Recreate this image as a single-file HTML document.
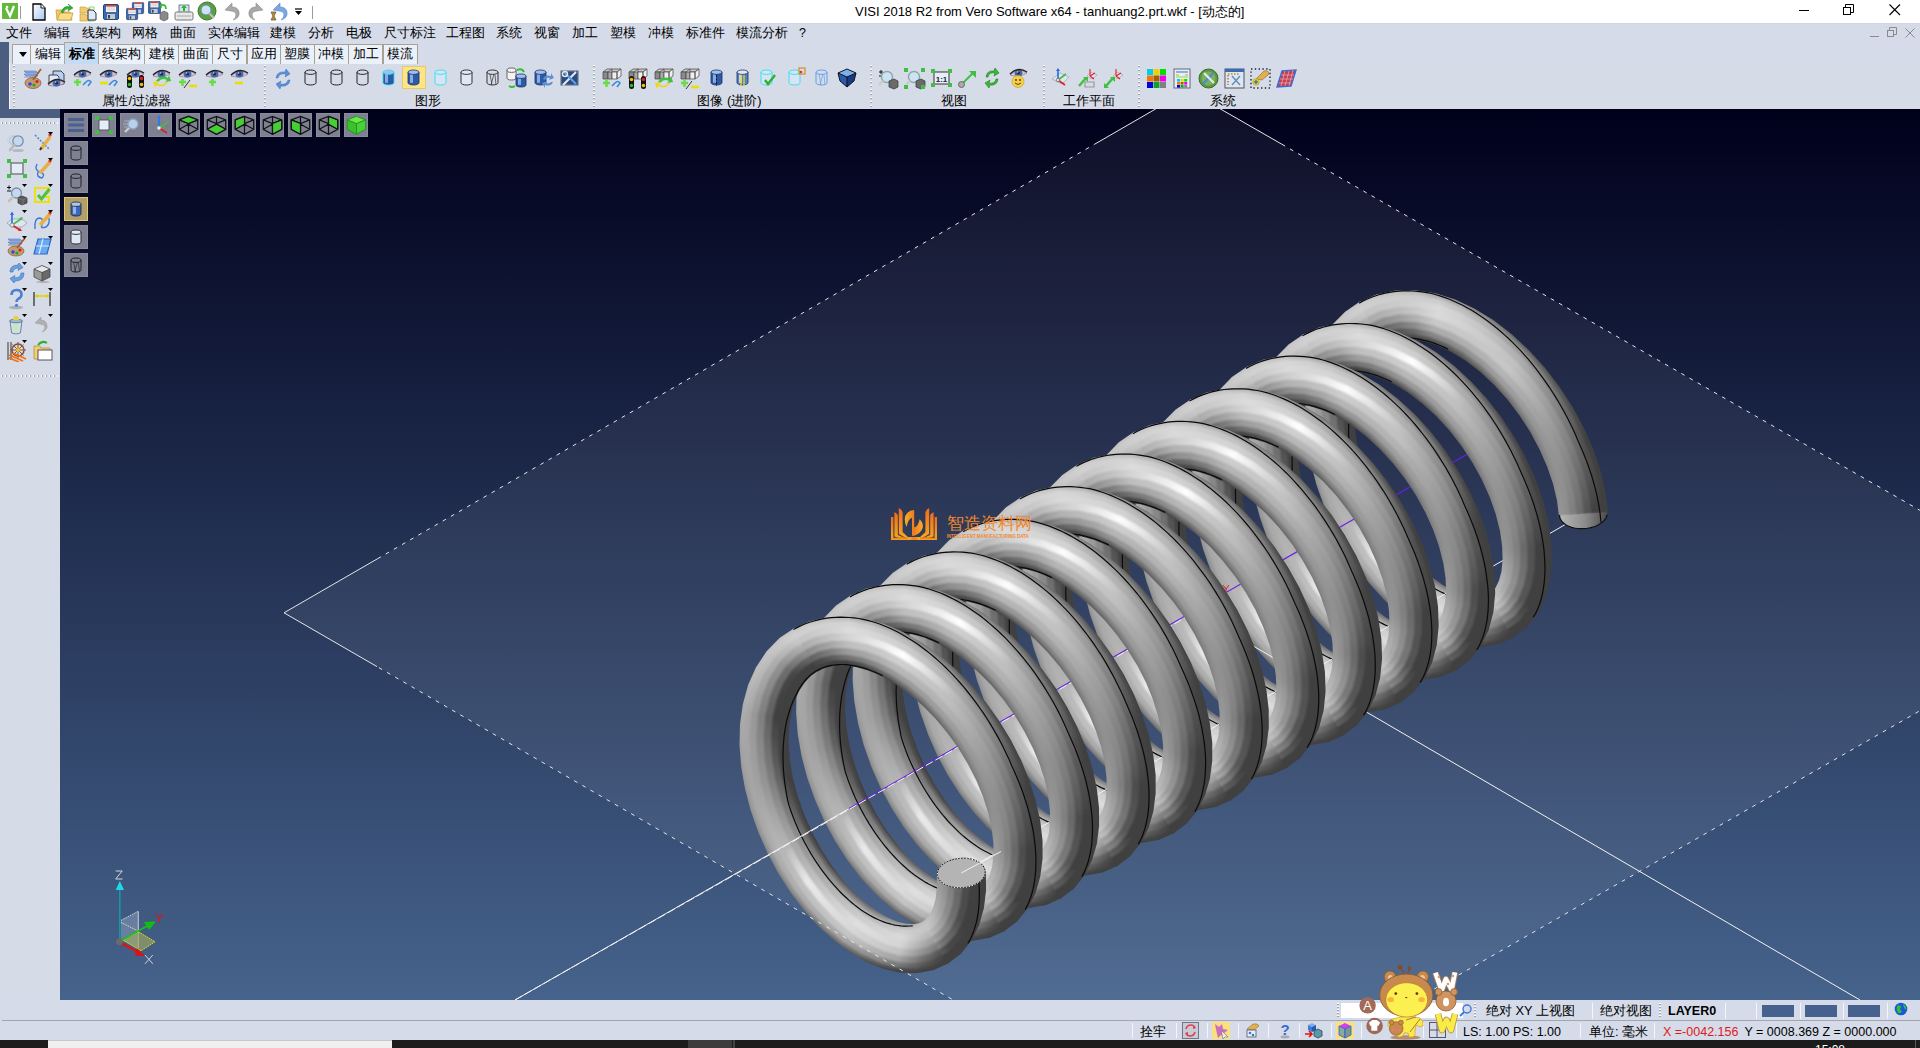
<!DOCTYPE html>
<html><head><meta charset="utf-8"><style>
*{margin:0;padding:0;box-sizing:border-box}
html,body{width:1920px;height:1048px;overflow:hidden;background:#d5dbe8;font-family:"Liberation Sans", sans-serif;font-size:12px;color:#000}
.a{position:absolute}
.t{white-space:nowrap;line-height:14px}
</style></head><body>
<div class="a" style="left:0;top:0;width:1920px;height:23px;background:#fff"></div><div class="a" style="left:0;top:23px;width:1920px;height:1px;background:#d0d6e4"></div><svg class="a" style="left:2px;top:3px" width="16" height="16" viewBox="0 0 16 16"><rect width="16" height="16" fill="#62b83a"/><path d="M4 5 L8 13 L12 3" fill="none" stroke="#fff" stroke-width="2.2"/><circle cx="5" cy="4" r="1.3" fill="#fff"/></svg><div class="a" style="left:20px;top:6px;width:1px;height:13px;background:#9a9a9a"></div><svg class="a" style="left:32px;top:3px" width="15" height="18" viewBox="0 0 15 18"><defs><linearGradient id="pg" x1="0" y1="0" x2="1" y2="1"><stop offset="0" stop-color="#fff"/><stop offset="1" stop-color="#a8c4f0"/></linearGradient></defs><path d="M1 1 H9 L13 5 V17 H1Z" fill="url(#pg)" stroke="#000" stroke-width="1.3"/><path d="M9 1 V5 H13" fill="#fff" stroke="#000" stroke-width=".9"/></svg><svg class="a" style="left:55px;top:3px" width="19" height="19" viewBox="0 0 19 19"><path d="M1 7 H7 L8 9 H15 L17 17 H2Z" fill="#f0c860" stroke="#c8a040" stroke-width=".8"/><path d="M2 17 L5 10 H18 L16 17Z" fill="#f8dc88" stroke="#c8a040" stroke-width=".8"/><path d="M6 9 Q9 2 15 4 L13 1 L18 5 L13 8 L14 6 Q10 5 8 10Z" fill="#30b030" stroke="#208020" stroke-width=".5"/></svg><svg class="a" style="left:79px;top:3px" width="19" height="19" viewBox="0 0 19 19"><path d="M1 4 H6 L7 5 H11 V10 H1Z" fill="#f0cc70" stroke="#c8a040" stroke-width=".7"/><path d="M1 11 H6 L7 12 H11 V18 H1Z" fill="#f0cc70" stroke="#c8a040" stroke-width=".7"/><path d="M10 4 h5 v14 h-5" fill="none" stroke="#60d060" stroke-width=".8"/><path d="M9 7 H14 L17 10 V17 H9Z" fill="#dde8f8" stroke="#333" stroke-width="1"/></svg><svg class="a" style="left:103px;top:4px" width="16" height="16" viewBox="0 0 16 16"><g transform="translate(0 0) scale(1.0)"><rect x=".5" y=".5" width="15" height="15" rx="1.5" fill="#3c68b0" stroke="#24467e"/><rect x="3" y="1" width="10" height="7" fill="#f4f4f4"/><rect x="3" y="1" width="10" height="1.6" fill="#e04030"/><path d="M4 4h8M4 6h8" stroke="#bbb" stroke-width=".7"/><rect x="4" y="10" width="8" height="5" fill="#c8c8c8"/><rect x="5" y="11" width="2" height="3.5" fill="#345"/></g></svg><svg class="a" style="left:126px;top:2px" width="19" height="19" viewBox="0 0 19 19"><g transform="translate(6 0) scale(0.75)"><rect x=".5" y=".5" width="15" height="15" rx="1.5" fill="#3c68b0" stroke="#24467e"/><rect x="3" y="1" width="10" height="7" fill="#f4f4f4"/><rect x="3" y="1" width="10" height="1.6" fill="#e04030"/><path d="M4 4h8M4 6h8" stroke="#bbb" stroke-width=".7"/><rect x="4" y="10" width="8" height="5" fill="#c8c8c8"/><rect x="5" y="11" width="2" height="3.5" fill="#345"/></g><g transform="translate(0 6) scale(0.75)"><rect x=".5" y=".5" width="15" height="15" rx="1.5" fill="#3c68b0" stroke="#24467e"/><rect x="3" y="1" width="10" height="7" fill="#f4f4f4"/><rect x="3" y="1" width="10" height="1.6" fill="#e04030"/><path d="M4 4h8M4 6h8" stroke="#bbb" stroke-width=".7"/><rect x="4" y="10" width="8" height="5" fill="#c8c8c8"/><rect x="5" y="11" width="2" height="3.5" fill="#345"/></g></svg><svg class="a" style="left:148px;top:1px" width="21" height="21" viewBox="0 0 21 21"><g transform="translate(0 0) scale(0.8)"><rect x=".5" y=".5" width="15" height="15" rx="1.5" fill="#3c68b0" stroke="#24467e"/><rect x="3" y="1" width="10" height="7" fill="#f4f4f4"/><rect x="3" y="1" width="10" height="1.6" fill="#e04030"/><path d="M4 4h8M4 6h8" stroke="#bbb" stroke-width=".7"/><rect x="4" y="10" width="8" height="5" fill="#c8c8c8"/><rect x="5" y="11" width="2" height="3.5" fill="#345"/></g><path d="M13 4 Q18 3 18 8" fill="none" stroke="#30c030" stroke-width="1.8"/><path d="M11 5 l3 -3 v5z" fill="#30c030"/><path d="M12 12 l4 -2 l4 2 v6 l-4 2 l-4 -2z" fill="#8a8a8a" stroke="#555" stroke-width=".6"/></svg><svg class="a" style="left:174px;top:2px" width="20" height="20" viewBox="0 0 20 20"><rect x="5" y="3" width="10" height="8" fill="#cfe0f8" stroke="#666" stroke-width=".8"/><path d="M10 3 l-3 3 h2 v3 h2 v-3 h2z" fill="#20c020"/><rect x="1" y="10" width="18" height="8" rx="1.5" fill="#e8e8e8" stroke="#666" stroke-width=".9"/><path d="M3 14 h14" stroke="#999" stroke-width=".8"/></svg><svg class="a" style="left:197px;top:1px" width="21" height="21" viewBox="0 0 21 21"><circle cx="10" cy="10" r="9" fill="#58a040" stroke="#3a7a28"/><circle cx="9" cy="9" r="5" fill="#cfe2f4" stroke="#6a8ab0" stroke-width="1"/><path d="M12.5 12.5 L17 17" stroke="#bbb" stroke-width="2.4"/></svg><svg class="a" style="left:223px;top:2px" width="19" height="19" viewBox="0 0 19 19"><path d="M9 1 L2 8 L8 9 Q12 9 13 12 Q13 16 10 18 Q17 16 16 10 Q15 5 9 5Z" fill="#a8a8a8" stroke="#888" stroke-width=".6"/></svg><svg class="a" style="left:246px;top:2px" width="19" height="19" viewBox="0 0 19 19"><path d="M10 1 L17 8 L11 9 Q7 9 6 12 Q6 16 9 18 Q2 16 3 10 Q4 5 10 5Z" fill="#a8a8a8" stroke="#888" stroke-width=".6"/></svg><svg class="a" style="left:269px;top:2px" width="20" height="20" viewBox="0 0 20 20"><path d="M11 1 L4 8 L10 9 Q14 9 15 12 Q15 16 12 18 Q19 16 18 10 Q17 5 11 5Z" fill="#7aa8e0" stroke="#5a88c8" stroke-width=".6"/><path d="M2 10 h5 l-2 4 l2 4 h-5 l2 -4z" fill="#b09040" stroke="#6a5020" stroke-width=".7"/></svg><svg class="a" style="left:294px;top:8px" width="9" height="8" viewBox="0 0 9 8"><path d="M1 1 h7" stroke="#000" stroke-width="1.2"/><path d="M1 3 h7 l-3.5 4z" fill="#000"/></svg><div class="a" style="left:312px;top:6px;width:1px;height:13px;background:#9a9a9a"></div><div class="a t" style="left:855px;top:5px;font-size:13px;color:#000;font-weight:normal;letter-spacing:0px">VISI 2018 R2 from Vero Software x64 - tanhuang2.prt.wkf - [动态的]</div><div class="a" style="left:1799px;top:10px;width:10px;height:1px;background:#000"></div><svg class="a" style="left:1843px;top:4px" width="12" height="12" viewBox="0 0 12 12"><rect x=".5" y="3.5" width="7" height="7" fill="none" stroke="#000"/><path d="M2.5 3.5 V.5 H10.5 V8.5 H7.5" fill="none" stroke="#000"/></svg><svg class="a" style="left:1889px;top:4px" width="12" height="12" viewBox="0 0 12 12"><path d="M.5 .5 L11 11 M11 .5 L.5 11" stroke="#000" stroke-width="1.1"/></svg>
<div class="a t" style="left:6px;top:25.5px;font-size:12.8px;color:#000;font-weight:normal">文件</div><div class="a t" style="left:44px;top:25.5px;font-size:12.8px;color:#000;font-weight:normal">编辑</div><div class="a t" style="left:82px;top:25.5px;font-size:12.8px;color:#000;font-weight:normal">线架构</div><div class="a t" style="left:132px;top:25.5px;font-size:12.8px;color:#000;font-weight:normal">网格</div><div class="a t" style="left:170px;top:25.5px;font-size:12.8px;color:#000;font-weight:normal">曲面</div><div class="a t" style="left:208px;top:25.5px;font-size:12.8px;color:#000;font-weight:normal">实体编辑</div><div class="a t" style="left:270px;top:25.5px;font-size:12.8px;color:#000;font-weight:normal">建模</div><div class="a t" style="left:308px;top:25.5px;font-size:12.8px;color:#000;font-weight:normal">分析</div><div class="a t" style="left:346px;top:25.5px;font-size:12.8px;color:#000;font-weight:normal">电极</div><div class="a t" style="left:384px;top:25.5px;font-size:12.8px;color:#000;font-weight:normal">尺寸标注</div><div class="a t" style="left:446px;top:25.5px;font-size:12.8px;color:#000;font-weight:normal">工程图</div><div class="a t" style="left:496px;top:25.5px;font-size:12.8px;color:#000;font-weight:normal">系统</div><div class="a t" style="left:534px;top:25.5px;font-size:12.8px;color:#000;font-weight:normal">视窗</div><div class="a t" style="left:572px;top:25.5px;font-size:12.8px;color:#000;font-weight:normal">加工</div><div class="a t" style="left:610px;top:25.5px;font-size:12.8px;color:#000;font-weight:normal">塑模</div><div class="a t" style="left:648px;top:25.5px;font-size:12.8px;color:#000;font-weight:normal">冲模</div><div class="a t" style="left:686px;top:25.5px;font-size:12.8px;color:#000;font-weight:normal">标准件</div><div class="a t" style="left:736px;top:25.5px;font-size:12.8px;color:#000;font-weight:normal">模流分析</div><div class="a t" style="left:799px;top:25.5px;font-size:12.5px;color:#000;font-weight:normal">?</div><div class="a" style="left:1870px;top:36px;width:9px;height:1px;background:#8a8a8a"></div><svg class="a" style="left:1887px;top:27px" width="11" height="11" viewBox="0 0 11 11"><rect x=".5" y="3.5" width="6" height="6" fill="none" stroke="#8a8a8a"/><path d="M2.5 3.5 V.5 H9.5 V7.5 H6.5" fill="none" stroke="#8a8a8a"/></svg><svg class="a" style="left:1905px;top:28px" width="10" height="10" viewBox="0 0 10 10"><path d="M.5 .5 L9.5 9.5 M9.5 .5 L.5 9.5" stroke="#8a8a8a" stroke-width="1"/></svg>
<div class="a" style="left:0;top:42px;width:9px;height:76px;background:#4b5e80"></div><div class="a" style="left:9px;top:108px;width:51px;height:10px;background:#4b5e80"></div><div class="a" style="left:9px;top:63px;width:1911px;height:46px;background:#d6dbe8;border-left:1px solid #f4f6fa"></div><div class="a" style="left:12px;top:44px;width:19px;height:20px;background:#eaf1fb;border:1px solid #a9a290;border-bottom:none"></div><svg class="a" style="left:19px;top:52px" width="9" height="6" viewBox="0 0 9 6"><path d="M0 0 h8 l-4 5z" fill="#000"/></svg><div class="a" style="left:30px;top:44px;width:35px;height:20px;background:#eaf1fb;border:1px solid #a9a290;border-bottom:none"></div><div class="a t" style="left:35px;top:46.5px;font-size:12.8px;color:#000;font-weight:normal">编辑</div><div class="a" style="left:64px;top:42px;width:35px;height:22px;background:#c3dbf5;border:1px solid #b0a888;border-bottom:none"></div><div class="a t" style="left:69px;top:46.5px;font-size:12.8px;color:#000;font-weight:bold">标准</div><div class="a" style="left:98px;top:44px;width:47px;height:20px;background:#eaf1fb;border:1px solid #a9a290;border-bottom:none"></div><div class="a t" style="left:102px;top:46.5px;font-size:12.8px;color:#000;font-weight:normal">线架构</div><div class="a" style="left:144px;top:44px;width:35px;height:20px;background:#eaf1fb;border:1px solid #a9a290;border-bottom:none"></div><div class="a t" style="left:149px;top:46.5px;font-size:12.8px;color:#000;font-weight:normal">建模</div><div class="a" style="left:178px;top:44px;width:35px;height:20px;background:#eaf1fb;border:1px solid #a9a290;border-bottom:none"></div><div class="a t" style="left:183px;top:46.5px;font-size:12.8px;color:#000;font-weight:normal">曲面</div><div class="a" style="left:212px;top:44px;width:35px;height:20px;background:#eaf1fb;border:1px solid #a9a290;border-bottom:none"></div><div class="a t" style="left:217px;top:46.5px;font-size:12.8px;color:#000;font-weight:normal">尺寸</div><div class="a" style="left:247px;top:44px;width:35px;height:20px;background:#eaf1fb;border:1px solid #a9a290;border-bottom:none"></div><div class="a t" style="left:251px;top:46.5px;font-size:12.8px;color:#000;font-weight:normal">应用</div><div class="a" style="left:280px;top:44px;width:35px;height:20px;background:#eaf1fb;border:1px solid #a9a290;border-bottom:none"></div><div class="a t" style="left:284px;top:46.5px;font-size:12.8px;color:#000;font-weight:normal">塑膜</div><div class="a" style="left:314px;top:44px;width:35px;height:20px;background:#eaf1fb;border:1px solid #a9a290;border-bottom:none"></div><div class="a t" style="left:318px;top:46.5px;font-size:12.8px;color:#000;font-weight:normal">冲模</div><div class="a" style="left:348px;top:44px;width:35px;height:20px;background:#eaf1fb;border:1px solid #a9a290;border-bottom:none"></div><div class="a t" style="left:353px;top:46.5px;font-size:12.8px;color:#000;font-weight:normal">加工</div><div class="a" style="left:383px;top:44px;width:35px;height:20px;background:#eaf1fb;border:1px solid #a9a290;border-bottom:none"></div><div class="a t" style="left:387px;top:46.5px;font-size:12.8px;color:#000;font-weight:normal">模流</div><div class="a" style="left:13px;top:65px;width:2px;height:43px;background:repeating-linear-gradient(#fff 0 1px,#9aa0ae 1px 2px,transparent 2px 4px)"></div><div class="a" style="left:264px;top:65px;width:2px;height:43px;background:repeating-linear-gradient(#fff 0 1px,#9aa0ae 1px 2px,transparent 2px 4px)"></div><div class="a" style="left:593px;top:65px;width:2px;height:43px;background:repeating-linear-gradient(#fff 0 1px,#9aa0ae 1px 2px,transparent 2px 4px)"></div><div class="a" style="left:870px;top:65px;width:2px;height:43px;background:repeating-linear-gradient(#fff 0 1px,#9aa0ae 1px 2px,transparent 2px 4px)"></div><div class="a" style="left:1043px;top:65px;width:2px;height:43px;background:repeating-linear-gradient(#fff 0 1px,#9aa0ae 1px 2px,transparent 2px 4px)"></div><div class="a" style="left:1138px;top:65px;width:2px;height:43px;background:repeating-linear-gradient(#fff 0 1px,#9aa0ae 1px 2px,transparent 2px 4px)"></div><div class="a t" style="left:76.69999999999999px;top:94px;width:120px;text-align:center;font-size:12.8px">属性/过滤器</div><div class="a t" style="left:367.7px;top:94px;width:120px;text-align:center;font-size:12.8px">图形</div><div class="a t" style="left:669.4px;top:94px;width:120px;text-align:center;font-size:12.8px">图像 (进阶)</div><div class="a t" style="left:894px;top:94px;width:120px;text-align:center;font-size:12.8px">视图</div><div class="a t" style="left:1028.5px;top:94px;width:120px;text-align:center;font-size:12.8px">工作平面</div><div class="a t" style="left:1162.7px;top:94px;width:120px;text-align:center;font-size:12.8px">系统</div><svg class="a" style="left:22px;top:68px" width="22" height="22" viewBox="0 0 22 22"><path d="M2 3 h12 l2 2 h-12z M2 6 h12 l2 2 h-12z M2 9 h12" fill="#8aa8e8" stroke="#5a78b8" stroke-width=".6"/><ellipse cx="11" cy="15" rx="8" ry="5.5" fill="#c89870" stroke="#7a5a3a" stroke-width=".7"/><circle cx="8" cy="16" r="1.8" fill="#2050e0"/><circle cx="12" cy="17" r="1.6" fill="#10b020"/><circle cx="15" cy="13.5" r="1.6" fill="#d02020"/><path d="M19 1 L11 12" stroke="#a06030" stroke-width="1.8"/></svg><svg class="a" style="left:46px;top:68px" width="22" height="22" viewBox="0 0 22 22"><path d="M7 3 h8 l3 3 v10 h-11z" fill="#b8d0f4" stroke="#333" stroke-width=".9"/><path d="M3 7 h8 l2 2 v8 h-10z" fill="#dfe8f8" stroke="#333" stroke-width=".9"/><g transform="translate(1 9)"><path d="M1 8 Q9 0 18 6 Q10 11 1 8Z" fill="#d8c8d8" stroke="#8a6a8a" stroke-width=".6"/><ellipse cx="9.5" cy="6" rx="4" ry="3.6" fill="#4a6aa8"/><circle cx="9.5" cy="6" r="1.6" fill="#1a2a50"/><circle cx="8.6" cy="5" r=".8" fill="#cde"/><path d="M1 7 Q9 -1 18 5" fill="none" stroke="#222" stroke-width="1.4"/></g></svg><svg class="a" style="left:73px;top:68px" width="22" height="22" viewBox="0 0 22 22"><g transform="translate(0 0)"><path d="M1 8 Q9 0 18 6 Q10 11 1 8Z" fill="#d8c8d8" stroke="#8a6a8a" stroke-width=".6"/><ellipse cx="9.5" cy="6" rx="4" ry="3.6" fill="#4a6aa8"/><circle cx="9.5" cy="6" r="1.6" fill="#1a2a50"/><circle cx="8.6" cy="5" r=".8" fill="#cde"/><path d="M1 7 Q9 -1 18 5" fill="none" stroke="#222" stroke-width="1.4"/></g><path d="M1 14h7M4.5 11v7" stroke="#66dd44" stroke-width="2.4"/><path d="M10 17 L13 14 Q16 11 18 14 L15 18" fill="none" stroke="#3a8ad8" stroke-width="1.6"/></svg><svg class="a" style="left:99px;top:68px" width="22" height="22" viewBox="0 0 22 22"><g transform="translate(0 0)"><path d="M1 8 Q9 0 18 6 Q10 11 1 8Z" fill="#d8c8d8" stroke="#8a6a8a" stroke-width=".6"/><ellipse cx="9.5" cy="6" rx="4" ry="3.6" fill="#4a6aa8"/><circle cx="9.5" cy="6" r="1.6" fill="#1a2a50"/><circle cx="8.6" cy="5" r=".8" fill="#cde"/><path d="M1 7 Q9 -1 18 5" fill="none" stroke="#222" stroke-width="1.4"/></g><path d="M1 15h8" stroke="#e8e000" stroke-width="2.6"/><path d="M10 17 L13 14 Q16 11 18 14 L15 18" fill="none" stroke="#3a8ad8" stroke-width="1.6"/></svg><svg class="a" style="left:126px;top:68px" width="22" height="22" viewBox="0 0 22 22"><g transform="translate(0 0)"><path d="M1 8 Q9 0 18 6 Q10 11 1 8Z" fill="#d8c8d8" stroke="#8a6a8a" stroke-width=".6"/><ellipse cx="9.5" cy="6" rx="4" ry="3.6" fill="#4a6aa8"/><circle cx="9.5" cy="6" r="1.6" fill="#1a2a50"/><circle cx="8.6" cy="5" r=".8" fill="#cde"/><path d="M1 7 Q9 -1 18 5" fill="none" stroke="#222" stroke-width="1.4"/></g><rect x="1" y="7" width="5" height="13" rx="2.5" fill="#111"/><rect x="13" y="7" width="5" height="13" rx="2.5" fill="#111"/><circle cx="3.5" cy="10.5" r="1.8" fill="#f0c000"/><circle cx="3.5" cy="16.5" r="1.8" fill="#20c020"/><circle cx="15.5" cy="10.5" r="1.8" fill="#e02020"/><circle cx="15.5" cy="16.5" r="1.8" fill="#f0c000"/></svg><svg class="a" style="left:152px;top:68px" width="22" height="22" viewBox="0 0 22 22"><g transform="translate(0 0)"><path d="M1 8 Q9 0 18 6 Q10 11 1 8Z" fill="#d8c8d8" stroke="#8a6a8a" stroke-width=".6"/><ellipse cx="9.5" cy="6" rx="4" ry="3.6" fill="#4a6aa8"/><circle cx="9.5" cy="6" r="1.6" fill="#1a2a50"/><circle cx="8.6" cy="5" r=".8" fill="#cde"/><path d="M1 7 Q9 -1 18 5" fill="none" stroke="#222" stroke-width="1.4"/></g><path d="M4 13 Q9 6 16 10 l1 -3 l2 6 l-6 1 l2 -2 Q10 9 6 14z" fill="#40c040"/><path d="M16 14 Q11 21 4 17 l-1 3 l-2 -6 l6 -1 l-2 2 Q10 19 14 14z" fill="#e8d820"/></svg><svg class="a" style="left:178px;top:68px" width="22" height="22" viewBox="0 0 22 22"><g transform="translate(0 0)"><path d="M1 8 Q9 0 18 6 Q10 11 1 8Z" fill="#d8c8d8" stroke="#8a6a8a" stroke-width=".6"/><ellipse cx="9.5" cy="6" rx="4" ry="3.6" fill="#4a6aa8"/><circle cx="9.5" cy="6" r="1.6" fill="#1a2a50"/><circle cx="8.6" cy="5" r=".8" fill="#cde"/><path d="M1 7 Q9 -1 18 5" fill="none" stroke="#222" stroke-width="1.4"/></g><path d="M1 14h7M4.5 11v7" stroke="#66dd44" stroke-width="2.4"/><path d="M6 20 L12 12" stroke="#333" stroke-width="1"/><path d="M11 18h8" stroke="#e8e000" stroke-width="2.6"/></svg><svg class="a" style="left:205px;top:68px" width="22" height="22" viewBox="0 0 22 22"><g transform="translate(0 0)"><path d="M1 8 Q9 0 18 6 Q10 11 1 8Z" fill="#d8c8d8" stroke="#8a6a8a" stroke-width=".6"/><ellipse cx="9.5" cy="6" rx="4" ry="3.6" fill="#4a6aa8"/><circle cx="9.5" cy="6" r="1.6" fill="#1a2a50"/><circle cx="8.6" cy="5" r=".8" fill="#cde"/><path d="M1 7 Q9 -1 18 5" fill="none" stroke="#222" stroke-width="1.4"/></g><path d="M4 14h7M7.5 11v7" stroke="#66dd44" stroke-width="2.4"/></svg><svg class="a" style="left:230px;top:68px" width="22" height="22" viewBox="0 0 22 22"><g transform="translate(0 0)"><path d="M1 8 Q9 0 18 6 Q10 11 1 8Z" fill="#d8c8d8" stroke="#8a6a8a" stroke-width=".6"/><ellipse cx="9.5" cy="6" rx="4" ry="3.6" fill="#4a6aa8"/><circle cx="9.5" cy="6" r="1.6" fill="#1a2a50"/><circle cx="8.6" cy="5" r=".8" fill="#cde"/><path d="M1 7 Q9 -1 18 5" fill="none" stroke="#222" stroke-width="1.4"/></g><path d="M5 15h8" stroke="#e8e000" stroke-width="2.6"/></svg><svg class="a" style="left:273px;top:69px" width="20" height="20" viewBox="0 0 20 20"><path d="M3 9 Q4 2 12 3 l1 -3 l4 5 l-5 3 l1 -3 Q6 4 5 9z M17 11 Q16 18 8 17 l-1 3 l-4 -5 l5 -3 l-1 3 Q14 16 15 11z" fill="#5a90d8" stroke="#3a70b8" stroke-width=".5"/></svg><svg class="a" style="left:304px;top:69px" width="13" height="19" viewBox="0 0 13 19"><path d="M1 3.2 v10.6 a5.5 2.2 0 0 0 11 0 v-10.6" fill="none" stroke="#222" stroke-width="1"/><ellipse cx="6.5" cy="3.2" rx="5.5" ry="2.2" fill="none" stroke="#222" stroke-width="1"/></svg><svg class="a" style="left:330px;top:69px" width="13" height="19" viewBox="0 0 13 19"><path d="M1 3.2 v10.6 a5.5 2.2 0 0 0 11 0 v-10.6" fill="none" stroke="#222" stroke-width="1"/><ellipse cx="6.5" cy="3.2" rx="5.5" ry="2.2" fill="none" stroke="#222" stroke-width="1"/></svg><svg class="a" style="left:356px;top:69px" width="13" height="19" viewBox="0 0 13 19"><path d="M1 3.2 v10.6 a5.5 2.2 0 0 0 11 0 v-10.6" fill="none" stroke="#222" stroke-width="1"/><ellipse cx="6.5" cy="3.2" rx="5.5" ry="2.2" fill="none" stroke="#222" stroke-width="1"/></svg><svg class="a" style="left:382px;top:69px" width="14" height="19" viewBox="0 0 14 19"><defs></defs><path d="M1 3.2 v10.6 a5.5 2.2 0 0 0 11 0 v-10.6Z" fill="#2d5aa8" stroke="#30e0f0" stroke-width=".8"/><rect x="3" y="4.2" width="3" height="9.6" fill="#9cc0f0" opacity=".8"/><ellipse cx="6.5" cy="3.2" rx="5.5" ry="2.2" fill="#9cc0f0" stroke="#30e0f0" stroke-width=".8"/></svg><div class="a" style="left:402px;top:66px;width:24px;height:23px;background:#fbe48a;border:1px solid #e8c860"></div><svg class="a" style="left:407px;top:69px" width="14" height="19" viewBox="0 0 14 19"><defs></defs><path d="M1 3.2 v10.6 a5.5 2.2 0 0 0 11 0 v-10.6Z" fill="#2d5aa8" stroke="#1a2f60" stroke-width=".8"/><rect x="3" y="4.2" width="3" height="9.6" fill="#9cc0f0" opacity=".8"/><ellipse cx="6.5" cy="3.2" rx="5.5" ry="2.2" fill="#9cc0f0" stroke="#1a2f60" stroke-width=".8"/></svg><svg class="a" style="left:434px;top:69px" width="14" height="19" viewBox="0 0 14 19"><path d="M1 3.2 v10.6 a5.5 2.2 0 0 0 11 0 v-10.6" fill="#d8e4f4" stroke="#38e0f0" stroke-width="1"/><ellipse cx="6.5" cy="3.2" rx="5.5" ry="2.2" fill="#d8e4f4" stroke="#38e0f0" stroke-width="1"/></svg><svg class="a" style="left:460px;top:69px" width="14" height="19" viewBox="0 0 14 19"><path d="M1 3.2 v10.6 a5.5 2.2 0 0 0 11 0 v-10.6" fill="#dde8f8" stroke="#333" stroke-width="1"/><ellipse cx="6.5" cy="3.2" rx="5.5" ry="2.2" fill="#dde8f8" stroke="#333" stroke-width="1"/></svg><svg class="a" style="left:486px;top:69px" width="14" height="19" viewBox="0 0 14 19"><path d="M1 3.2 v10.6 a5.5 2.2 0 0 0 11 0 v-10.6" fill="none" stroke="#333" stroke-width="1"/><ellipse cx="6.5" cy="3.2" rx="5.5" ry="2.2" fill="none" stroke="#333" stroke-width="1"/><path d="M4 5 L6 16 M8 5 L5 16 M9 6 L10 16" stroke="#333" stroke-width=".7"/></svg><svg class="a" style="left:506px;top:67px" width="22" height="22" viewBox="0 0 22 22"><path d="M1 3.2 v7.6 a4.5 2.2 0 0 0 9 0 v-7.6" fill="#f4f4f4" stroke="#555" stroke-width="0.9"/><ellipse cx="5.5" cy="3.2" rx="4.5" ry="2.2" fill="#f4f4f4" stroke="#555" stroke-width="0.9"/><g transform="translate(9 6)"><defs></defs><path d="M1 3.2 v8.6 a5.0 2.2 0 0 0 10 0 v-8.6Z" fill="#2d5aa8" stroke="#1a2f60" stroke-width=".8"/><rect x="3" y="4.2" width="3" height="7.6" fill="#9cc0f0" opacity=".8"/><ellipse cx="6.0" cy="3.2" rx="5.0" ry="2.2" fill="#9cc0f0" stroke="#1a2f60" stroke-width=".8"/></g><path d="M11 3 Q16 1 18 5" stroke="#30c030" stroke-width="2" fill="none"/><path d="M3 19 Q6 21 9 19" stroke="#30c030" stroke-width="2" fill="none"/></svg><svg class="a" style="left:533px;top:68px" width="22" height="21" viewBox="0 0 22 21"><g transform="translate(1 1)"><defs></defs><path d="M1 3.2 v10.6 a5.5 2.2 0 0 0 11 0 v-10.6Z" fill="#2d5aa8" stroke="#1a2f60" stroke-width=".8"/><rect x="3" y="4.2" width="3" height="9.6" fill="#9cc0f0" opacity=".8"/><ellipse cx="6.5" cy="3.2" rx="5.5" ry="2.2" fill="#9cc0f0" stroke="#1a2f60" stroke-width=".8"/></g><path d="M10 11 Q12 6 18 8 l0 -3 l3 5 l-5 2 l1 -2 Q13 9 12 12z M20 14 Q18 19 12 17 l0 3 l-3 -5 l5 -2 l-1 2 Q17 16 18 14z" fill="#5a90d8"/></svg><svg class="a" style="left:559px;top:68px" width="22" height="21" viewBox="0 0 22 21"><rect x="2" y="3" width="17" height="14" fill="#2a4a80" stroke="#6a7a90" stroke-width="1.2"/><path d="M4 17 L17 4" stroke="#e8e8e8" stroke-width="2.2"/><path d="M5 4 L17 16" stroke="#5aa0e8" stroke-width="2.2"/><circle cx="6" cy="6" r="2.5" fill="none" stroke="#e8e8e8" stroke-width="1.4"/></svg><svg class="a" style="left:602px;top:68px" width="22" height="22" viewBox="0 0 22 22"><path d="M1 4 l4 -3 h5 l-4 3z M10 1 l4 -0 l5 0 l-4 3 h-5z" fill="#c8c8c8" stroke="#444" stroke-width=".7"/><path d="M1 4 h5 v7 h-5z" fill="#8a8a8a" stroke="#444" stroke-width=".7"/><path d="M6 4 h4 v7 h-4z" fill="#aaa" stroke="#444" stroke-width=".7"/><path d="M10 4 h5 v7 h-5z M15 4 l4 -3 v7 l-4 3z" fill="#f0f0f0" stroke="#444" stroke-width=".7"/><path d="M1 15h7M4.5 12v7" stroke="#66dd44" stroke-width="2.4"/><path d="M10 18 L13 15 Q16 12 18 15 L15 19" fill="none" stroke="#3a8ad8" stroke-width="1.6"/></svg><svg class="a" style="left:628px;top:68px" width="22" height="22" viewBox="0 0 22 22"><path d="M1 4 l4 -3 h5 l-4 3z M10 1 l4 -0 l5 0 l-4 3 h-5z" fill="#c8c8c8" stroke="#444" stroke-width=".7"/><path d="M1 4 h5 v7 h-5z" fill="#8a8a8a" stroke="#444" stroke-width=".7"/><path d="M6 4 h4 v7 h-4z" fill="#aaa" stroke="#444" stroke-width=".7"/><path d="M10 4 h5 v7 h-5z M15 4 l4 -3 v7 l-4 3z" fill="#f0f0f0" stroke="#444" stroke-width=".7"/><rect x="1" y="8" width="5" height="13" rx="2.5" fill="#111"/><circle cx="3.5" cy="11.5" r="1.8" fill="#f0c000"/><circle cx="3.5" cy="17.5" r="1.8" fill="#20c020"/><rect x="13" y="8" width="5" height="13" rx="2.5" fill="#111"/><circle cx="15.5" cy="11.5" r="1.8" fill="#e02020"/><circle cx="15.5" cy="17.5" r="1.8" fill="#f0c000"/></svg><svg class="a" style="left:654px;top:68px" width="22" height="22" viewBox="0 0 22 22"><path d="M1 4 l4 -3 h5 l-4 3z M10 1 l4 -0 l5 0 l-4 3 h-5z" fill="#c8c8c8" stroke="#444" stroke-width=".7"/><path d="M1 4 h5 v7 h-5z" fill="#8a8a8a" stroke="#444" stroke-width=".7"/><path d="M6 4 h4 v7 h-4z" fill="#aaa" stroke="#444" stroke-width=".7"/><path d="M10 4 h5 v7 h-5z M15 4 l4 -3 v7 l-4 3z" fill="#f0f0f0" stroke="#444" stroke-width=".7"/><path d="M4 14 Q9 7 16 11 l1 -3 l2 6 l-6 1 l2 -2 Q10 10 6 15z" fill="#40c040"/><path d="M16 15 Q11 22 4 18 l-1 3 l-2 -6 l6 -1 l-2 2 Q10 20 14 15z" fill="#e8d820"/></svg><svg class="a" style="left:680px;top:68px" width="22" height="22" viewBox="0 0 22 22"><path d="M1 4 l4 -3 h5 l-4 3z M10 1 l4 -0 l5 0 l-4 3 h-5z" fill="#c8c8c8" stroke="#444" stroke-width=".7"/><path d="M1 4 h5 v7 h-5z" fill="#8a8a8a" stroke="#444" stroke-width=".7"/><path d="M6 4 h4 v7 h-4z" fill="#aaa" stroke="#444" stroke-width=".7"/><path d="M10 4 h5 v7 h-5z M15 4 l4 -3 v7 l-4 3z" fill="#f0f0f0" stroke="#444" stroke-width=".7"/><path d="M1 15h7M4.5 12v7" stroke="#66dd44" stroke-width="2.4"/><path d="M6 21 L12 13" stroke="#333" stroke-width="1"/><path d="M11 19h8" stroke="#e8e000" stroke-width="2.6"/></svg><svg class="a" style="left:710px;top:69px" width="14" height="19" viewBox="0 0 14 19"><defs></defs><path d="M1 3.2 v10.6 a5.5 2.2 0 0 0 11 0 v-10.6Z" fill="#2d5aa8" stroke="#1a2f60" stroke-width=".8"/><rect x="3" y="4.2" width="3" height="9.6" fill="#9cc0f0" opacity=".8"/><ellipse cx="6.5" cy="3.2" rx="5.5" ry="2.2" fill="#9cc0f0" stroke="#1a2f60" stroke-width=".8"/><path d="M6.5 6 v11" stroke="#111" stroke-width="1" stroke-dasharray="2 1.5"/></svg><svg class="a" style="left:736px;top:69px" width="14" height="19" viewBox="0 0 14 19"><defs></defs><path d="M1 3.2 v10.6 a5.5 2.2 0 0 0 11 0 v-10.6Z" fill="#5a80c0" stroke="#1a2f60" stroke-width=".8"/><rect x="3" y="4.2" width="3" height="9.6" fill="#dde8f8" opacity=".8"/><ellipse cx="6.5" cy="3.2" rx="5.5" ry="2.2" fill="#dde8f8" stroke="#1a2f60" stroke-width=".8"/><path d="M5 6 v11 M8 6 v11" stroke="#e8e020" stroke-width="1.2"/></svg><svg class="a" style="left:760px;top:69px" width="20" height="20" viewBox="0 0 20 20"><path d="M1 3.2 v10.6 a5.5 2.2 0 0 0 11 0 v-10.6" fill="#d8e4f4" stroke="#38e0f0" stroke-width="1"/><ellipse cx="6.5" cy="3.2" rx="5.5" ry="2.2" fill="#d8e4f4" stroke="#38e0f0" stroke-width="1"/><path d="M5 11 l3 4 l7 -9" stroke="#30b030" stroke-width="2.4" fill="none"/></svg><svg class="a" style="left:786px;top:67px" width="20" height="22" viewBox="0 0 20 22"><g transform="translate(2 2)"><path d="M1 3.2 v10.6 a5.5 2.2 0 0 0 11 0 v-10.6" fill="#d8e4f4" stroke="#38e0f0" stroke-width="1"/><ellipse cx="6.5" cy="3.2" rx="5.5" ry="2.2" fill="#d8e4f4" stroke="#38e0f0" stroke-width="1"/></g><rect x="13" y="1" width="6" height="6" fill="none" stroke="#d09020" stroke-width="1.2"/><circle cx="15" cy="5" r="1.3" fill="#e03030"/></svg><svg class="a" style="left:815px;top:69px" width="14" height="19" viewBox="0 0 14 19"><path d="M1 3.2 v10.6 a5.5 2.2 0 0 0 11 0 v-10.6" fill="none" stroke="#5aa0e8" stroke-width="1"/><ellipse cx="6.5" cy="3.2" rx="5.5" ry="2.2" fill="none" stroke="#5aa0e8" stroke-width="1"/><path d="M4 5 L6 16 M8 5 L5 16 M9 6 L10 16" stroke="#5aa0e8" stroke-width=".7"/></svg><svg class="a" style="left:837px;top:68px" width="20" height="20" viewBox="0 0 20 20"><path d="M1 5 L10 1 L19 5 L10 9Z" fill="#7ab0f0"/><path d="M1 5 L10 9 V19 L3 13Z" fill="#2a5ab0"/><path d="M19 5 L10 9 V19 L17 13Z" fill="#1a3a80"/><path d="M1 5 L10 1 L19 5 L17 13 L10 19 L3 13Z M1 5 L10 9 L19 5 M10 9 V19" fill="none" stroke="#111" stroke-width="1"/></svg><svg class="a" style="left:877px;top:68px" width="22" height="22" viewBox="0 0 22 22"><path d="M2 4 h4 M4 2 v4 M2 8 h4" stroke="#000" stroke-width=".9"/><circle cx="10" cy="9" r="5.5" fill="#cfe2f4" stroke="#8aa" stroke-width="1.4"/><path d="M6 13 L2 17" stroke="#ccc" stroke-width="2.5"/><path d="M12 13 l5 -2 l4 2 v6 l-4 2 l-5 -2z" fill="#6a6a6a" stroke="#333" stroke-width=".7"/></svg><svg class="a" style="left:904px;top:68px" width="22" height="22" viewBox="0 0 22 22"><circle cx="10" cy="9" r="5.5" fill="#cfe2f4" stroke="#8aa" stroke-width="1.4"/><path d="M6 13 L2 17" stroke="#ccc" stroke-width="2.5"/><path d="M12 13 l5 -2 l4 2 v6 l-4 2 l-5 -2z" fill="#6a6a6a" stroke="#333" stroke-width=".7"/><g fill="#40c040"><rect x="0" y="0" width="4" height="4"/><rect x="17" y="0" width="4" height="4"/><rect x="0" y="17" width="4" height="4"/><rect x="17" y="17" width="4" height="4"/></g></svg><svg class="a" style="left:931px;top:68px" width="21" height="21" viewBox="0 0 21 21"><rect x="3" y="4" width="15" height="12" fill="#e8eef8" stroke="#333" stroke-width="1"/><text x="10.5" y="13.5" font-size="8" text-anchor="middle" fill="#223" font-family="Liberation Sans" font-weight="bold">1:1</text><g fill="#40c040"><rect x="0" y="1" width="4" height="4"/><rect x="17" y="1" width="4" height="4"/><rect x="0" y="15" width="4" height="4"/><rect x="17" y="15" width="4" height="4"/></g></svg><svg class="a" style="left:957px;top:68px" width="21" height="21" viewBox="0 0 21 21"><path d="M5 16 L17 4" stroke="#40c040" stroke-width="2"/><path d="M12 3 h7 v7z" fill="#40c040"/><circle cx="4.5" cy="16.5" r="3" fill="#aaa" stroke="#555" stroke-width=".8"/></svg><svg class="a" style="left:982px;top:68px" width="21" height="21" viewBox="0 0 21 21"><path d="M4 9 Q5 2 12 3 l1 -3 l4 5 l-5 3 l1 -3 Q7 4 6 9z M16 11 Q15 18 8 17 l-1 3 l-4 -5 l5 -3 l-1 3 Q13 16 14 11z" fill="#38b838" stroke="#208020" stroke-width=".6"/></svg><svg class="a" style="left:1008px;top:67px" width="21" height="22" viewBox="0 0 21 22"><g transform="translate(1 0)"><path d="M1 8 Q9 0 18 6 Q10 11 1 8Z" fill="#d8c8d8" stroke="#8a6a8a" stroke-width=".6"/><ellipse cx="9.5" cy="6" rx="4" ry="3.6" fill="#4a6aa8"/><circle cx="9.5" cy="6" r="1.6" fill="#1a2a50"/><circle cx="8.6" cy="5" r=".8" fill="#cde"/><path d="M1 7 Q9 -1 18 5" fill="none" stroke="#222" stroke-width="1.4"/></g><circle cx="10" cy="14.5" r="6" fill="#f8d040" stroke="#c0a020" stroke-width=".6"/><circle cx="8" cy="13" r=".9" fill="#333"/><circle cx="12" cy="13" r=".9" fill="#333"/><path d="M7 16 Q10 19 13 16" stroke="#333" fill="none" stroke-width=".9"/></svg><svg class="a" style="left:1050px;top:67px" width="22" height="22" viewBox="0 0 22 22"><path d="M2 12 L10 6 L19 10 L12 17z" fill="#dde6f4" stroke="#999" stroke-width=".6"/><path d="M8 13 V3" stroke="#2a6ae0" stroke-width="1.6"/><path d="M6 4 l2 -3 l2 3z" fill="#2a6ae0"/><path d="M8 13 L16 7" stroke="#40c040" stroke-width="1.6"/><path d="M8 13 L15 18" stroke="#e02020" stroke-width="1.6"/><circle cx="8" cy="13" r="1.8" fill="#ddd" stroke="#555" stroke-width=".6"/></svg><svg class="a" style="left:1077px;top:67px" width="22" height="22" viewBox="0 0 22 22"><path d="M10 9 L14 5 L20 8 L15 12z" fill="#dde6f4" stroke="#999" stroke-width=".6"/><path d="M13 9 V2 M13 9 L18 6 M13 9 L17 12" stroke="#e02020" stroke-width="1.1"/><path d="M2 19 L9 11" stroke="#40c040" stroke-width="2.4"/><path d="M6 10 h5 v5z" fill="#40c040"/><path d="M8 15 h9 v5 h-9z" fill="none" stroke="#999" stroke-width="1.2"/></svg><svg class="a" style="left:1103px;top:67px" width="22" height="22" viewBox="0 0 22 22"><path d="M10 9 L14 5 L20 8 L15 12z" fill="#dde6f4" stroke="#999" stroke-width=".6"/><path d="M13 9 V2 M13 9 L18 6 M13 9 L17 12" stroke="#e02020" stroke-width="1.1"/><path d="M3 19 L10 11" stroke="#40c040" stroke-width="2.6"/><path d="M7 10 h5 v5z M1 16 v5 h5z" fill="#40c040"/></svg><svg class="a" style="left:1146px;top:68px" width="21" height="21" viewBox="0 0 21 21"><rect x="1.0" y="1.0" width="6" height="6" fill="#00ccf0"/><rect x="7.5" y="1.0" width="6" height="6" fill="#f0d000"/><rect x="14.0" y="1.0" width="6" height="6" fill="#00e000"/><rect x="1.0" y="7.5" width="6" height="6" fill="#f07800"/><rect x="7.5" y="7.5" width="6" height="6" fill="#a06000"/><rect x="14.0" y="7.5" width="6" height="6" fill="#f000f0"/><rect x="1.0" y="14.0" width="6" height="6" fill="#0000e0"/><rect x="7.5" y="14.0" width="6" height="6" fill="#10a030"/><rect x="14.0" y="14.0" width="6" height="6" fill="#808080"/></svg><svg class="a" style="left:1172px;top:68px" width="21" height="21" viewBox="0 0 21 21"><rect x="2" y="1" width="16" height="19" fill="#e8eef8" stroke="#667" stroke-width="1"/><rect x="4" y="3" width="12" height="2" fill="#8ab0e0"/><path d="M4 7 h3 M13 7 h3" stroke="#f0a000" stroke-width="1"/><path d="M4 9 h12" stroke="#80e040" stroke-width="1"/><rect x="5.0" y="11" width="3" height="2.6" fill="#00ccf0"/><rect x="8.6" y="11" width="3" height="2.6" fill="#f0d000"/><rect x="12.2" y="11" width="3" height="2.6" fill="#00e000"/><rect x="5.0" y="14" width="3" height="2.6" fill="#f07800"/><rect x="8.6" y="14" width="3" height="2.6" fill="#a06000"/><rect x="12.2" y="14" width="3" height="2.6" fill="#f000f0"/><rect x="5.0" y="17" width="3" height="2.6" fill="#0000e0"/><rect x="8.6" y="17" width="3" height="2.6" fill="#10a030"/><rect x="12.2" y="17" width="3" height="2.6" fill="#808080"/></svg><svg class="a" style="left:1198px;top:68px" width="21" height="21" viewBox="0 0 21 21"><circle cx="10.5" cy="10.5" r="9.5" fill="#5a9a40" stroke="#3a6a28"/><circle cx="10.5" cy="10.5" r="7" fill="#7ab060"/><path d="M5 16 L15 5" stroke="#4a8ad8" stroke-width="2.2"/><path d="M6 5 L16 15" stroke="#e8e8e8" stroke-width="2.2"/></svg><svg class="a" style="left:1224px;top:68px" width="21" height="21" viewBox="0 0 21 21"><rect x="1" y="1" width="19" height="19" fill="#dce6f4" stroke="#555" stroke-width="1"/><rect x="1" y="1" width="19" height="3" fill="#3a6ab8"/><path d="M4 6 h12" stroke="#b0a000" stroke-width="1.3" stroke-dasharray="1.5 1.5"/><path d="M4 7 v10" stroke="#c06020" stroke-width="1.3" stroke-dasharray="1.5 1.5"/><path d="M8 17 L16 8 M8 8 L16 17" stroke="#6a8ab0" stroke-width="1.4"/></svg><svg class="a" style="left:1250px;top:68px" width="21" height="21" viewBox="0 0 21 21"><path d="M1 1 h19 v19 h-19z" fill="none" stroke="#223" stroke-width="1.4" stroke-dasharray="1.4 2.4"/><path d="M6 11 L14 3 Q19 2 19 6 L12 12z" fill="#e0b050" stroke="#9a7030" stroke-width=".7"/><circle cx="6" cy="14" r="3.2" fill="#e8e030" stroke="#a09000" stroke-width=".6"/><path d="M4 14 h4 M6 12 v4" stroke="#2050d0" stroke-width="1.1"/></svg><svg class="a" style="left:1276px;top:68px" width="21" height="21" viewBox="0 0 21 21"><path d="M6 3 L20 2 L15 18 L1 19z" fill="#c04050" stroke="#3a6ad8" stroke-width="1.4"/><path d="M5 7 h13 M4 11 h13 M3 15 h12 M9 3 l-4 15 M13 3 l-4 15 M17 2 l-4 16" stroke="#e8b0c0" stroke-width=".7"/></svg>
<div class="a" style="left:0;top:118px;width:60px;height:882px;background:#d6dbe8"></div><div class="a" style="left:1px;top:122px;width:57px;height:2px;background:repeating-linear-gradient(90deg,#fff 0 1px,#9aa0ae 1px 2px,transparent 2px 4px)"></div><div class="a" style="left:1px;top:375px;width:57px;height:2px;background:repeating-linear-gradient(90deg,#fff 0 1px,#9aa0ae 1px 2px,transparent 2px 4px)"></div><svg class="a" style="left:6px;top:132px" width="22" height="22" viewBox="0 0 22 22"><circle cx="6" cy="8" r="4.5" fill="none" stroke="#c8d4e4" stroke-width="1"/><circle cx="8" cy="8.5" r="4.5" fill="none" stroke="#b0c0d8" stroke-width="1"/><circle cx="12" cy="9" r="5.2" fill="#c4d8ee" stroke="#7890a8" stroke-width="1.3"/><path d="M8.5 13 L4 18" stroke="#b8b8b8" stroke-width="2.6" stroke-linecap="round"/><ellipse cx="12" cy="18.5" rx="6" ry="1.6" fill="#888" opacity=".4"/></svg><svg class="a" style="left:32px;top:132px" width="22" height="22" viewBox="0 0 22 22"><path d="M3 3 L17 17" stroke="#4a88d8" stroke-width="1.6" stroke-dasharray="2 1.5"/><path d="M9 17 L18 5" stroke="#e8b040" stroke-width="3.4"/><path d="M17 4 l2 -2" stroke="#e04040" stroke-width="3"/><path d="M8 18 l1.5 -2.5" stroke="#333" stroke-width="2"/><path d="M16 0 h5 l-2.5 3z" fill="#000"/></svg><svg class="a" style="left:6px;top:158px" width="22" height="22" viewBox="0 0 22 22"><rect x="5" y="5" width="12" height="11" fill="#e4ecf8" stroke="#666" stroke-width="1.2"/><g fill="#40c040"><rect x="1" y="1" width="4" height="4"/><rect x="17" y="1" width="4" height="4"/><rect x="1" y="16" width="4" height="4"/><rect x="17" y="16" width="4" height="4"/></g></svg><svg class="a" style="left:32px;top:158px" width="22" height="22" viewBox="0 0 22 22"><path d="M5 6 Q2 12 8 14 Q14 16 10 20 Q4 19 6 14" fill="none" stroke="#3a78d8" stroke-width="1.4"/><path d="M8 15 L18 4" stroke="#e8b040" stroke-width="3.4"/><path d="M17 4 l2 -2" stroke="#e04040" stroke-width="3"/><path d="M16 0 h5 l-2.5 3z" fill="#000"/></svg><svg class="a" style="left:6px;top:184px" width="22" height="22" viewBox="0 0 22 22"><path d="M1 3.5 h4 M3 1.5 v4 M1 7 h4" stroke="#000" stroke-width=".9"/><circle cx="10.5" cy="9" r="5" fill="#c4d8ee" stroke="#7890a8" stroke-width="1.3"/><path d="M7 13 L3 17" stroke="#c0c0c0" stroke-width="2.6" stroke-linecap="round"/><path d="M12 14 l4 -2 l5 2 v5 l-5 2 l-4 -2z" fill="#5a5a5a" stroke="#333" stroke-width=".7"/><path d="M12 14 l5 2 l4 -2 M17 16 v5" stroke="#888" stroke-width=".6" fill="none"/><path d="M16 0 h5 l-2.5 3z" fill="#000"/></svg><svg class="a" style="left:32px;top:184px" width="22" height="22" viewBox="0 0 22 22"><path d="M17 9 V4 H3 V18 H17 V13 H13" fill="none" stroke="#f0e000" stroke-width="1.8"/><path d="M6 11 l3.5 4 l8 -10" stroke="#50c040" stroke-width="3" fill="none"/><path d="M16 0 h5 l-2.5 3z" fill="#000"/></svg><svg class="a" style="left:6px;top:210px" width="22" height="22" viewBox="0 0 22 22"><path d="M1 13 L6 9 L16 9 L21 13 L16 17 L6 17Z" fill="#dfe6f2" stroke="#8a96a8" stroke-width=".7"/><path d="M6 15 V4" stroke="#2a6ae8" stroke-width="1.6"/><path d="M4 5 l2 -3.5 l2 3.5z" fill="#2a6ae8"/><path d="M6 15 L15 9" stroke="#40c040" stroke-width="1.6"/><path d="M13 8 l4 -1 l-1.5 3.5z" fill="#40c040"/><path d="M6 15 L14 20" stroke="#e02020" stroke-width="1.8"/><path d="M12 21 l4 0 l-2 -3z" fill="#e02020"/><circle cx="6" cy="15" r="2" fill="#e8e8e8" stroke="#666" stroke-width=".6"/><path d="M16 0 h5 l-2.5 3z" fill="#000"/></svg><svg class="a" style="left:32px;top:210px" width="22" height="22" viewBox="0 0 22 22"><path d="M3 19 Q2 8 8 8 Q12 9 10 15 Q8 19 14 17 Q18 14 17 8" fill="none" stroke="#3a78d8" stroke-width="1.4"/><path d="M8 15 L18 4" stroke="#e8b040" stroke-width="3.4"/><path d="M17 4 l2 -2" stroke="#e04040" stroke-width="3"/><path d="M16 0 h5 l-2.5 3z" fill="#000"/></svg><svg class="a" style="left:6px;top:236px" width="22" height="22" viewBox="0 0 22 22"><path d="M2 3 h12 l2 2 h-12z M2 6 h12 l2 2 h-12z" fill="#8aa8e8" stroke="#5a78b8" stroke-width=".6"/><path d="M2 9 h12" stroke="#999" stroke-width="1.2"/><ellipse cx="10" cy="15" rx="8" ry="5" fill="#c89870" stroke="#7a5a3a" stroke-width=".7"/><circle cx="7" cy="16" r="1.7" fill="#2050e0"/><circle cx="11" cy="17" r="1.6" fill="#10b020"/><circle cx="14" cy="14" r="1.6" fill="#d02020"/><path d="M19 2 L11 12" stroke="#a06030" stroke-width="1.8"/><path d="M16 0 h5 l-2.5 3z" fill="#000"/></svg><svg class="a" style="left:32px;top:236px" width="22" height="22" viewBox="0 0 22 22"><path d="M6 3 L19 3 L15 18 L2 18z" fill="#6aa8f0" stroke="#2a68c8" stroke-width="1.2"/><path d="M4 10 h13 M11 3 l-4 15" stroke="#d8ecff" stroke-width="1.2"/><path d="M16 0 h5 l-2.5 3z" fill="#000"/></svg><svg class="a" style="left:6px;top:262px" width="22" height="22" viewBox="0 0 22 22"><path d="M4 10 Q4 3 12 3 l1 -2 l4 4.5 l-5 3 l1 -2.5 Q7 6 7 10z M18 11 Q18 19 9 19 l-1 2 l-4 -4.5 l5 -3 l-1 2.5 Q15 16 15 11z" fill="#6aa0e0" stroke="#3a70b8" stroke-width=".6"/><path d="M16 0 h5 l-2.5 3z" fill="#000"/></svg><svg class="a" style="left:32px;top:262px" width="22" height="22" viewBox="0 0 22 22"><path d="M2 7 L10 3.5 L18 7 L10 10.5Z" fill="#e8e8e8"/><path d="M2 7 L10 10.5 V19 L2 15Z" fill="#9a9a9a"/><path d="M18 7 L10 10.5 V19 L18 15Z" fill="#6a6a6a"/><path d="M2 7 L10 3.5 L18 7 V15 L10 19 L2 15Z M2 7 L10 10.5 L18 7 M10 10.5 V19" fill="none" stroke="#444" stroke-width=".8"/><ellipse cx="11" cy="20" rx="7" ry="1.2" fill="#777" opacity=".4"/><path d="M16 0 h5 l-2.5 3z" fill="#000"/></svg><svg class="a" style="left:6px;top:288px" width="22" height="22" viewBox="0 0 22 22"><ellipse cx="10" cy="19.5" rx="7" ry="1.8" fill="#777" opacity=".45"/><path d="M5.5 7 Q5.5 2 10.5 2 Q15.5 2 15.5 6.5 Q15.5 9.5 12 11 Q10.5 12 10.5 14" fill="none" stroke="#4a80d8" stroke-width="2.6"/><circle cx="10.5" cy="17.3" r="1.6" fill="#4a80d8"/><path d="M16 0 h5 l-2.5 3z" fill="#000"/></svg><svg class="a" style="left:32px;top:288px" width="22" height="22" viewBox="0 0 22 22"><path d="M2 4 v14 M18 4 v14" stroke="#333" stroke-width="1.3"/><path d="M3 8 h14" stroke="#e8d000" stroke-width="1.6"/><path d="M3 8 l3 -2 v4z M17 8 l-3 -2 v4z" fill="#e8d000"/><path d="M16 0 h5 l-2.5 3z" fill="#000"/></svg><svg class="a" style="left:6px;top:314px" width="22" height="22" viewBox="0 0 22 22"><path d="M4 7 h12 l-1.6 12 q-4.4 2 -8.8 0z" fill="#c8e0f0" stroke="#5a7080" stroke-width=".8"/><ellipse cx="10" cy="7" rx="6.5" ry="1.8" fill="#9ab8d0" stroke="#5a7080" stroke-width=".8"/><path d="M8 2 h4 l1 4 h-6z" fill="#e8d040"/><path d="M7 10 l5 7 M12 10 l-4 7" stroke="#d8e880" stroke-width="1.2"/><path d="M16 0 h5 l-2.5 3z" fill="#000"/></svg><svg class="a" style="left:32px;top:314px" width="22" height="22" viewBox="0 0 22 22"><path d="M9 3 L3 9 L8 10 Q12 10 13 13 Q13 16 10 18 Q16 16 15 11 Q14 6 9 6Z" fill="#b0b0b0" stroke="#999" stroke-width=".5"/><path d="M16 0 h5 l-2.5 3z" fill="#000"/></svg><svg class="a" style="left:6px;top:340px" width="22" height="22" viewBox="0 0 22 22"><path d="M2 2 v18 M5 2 v18" stroke="#666" stroke-width="1.4"/><circle cx="12" cy="10" r="6" fill="none" stroke="#8a5030" stroke-width="1.4"/><path d="M12 2 v16 M4 10 h16 M6.5 4.5 l11 11 M17.5 4.5 l-11 11" stroke="#8a5030" stroke-width="1"/><circle cx="12" cy="10" r="2" fill="#f0c020"/><path d="M3 15 l14 6 M3 18 l10 4 M7 13 l13 6" stroke="#f07010" stroke-width="1.6"/><path d="M16 0 h5 l-2.5 3z" fill="#000"/></svg><svg class="a" style="left:32px;top:340px" width="22" height="22" viewBox="0 0 22 22"><path d="M2 6 h6 l1 2 h9 v11 h-16z" fill="#f0d070" stroke="#b89040" stroke-width=".8"/><rect x="6" y="10" width="14" height="10" fill="#fff" stroke="#445" stroke-width=".9"/><path d="M6 5 Q10 0 15 3" stroke="#30b030" stroke-width="2" fill="none"/></svg>
<svg class="a" width="1860" height="891" viewBox="60 109 1860 891" style="left:60px;top:109px"><defs><linearGradient id="bg" x1="0" y1="109" x2="0" y2="1000" gradientUnits="userSpaceOnUse"><stop offset="0" stop-color="#00001b"/><stop offset="1" stop-color="#46638c"/></linearGradient></defs><rect x="60" y="109" width="1860" height="891" fill="url(#bg)"/><polygon points="284,612.8 1187.9,90.3 2094.7,610.6 1183,1133" fill="#fff" fill-opacity="0.06"/><g stroke="#e6e6e6" stroke-width="1" fill="none"><path d="M284 612.8 L377.6 558.7 M1094.3 144.4 L1187.9 90.3"/><path d="M377.6 558.7 L1094.3 144.4" stroke-dasharray="3.8 5.6"/><path d="M1187.9 90.3 L1281.8 144.2 M2000.8 556.7 L2094.7 610.6"/><path d="M1281.8 144.2 L2000.8 556.7" stroke-dasharray="3.8 5.6"/><path d="M2094.7 610.6 L2000.3 664.7 M1277.4 1078.9 L1183 1133"/><path d="M2000.3 664.7 L1277.4 1078.9" stroke-dasharray="3.8 5.6"/></g><defs><filter id="bl" x="-5%" y="-5%" width="110%" height="110%"><feGaussianBlur stdDeviation="0.9"/></filter><clipPath id="c0"><path d="M1488.6 595 1484.3 596.9 1478.9 597.8 1471.8 597.4 1463.1 595.3 1453 591.1 1442 584.6 1430.5 575.9 1418.8 565 1407.4 552.3 1396.5 537.9 1386.4 522.1 1377.4 505.3 1369.6 487.7 1363.3 469.7 1358.6 451.8 1355.6 434.2 1354.3 417.4 1354.7 401.7 1356.7 387.4 1360.1 375 1364.7 364.5 1370.4 356 1376.7 349.4 1383.9 344.5 1360.4 301.3 1345.1 311.8 1332 325.1 1321.6 340.9 1313.7 358.5 1308.5 377.6 1305.6 397.7 1305.1 418.8 1306.8 440.4 1310.6 462.3 1316.3 484.2 1323.9 505.8 1333.2 526.8 1344 547 1356.1 566 1369.4 583.6 1383.7 599.5 1398.8 613.5 1414.6 625.4 1430.9 635 1447.6 642 1464.6 646.1 1481.8 646.9 1498.7 643.9 1514.3 637Z"/></clipPath><linearGradient id="s0" gradientUnits="userSpaceOnUse" x1="1518.5" y1="635.1" x2="1329.8" y2="521.7"><stop offset="0.000" stop-color="#404040"/><stop offset="0.194" stop-color="#404040"/><stop offset="0.478" stop-color="#585858"/><stop offset="0.794" stop-color="#767676"/><stop offset="1.000" stop-color="#838383"/></linearGradient><linearGradient id="s1" gradientUnits="userSpaceOnUse" x1="1516" y1="631.6" x2="1333.7" y2="519.9"><stop offset="0.000" stop-color="#404040"/><stop offset="0.187" stop-color="#4c4c4c"/><stop offset="0.470" stop-color="#808080"/><stop offset="0.790" stop-color="#949494"/><stop offset="1.000" stop-color="#9a9a9a"/></linearGradient><linearGradient id="s2" gradientUnits="userSpaceOnUse" x1="1513.5" y1="628.1" x2="1337.7" y2="518"><stop offset="0.000" stop-color="#404040"/><stop offset="0.180" stop-color="#7a7a7a"/><stop offset="0.461" stop-color="#a6a6a6"/><stop offset="0.786" stop-color="#afafaf"/><stop offset="1.000" stop-color="#acacac"/></linearGradient><linearGradient id="s3" gradientUnits="userSpaceOnUse" x1="1510.1" y1="623.2" x2="1343.1" y2="515.5"><stop offset="0.000" stop-color="#505050"/><stop offset="0.169" stop-color="#a3a3a3"/><stop offset="0.448" stop-color="#c4c4c4"/><stop offset="0.779" stop-color="#c0c0c0"/><stop offset="1.000" stop-color="#b3b3b3"/></linearGradient><linearGradient id="s4" gradientUnits="userSpaceOnUse" x1="1506" y1="617.4" x2="1349.5" y2="512.6"><stop offset="0.000" stop-color="#797979"/><stop offset="0.155" stop-color="#c2c2c2"/><stop offset="0.431" stop-color="#d7d7d7"/><stop offset="0.771" stop-color="#e9e9e9"/><stop offset="1.000" stop-color="#b0b0b0"/></linearGradient><linearGradient id="s5" gradientUnits="userSpaceOnUse" x1="1501.7" y1="611.4" x2="1356.2" y2="509.4"><stop offset="0.000" stop-color="#9c9c9c"/><stop offset="0.139" stop-color="#d5d5d5"/><stop offset="0.412" stop-color="#dfdfdf"/><stop offset="0.762" stop-color="#bebebe"/><stop offset="1.000" stop-color="#a2a2a2"/></linearGradient><linearGradient id="s6" gradientUnits="userSpaceOnUse" x1="1497.6" y1="605.6" x2="1362.6" y2="506.5"><stop offset="0.000" stop-color="#b6b6b6"/><stop offset="0.123" stop-color="#dadada"/><stop offset="0.392" stop-color="#cdcdcd"/><stop offset="0.751" stop-color="#a9a9a9"/><stop offset="1.000" stop-color="#8b8b8b"/></linearGradient><linearGradient id="s7" gradientUnits="userSpaceOnUse" x1="1494.1" y1="600.7" x2="1368.1" y2="504"><stop offset="0.000" stop-color="#c5c5c5"/><stop offset="0.108" stop-color="#d1d1d1"/><stop offset="0.373" stop-color="#b4b4b4"/><stop offset="0.742" stop-color="#8b8b8b"/><stop offset="1.000" stop-color="#6d6d6d"/></linearGradient><linearGradient id="s8" gradientUnits="userSpaceOnUse" x1="1491.6" y1="597.1" x2="1372" y2="502.1"><stop offset="0.000" stop-color="#c8c8c8"/><stop offset="0.097" stop-color="#bababa"/><stop offset="0.358" stop-color="#919191"/><stop offset="0.734" stop-color="#676767"/><stop offset="1.000" stop-color="#4b4b4b"/></linearGradient><linearGradient id="s9" gradientUnits="userSpaceOnUse" x1="1489.1" y1="593.6" x2="1375.9" y2="500.3"><stop offset="0.000" stop-color="#bfbfbf"/><stop offset="0.085" stop-color="#9b9b9b"/><stop offset="0.342" stop-color="#6b6b6b"/><stop offset="0.726" stop-color="#434343"/><stop offset="1.000" stop-color="#404040"/></linearGradient><linearGradient id="s10" gradientUnits="userSpaceOnUse" x1="1335.2" y1="532.6" x2="1364.5" y2="298.3"><stop offset="0.000" stop-color="#808080"/><stop offset="0.295" stop-color="#939393"/><stop offset="0.601" stop-color="#a9a9a9"/><stop offset="0.871" stop-color="#bfbfbf"/><stop offset="1.000" stop-color="#bfbfbf"/></linearGradient><linearGradient id="s11" gradientUnits="userSpaceOnUse" x1="1339" y1="530.7" x2="1366.3" y2="302.2"><stop offset="0.000" stop-color="#999999"/><stop offset="0.299" stop-color="#9f9f9f"/><stop offset="0.607" stop-color="#acacac"/><stop offset="0.874" stop-color="#c5c5c5"/><stop offset="1.000" stop-color="#cfcfcf"/></linearGradient><linearGradient id="s12" gradientUnits="userSpaceOnUse" x1="1342.9" y1="528.7" x2="1368.2" y2="306.1"><stop offset="0.000" stop-color="#adadad"/><stop offset="0.304" stop-color="#a5a5a5"/><stop offset="0.613" stop-color="#a6a6a6"/><stop offset="0.878" stop-color="#bfbfbf"/><stop offset="1.000" stop-color="#d3d3d3"/></linearGradient><linearGradient id="s13" gradientUnits="userSpaceOnUse" x1="1348.2" y1="526" x2="1370.8" y2="311.5"><stop offset="0.000" stop-color="#b7b7b7"/><stop offset="0.310" stop-color="#a1a1a1"/><stop offset="0.622" stop-color="#979797"/><stop offset="0.883" stop-color="#aeaeae"/><stop offset="1.000" stop-color="#cbcbcb"/></linearGradient><linearGradient id="s14" gradientUnits="userSpaceOnUse" x1="1354.5" y1="522.7" x2="1373.8" y2="317.9"><stop offset="0.000" stop-color="#b6b6b6"/><stop offset="0.318" stop-color="#949494"/><stop offset="0.634" stop-color="#7f7f7f"/><stop offset="0.889" stop-color="#929292"/><stop offset="1.000" stop-color="#b5b5b5"/></linearGradient><linearGradient id="s15" gradientUnits="userSpaceOnUse" x1="1361.1" y1="519.4" x2="1377" y2="324.6"><stop offset="0.000" stop-color="#a9a9a9"/><stop offset="0.327" stop-color="#7e7e7e"/><stop offset="0.648" stop-color="#616161"/><stop offset="0.897" stop-color="#6e6e6e"/><stop offset="1.000" stop-color="#939393"/></linearGradient><linearGradient id="s16" gradientUnits="userSpaceOnUse" x1="1367.3" y1="516.1" x2="1380" y2="331"><stop offset="0.000" stop-color="#929292"/><stop offset="0.337" stop-color="#636363"/><stop offset="0.662" stop-color="#404040"/><stop offset="0.904" stop-color="#464646"/><stop offset="1.000" stop-color="#6a6a6a"/></linearGradient><linearGradient id="s17" gradientUnits="userSpaceOnUse" x1="1372.7" y1="513.4" x2="1382.5" y2="336.4"><stop offset="0.000" stop-color="#747474"/><stop offset="0.347" stop-color="#454545"/><stop offset="0.675" stop-color="#404040"/><stop offset="0.911" stop-color="#404040"/><stop offset="1.000" stop-color="#404040"/></linearGradient><linearGradient id="s18" gradientUnits="userSpaceOnUse" x1="1376.6" y1="511.4" x2="1384.4" y2="340.4"><stop offset="0.000" stop-color="#515151"/><stop offset="0.354" stop-color="#404040"/><stop offset="0.685" stop-color="#404040"/><stop offset="0.917" stop-color="#404040"/><stop offset="1.000" stop-color="#404040"/></linearGradient><linearGradient id="s19" gradientUnits="userSpaceOnUse" x1="1380.4" y1="509.5" x2="1386.2" y2="344.2"><stop offset="0.000" stop-color="#404040"/><stop offset="0.361" stop-color="#404040"/><stop offset="0.696" stop-color="#404040"/><stop offset="0.922" stop-color="#404040"/><stop offset="1.000" stop-color="#404040"/></linearGradient><clipPath id="c1"><path d="M1432 627.6 1427.8 629.5 1422.3 630.4 1415.3 630.1 1406.5 627.9 1396.5 623.7 1385.5 617.2 1373.9 608.5 1362.3 597.7 1350.8 584.9 1339.9 570.5 1329.8 554.8 1320.8 537.9 1313.1 520.3 1306.8 502.4 1302.1 484.4 1299 466.8 1297.7 450 1298.1 434.3 1300.1 420.1 1303.5 407.6 1308.2 397.1 1313.8 388.6 1320.2 382 1327.3 377.2 1303.9 333.9 1288.5 344.4 1275.5 357.8 1265 373.5 1257.2 391.1 1251.9 410.2 1249.1 430.4 1248.5 451.4 1250.2 473 1254 494.9 1259.7 516.8 1267.3 538.4 1276.6 559.5 1287.4 579.6 1299.6 598.7 1312.9 616.2 1327.2 632.2 1342.3 646.2 1358.1 658.1 1374.3 667.6 1391 674.6 1408.1 678.7 1425.3 679.5 1442.1 676.6 1457.7 669.6Z"/></clipPath><linearGradient id="s20" gradientUnits="userSpaceOnUse" x1="1462" y1="667.8" x2="1273.3" y2="554.3"><stop offset="0.000" stop-color="#404040"/><stop offset="0.194" stop-color="#404040"/><stop offset="0.478" stop-color="#585858"/><stop offset="0.794" stop-color="#767676"/><stop offset="1.000" stop-color="#838383"/></linearGradient><linearGradient id="s21" gradientUnits="userSpaceOnUse" x1="1459.5" y1="664.3" x2="1277.2" y2="552.5"><stop offset="0.000" stop-color="#404040"/><stop offset="0.187" stop-color="#4c4c4c"/><stop offset="0.470" stop-color="#808080"/><stop offset="0.790" stop-color="#949494"/><stop offset="1.000" stop-color="#9a9a9a"/></linearGradient><linearGradient id="s22" gradientUnits="userSpaceOnUse" x1="1457" y1="660.7" x2="1281.1" y2="550.7"><stop offset="0.000" stop-color="#404040"/><stop offset="0.180" stop-color="#7a7a7a"/><stop offset="0.461" stop-color="#a6a6a6"/><stop offset="0.786" stop-color="#afafaf"/><stop offset="1.000" stop-color="#acacac"/></linearGradient><linearGradient id="s23" gradientUnits="userSpaceOnUse" x1="1453.5" y1="655.8" x2="1286.6" y2="548.2"><stop offset="0.000" stop-color="#505050"/><stop offset="0.169" stop-color="#a3a3a3"/><stop offset="0.448" stop-color="#c4c4c4"/><stop offset="0.779" stop-color="#c0c0c0"/><stop offset="1.000" stop-color="#b3b3b3"/></linearGradient><linearGradient id="s24" gradientUnits="userSpaceOnUse" x1="1449.4" y1="650" x2="1293" y2="545.2"><stop offset="0.000" stop-color="#797979"/><stop offset="0.155" stop-color="#c2c2c2"/><stop offset="0.431" stop-color="#d7d7d7"/><stop offset="0.771" stop-color="#e9e9e9"/><stop offset="1.000" stop-color="#b0b0b0"/></linearGradient><linearGradient id="s25" gradientUnits="userSpaceOnUse" x1="1445.1" y1="644" x2="1299.7" y2="542.1"><stop offset="0.000" stop-color="#9c9c9c"/><stop offset="0.139" stop-color="#d5d5d5"/><stop offset="0.412" stop-color="#dfdfdf"/><stop offset="0.762" stop-color="#bebebe"/><stop offset="1.000" stop-color="#a2a2a2"/></linearGradient><linearGradient id="s26" gradientUnits="userSpaceOnUse" x1="1441.1" y1="638.2" x2="1306.1" y2="539.1"><stop offset="0.000" stop-color="#b6b6b6"/><stop offset="0.123" stop-color="#dadada"/><stop offset="0.392" stop-color="#cdcdcd"/><stop offset="0.751" stop-color="#a9a9a9"/><stop offset="1.000" stop-color="#8b8b8b"/></linearGradient><linearGradient id="s27" gradientUnits="userSpaceOnUse" x1="1437.6" y1="633.3" x2="1311.5" y2="536.6"><stop offset="0.000" stop-color="#c5c5c5"/><stop offset="0.108" stop-color="#d1d1d1"/><stop offset="0.373" stop-color="#b4b4b4"/><stop offset="0.742" stop-color="#8b8b8b"/><stop offset="1.000" stop-color="#6d6d6d"/></linearGradient><linearGradient id="s28" gradientUnits="userSpaceOnUse" x1="1435.1" y1="629.8" x2="1315.5" y2="534.8"><stop offset="0.000" stop-color="#c8c8c8"/><stop offset="0.097" stop-color="#bababa"/><stop offset="0.358" stop-color="#919191"/><stop offset="0.734" stop-color="#676767"/><stop offset="1.000" stop-color="#4b4b4b"/></linearGradient><linearGradient id="s29" gradientUnits="userSpaceOnUse" x1="1432.6" y1="626.3" x2="1319.4" y2="533"><stop offset="0.000" stop-color="#bfbfbf"/><stop offset="0.085" stop-color="#9b9b9b"/><stop offset="0.342" stop-color="#6b6b6b"/><stop offset="0.726" stop-color="#434343"/><stop offset="1.000" stop-color="#404040"/></linearGradient><linearGradient id="s30" gradientUnits="userSpaceOnUse" x1="1278.6" y1="565.3" x2="1307.9" y2="330.9"><stop offset="0.000" stop-color="#808080"/><stop offset="0.295" stop-color="#939393"/><stop offset="0.601" stop-color="#a9a9a9"/><stop offset="0.871" stop-color="#bfbfbf"/><stop offset="1.000" stop-color="#bfbfbf"/></linearGradient><linearGradient id="s31" gradientUnits="userSpaceOnUse" x1="1282.4" y1="563.3" x2="1309.8" y2="334.8"><stop offset="0.000" stop-color="#999999"/><stop offset="0.299" stop-color="#9f9f9f"/><stop offset="0.607" stop-color="#acacac"/><stop offset="0.874" stop-color="#c5c5c5"/><stop offset="1.000" stop-color="#cfcfcf"/></linearGradient><linearGradient id="s32" gradientUnits="userSpaceOnUse" x1="1286.3" y1="561.3" x2="1311.6" y2="338.8"><stop offset="0.000" stop-color="#adadad"/><stop offset="0.304" stop-color="#a5a5a5"/><stop offset="0.613" stop-color="#a6a6a6"/><stop offset="0.878" stop-color="#bfbfbf"/><stop offset="1.000" stop-color="#d3d3d3"/></linearGradient><linearGradient id="s33" gradientUnits="userSpaceOnUse" x1="1291.6" y1="558.6" x2="1314.2" y2="344.2"><stop offset="0.000" stop-color="#b7b7b7"/><stop offset="0.310" stop-color="#a1a1a1"/><stop offset="0.622" stop-color="#979797"/><stop offset="0.883" stop-color="#aeaeae"/><stop offset="1.000" stop-color="#cbcbcb"/></linearGradient><linearGradient id="s34" gradientUnits="userSpaceOnUse" x1="1297.9" y1="555.4" x2="1317.2" y2="350.6"><stop offset="0.000" stop-color="#b6b6b6"/><stop offset="0.318" stop-color="#949494"/><stop offset="0.634" stop-color="#7f7f7f"/><stop offset="0.889" stop-color="#929292"/><stop offset="1.000" stop-color="#b5b5b5"/></linearGradient><linearGradient id="s35" gradientUnits="userSpaceOnUse" x1="1304.5" y1="552" x2="1320.4" y2="357.3"><stop offset="0.000" stop-color="#a9a9a9"/><stop offset="0.327" stop-color="#7e7e7e"/><stop offset="0.648" stop-color="#616161"/><stop offset="0.897" stop-color="#6e6e6e"/><stop offset="1.000" stop-color="#939393"/></linearGradient><linearGradient id="s36" gradientUnits="userSpaceOnUse" x1="1310.8" y1="548.8" x2="1323.4" y2="363.6"><stop offset="0.000" stop-color="#929292"/><stop offset="0.337" stop-color="#636363"/><stop offset="0.662" stop-color="#404040"/><stop offset="0.904" stop-color="#464646"/><stop offset="1.000" stop-color="#6a6a6a"/></linearGradient><linearGradient id="s37" gradientUnits="userSpaceOnUse" x1="1316.1" y1="546" x2="1326" y2="369.1"><stop offset="0.000" stop-color="#747474"/><stop offset="0.347" stop-color="#454545"/><stop offset="0.675" stop-color="#404040"/><stop offset="0.911" stop-color="#404040"/><stop offset="1.000" stop-color="#404040"/></linearGradient><linearGradient id="s38" gradientUnits="userSpaceOnUse" x1="1320" y1="544" x2="1327.8" y2="373"><stop offset="0.000" stop-color="#515151"/><stop offset="0.354" stop-color="#404040"/><stop offset="0.685" stop-color="#404040"/><stop offset="0.917" stop-color="#404040"/><stop offset="1.000" stop-color="#404040"/></linearGradient><linearGradient id="s39" gradientUnits="userSpaceOnUse" x1="1323.8" y1="542.1" x2="1329.7" y2="376.9"><stop offset="0.000" stop-color="#404040"/><stop offset="0.361" stop-color="#404040"/><stop offset="0.696" stop-color="#404040"/><stop offset="0.922" stop-color="#404040"/><stop offset="1.000" stop-color="#404040"/></linearGradient><clipPath id="c2"><path d="M1375.5 660.3 1371.2 662.1 1365.8 663.1 1358.7 662.7 1350 660.6 1339.9 656.3 1328.9 649.9 1317.4 641.1 1305.7 630.3 1294.3 617.6 1283.4 603.2 1273.3 587.4 1264.3 570.6 1256.5 553 1250.2 535 1245.5 517.1 1242.5 499.5 1241.2 482.7 1241.5 467 1243.5 452.7 1247 440.2 1251.6 429.7 1257.2 421.3 1263.6 414.7 1270.7 409.8 1247.3 366.5 1231.9 377 1218.9 390.4 1208.4 406.2 1200.6 423.8 1195.3 442.8 1192.5 463 1192 484 1193.7 505.6 1197.4 527.5 1203.2 549.4 1210.8 571.1 1220 592.1 1230.8 612.3 1243 631.3 1256.3 648.9 1270.6 664.8 1285.7 678.8 1301.5 690.7 1317.8 700.3 1334.5 707.3 1351.5 711.4 1368.7 712.2 1385.5 709.2 1401.1 702.2Z"/></clipPath><linearGradient id="s40" gradientUnits="userSpaceOnUse" x1="1405.4" y1="700.4" x2="1216.7" y2="587"><stop offset="0.000" stop-color="#404040"/><stop offset="0.194" stop-color="#404040"/><stop offset="0.478" stop-color="#585858"/><stop offset="0.794" stop-color="#767676"/><stop offset="1.000" stop-color="#838383"/></linearGradient><linearGradient id="s41" gradientUnits="userSpaceOnUse" x1="1402.9" y1="696.9" x2="1220.6" y2="585.1"><stop offset="0.000" stop-color="#404040"/><stop offset="0.187" stop-color="#4c4c4c"/><stop offset="0.470" stop-color="#808080"/><stop offset="0.790" stop-color="#949494"/><stop offset="1.000" stop-color="#9a9a9a"/></linearGradient><linearGradient id="s42" gradientUnits="userSpaceOnUse" x1="1400.4" y1="693.3" x2="1224.5" y2="583.3"><stop offset="0.000" stop-color="#404040"/><stop offset="0.180" stop-color="#7a7a7a"/><stop offset="0.461" stop-color="#a6a6a6"/><stop offset="0.786" stop-color="#afafaf"/><stop offset="1.000" stop-color="#acacac"/></linearGradient><linearGradient id="s43" gradientUnits="userSpaceOnUse" x1="1396.9" y1="688.4" x2="1230" y2="580.8"><stop offset="0.000" stop-color="#505050"/><stop offset="0.169" stop-color="#a3a3a3"/><stop offset="0.448" stop-color="#c4c4c4"/><stop offset="0.779" stop-color="#c0c0c0"/><stop offset="1.000" stop-color="#b3b3b3"/></linearGradient><linearGradient id="s44" gradientUnits="userSpaceOnUse" x1="1392.9" y1="682.7" x2="1236.4" y2="577.8"><stop offset="0.000" stop-color="#797979"/><stop offset="0.155" stop-color="#c2c2c2"/><stop offset="0.431" stop-color="#d7d7d7"/><stop offset="0.771" stop-color="#e9e9e9"/><stop offset="1.000" stop-color="#b0b0b0"/></linearGradient><linearGradient id="s45" gradientUnits="userSpaceOnUse" x1="1388.6" y1="676.6" x2="1243.1" y2="574.7"><stop offset="0.000" stop-color="#9c9c9c"/><stop offset="0.139" stop-color="#d5d5d5"/><stop offset="0.412" stop-color="#dfdfdf"/><stop offset="0.762" stop-color="#bebebe"/><stop offset="1.000" stop-color="#a2a2a2"/></linearGradient><linearGradient id="s46" gradientUnits="userSpaceOnUse" x1="1384.5" y1="670.9" x2="1249.5" y2="571.8"><stop offset="0.000" stop-color="#b6b6b6"/><stop offset="0.123" stop-color="#dadada"/><stop offset="0.392" stop-color="#cdcdcd"/><stop offset="0.751" stop-color="#a9a9a9"/><stop offset="1.000" stop-color="#8b8b8b"/></linearGradient><linearGradient id="s47" gradientUnits="userSpaceOnUse" x1="1381" y1="666" x2="1255" y2="569.2"><stop offset="0.000" stop-color="#c5c5c5"/><stop offset="0.108" stop-color="#d1d1d1"/><stop offset="0.373" stop-color="#b4b4b4"/><stop offset="0.742" stop-color="#8b8b8b"/><stop offset="1.000" stop-color="#6d6d6d"/></linearGradient><linearGradient id="s48" gradientUnits="userSpaceOnUse" x1="1378.5" y1="662.4" x2="1258.9" y2="567.4"><stop offset="0.000" stop-color="#c8c8c8"/><stop offset="0.097" stop-color="#bababa"/><stop offset="0.358" stop-color="#919191"/><stop offset="0.734" stop-color="#676767"/><stop offset="1.000" stop-color="#4b4b4b"/></linearGradient><linearGradient id="s49" gradientUnits="userSpaceOnUse" x1="1376" y1="658.9" x2="1262.8" y2="565.6"><stop offset="0.000" stop-color="#bfbfbf"/><stop offset="0.085" stop-color="#9b9b9b"/><stop offset="0.342" stop-color="#6b6b6b"/><stop offset="0.726" stop-color="#434343"/><stop offset="1.000" stop-color="#404040"/></linearGradient><linearGradient id="s50" gradientUnits="userSpaceOnUse" x1="1222" y1="597.9" x2="1251.4" y2="363.6"><stop offset="0.000" stop-color="#808080"/><stop offset="0.295" stop-color="#939393"/><stop offset="0.601" stop-color="#a9a9a9"/><stop offset="0.871" stop-color="#bfbfbf"/><stop offset="1.000" stop-color="#bfbfbf"/></linearGradient><linearGradient id="s51" gradientUnits="userSpaceOnUse" x1="1225.9" y1="596" x2="1253.2" y2="367.5"><stop offset="0.000" stop-color="#999999"/><stop offset="0.299" stop-color="#9f9f9f"/><stop offset="0.607" stop-color="#acacac"/><stop offset="0.874" stop-color="#c5c5c5"/><stop offset="1.000" stop-color="#cfcfcf"/></linearGradient><linearGradient id="s52" gradientUnits="userSpaceOnUse" x1="1229.7" y1="594" x2="1255.1" y2="371.4"><stop offset="0.000" stop-color="#adadad"/><stop offset="0.304" stop-color="#a5a5a5"/><stop offset="0.613" stop-color="#a6a6a6"/><stop offset="0.878" stop-color="#bfbfbf"/><stop offset="1.000" stop-color="#d3d3d3"/></linearGradient><linearGradient id="s53" gradientUnits="userSpaceOnUse" x1="1235.1" y1="591.2" x2="1257.6" y2="376.8"><stop offset="0.000" stop-color="#b7b7b7"/><stop offset="0.310" stop-color="#a1a1a1"/><stop offset="0.622" stop-color="#979797"/><stop offset="0.883" stop-color="#aeaeae"/><stop offset="1.000" stop-color="#cbcbcb"/></linearGradient><linearGradient id="s54" gradientUnits="userSpaceOnUse" x1="1241.4" y1="588" x2="1260.7" y2="383.2"><stop offset="0.000" stop-color="#b6b6b6"/><stop offset="0.318" stop-color="#949494"/><stop offset="0.634" stop-color="#7f7f7f"/><stop offset="0.889" stop-color="#929292"/><stop offset="1.000" stop-color="#b5b5b5"/></linearGradient><linearGradient id="s55" gradientUnits="userSpaceOnUse" x1="1248" y1="584.6" x2="1263.8" y2="389.9"><stop offset="0.000" stop-color="#a9a9a9"/><stop offset="0.327" stop-color="#7e7e7e"/><stop offset="0.648" stop-color="#616161"/><stop offset="0.897" stop-color="#6e6e6e"/><stop offset="1.000" stop-color="#939393"/></linearGradient><linearGradient id="s56" gradientUnits="userSpaceOnUse" x1="1254.2" y1="581.4" x2="1266.9" y2="396.3"><stop offset="0.000" stop-color="#929292"/><stop offset="0.337" stop-color="#636363"/><stop offset="0.662" stop-color="#404040"/><stop offset="0.904" stop-color="#464646"/><stop offset="1.000" stop-color="#6a6a6a"/></linearGradient><linearGradient id="s57" gradientUnits="userSpaceOnUse" x1="1259.6" y1="578.7" x2="1269.4" y2="401.7"><stop offset="0.000" stop-color="#747474"/><stop offset="0.347" stop-color="#454545"/><stop offset="0.675" stop-color="#404040"/><stop offset="0.911" stop-color="#404040"/><stop offset="1.000" stop-color="#404040"/></linearGradient><linearGradient id="s58" gradientUnits="userSpaceOnUse" x1="1263.4" y1="576.7" x2="1271.3" y2="405.6"><stop offset="0.000" stop-color="#515151"/><stop offset="0.354" stop-color="#404040"/><stop offset="0.685" stop-color="#404040"/><stop offset="0.917" stop-color="#404040"/><stop offset="1.000" stop-color="#404040"/></linearGradient><linearGradient id="s59" gradientUnits="userSpaceOnUse" x1="1267.3" y1="574.7" x2="1273.1" y2="409.5"><stop offset="0.000" stop-color="#404040"/><stop offset="0.361" stop-color="#404040"/><stop offset="0.696" stop-color="#404040"/><stop offset="0.922" stop-color="#404040"/><stop offset="1.000" stop-color="#404040"/></linearGradient><clipPath id="c3"><path d="M1318.9 692.9 1314.7 694.8 1309.2 695.7 1302.1 695.3 1293.4 693.2 1283.3 689 1272.3 682.5 1260.8 673.8 1249.1 663 1237.7 650.2 1226.8 635.8 1216.7 620 1207.7 603.2 1200 585.6 1193.7 567.7 1189 549.7 1185.9 532.1 1184.6 515.3 1185 499.6 1187 485.4 1190.4 472.9 1195.1 462.4 1200.7 453.9 1207.1 447.3 1214.2 442.5 1190.8 399.2 1175.4 409.7 1162.3 423.1 1151.9 438.8 1144 456.4 1138.8 475.5 1135.9 495.7 1135.4 516.7 1137.1 538.3 1140.9 560.2 1146.6 582.1 1154.2 603.7 1163.5 624.7 1174.3 644.9 1186.4 663.9 1199.8 681.5 1214.1 697.4 1229.2 711.5 1244.9 723.4 1261.2 732.9 1277.9 739.9 1295 744 1312.1 744.8 1329 741.9 1344.6 734.9Z"/></clipPath><linearGradient id="s60" gradientUnits="userSpaceOnUse" x1="1348.8" y1="733" x2="1160.1" y2="619.6"><stop offset="0.000" stop-color="#404040"/><stop offset="0.194" stop-color="#404040"/><stop offset="0.478" stop-color="#585858"/><stop offset="0.794" stop-color="#767676"/><stop offset="1.000" stop-color="#838383"/></linearGradient><linearGradient id="s61" gradientUnits="userSpaceOnUse" x1="1346.4" y1="729.5" x2="1164" y2="617.8"><stop offset="0.000" stop-color="#404040"/><stop offset="0.187" stop-color="#4c4c4c"/><stop offset="0.470" stop-color="#808080"/><stop offset="0.790" stop-color="#949494"/><stop offset="1.000" stop-color="#9a9a9a"/></linearGradient><linearGradient id="s62" gradientUnits="userSpaceOnUse" x1="1343.8" y1="726" x2="1168" y2="616"><stop offset="0.000" stop-color="#404040"/><stop offset="0.180" stop-color="#7a7a7a"/><stop offset="0.461" stop-color="#a6a6a6"/><stop offset="0.786" stop-color="#afafaf"/><stop offset="1.000" stop-color="#acacac"/></linearGradient><linearGradient id="s63" gradientUnits="userSpaceOnUse" x1="1340.4" y1="721.1" x2="1173.4" y2="613.4"><stop offset="0.000" stop-color="#505050"/><stop offset="0.169" stop-color="#a3a3a3"/><stop offset="0.448" stop-color="#c4c4c4"/><stop offset="0.779" stop-color="#c0c0c0"/><stop offset="1.000" stop-color="#b3b3b3"/></linearGradient><linearGradient id="s64" gradientUnits="userSpaceOnUse" x1="1336.3" y1="715.3" x2="1179.8" y2="610.5"><stop offset="0.000" stop-color="#797979"/><stop offset="0.155" stop-color="#c2c2c2"/><stop offset="0.431" stop-color="#d7d7d7"/><stop offset="0.771" stop-color="#e9e9e9"/><stop offset="1.000" stop-color="#b0b0b0"/></linearGradient><linearGradient id="s65" gradientUnits="userSpaceOnUse" x1="1332" y1="709.3" x2="1186.6" y2="607.4"><stop offset="0.000" stop-color="#9c9c9c"/><stop offset="0.139" stop-color="#d5d5d5"/><stop offset="0.412" stop-color="#dfdfdf"/><stop offset="0.762" stop-color="#bebebe"/><stop offset="1.000" stop-color="#a2a2a2"/></linearGradient><linearGradient id="s66" gradientUnits="userSpaceOnUse" x1="1327.9" y1="703.5" x2="1193" y2="604.4"><stop offset="0.000" stop-color="#b6b6b6"/><stop offset="0.123" stop-color="#dadada"/><stop offset="0.392" stop-color="#cdcdcd"/><stop offset="0.751" stop-color="#a9a9a9"/><stop offset="1.000" stop-color="#8b8b8b"/></linearGradient><linearGradient id="s67" gradientUnits="userSpaceOnUse" x1="1324.5" y1="698.6" x2="1198.4" y2="601.9"><stop offset="0.000" stop-color="#c5c5c5"/><stop offset="0.108" stop-color="#d1d1d1"/><stop offset="0.373" stop-color="#b4b4b4"/><stop offset="0.742" stop-color="#8b8b8b"/><stop offset="1.000" stop-color="#6d6d6d"/></linearGradient><linearGradient id="s68" gradientUnits="userSpaceOnUse" x1="1321.9" y1="695.1" x2="1202.4" y2="600.1"><stop offset="0.000" stop-color="#c8c8c8"/><stop offset="0.097" stop-color="#bababa"/><stop offset="0.358" stop-color="#919191"/><stop offset="0.734" stop-color="#676767"/><stop offset="1.000" stop-color="#4b4b4b"/></linearGradient><linearGradient id="s69" gradientUnits="userSpaceOnUse" x1="1319.5" y1="691.6" x2="1206.3" y2="598.3"><stop offset="0.000" stop-color="#bfbfbf"/><stop offset="0.085" stop-color="#9b9b9b"/><stop offset="0.342" stop-color="#6b6b6b"/><stop offset="0.726" stop-color="#434343"/><stop offset="1.000" stop-color="#404040"/></linearGradient><linearGradient id="s70" gradientUnits="userSpaceOnUse" x1="1165.5" y1="630.6" x2="1194.8" y2="396.2"><stop offset="0.000" stop-color="#808080"/><stop offset="0.295" stop-color="#939393"/><stop offset="0.601" stop-color="#a9a9a9"/><stop offset="0.871" stop-color="#bfbfbf"/><stop offset="1.000" stop-color="#bfbfbf"/></linearGradient><linearGradient id="s71" gradientUnits="userSpaceOnUse" x1="1169.3" y1="628.6" x2="1196.7" y2="400.1"><stop offset="0.000" stop-color="#999999"/><stop offset="0.299" stop-color="#9f9f9f"/><stop offset="0.607" stop-color="#acacac"/><stop offset="0.874" stop-color="#c5c5c5"/><stop offset="1.000" stop-color="#cfcfcf"/></linearGradient><linearGradient id="s72" gradientUnits="userSpaceOnUse" x1="1173.2" y1="626.6" x2="1198.5" y2="404"><stop offset="0.000" stop-color="#adadad"/><stop offset="0.304" stop-color="#a5a5a5"/><stop offset="0.613" stop-color="#a6a6a6"/><stop offset="0.878" stop-color="#bfbfbf"/><stop offset="1.000" stop-color="#d3d3d3"/></linearGradient><linearGradient id="s73" gradientUnits="userSpaceOnUse" x1="1178.5" y1="623.9" x2="1201.1" y2="409.5"><stop offset="0.000" stop-color="#b7b7b7"/><stop offset="0.310" stop-color="#a1a1a1"/><stop offset="0.622" stop-color="#979797"/><stop offset="0.883" stop-color="#aeaeae"/><stop offset="1.000" stop-color="#cbcbcb"/></linearGradient><linearGradient id="s74" gradientUnits="userSpaceOnUse" x1="1184.8" y1="620.7" x2="1204.1" y2="415.8"><stop offset="0.000" stop-color="#b6b6b6"/><stop offset="0.318" stop-color="#949494"/><stop offset="0.634" stop-color="#7f7f7f"/><stop offset="0.889" stop-color="#929292"/><stop offset="1.000" stop-color="#b5b5b5"/></linearGradient><linearGradient id="s75" gradientUnits="userSpaceOnUse" x1="1191.4" y1="617.3" x2="1207.3" y2="422.5"><stop offset="0.000" stop-color="#a9a9a9"/><stop offset="0.327" stop-color="#7e7e7e"/><stop offset="0.648" stop-color="#616161"/><stop offset="0.897" stop-color="#6e6e6e"/><stop offset="1.000" stop-color="#939393"/></linearGradient><linearGradient id="s76" gradientUnits="userSpaceOnUse" x1="1197.7" y1="614.1" x2="1210.3" y2="428.9"><stop offset="0.000" stop-color="#929292"/><stop offset="0.337" stop-color="#636363"/><stop offset="0.662" stop-color="#404040"/><stop offset="0.904" stop-color="#464646"/><stop offset="1.000" stop-color="#6a6a6a"/></linearGradient><linearGradient id="s77" gradientUnits="userSpaceOnUse" x1="1203" y1="611.3" x2="1212.9" y2="434.3"><stop offset="0.000" stop-color="#747474"/><stop offset="0.347" stop-color="#454545"/><stop offset="0.675" stop-color="#404040"/><stop offset="0.911" stop-color="#404040"/><stop offset="1.000" stop-color="#404040"/></linearGradient><linearGradient id="s78" gradientUnits="userSpaceOnUse" x1="1206.9" y1="609.3" x2="1214.7" y2="438.3"><stop offset="0.000" stop-color="#515151"/><stop offset="0.354" stop-color="#404040"/><stop offset="0.685" stop-color="#404040"/><stop offset="0.917" stop-color="#404040"/><stop offset="1.000" stop-color="#404040"/></linearGradient><linearGradient id="s79" gradientUnits="userSpaceOnUse" x1="1210.7" y1="607.4" x2="1216.6" y2="442.2"><stop offset="0.000" stop-color="#404040"/><stop offset="0.361" stop-color="#404040"/><stop offset="0.696" stop-color="#404040"/><stop offset="0.922" stop-color="#404040"/><stop offset="1.000" stop-color="#404040"/></linearGradient><clipPath id="c4"><path d="M1262.4 725.5 1258.1 727.4 1252.7 728.4 1245.6 728 1236.9 725.9 1226.8 721.6 1215.8 715.1 1204.2 706.4 1192.6 695.6 1181.2 682.9 1170.3 668.5 1160.2 652.7 1151.1 635.8 1143.4 618.3 1137.1 600.3 1132.4 582.3 1129.4 564.8 1128 547.9 1128.4 532.2 1130.4 518 1133.8 505.5 1138.5 495 1144.1 486.5 1150.5 480 1157.6 475.1 1134.2 431.8 1118.8 442.3 1105.8 455.7 1095.3 471.4 1087.5 489.1 1082.2 508.1 1079.4 528.3 1078.9 549.3 1080.5 570.9 1084.3 592.8 1090.1 614.7 1097.7 636.3 1106.9 657.4 1117.7 677.6 1129.9 696.6 1143.2 714.2 1157.5 730.1 1172.6 744.1 1188.4 756 1204.7 765.6 1221.4 772.6 1238.4 776.7 1255.6 777.5 1272.4 774.5 1288 767.5Z"/></clipPath><linearGradient id="s80" gradientUnits="userSpaceOnUse" x1="1292.3" y1="765.7" x2="1103.6" y2="652.2"><stop offset="0.000" stop-color="#404040"/><stop offset="0.194" stop-color="#404040"/><stop offset="0.478" stop-color="#585858"/><stop offset="0.794" stop-color="#767676"/><stop offset="1.000" stop-color="#838383"/></linearGradient><linearGradient id="s81" gradientUnits="userSpaceOnUse" x1="1289.8" y1="762.2" x2="1107.5" y2="650.4"><stop offset="0.000" stop-color="#404040"/><stop offset="0.187" stop-color="#4c4c4c"/><stop offset="0.470" stop-color="#808080"/><stop offset="0.790" stop-color="#949494"/><stop offset="1.000" stop-color="#9a9a9a"/></linearGradient><linearGradient id="s82" gradientUnits="userSpaceOnUse" x1="1287.3" y1="758.6" x2="1111.4" y2="648.6"><stop offset="0.000" stop-color="#404040"/><stop offset="0.180" stop-color="#7a7a7a"/><stop offset="0.461" stop-color="#a6a6a6"/><stop offset="0.786" stop-color="#afafaf"/><stop offset="1.000" stop-color="#acacac"/></linearGradient><linearGradient id="s83" gradientUnits="userSpaceOnUse" x1="1283.8" y1="753.7" x2="1116.9" y2="646.1"><stop offset="0.000" stop-color="#505050"/><stop offset="0.169" stop-color="#a3a3a3"/><stop offset="0.448" stop-color="#c4c4c4"/><stop offset="0.779" stop-color="#c0c0c0"/><stop offset="1.000" stop-color="#b3b3b3"/></linearGradient><linearGradient id="s84" gradientUnits="userSpaceOnUse" x1="1279.7" y1="748" x2="1123.3" y2="643.1"><stop offset="0.000" stop-color="#797979"/><stop offset="0.155" stop-color="#c2c2c2"/><stop offset="0.431" stop-color="#d7d7d7"/><stop offset="0.771" stop-color="#e9e9e9"/><stop offset="1.000" stop-color="#b0b0b0"/></linearGradient><linearGradient id="s85" gradientUnits="userSpaceOnUse" x1="1275.5" y1="741.9" x2="1130" y2="640"><stop offset="0.000" stop-color="#9c9c9c"/><stop offset="0.139" stop-color="#d5d5d5"/><stop offset="0.412" stop-color="#dfdfdf"/><stop offset="0.762" stop-color="#bebebe"/><stop offset="1.000" stop-color="#a2a2a2"/></linearGradient><linearGradient id="s86" gradientUnits="userSpaceOnUse" x1="1271.4" y1="736.2" x2="1136.4" y2="637"><stop offset="0.000" stop-color="#b6b6b6"/><stop offset="0.123" stop-color="#dadada"/><stop offset="0.392" stop-color="#cdcdcd"/><stop offset="0.751" stop-color="#a9a9a9"/><stop offset="1.000" stop-color="#8b8b8b"/></linearGradient><linearGradient id="s87" gradientUnits="userSpaceOnUse" x1="1267.9" y1="731.3" x2="1141.9" y2="634.5"><stop offset="0.000" stop-color="#c5c5c5"/><stop offset="0.108" stop-color="#d1d1d1"/><stop offset="0.373" stop-color="#b4b4b4"/><stop offset="0.742" stop-color="#8b8b8b"/><stop offset="1.000" stop-color="#6d6d6d"/></linearGradient><linearGradient id="s88" gradientUnits="userSpaceOnUse" x1="1265.4" y1="727.7" x2="1145.8" y2="632.7"><stop offset="0.000" stop-color="#c8c8c8"/><stop offset="0.097" stop-color="#bababa"/><stop offset="0.358" stop-color="#919191"/><stop offset="0.734" stop-color="#676767"/><stop offset="1.000" stop-color="#4b4b4b"/></linearGradient><linearGradient id="s89" gradientUnits="userSpaceOnUse" x1="1262.9" y1="724.2" x2="1149.7" y2="630.9"><stop offset="0.000" stop-color="#bfbfbf"/><stop offset="0.085" stop-color="#9b9b9b"/><stop offset="0.342" stop-color="#6b6b6b"/><stop offset="0.726" stop-color="#434343"/><stop offset="1.000" stop-color="#404040"/></linearGradient><linearGradient id="s90" gradientUnits="userSpaceOnUse" x1="1108.9" y1="663.2" x2="1138.3" y2="428.9"><stop offset="0.000" stop-color="#808080"/><stop offset="0.295" stop-color="#939393"/><stop offset="0.601" stop-color="#a9a9a9"/><stop offset="0.871" stop-color="#bfbfbf"/><stop offset="1.000" stop-color="#bfbfbf"/></linearGradient><linearGradient id="s91" gradientUnits="userSpaceOnUse" x1="1112.7" y1="661.2" x2="1140.1" y2="432.7"><stop offset="0.000" stop-color="#999999"/><stop offset="0.299" stop-color="#9f9f9f"/><stop offset="0.607" stop-color="#acacac"/><stop offset="0.874" stop-color="#c5c5c5"/><stop offset="1.000" stop-color="#cfcfcf"/></linearGradient><linearGradient id="s92" gradientUnits="userSpaceOnUse" x1="1116.6" y1="659.3" x2="1142" y2="436.7"><stop offset="0.000" stop-color="#adadad"/><stop offset="0.304" stop-color="#a5a5a5"/><stop offset="0.613" stop-color="#a6a6a6"/><stop offset="0.878" stop-color="#bfbfbf"/><stop offset="1.000" stop-color="#d3d3d3"/></linearGradient><linearGradient id="s93" gradientUnits="userSpaceOnUse" x1="1122" y1="656.5" x2="1144.5" y2="442.1"><stop offset="0.000" stop-color="#b7b7b7"/><stop offset="0.310" stop-color="#a1a1a1"/><stop offset="0.622" stop-color="#979797"/><stop offset="0.883" stop-color="#aeaeae"/><stop offset="1.000" stop-color="#cbcbcb"/></linearGradient><linearGradient id="s94" gradientUnits="userSpaceOnUse" x1="1128.2" y1="653.3" x2="1147.5" y2="448.5"><stop offset="0.000" stop-color="#b6b6b6"/><stop offset="0.318" stop-color="#949494"/><stop offset="0.634" stop-color="#7f7f7f"/><stop offset="0.889" stop-color="#929292"/><stop offset="1.000" stop-color="#b5b5b5"/></linearGradient><linearGradient id="s95" gradientUnits="userSpaceOnUse" x1="1134.8" y1="649.9" x2="1150.7" y2="455.2"><stop offset="0.000" stop-color="#a9a9a9"/><stop offset="0.327" stop-color="#7e7e7e"/><stop offset="0.648" stop-color="#616161"/><stop offset="0.897" stop-color="#6e6e6e"/><stop offset="1.000" stop-color="#939393"/></linearGradient><linearGradient id="s96" gradientUnits="userSpaceOnUse" x1="1141.1" y1="646.7" x2="1153.7" y2="461.6"><stop offset="0.000" stop-color="#929292"/><stop offset="0.337" stop-color="#636363"/><stop offset="0.662" stop-color="#404040"/><stop offset="0.904" stop-color="#464646"/><stop offset="1.000" stop-color="#6a6a6a"/></linearGradient><linearGradient id="s97" gradientUnits="userSpaceOnUse" x1="1146.4" y1="644" x2="1156.3" y2="467"><stop offset="0.000" stop-color="#747474"/><stop offset="0.347" stop-color="#454545"/><stop offset="0.675" stop-color="#404040"/><stop offset="0.911" stop-color="#404040"/><stop offset="1.000" stop-color="#404040"/></linearGradient><linearGradient id="s98" gradientUnits="userSpaceOnUse" x1="1150.3" y1="642" x2="1158.2" y2="470.9"><stop offset="0.000" stop-color="#515151"/><stop offset="0.354" stop-color="#404040"/><stop offset="0.685" stop-color="#404040"/><stop offset="0.917" stop-color="#404040"/><stop offset="1.000" stop-color="#404040"/></linearGradient><linearGradient id="s99" gradientUnits="userSpaceOnUse" x1="1154.1" y1="640" x2="1160" y2="474.8"><stop offset="0.000" stop-color="#404040"/><stop offset="0.361" stop-color="#404040"/><stop offset="0.696" stop-color="#404040"/><stop offset="0.922" stop-color="#404040"/><stop offset="1.000" stop-color="#404040"/></linearGradient><clipPath id="c5"><path d="M1205.8 758.2 1201.5 760.1 1196.1 761 1189 760.6 1180.3 758.5 1170.2 754.3 1159.2 747.8 1147.7 739.1 1136 728.2 1124.6 715.5 1113.7 701.1 1103.6 685.3 1094.6 668.5 1086.8 650.9 1080.5 632.9 1075.8 615 1072.8 597.4 1071.5 580.6 1071.9 564.9 1073.9 550.6 1077.3 538.2 1081.9 527.7 1087.6 519.2 1093.9 512.6 1101.1 507.7 1077.6 464.5 1062.3 475 1049.2 488.3 1038.8 504.1 1030.9 521.7 1025.7 540.8 1022.8 560.9 1022.3 582 1024 603.6 1027.8 625.5 1033.5 647.4 1041.1 669 1050.4 690 1061.2 710.2 1073.3 729.2 1086.6 746.8 1100.9 762.7 1116 776.7 1131.8 788.6 1148.1 798.2 1164.8 805.2 1181.8 809.3 1199 810.1 1215.9 807.1 1231.5 800.1Z"/></clipPath><linearGradient id="s100" gradientUnits="userSpaceOnUse" x1="1235.7" y1="798.3" x2="1047" y2="684.9"><stop offset="0.000" stop-color="#404040"/><stop offset="0.194" stop-color="#404040"/><stop offset="0.478" stop-color="#585858"/><stop offset="0.794" stop-color="#767676"/><stop offset="1.000" stop-color="#838383"/></linearGradient><linearGradient id="s101" gradientUnits="userSpaceOnUse" x1="1233.2" y1="794.8" x2="1050.9" y2="683.1"><stop offset="0.000" stop-color="#404040"/><stop offset="0.187" stop-color="#4c4c4c"/><stop offset="0.470" stop-color="#808080"/><stop offset="0.790" stop-color="#949494"/><stop offset="1.000" stop-color="#9a9a9a"/></linearGradient><linearGradient id="s102" gradientUnits="userSpaceOnUse" x1="1230.7" y1="791.3" x2="1054.9" y2="681.2"><stop offset="0.000" stop-color="#404040"/><stop offset="0.180" stop-color="#7a7a7a"/><stop offset="0.461" stop-color="#a6a6a6"/><stop offset="0.786" stop-color="#afafaf"/><stop offset="1.000" stop-color="#acacac"/></linearGradient><linearGradient id="s103" gradientUnits="userSpaceOnUse" x1="1227.3" y1="786.4" x2="1060.3" y2="678.7"><stop offset="0.000" stop-color="#505050"/><stop offset="0.169" stop-color="#a3a3a3"/><stop offset="0.448" stop-color="#c4c4c4"/><stop offset="0.779" stop-color="#c0c0c0"/><stop offset="1.000" stop-color="#b3b3b3"/></linearGradient><linearGradient id="s104" gradientUnits="userSpaceOnUse" x1="1223.2" y1="780.6" x2="1066.7" y2="675.8"><stop offset="0.000" stop-color="#797979"/><stop offset="0.155" stop-color="#c2c2c2"/><stop offset="0.431" stop-color="#d7d7d7"/><stop offset="0.771" stop-color="#e9e9e9"/><stop offset="1.000" stop-color="#b0b0b0"/></linearGradient><linearGradient id="s105" gradientUnits="userSpaceOnUse" x1="1218.9" y1="774.6" x2="1073.4" y2="672.6"><stop offset="0.000" stop-color="#9c9c9c"/><stop offset="0.139" stop-color="#d5d5d5"/><stop offset="0.412" stop-color="#dfdfdf"/><stop offset="0.762" stop-color="#bebebe"/><stop offset="1.000" stop-color="#a2a2a2"/></linearGradient><linearGradient id="s106" gradientUnits="userSpaceOnUse" x1="1214.8" y1="768.8" x2="1079.8" y2="669.7"><stop offset="0.000" stop-color="#b6b6b6"/><stop offset="0.123" stop-color="#dadada"/><stop offset="0.392" stop-color="#cdcdcd"/><stop offset="0.751" stop-color="#a9a9a9"/><stop offset="1.000" stop-color="#8b8b8b"/></linearGradient><linearGradient id="s107" gradientUnits="userSpaceOnUse" x1="1211.3" y1="763.9" x2="1085.3" y2="667.2"><stop offset="0.000" stop-color="#c5c5c5"/><stop offset="0.108" stop-color="#d1d1d1"/><stop offset="0.373" stop-color="#b4b4b4"/><stop offset="0.742" stop-color="#8b8b8b"/><stop offset="1.000" stop-color="#6d6d6d"/></linearGradient><linearGradient id="s108" gradientUnits="userSpaceOnUse" x1="1208.8" y1="760.3" x2="1089.2" y2="665.3"><stop offset="0.000" stop-color="#c8c8c8"/><stop offset="0.097" stop-color="#bababa"/><stop offset="0.358" stop-color="#919191"/><stop offset="0.734" stop-color="#676767"/><stop offset="1.000" stop-color="#4b4b4b"/></linearGradient><linearGradient id="s109" gradientUnits="userSpaceOnUse" x1="1206.3" y1="756.8" x2="1093.1" y2="663.5"><stop offset="0.000" stop-color="#bfbfbf"/><stop offset="0.085" stop-color="#9b9b9b"/><stop offset="0.342" stop-color="#6b6b6b"/><stop offset="0.726" stop-color="#434343"/><stop offset="1.000" stop-color="#404040"/></linearGradient><linearGradient id="s110" gradientUnits="userSpaceOnUse" x1="1052.4" y1="695.8" x2="1081.7" y2="461.5"><stop offset="0.000" stop-color="#808080"/><stop offset="0.295" stop-color="#939393"/><stop offset="0.601" stop-color="#a9a9a9"/><stop offset="0.871" stop-color="#bfbfbf"/><stop offset="1.000" stop-color="#bfbfbf"/></linearGradient><linearGradient id="s111" gradientUnits="userSpaceOnUse" x1="1056.2" y1="693.9" x2="1083.5" y2="465.4"><stop offset="0.000" stop-color="#999999"/><stop offset="0.299" stop-color="#9f9f9f"/><stop offset="0.607" stop-color="#acacac"/><stop offset="0.874" stop-color="#c5c5c5"/><stop offset="1.000" stop-color="#cfcfcf"/></linearGradient><linearGradient id="s112" gradientUnits="userSpaceOnUse" x1="1060.1" y1="691.9" x2="1085.4" y2="469.3"><stop offset="0.000" stop-color="#adadad"/><stop offset="0.304" stop-color="#a5a5a5"/><stop offset="0.613" stop-color="#a6a6a6"/><stop offset="0.878" stop-color="#bfbfbf"/><stop offset="1.000" stop-color="#d3d3d3"/></linearGradient><linearGradient id="s113" gradientUnits="userSpaceOnUse" x1="1065.4" y1="689.2" x2="1088" y2="474.7"><stop offset="0.000" stop-color="#b7b7b7"/><stop offset="0.310" stop-color="#a1a1a1"/><stop offset="0.622" stop-color="#979797"/><stop offset="0.883" stop-color="#aeaeae"/><stop offset="1.000" stop-color="#cbcbcb"/></linearGradient><linearGradient id="s114" gradientUnits="userSpaceOnUse" x1="1071.7" y1="685.9" x2="1091" y2="481.1"><stop offset="0.000" stop-color="#b6b6b6"/><stop offset="0.318" stop-color="#949494"/><stop offset="0.634" stop-color="#7f7f7f"/><stop offset="0.889" stop-color="#929292"/><stop offset="1.000" stop-color="#b5b5b5"/></linearGradient><linearGradient id="s115" gradientUnits="userSpaceOnUse" x1="1078.3" y1="682.6" x2="1094.2" y2="487.8"><stop offset="0.000" stop-color="#a9a9a9"/><stop offset="0.327" stop-color="#7e7e7e"/><stop offset="0.648" stop-color="#616161"/><stop offset="0.897" stop-color="#6e6e6e"/><stop offset="1.000" stop-color="#939393"/></linearGradient><linearGradient id="s116" gradientUnits="userSpaceOnUse" x1="1084.5" y1="679.3" x2="1097.2" y2="494.2"><stop offset="0.000" stop-color="#929292"/><stop offset="0.337" stop-color="#636363"/><stop offset="0.662" stop-color="#404040"/><stop offset="0.904" stop-color="#464646"/><stop offset="1.000" stop-color="#6a6a6a"/></linearGradient><linearGradient id="s117" gradientUnits="userSpaceOnUse" x1="1089.9" y1="676.6" x2="1099.7" y2="499.6"><stop offset="0.000" stop-color="#747474"/><stop offset="0.347" stop-color="#454545"/><stop offset="0.675" stop-color="#404040"/><stop offset="0.911" stop-color="#404040"/><stop offset="1.000" stop-color="#404040"/></linearGradient><linearGradient id="s118" gradientUnits="userSpaceOnUse" x1="1093.8" y1="674.6" x2="1101.6" y2="503.6"><stop offset="0.000" stop-color="#515151"/><stop offset="0.354" stop-color="#404040"/><stop offset="0.685" stop-color="#404040"/><stop offset="0.917" stop-color="#404040"/><stop offset="1.000" stop-color="#404040"/></linearGradient><linearGradient id="s119" gradientUnits="userSpaceOnUse" x1="1097.6" y1="672.6" x2="1103.4" y2="507.4"><stop offset="0.000" stop-color="#404040"/><stop offset="0.361" stop-color="#404040"/><stop offset="0.696" stop-color="#404040"/><stop offset="0.922" stop-color="#404040"/><stop offset="1.000" stop-color="#404040"/></linearGradient><clipPath id="c6"><path d="M1149.2 790.8 1145 792.7 1139.5 793.6 1132.5 793.3 1123.7 791.1 1113.7 786.9 1102.7 780.4 1091.1 771.7 1079.5 760.9 1068 748.1 1057.1 733.7 1047 718 1038 701.1 1030.3 683.5 1024 665.6 1019.3 647.6 1016.2 630 1014.9 613.2 1015.3 597.5 1017.3 583.3 1020.7 570.8 1025.4 560.3 1031 551.8 1037.4 545.2 1044.5 540.4 1021.1 497.1 1005.7 507.6 992.7 521 982.2 536.7 974.4 554.3 969.1 573.4 966.3 593.6 965.7 614.6 967.4 636.2 971.2 658.1 976.9 680 984.5 701.6 993.8 722.7 1004.6 742.8 1016.8 761.9 1030.1 779.4 1044.4 795.4 1059.5 809.4 1075.3 821.3 1091.5 830.8 1108.2 837.8 1125.3 841.9 1142.5 842.7 1159.3 839.8 1174.9 832.8Z"/></clipPath><linearGradient id="s120" gradientUnits="userSpaceOnUse" x1="1179.2" y1="831" x2="990.5" y2="717.5"><stop offset="0.000" stop-color="#404040"/><stop offset="0.194" stop-color="#404040"/><stop offset="0.478" stop-color="#585858"/><stop offset="0.794" stop-color="#767676"/><stop offset="1.000" stop-color="#838383"/></linearGradient><linearGradient id="s121" gradientUnits="userSpaceOnUse" x1="1176.7" y1="827.5" x2="994.4" y2="715.7"><stop offset="0.000" stop-color="#404040"/><stop offset="0.187" stop-color="#4c4c4c"/><stop offset="0.470" stop-color="#808080"/><stop offset="0.790" stop-color="#949494"/><stop offset="1.000" stop-color="#9a9a9a"/></linearGradient><linearGradient id="s122" gradientUnits="userSpaceOnUse" x1="1174.2" y1="823.9" x2="998.3" y2="713.9"><stop offset="0.000" stop-color="#404040"/><stop offset="0.180" stop-color="#7a7a7a"/><stop offset="0.461" stop-color="#a6a6a6"/><stop offset="0.786" stop-color="#afafaf"/><stop offset="1.000" stop-color="#acacac"/></linearGradient><linearGradient id="s123" gradientUnits="userSpaceOnUse" x1="1170.7" y1="819" x2="1003.8" y2="711.4"><stop offset="0.000" stop-color="#505050"/><stop offset="0.169" stop-color="#a3a3a3"/><stop offset="0.448" stop-color="#c4c4c4"/><stop offset="0.779" stop-color="#c0c0c0"/><stop offset="1.000" stop-color="#b3b3b3"/></linearGradient><linearGradient id="s124" gradientUnits="userSpaceOnUse" x1="1166.6" y1="813.2" x2="1010.2" y2="708.4"><stop offset="0.000" stop-color="#797979"/><stop offset="0.155" stop-color="#c2c2c2"/><stop offset="0.431" stop-color="#d7d7d7"/><stop offset="0.771" stop-color="#e9e9e9"/><stop offset="1.000" stop-color="#b0b0b0"/></linearGradient><linearGradient id="s125" gradientUnits="userSpaceOnUse" x1="1162.3" y1="807.2" x2="1016.9" y2="705.3"><stop offset="0.000" stop-color="#9c9c9c"/><stop offset="0.139" stop-color="#d5d5d5"/><stop offset="0.412" stop-color="#dfdfdf"/><stop offset="0.762" stop-color="#bebebe"/><stop offset="1.000" stop-color="#a2a2a2"/></linearGradient><linearGradient id="s126" gradientUnits="userSpaceOnUse" x1="1158.3" y1="801.4" x2="1023.3" y2="702.3"><stop offset="0.000" stop-color="#b6b6b6"/><stop offset="0.123" stop-color="#dadada"/><stop offset="0.392" stop-color="#cdcdcd"/><stop offset="0.751" stop-color="#a9a9a9"/><stop offset="1.000" stop-color="#8b8b8b"/></linearGradient><linearGradient id="s127" gradientUnits="userSpaceOnUse" x1="1154.8" y1="796.5" x2="1028.7" y2="699.8"><stop offset="0.000" stop-color="#c5c5c5"/><stop offset="0.108" stop-color="#d1d1d1"/><stop offset="0.373" stop-color="#b4b4b4"/><stop offset="0.742" stop-color="#8b8b8b"/><stop offset="1.000" stop-color="#6d6d6d"/></linearGradient><linearGradient id="s128" gradientUnits="userSpaceOnUse" x1="1152.3" y1="793" x2="1032.7" y2="698"><stop offset="0.000" stop-color="#c8c8c8"/><stop offset="0.097" stop-color="#bababa"/><stop offset="0.358" stop-color="#919191"/><stop offset="0.734" stop-color="#676767"/><stop offset="1.000" stop-color="#4b4b4b"/></linearGradient><linearGradient id="s129" gradientUnits="userSpaceOnUse" x1="1149.8" y1="789.5" x2="1036.6" y2="696.2"><stop offset="0.000" stop-color="#bfbfbf"/><stop offset="0.085" stop-color="#9b9b9b"/><stop offset="0.342" stop-color="#6b6b6b"/><stop offset="0.726" stop-color="#434343"/><stop offset="1.000" stop-color="#404040"/></linearGradient><linearGradient id="s130" gradientUnits="userSpaceOnUse" x1="995.8" y1="728.5" x2="1025.1" y2="494.1"><stop offset="0.000" stop-color="#808080"/><stop offset="0.295" stop-color="#939393"/><stop offset="0.601" stop-color="#a9a9a9"/><stop offset="0.871" stop-color="#bfbfbf"/><stop offset="1.000" stop-color="#bfbfbf"/></linearGradient><linearGradient id="s131" gradientUnits="userSpaceOnUse" x1="999.6" y1="726.5" x2="1027" y2="498"><stop offset="0.000" stop-color="#999999"/><stop offset="0.299" stop-color="#9f9f9f"/><stop offset="0.607" stop-color="#acacac"/><stop offset="0.874" stop-color="#c5c5c5"/><stop offset="1.000" stop-color="#cfcfcf"/></linearGradient><linearGradient id="s132" gradientUnits="userSpaceOnUse" x1="1003.5" y1="724.5" x2="1028.8" y2="502"><stop offset="0.000" stop-color="#adadad"/><stop offset="0.304" stop-color="#a5a5a5"/><stop offset="0.613" stop-color="#a6a6a6"/><stop offset="0.878" stop-color="#bfbfbf"/><stop offset="1.000" stop-color="#d3d3d3"/></linearGradient><linearGradient id="s133" gradientUnits="userSpaceOnUse" x1="1008.8" y1="721.8" x2="1031.4" y2="507.4"><stop offset="0.000" stop-color="#b7b7b7"/><stop offset="0.310" stop-color="#a1a1a1"/><stop offset="0.622" stop-color="#979797"/><stop offset="0.883" stop-color="#aeaeae"/><stop offset="1.000" stop-color="#cbcbcb"/></linearGradient><linearGradient id="s134" gradientUnits="userSpaceOnUse" x1="1015.1" y1="718.6" x2="1034.4" y2="513.8"><stop offset="0.000" stop-color="#b6b6b6"/><stop offset="0.318" stop-color="#949494"/><stop offset="0.634" stop-color="#7f7f7f"/><stop offset="0.889" stop-color="#929292"/><stop offset="1.000" stop-color="#b5b5b5"/></linearGradient><linearGradient id="s135" gradientUnits="userSpaceOnUse" x1="1021.7" y1="715.2" x2="1037.6" y2="520.5"><stop offset="0.000" stop-color="#a9a9a9"/><stop offset="0.327" stop-color="#7e7e7e"/><stop offset="0.648" stop-color="#616161"/><stop offset="0.897" stop-color="#6e6e6e"/><stop offset="1.000" stop-color="#939393"/></linearGradient><linearGradient id="s136" gradientUnits="userSpaceOnUse" x1="1028" y1="712" x2="1040.6" y2="526.8"><stop offset="0.000" stop-color="#929292"/><stop offset="0.337" stop-color="#636363"/><stop offset="0.662" stop-color="#404040"/><stop offset="0.904" stop-color="#464646"/><stop offset="1.000" stop-color="#6a6a6a"/></linearGradient><linearGradient id="s137" gradientUnits="userSpaceOnUse" x1="1033.3" y1="709.2" x2="1043.2" y2="532.3"><stop offset="0.000" stop-color="#747474"/><stop offset="0.347" stop-color="#454545"/><stop offset="0.675" stop-color="#404040"/><stop offset="0.911" stop-color="#404040"/><stop offset="1.000" stop-color="#404040"/></linearGradient><linearGradient id="s138" gradientUnits="userSpaceOnUse" x1="1037.2" y1="707.2" x2="1045" y2="536.2"><stop offset="0.000" stop-color="#515151"/><stop offset="0.354" stop-color="#404040"/><stop offset="0.685" stop-color="#404040"/><stop offset="0.917" stop-color="#404040"/><stop offset="1.000" stop-color="#404040"/></linearGradient><linearGradient id="s139" gradientUnits="userSpaceOnUse" x1="1041" y1="705.3" x2="1046.9" y2="540.1"><stop offset="0.000" stop-color="#404040"/><stop offset="0.361" stop-color="#404040"/><stop offset="0.696" stop-color="#404040"/><stop offset="0.922" stop-color="#404040"/><stop offset="1.000" stop-color="#404040"/></linearGradient><clipPath id="c7"><path d="M1092.7 823.5 1088.4 825.3 1083 826.3 1075.9 825.9 1067.2 823.8 1057.1 819.5 1046.1 813 1034.6 804.3 1022.9 793.5 1011.5 780.8 1000.6 766.4 990.5 750.6 981.5 733.7 973.7 716.2 967.4 698.2 962.7 680.3 959.7 662.7 958.4 645.9 958.7 630.2 960.7 615.9 964.2 603.4 968.8 592.9 974.4 584.4 980.8 577.9 987.9 573 964.5 529.7 949.1 540.2 936.1 553.6 925.6 569.4 917.8 587 912.5 606 909.7 626.2 909.2 647.2 910.9 668.8 914.6 690.7 920.4 712.6 928 734.3 937.2 755.3 948 775.5 960.2 794.5 973.5 812.1 987.8 828 1002.9 842 1018.7 853.9 1035 863.5 1051.7 870.5 1068.7 874.6 1085.9 875.4 1102.7 872.4 1118.3 865.4Z"/></clipPath><linearGradient id="s140" gradientUnits="userSpaceOnUse" x1="1122.6" y1="863.6" x2="933.9" y2="750.1"><stop offset="0.000" stop-color="#404040"/><stop offset="0.194" stop-color="#404040"/><stop offset="0.478" stop-color="#585858"/><stop offset="0.794" stop-color="#767676"/><stop offset="1.000" stop-color="#838383"/></linearGradient><linearGradient id="s141" gradientUnits="userSpaceOnUse" x1="1120.1" y1="860.1" x2="937.8" y2="748.3"><stop offset="0.000" stop-color="#404040"/><stop offset="0.187" stop-color="#4c4c4c"/><stop offset="0.470" stop-color="#808080"/><stop offset="0.790" stop-color="#949494"/><stop offset="1.000" stop-color="#9a9a9a"/></linearGradient><linearGradient id="s142" gradientUnits="userSpaceOnUse" x1="1117.6" y1="856.5" x2="941.7" y2="746.5"><stop offset="0.000" stop-color="#404040"/><stop offset="0.180" stop-color="#7a7a7a"/><stop offset="0.461" stop-color="#a6a6a6"/><stop offset="0.786" stop-color="#afafaf"/><stop offset="1.000" stop-color="#acacac"/></linearGradient><linearGradient id="s143" gradientUnits="userSpaceOnUse" x1="1114.1" y1="851.6" x2="947.2" y2="744"><stop offset="0.000" stop-color="#505050"/><stop offset="0.169" stop-color="#a3a3a3"/><stop offset="0.448" stop-color="#c4c4c4"/><stop offset="0.779" stop-color="#c0c0c0"/><stop offset="1.000" stop-color="#b3b3b3"/></linearGradient><linearGradient id="s144" gradientUnits="userSpaceOnUse" x1="1110.1" y1="845.9" x2="953.6" y2="741"><stop offset="0.000" stop-color="#797979"/><stop offset="0.155" stop-color="#c2c2c2"/><stop offset="0.431" stop-color="#d7d7d7"/><stop offset="0.771" stop-color="#e9e9e9"/><stop offset="1.000" stop-color="#b0b0b0"/></linearGradient><linearGradient id="s145" gradientUnits="userSpaceOnUse" x1="1105.8" y1="839.8" x2="960.3" y2="737.9"><stop offset="0.000" stop-color="#9c9c9c"/><stop offset="0.139" stop-color="#d5d5d5"/><stop offset="0.412" stop-color="#dfdfdf"/><stop offset="0.762" stop-color="#bebebe"/><stop offset="1.000" stop-color="#a2a2a2"/></linearGradient><linearGradient id="s146" gradientUnits="userSpaceOnUse" x1="1101.7" y1="834.1" x2="966.7" y2="735"><stop offset="0.000" stop-color="#b6b6b6"/><stop offset="0.123" stop-color="#dadada"/><stop offset="0.392" stop-color="#cdcdcd"/><stop offset="0.751" stop-color="#a9a9a9"/><stop offset="1.000" stop-color="#8b8b8b"/></linearGradient><linearGradient id="s147" gradientUnits="userSpaceOnUse" x1="1098.2" y1="829.2" x2="972.2" y2="732.4"><stop offset="0.000" stop-color="#c5c5c5"/><stop offset="0.108" stop-color="#d1d1d1"/><stop offset="0.373" stop-color="#b4b4b4"/><stop offset="0.742" stop-color="#8b8b8b"/><stop offset="1.000" stop-color="#6d6d6d"/></linearGradient><linearGradient id="s148" gradientUnits="userSpaceOnUse" x1="1095.7" y1="825.6" x2="976.1" y2="730.6"><stop offset="0.000" stop-color="#c8c8c8"/><stop offset="0.097" stop-color="#bababa"/><stop offset="0.358" stop-color="#919191"/><stop offset="0.734" stop-color="#676767"/><stop offset="1.000" stop-color="#4b4b4b"/></linearGradient><linearGradient id="s149" gradientUnits="userSpaceOnUse" x1="1093.2" y1="822.1" x2="980" y2="728.8"><stop offset="0.000" stop-color="#bfbfbf"/><stop offset="0.085" stop-color="#9b9b9b"/><stop offset="0.342" stop-color="#6b6b6b"/><stop offset="0.726" stop-color="#434343"/><stop offset="1.000" stop-color="#404040"/></linearGradient><linearGradient id="s150" gradientUnits="userSpaceOnUse" x1="939.2" y1="761.1" x2="968.6" y2="526.8"><stop offset="0.000" stop-color="#808080"/><stop offset="0.295" stop-color="#939393"/><stop offset="0.601" stop-color="#a9a9a9"/><stop offset="0.871" stop-color="#bfbfbf"/><stop offset="1.000" stop-color="#bfbfbf"/></linearGradient><linearGradient id="s151" gradientUnits="userSpaceOnUse" x1="943.1" y1="759.2" x2="970.4" y2="530.7"><stop offset="0.000" stop-color="#999999"/><stop offset="0.299" stop-color="#9f9f9f"/><stop offset="0.607" stop-color="#acacac"/><stop offset="0.874" stop-color="#c5c5c5"/><stop offset="1.000" stop-color="#cfcfcf"/></linearGradient><linearGradient id="s152" gradientUnits="userSpaceOnUse" x1="946.9" y1="757.2" x2="972.3" y2="534.6"><stop offset="0.000" stop-color="#adadad"/><stop offset="0.304" stop-color="#a5a5a5"/><stop offset="0.613" stop-color="#a6a6a6"/><stop offset="0.878" stop-color="#bfbfbf"/><stop offset="1.000" stop-color="#d3d3d3"/></linearGradient><linearGradient id="s153" gradientUnits="userSpaceOnUse" x1="952.3" y1="754.4" x2="974.8" y2="540"><stop offset="0.000" stop-color="#b7b7b7"/><stop offset="0.310" stop-color="#a1a1a1"/><stop offset="0.622" stop-color="#979797"/><stop offset="0.883" stop-color="#aeaeae"/><stop offset="1.000" stop-color="#cbcbcb"/></linearGradient><linearGradient id="s154" gradientUnits="userSpaceOnUse" x1="958.6" y1="751.2" x2="977.9" y2="546.4"><stop offset="0.000" stop-color="#b6b6b6"/><stop offset="0.318" stop-color="#949494"/><stop offset="0.634" stop-color="#7f7f7f"/><stop offset="0.889" stop-color="#929292"/><stop offset="1.000" stop-color="#b5b5b5"/></linearGradient><linearGradient id="s155" gradientUnits="userSpaceOnUse" x1="965.2" y1="747.8" x2="981" y2="553.1"><stop offset="0.000" stop-color="#a9a9a9"/><stop offset="0.327" stop-color="#7e7e7e"/><stop offset="0.648" stop-color="#616161"/><stop offset="0.897" stop-color="#6e6e6e"/><stop offset="1.000" stop-color="#939393"/></linearGradient><linearGradient id="s156" gradientUnits="userSpaceOnUse" x1="971.4" y1="744.6" x2="984.1" y2="559.5"><stop offset="0.000" stop-color="#929292"/><stop offset="0.337" stop-color="#636363"/><stop offset="0.662" stop-color="#404040"/><stop offset="0.904" stop-color="#464646"/><stop offset="1.000" stop-color="#6a6a6a"/></linearGradient><linearGradient id="s157" gradientUnits="userSpaceOnUse" x1="976.8" y1="741.9" x2="986.6" y2="564.9"><stop offset="0.000" stop-color="#747474"/><stop offset="0.347" stop-color="#454545"/><stop offset="0.675" stop-color="#404040"/><stop offset="0.911" stop-color="#404040"/><stop offset="1.000" stop-color="#404040"/></linearGradient><linearGradient id="s158" gradientUnits="userSpaceOnUse" x1="980.6" y1="739.9" x2="988.5" y2="568.8"><stop offset="0.000" stop-color="#515151"/><stop offset="0.354" stop-color="#404040"/><stop offset="0.685" stop-color="#404040"/><stop offset="0.917" stop-color="#404040"/><stop offset="1.000" stop-color="#404040"/></linearGradient><linearGradient id="s159" gradientUnits="userSpaceOnUse" x1="984.5" y1="737.9" x2="990.3" y2="572.7"><stop offset="0.000" stop-color="#404040"/><stop offset="0.361" stop-color="#404040"/><stop offset="0.696" stop-color="#404040"/><stop offset="0.922" stop-color="#404040"/><stop offset="1.000" stop-color="#404040"/></linearGradient><clipPath id="c8"><path d="M1036.1 856.1 1031.9 858 1026.4 858.9 1019.3 858.5 1010.6 856.4 1000.5 852.2 989.5 845.7 978 837 966.3 826.2 954.9 813.4 944 799 933.9 783.2 924.9 766.4 917.2 748.8 910.9 730.9 906.2 712.9 903.1 695.3 901.8 678.5 902.2 662.8 904.2 648.6 907.6 636.1 912.3 625.6 917.9 617.1 924.3 610.5 931.4 605.7 908 562.4 892.6 572.9 879.5 586.3 869.1 602 861.2 619.6 856 638.7 853.1 658.9 852.6 679.9 854.3 701.5 858.1 723.4 863.8 745.3 871.4 766.9 880.7 787.9 891.5 808.1 903.6 827.1 917 844.7 931.3 860.6 946.4 874.7 962.1 886.5 978.4 896.1 995.1 903.1 1012.2 907.2 1029.3 908 1046.2 905.1 1061.8 898.1Z"/></clipPath><linearGradient id="s160" gradientUnits="userSpaceOnUse" x1="1066" y1="896.2" x2="877.3" y2="782.8"><stop offset="0.000" stop-color="#404040"/><stop offset="0.194" stop-color="#404040"/><stop offset="0.478" stop-color="#585858"/><stop offset="0.794" stop-color="#767676"/><stop offset="1.000" stop-color="#838383"/></linearGradient><linearGradient id="s161" gradientUnits="userSpaceOnUse" x1="1063.6" y1="892.7" x2="881.2" y2="781"><stop offset="0.000" stop-color="#404040"/><stop offset="0.187" stop-color="#4c4c4c"/><stop offset="0.470" stop-color="#808080"/><stop offset="0.790" stop-color="#949494"/><stop offset="1.000" stop-color="#9a9a9a"/></linearGradient><linearGradient id="s162" gradientUnits="userSpaceOnUse" x1="1061" y1="889.2" x2="885.2" y2="779.2"><stop offset="0.000" stop-color="#404040"/><stop offset="0.180" stop-color="#7a7a7a"/><stop offset="0.461" stop-color="#a6a6a6"/><stop offset="0.786" stop-color="#afafaf"/><stop offset="1.000" stop-color="#acacac"/></linearGradient><linearGradient id="s163" gradientUnits="userSpaceOnUse" x1="1057.6" y1="884.3" x2="890.6" y2="776.6"><stop offset="0.000" stop-color="#505050"/><stop offset="0.169" stop-color="#a3a3a3"/><stop offset="0.448" stop-color="#c4c4c4"/><stop offset="0.779" stop-color="#c0c0c0"/><stop offset="1.000" stop-color="#b3b3b3"/></linearGradient><linearGradient id="s164" gradientUnits="userSpaceOnUse" x1="1053.5" y1="878.5" x2="897" y2="773.7"><stop offset="0.000" stop-color="#797979"/><stop offset="0.155" stop-color="#c2c2c2"/><stop offset="0.431" stop-color="#d7d7d7"/><stop offset="0.771" stop-color="#e9e9e9"/><stop offset="1.000" stop-color="#b0b0b0"/></linearGradient><linearGradient id="s165" gradientUnits="userSpaceOnUse" x1="1049.2" y1="872.5" x2="903.8" y2="770.6"><stop offset="0.000" stop-color="#9c9c9c"/><stop offset="0.139" stop-color="#d5d5d5"/><stop offset="0.412" stop-color="#dfdfdf"/><stop offset="0.762" stop-color="#bebebe"/><stop offset="1.000" stop-color="#a2a2a2"/></linearGradient><linearGradient id="s166" gradientUnits="userSpaceOnUse" x1="1045.1" y1="866.7" x2="910.2" y2="767.6"><stop offset="0.000" stop-color="#b6b6b6"/><stop offset="0.123" stop-color="#dadada"/><stop offset="0.392" stop-color="#cdcdcd"/><stop offset="0.751" stop-color="#a9a9a9"/><stop offset="1.000" stop-color="#8b8b8b"/></linearGradient><linearGradient id="s167" gradientUnits="userSpaceOnUse" x1="1041.7" y1="861.8" x2="915.6" y2="765.1"><stop offset="0.000" stop-color="#c5c5c5"/><stop offset="0.108" stop-color="#d1d1d1"/><stop offset="0.373" stop-color="#b4b4b4"/><stop offset="0.742" stop-color="#8b8b8b"/><stop offset="1.000" stop-color="#6d6d6d"/></linearGradient><linearGradient id="s168" gradientUnits="userSpaceOnUse" x1="1039.1" y1="858.3" x2="919.6" y2="763.2"><stop offset="0.000" stop-color="#c8c8c8"/><stop offset="0.097" stop-color="#bababa"/><stop offset="0.358" stop-color="#919191"/><stop offset="0.734" stop-color="#676767"/><stop offset="1.000" stop-color="#4b4b4b"/></linearGradient><linearGradient id="s169" gradientUnits="userSpaceOnUse" x1="1036.7" y1="854.8" x2="923.5" y2="761.4"><stop offset="0.000" stop-color="#bfbfbf"/><stop offset="0.085" stop-color="#9b9b9b"/><stop offset="0.342" stop-color="#6b6b6b"/><stop offset="0.726" stop-color="#434343"/><stop offset="1.000" stop-color="#404040"/></linearGradient><linearGradient id="s170" gradientUnits="userSpaceOnUse" x1="882.7" y1="793.8" x2="912" y2="559.4"><stop offset="0.000" stop-color="#808080"/><stop offset="0.295" stop-color="#939393"/><stop offset="0.601" stop-color="#a9a9a9"/><stop offset="0.871" stop-color="#bfbfbf"/><stop offset="1.000" stop-color="#bfbfbf"/></linearGradient><linearGradient id="s171" gradientUnits="userSpaceOnUse" x1="886.5" y1="791.8" x2="913.9" y2="563.3"><stop offset="0.000" stop-color="#999999"/><stop offset="0.299" stop-color="#9f9f9f"/><stop offset="0.607" stop-color="#acacac"/><stop offset="0.874" stop-color="#c5c5c5"/><stop offset="1.000" stop-color="#cfcfcf"/></linearGradient><linearGradient id="s172" gradientUnits="userSpaceOnUse" x1="890.4" y1="789.8" x2="915.7" y2="567.2"><stop offset="0.000" stop-color="#adadad"/><stop offset="0.304" stop-color="#a5a5a5"/><stop offset="0.613" stop-color="#a6a6a6"/><stop offset="0.878" stop-color="#bfbfbf"/><stop offset="1.000" stop-color="#d3d3d3"/></linearGradient><linearGradient id="s173" gradientUnits="userSpaceOnUse" x1="895.7" y1="787.1" x2="918.3" y2="572.7"><stop offset="0.000" stop-color="#b7b7b7"/><stop offset="0.310" stop-color="#a1a1a1"/><stop offset="0.622" stop-color="#979797"/><stop offset="0.883" stop-color="#aeaeae"/><stop offset="1.000" stop-color="#cbcbcb"/></linearGradient><linearGradient id="s174" gradientUnits="userSpaceOnUse" x1="902" y1="783.9" x2="921.3" y2="579"><stop offset="0.000" stop-color="#b6b6b6"/><stop offset="0.318" stop-color="#949494"/><stop offset="0.634" stop-color="#7f7f7f"/><stop offset="0.889" stop-color="#929292"/><stop offset="1.000" stop-color="#b5b5b5"/></linearGradient><linearGradient id="s175" gradientUnits="userSpaceOnUse" x1="908.6" y1="780.5" x2="924.5" y2="585.7"><stop offset="0.000" stop-color="#a9a9a9"/><stop offset="0.327" stop-color="#7e7e7e"/><stop offset="0.648" stop-color="#616161"/><stop offset="0.897" stop-color="#6e6e6e"/><stop offset="1.000" stop-color="#939393"/></linearGradient><linearGradient id="s176" gradientUnits="userSpaceOnUse" x1="914.9" y1="777.2" x2="927.5" y2="592.1"><stop offset="0.000" stop-color="#929292"/><stop offset="0.337" stop-color="#636363"/><stop offset="0.662" stop-color="#404040"/><stop offset="0.904" stop-color="#464646"/><stop offset="1.000" stop-color="#6a6a6a"/></linearGradient><linearGradient id="s177" gradientUnits="userSpaceOnUse" x1="920.2" y1="774.5" x2="930.1" y2="597.5"><stop offset="0.000" stop-color="#747474"/><stop offset="0.347" stop-color="#454545"/><stop offset="0.675" stop-color="#404040"/><stop offset="0.911" stop-color="#404040"/><stop offset="1.000" stop-color="#404040"/></linearGradient><linearGradient id="s178" gradientUnits="userSpaceOnUse" x1="924.1" y1="772.5" x2="931.9" y2="601.5"><stop offset="0.000" stop-color="#515151"/><stop offset="0.354" stop-color="#404040"/><stop offset="0.685" stop-color="#404040"/><stop offset="0.917" stop-color="#404040"/><stop offset="1.000" stop-color="#404040"/></linearGradient><linearGradient id="s179" gradientUnits="userSpaceOnUse" x1="927.9" y1="770.6" x2="933.8" y2="605.4"><stop offset="0.000" stop-color="#404040"/><stop offset="0.361" stop-color="#404040"/><stop offset="0.696" stop-color="#404040"/><stop offset="0.922" stop-color="#404040"/><stop offset="1.000" stop-color="#404040"/></linearGradient><clipPath id="c9"><path d="M979.6 888.7 975.3 890.6 969.9 891.5 962.8 891.2 954.1 889 944 884.8 933 878.3 921.4 869.6 909.8 858.8 898.4 846.1 887.5 831.7 877.4 815.9 868.3 799 860.6 781.4 854.3 763.5 849.6 745.5 846.6 728 845.2 711.1 845.6 695.4 847.6 681.2 851 668.7 855.7 658.2 861.3 649.7 867.7 643.2 874.8 638.3 851.4 595 836 605.5 823 618.9 812.5 634.6 804.7 652.3 799.4 671.3 796.6 691.5 796.1 712.5 797.7 734.1 801.5 756 807.3 777.9 814.9 799.5 824.1 820.6 834.9 840.8 847.1 859.8 860.4 877.4 874.7 893.3 889.8 907.3 905.6 919.2 921.9 928.8 938.6 935.7 955.6 939.9 972.8 940.7 989.6 937.7 1005.2 930.7Z"/></clipPath><linearGradient id="s180" gradientUnits="userSpaceOnUse" x1="1009.5" y1="928.9" x2="820.8" y2="815.4"><stop offset="0.000" stop-color="#404040"/><stop offset="0.194" stop-color="#404040"/><stop offset="0.478" stop-color="#585858"/><stop offset="0.794" stop-color="#767676"/><stop offset="1.000" stop-color="#838383"/></linearGradient><linearGradient id="s181" gradientUnits="userSpaceOnUse" x1="1007" y1="925.4" x2="824.7" y2="813.6"><stop offset="0.000" stop-color="#404040"/><stop offset="0.187" stop-color="#4c4c4c"/><stop offset="0.470" stop-color="#808080"/><stop offset="0.790" stop-color="#949494"/><stop offset="1.000" stop-color="#9a9a9a"/></linearGradient><linearGradient id="s182" gradientUnits="userSpaceOnUse" x1="1004.5" y1="921.8" x2="828.6" y2="811.8"><stop offset="0.000" stop-color="#404040"/><stop offset="0.180" stop-color="#7a7a7a"/><stop offset="0.461" stop-color="#a6a6a6"/><stop offset="0.786" stop-color="#afafaf"/><stop offset="1.000" stop-color="#acacac"/></linearGradient><linearGradient id="s183" gradientUnits="userSpaceOnUse" x1="1001" y1="916.9" x2="834.1" y2="809.3"><stop offset="0.000" stop-color="#505050"/><stop offset="0.169" stop-color="#a3a3a3"/><stop offset="0.448" stop-color="#c4c4c4"/><stop offset="0.779" stop-color="#c0c0c0"/><stop offset="1.000" stop-color="#b3b3b3"/></linearGradient><linearGradient id="s184" gradientUnits="userSpaceOnUse" x1="996.9" y1="911.2" x2="840.5" y2="806.3"><stop offset="0.000" stop-color="#797979"/><stop offset="0.155" stop-color="#c2c2c2"/><stop offset="0.431" stop-color="#d7d7d7"/><stop offset="0.771" stop-color="#e9e9e9"/><stop offset="1.000" stop-color="#b0b0b0"/></linearGradient><linearGradient id="s185" gradientUnits="userSpaceOnUse" x1="992.7" y1="905.1" x2="847.2" y2="803.2"><stop offset="0.000" stop-color="#9c9c9c"/><stop offset="0.139" stop-color="#d5d5d5"/><stop offset="0.412" stop-color="#dfdfdf"/><stop offset="0.762" stop-color="#bebebe"/><stop offset="1.000" stop-color="#a2a2a2"/></linearGradient><linearGradient id="s186" gradientUnits="userSpaceOnUse" x1="988.6" y1="899.4" x2="853.6" y2="800.2"><stop offset="0.000" stop-color="#b6b6b6"/><stop offset="0.123" stop-color="#dadada"/><stop offset="0.392" stop-color="#cdcdcd"/><stop offset="0.751" stop-color="#a9a9a9"/><stop offset="1.000" stop-color="#8b8b8b"/></linearGradient><linearGradient id="s187" gradientUnits="userSpaceOnUse" x1="985.1" y1="894.5" x2="859.1" y2="797.7"><stop offset="0.000" stop-color="#c5c5c5"/><stop offset="0.108" stop-color="#d1d1d1"/><stop offset="0.373" stop-color="#b4b4b4"/><stop offset="0.742" stop-color="#8b8b8b"/><stop offset="1.000" stop-color="#6d6d6d"/></linearGradient><linearGradient id="s188" gradientUnits="userSpaceOnUse" x1="982.6" y1="890.9" x2="863" y2="795.9"><stop offset="0.000" stop-color="#c8c8c8"/><stop offset="0.097" stop-color="#bababa"/><stop offset="0.358" stop-color="#919191"/><stop offset="0.734" stop-color="#676767"/><stop offset="1.000" stop-color="#4b4b4b"/></linearGradient><linearGradient id="s189" gradientUnits="userSpaceOnUse" x1="980.1" y1="887.4" x2="866.9" y2="794.1"><stop offset="0.000" stop-color="#bfbfbf"/><stop offset="0.085" stop-color="#9b9b9b"/><stop offset="0.342" stop-color="#6b6b6b"/><stop offset="0.726" stop-color="#434343"/><stop offset="1.000" stop-color="#404040"/></linearGradient><linearGradient id="s190" gradientUnits="userSpaceOnUse" x1="826.1" y1="826.4" x2="855.5" y2="592.1"><stop offset="0.000" stop-color="#808080"/><stop offset="0.295" stop-color="#939393"/><stop offset="0.601" stop-color="#a9a9a9"/><stop offset="0.871" stop-color="#bfbfbf"/><stop offset="1.000" stop-color="#bfbfbf"/></linearGradient><linearGradient id="s191" gradientUnits="userSpaceOnUse" x1="829.9" y1="824.4" x2="857.3" y2="595.9"><stop offset="0.000" stop-color="#999999"/><stop offset="0.299" stop-color="#9f9f9f"/><stop offset="0.607" stop-color="#acacac"/><stop offset="0.874" stop-color="#c5c5c5"/><stop offset="1.000" stop-color="#cfcfcf"/></linearGradient><linearGradient id="s192" gradientUnits="userSpaceOnUse" x1="833.8" y1="822.4" x2="859.2" y2="599.9"><stop offset="0.000" stop-color="#adadad"/><stop offset="0.304" stop-color="#a5a5a5"/><stop offset="0.613" stop-color="#a6a6a6"/><stop offset="0.878" stop-color="#bfbfbf"/><stop offset="1.000" stop-color="#d3d3d3"/></linearGradient><linearGradient id="s193" gradientUnits="userSpaceOnUse" x1="839.2" y1="819.7" x2="861.7" y2="605.3"><stop offset="0.000" stop-color="#b7b7b7"/><stop offset="0.310" stop-color="#a1a1a1"/><stop offset="0.622" stop-color="#979797"/><stop offset="0.883" stop-color="#aeaeae"/><stop offset="1.000" stop-color="#cbcbcb"/></linearGradient><linearGradient id="s194" gradientUnits="userSpaceOnUse" x1="845.4" y1="816.5" x2="864.7" y2="611.7"><stop offset="0.000" stop-color="#b6b6b6"/><stop offset="0.318" stop-color="#949494"/><stop offset="0.634" stop-color="#7f7f7f"/><stop offset="0.889" stop-color="#929292"/><stop offset="1.000" stop-color="#b5b5b5"/></linearGradient><linearGradient id="s195" gradientUnits="userSpaceOnUse" x1="852" y1="813.1" x2="867.9" y2="618.4"><stop offset="0.000" stop-color="#a9a9a9"/><stop offset="0.327" stop-color="#7e7e7e"/><stop offset="0.648" stop-color="#616161"/><stop offset="0.897" stop-color="#6e6e6e"/><stop offset="1.000" stop-color="#939393"/></linearGradient><linearGradient id="s196" gradientUnits="userSpaceOnUse" x1="858.3" y1="809.9" x2="870.9" y2="624.8"><stop offset="0.000" stop-color="#929292"/><stop offset="0.337" stop-color="#636363"/><stop offset="0.662" stop-color="#404040"/><stop offset="0.904" stop-color="#464646"/><stop offset="1.000" stop-color="#6a6a6a"/></linearGradient><linearGradient id="s197" gradientUnits="userSpaceOnUse" x1="863.6" y1="807.2" x2="873.5" y2="630.2"><stop offset="0.000" stop-color="#747474"/><stop offset="0.347" stop-color="#454545"/><stop offset="0.675" stop-color="#404040"/><stop offset="0.911" stop-color="#404040"/><stop offset="1.000" stop-color="#404040"/></linearGradient><linearGradient id="s198" gradientUnits="userSpaceOnUse" x1="867.5" y1="805.2" x2="875.4" y2="634.1"><stop offset="0.000" stop-color="#515151"/><stop offset="0.354" stop-color="#404040"/><stop offset="0.685" stop-color="#404040"/><stop offset="0.917" stop-color="#404040"/><stop offset="1.000" stop-color="#404040"/></linearGradient><linearGradient id="s199" gradientUnits="userSpaceOnUse" x1="871.3" y1="803.2" x2="877.2" y2="638"><stop offset="0.000" stop-color="#404040"/><stop offset="0.361" stop-color="#404040"/><stop offset="0.696" stop-color="#404040"/><stop offset="0.922" stop-color="#404040"/><stop offset="1.000" stop-color="#404040"/></linearGradient><clipPath id="c10"><path d="M923 921.4 918.7 923.3 913.3 924.2 906.2 923.8 897.5 921.7 887.4 917.4 876.4 911 864.9 902.3 853.2 891.4 841.8 878.7 830.9 864.3 820.8 848.5 811.8 831.7 804 814.1 797.7 796.1 793 778.2 790 760.6 788.7 743.8 789.1 728.1 791.1 713.8 794.5 701.4 799.1 690.9 804.8 682.4 811.1 675.8 818.3 670.9 794.8 627.7 779.5 638.1 766.4 651.5 756 667.3 748.1 684.9 742.9 703.9 740 724.1 739.5 745.2 741.2 766.8 745 788.7 750.7 810.6 758.3 832.2 767.6 853.2 778.4 873.4 790.5 892.4 803.8 910 818.1 925.9 833.2 939.9 849 951.8 865.3 961.4 882 968.4 899 972.5 916.2 973.3 933.1 970.3 948.7 963.3Z"/></clipPath><linearGradient id="s200" gradientUnits="userSpaceOnUse" x1="952.9" y1="961.5" x2="764.2" y2="848.1"><stop offset="0.000" stop-color="#404040"/><stop offset="0.194" stop-color="#404040"/><stop offset="0.478" stop-color="#585858"/><stop offset="0.794" stop-color="#767676"/><stop offset="1.000" stop-color="#838383"/></linearGradient><linearGradient id="s201" gradientUnits="userSpaceOnUse" x1="950.4" y1="958" x2="768.1" y2="846.3"><stop offset="0.000" stop-color="#404040"/><stop offset="0.187" stop-color="#4c4c4c"/><stop offset="0.470" stop-color="#808080"/><stop offset="0.790" stop-color="#949494"/><stop offset="1.000" stop-color="#9a9a9a"/></linearGradient><linearGradient id="s202" gradientUnits="userSpaceOnUse" x1="947.9" y1="954.5" x2="772.1" y2="844.4"><stop offset="0.000" stop-color="#404040"/><stop offset="0.180" stop-color="#7a7a7a"/><stop offset="0.461" stop-color="#a6a6a6"/><stop offset="0.786" stop-color="#afafaf"/><stop offset="1.000" stop-color="#acacac"/></linearGradient><linearGradient id="s203" gradientUnits="userSpaceOnUse" x1="944.5" y1="949.6" x2="777.5" y2="841.9"><stop offset="0.000" stop-color="#505050"/><stop offset="0.169" stop-color="#a3a3a3"/><stop offset="0.448" stop-color="#c4c4c4"/><stop offset="0.779" stop-color="#c0c0c0"/><stop offset="1.000" stop-color="#b3b3b3"/></linearGradient><linearGradient id="s204" gradientUnits="userSpaceOnUse" x1="940.4" y1="943.8" x2="783.9" y2="839"><stop offset="0.000" stop-color="#797979"/><stop offset="0.155" stop-color="#c2c2c2"/><stop offset="0.431" stop-color="#d7d7d7"/><stop offset="0.771" stop-color="#e9e9e9"/><stop offset="1.000" stop-color="#b0b0b0"/></linearGradient><linearGradient id="s205" gradientUnits="userSpaceOnUse" x1="936.1" y1="937.7" x2="790.6" y2="835.8"><stop offset="0.000" stop-color="#9c9c9c"/><stop offset="0.139" stop-color="#d5d5d5"/><stop offset="0.412" stop-color="#dfdfdf"/><stop offset="0.762" stop-color="#bebebe"/><stop offset="1.000" stop-color="#a2a2a2"/></linearGradient><linearGradient id="s206" gradientUnits="userSpaceOnUse" x1="932" y1="932" x2="797" y2="832.9"><stop offset="0.000" stop-color="#b6b6b6"/><stop offset="0.123" stop-color="#dadada"/><stop offset="0.392" stop-color="#cdcdcd"/><stop offset="0.751" stop-color="#a9a9a9"/><stop offset="1.000" stop-color="#8b8b8b"/></linearGradient><linearGradient id="s207" gradientUnits="userSpaceOnUse" x1="928.5" y1="927.1" x2="802.5" y2="830.4"><stop offset="0.000" stop-color="#c5c5c5"/><stop offset="0.108" stop-color="#d1d1d1"/><stop offset="0.373" stop-color="#b4b4b4"/><stop offset="0.742" stop-color="#8b8b8b"/><stop offset="1.000" stop-color="#6d6d6d"/></linearGradient><linearGradient id="s208" gradientUnits="userSpaceOnUse" x1="926" y1="923.5" x2="806.4" y2="828.5"><stop offset="0.000" stop-color="#c8c8c8"/><stop offset="0.097" stop-color="#bababa"/><stop offset="0.358" stop-color="#919191"/><stop offset="0.734" stop-color="#676767"/><stop offset="1.000" stop-color="#4b4b4b"/></linearGradient><linearGradient id="s209" gradientUnits="userSpaceOnUse" x1="923.5" y1="920" x2="810.3" y2="826.7"><stop offset="0.000" stop-color="#bfbfbf"/><stop offset="0.085" stop-color="#9b9b9b"/><stop offset="0.342" stop-color="#6b6b6b"/><stop offset="0.726" stop-color="#434343"/><stop offset="1.000" stop-color="#404040"/></linearGradient><linearGradient id="s210" gradientUnits="userSpaceOnUse" x1="769.6" y1="859" x2="798.9" y2="624.7"><stop offset="0.000" stop-color="#808080"/><stop offset="0.295" stop-color="#939393"/><stop offset="0.601" stop-color="#a9a9a9"/><stop offset="0.871" stop-color="#bfbfbf"/><stop offset="1.000" stop-color="#bfbfbf"/></linearGradient><linearGradient id="s211" gradientUnits="userSpaceOnUse" x1="773.4" y1="857.1" x2="800.7" y2="628.6"><stop offset="0.000" stop-color="#999999"/><stop offset="0.299" stop-color="#9f9f9f"/><stop offset="0.607" stop-color="#acacac"/><stop offset="0.874" stop-color="#c5c5c5"/><stop offset="1.000" stop-color="#cfcfcf"/></linearGradient><linearGradient id="s212" gradientUnits="userSpaceOnUse" x1="777.3" y1="855.1" x2="802.6" y2="632.5"><stop offset="0.000" stop-color="#adadad"/><stop offset="0.304" stop-color="#a5a5a5"/><stop offset="0.613" stop-color="#a6a6a6"/><stop offset="0.878" stop-color="#bfbfbf"/><stop offset="1.000" stop-color="#d3d3d3"/></linearGradient><linearGradient id="s213" gradientUnits="userSpaceOnUse" x1="782.6" y1="852.3" x2="805.2" y2="637.9"><stop offset="0.000" stop-color="#b7b7b7"/><stop offset="0.310" stop-color="#a1a1a1"/><stop offset="0.622" stop-color="#979797"/><stop offset="0.883" stop-color="#aeaeae"/><stop offset="1.000" stop-color="#cbcbcb"/></linearGradient><linearGradient id="s214" gradientUnits="userSpaceOnUse" x1="788.9" y1="849.1" x2="808.2" y2="644.3"><stop offset="0.000" stop-color="#b6b6b6"/><stop offset="0.318" stop-color="#949494"/><stop offset="0.634" stop-color="#7f7f7f"/><stop offset="0.889" stop-color="#929292"/><stop offset="1.000" stop-color="#b5b5b5"/></linearGradient><linearGradient id="s215" gradientUnits="userSpaceOnUse" x1="795.5" y1="845.7" x2="811.4" y2="651"><stop offset="0.000" stop-color="#a9a9a9"/><stop offset="0.327" stop-color="#7e7e7e"/><stop offset="0.648" stop-color="#616161"/><stop offset="0.897" stop-color="#6e6e6e"/><stop offset="1.000" stop-color="#939393"/></linearGradient><linearGradient id="s216" gradientUnits="userSpaceOnUse" x1="801.7" y1="842.5" x2="814.4" y2="657.4"><stop offset="0.000" stop-color="#929292"/><stop offset="0.337" stop-color="#636363"/><stop offset="0.662" stop-color="#404040"/><stop offset="0.904" stop-color="#464646"/><stop offset="1.000" stop-color="#6a6a6a"/></linearGradient><linearGradient id="s217" gradientUnits="userSpaceOnUse" x1="807.1" y1="839.8" x2="816.9" y2="662.8"><stop offset="0.000" stop-color="#747474"/><stop offset="0.347" stop-color="#454545"/><stop offset="0.675" stop-color="#404040"/><stop offset="0.911" stop-color="#404040"/><stop offset="1.000" stop-color="#404040"/></linearGradient><linearGradient id="s218" gradientUnits="userSpaceOnUse" x1="811" y1="837.8" x2="818.8" y2="666.8"><stop offset="0.000" stop-color="#515151"/><stop offset="0.354" stop-color="#404040"/><stop offset="0.685" stop-color="#404040"/><stop offset="0.917" stop-color="#404040"/><stop offset="1.000" stop-color="#404040"/></linearGradient><linearGradient id="s219" gradientUnits="userSpaceOnUse" x1="814.8" y1="835.8" x2="820.6" y2="670.6"><stop offset="0.000" stop-color="#404040"/><stop offset="0.361" stop-color="#404040"/><stop offset="0.696" stop-color="#404040"/><stop offset="0.922" stop-color="#404040"/><stop offset="1.000" stop-color="#404040"/></linearGradient><linearGradient id="ecg" gradientUnits="userSpaceOnUse" x1="1559.5" y1="0" x2="1607.5" y2="0"><stop offset="0" stop-color="#b8b8b8"/><stop offset=".55" stop-color="#8a8a8a"/><stop offset="1" stop-color="#4a4a4a"/></linearGradient><clipPath id="c11"><path d="M1383 345 1391.3 341.4 1400.8 339.4 1411.7 339.2 1423.9 341.2 1437.3 345.4 1451.3 352 1465.7 360.8 1480.1 371.8 1494 384.8 1507.2 399.3 1519.4 415.2 1530.3 432 1539.6 449.4 1547.3 466.9 1553.1 484.1 1557 500.5 1558.9 515.7 1608 512.2 1605.3 491.6 1600.4 470.5 1593.2 449.1 1583.9 427.9 1572.6 407 1559.6 386.9 1545 367.8 1529 350.2 1511.8 334.3 1493.7 320.3 1474.7 308.7 1455.2 299.6 1435.4 293.3 1415.4 290.2 1395.5 290.5 1376.4 294.5 1358.6 302.3Z"/></clipPath><linearGradient id="s220" gradientUnits="userSpaceOnUse" x1="1353.9" y1="304.2" x2="1608.8" y2="512.1"><stop offset="0.000" stop-color="#c1c1c1"/><stop offset="0.190" stop-color="#929292"/><stop offset="0.497" stop-color="#565656"/><stop offset="0.815" stop-color="#404040"/><stop offset="1.000" stop-color="#404040"/></linearGradient><linearGradient id="s221" gradientUnits="userSpaceOnUse" x1="1356.3" y1="307.8" x2="1604.5" y2="512.4"><stop offset="0.000" stop-color="#cecece"/><stop offset="0.186" stop-color="#b2b2b2"/><stop offset="0.493" stop-color="#777777"/><stop offset="0.814" stop-color="#404040"/><stop offset="1.000" stop-color="#404040"/></linearGradient><linearGradient id="s222" gradientUnits="userSpaceOnUse" x1="1358.6" y1="311.4" x2="1600.2" y2="512.8"><stop offset="0.000" stop-color="#cfcfcf"/><stop offset="0.181" stop-color="#cdcdcd"/><stop offset="0.489" stop-color="#979797"/><stop offset="0.813" stop-color="#505050"/><stop offset="1.000" stop-color="#404040"/></linearGradient><linearGradient id="s223" gradientUnits="userSpaceOnUse" x1="1361.9" y1="316.5" x2="1594.2" y2="513.2"><stop offset="0.000" stop-color="#c3c3c3"/><stop offset="0.175" stop-color="#dadada"/><stop offset="0.483" stop-color="#afafaf"/><stop offset="0.811" stop-color="#696969"/><stop offset="1.000" stop-color="#404040"/></linearGradient><linearGradient id="s224" gradientUnits="userSpaceOnUse" x1="1365.7" y1="322.4" x2="1587.2" y2="513.7"><stop offset="0.000" stop-color="#aaaaaa"/><stop offset="0.167" stop-color="#dadada"/><stop offset="0.475" stop-color="#c0c0c0"/><stop offset="0.809" stop-color="#7e7e7e"/><stop offset="1.000" stop-color="#525252"/></linearGradient><linearGradient id="s225" gradientUnits="userSpaceOnUse" x1="1369.7" y1="328.6" x2="1579.8" y2="514.2"><stop offset="0.000" stop-color="#888888"/><stop offset="0.158" stop-color="#c9c9c9"/><stop offset="0.466" stop-color="#c6c6c6"/><stop offset="0.806" stop-color="#8c8c8c"/><stop offset="1.000" stop-color="#6b6b6b"/></linearGradient><linearGradient id="s226" gradientUnits="userSpaceOnUse" x1="1373.6" y1="334.6" x2="1572.7" y2="514.7"><stop offset="0.000" stop-color="#5e5e5e"/><stop offset="0.149" stop-color="#acacac"/><stop offset="0.457" stop-color="#b5b5b5"/><stop offset="0.803" stop-color="#949494"/><stop offset="1.000" stop-color="#7f7f7f"/></linearGradient><linearGradient id="s227" gradientUnits="userSpaceOnUse" x1="1376.8" y1="339.6" x2="1566.7" y2="515.1"><stop offset="0.000" stop-color="#404040"/><stop offset="0.140" stop-color="#858585"/><stop offset="0.449" stop-color="#9f9f9f"/><stop offset="0.800" stop-color="#939393"/><stop offset="1.000" stop-color="#8e8e8e"/></linearGradient><linearGradient id="s228" gradientUnits="userSpaceOnUse" x1="1379.2" y1="343.3" x2="1562.4" y2="515.5"><stop offset="0.000" stop-color="#404040"/><stop offset="0.134" stop-color="#595959"/><stop offset="0.442" stop-color="#828282"/><stop offset="0.799" stop-color="#8b8b8b"/><stop offset="1.000" stop-color="#959595"/></linearGradient><linearGradient id="s229" gradientUnits="userSpaceOnUse" x1="1381.5" y1="346.9" x2="1558.1" y2="515.8"><stop offset="0.000" stop-color="#404040"/><stop offset="0.128" stop-color="#404040"/><stop offset="0.436" stop-color="#616161"/><stop offset="0.797" stop-color="#7e7e7e"/><stop offset="1.000" stop-color="#959595"/></linearGradient><clipPath id="c12"><path d="M1326.5 377.7 1334.6 374 1344 372.1 1354.8 371.9 1366.8 373.7 1380 377.7 1393.8 384.1 1408.1 392.7 1422.3 403.4 1436.1 416.1 1449.3 430.3 1461.5 445.9 1472.4 462.4 1481.8 479.6 1489.7 496.9 1495.7 514 1499.9 530.4 1502.1 545.7 1502.6 559.4 1501.5 571.2 1499 580.6 1495.7 587.6 1492 592.3 1488.2 595.2 1512.6 637.9 1526.6 627.2 1537.6 613.4 1545.3 597.3 1549.9 579.7 1551.8 560.9 1551.1 541.1 1548.1 520.6 1542.8 499.7 1535.3 478.5 1525.8 457.5 1514.5 437 1501.4 417.2 1486.8 398.5 1470.8 381.2 1453.7 365.6 1435.7 352 1416.9 340.7 1397.6 331.8 1377.9 325.8 1358.2 322.8 1338.6 323.2 1319.6 327.2 1302 334.9Z"/></clipPath><linearGradient id="s230" gradientUnits="userSpaceOnUse" x1="1297.4" y1="336.8" x2="1512.1" y2="431.6"><stop offset="0.000" stop-color="#c1c1c1"/><stop offset="0.213" stop-color="#a4a4a4"/><stop offset="0.500" stop-color="#787878"/><stop offset="0.807" stop-color="#505050"/><stop offset="1.000" stop-color="#404040"/></linearGradient><linearGradient id="s231" gradientUnits="userSpaceOnUse" x1="1299.7" y1="340.4" x2="1508.5" y2="433.9"><stop offset="0.000" stop-color="#cecece"/><stop offset="0.208" stop-color="#c1c1c1"/><stop offset="0.494" stop-color="#9b9b9b"/><stop offset="0.804" stop-color="#707070"/><stop offset="1.000" stop-color="#525252"/></linearGradient><linearGradient id="s232" gradientUnits="userSpaceOnUse" x1="1302.1" y1="344.1" x2="1504.8" y2="436.2"><stop offset="0.000" stop-color="#cfcfcf"/><stop offset="0.204" stop-color="#d5d5d5"/><stop offset="0.488" stop-color="#bababa"/><stop offset="0.801" stop-color="#909090"/><stop offset="1.000" stop-color="#6f6f6f"/></linearGradient><linearGradient id="s233" gradientUnits="userSpaceOnUse" x1="1305.3" y1="349.1" x2="1499.7" y2="439.5"><stop offset="0.000" stop-color="#c3c3c3"/><stop offset="0.196" stop-color="#dcdcdc"/><stop offset="0.480" stop-color="#cecece"/><stop offset="0.797" stop-color="#a8a8a8"/><stop offset="1.000" stop-color="#888888"/></linearGradient><linearGradient id="s234" gradientUnits="userSpaceOnUse" x1="1309.2" y1="355.1" x2="1493.8" y2="443.2"><stop offset="0.000" stop-color="#aaaaaa"/><stop offset="0.187" stop-color="#d4d4d4"/><stop offset="0.469" stop-color="#ffffff"/><stop offset="0.791" stop-color="#b8b8b8"/><stop offset="1.000" stop-color="#9a9a9a"/></linearGradient><linearGradient id="s235" gradientUnits="userSpaceOnUse" x1="1313.2" y1="361.3" x2="1487.5" y2="447.2"><stop offset="0.000" stop-color="#888888"/><stop offset="0.177" stop-color="#bebebe"/><stop offset="0.456" stop-color="#d0d0d0"/><stop offset="0.785" stop-color="#bdbdbd"/><stop offset="1.000" stop-color="#a4a4a4"/></linearGradient><linearGradient id="s236" gradientUnits="userSpaceOnUse" x1="1317" y1="367.2" x2="1481.5" y2="450.9"><stop offset="0.000" stop-color="#5e5e5e"/><stop offset="0.166" stop-color="#9c9c9c"/><stop offset="0.442" stop-color="#b8b8b8"/><stop offset="0.778" stop-color="#b2b2b2"/><stop offset="1.000" stop-color="#a4a4a4"/></linearGradient><linearGradient id="s237" gradientUnits="userSpaceOnUse" x1="1320.3" y1="372.2" x2="1476.5" y2="454.1"><stop offset="0.000" stop-color="#404040"/><stop offset="0.156" stop-color="#717171"/><stop offset="0.429" stop-color="#979797"/><stop offset="0.772" stop-color="#9f9f9f"/><stop offset="1.000" stop-color="#9a9a9a"/></linearGradient><linearGradient id="s238" gradientUnits="userSpaceOnUse" x1="1322.6" y1="375.9" x2="1472.8" y2="456.5"><stop offset="0.000" stop-color="#404040"/><stop offset="0.148" stop-color="#424242"/><stop offset="0.420" stop-color="#6f6f6f"/><stop offset="0.767" stop-color="#848484"/><stop offset="1.000" stop-color="#898989"/></linearGradient><linearGradient id="s239" gradientUnits="userSpaceOnUse" x1="1325" y1="379.5" x2="1469.2" y2="458.8"><stop offset="0.000" stop-color="#404040"/><stop offset="0.140" stop-color="#404040"/><stop offset="0.409" stop-color="#484848"/><stop offset="0.761" stop-color="#656565"/><stop offset="1.000" stop-color="#737373"/></linearGradient><linearGradient id="s240" gradientUnits="userSpaceOnUse" x1="1505.4" y1="421.5" x2="1508.9" y2="640.8"><stop offset="0.000" stop-color="#404040"/><stop offset="0.227" stop-color="#404040"/><stop offset="0.571" stop-color="#404040"/><stop offset="0.869" stop-color="#404040"/><stop offset="1.000" stop-color="#404040"/></linearGradient><linearGradient id="s241" gradientUnits="userSpaceOnUse" x1="1501.9" y1="423.9" x2="1507.1" y2="636.9"><stop offset="0.000" stop-color="#595959"/><stop offset="0.231" stop-color="#404040"/><stop offset="0.580" stop-color="#404040"/><stop offset="0.874" stop-color="#404040"/><stop offset="1.000" stop-color="#404040"/></linearGradient><linearGradient id="s242" gradientUnits="userSpaceOnUse" x1="1498.3" y1="426.4" x2="1505.1" y2="633"><stop offset="0.000" stop-color="#777777"/><stop offset="0.236" stop-color="#515151"/><stop offset="0.589" stop-color="#404040"/><stop offset="0.880" stop-color="#404040"/><stop offset="1.000" stop-color="#404040"/></linearGradient><linearGradient id="s243" gradientUnits="userSpaceOnUse" x1="1493.4" y1="429.8" x2="1502.5" y2="627.6"><stop offset="0.000" stop-color="#909090"/><stop offset="0.242" stop-color="#6a6a6a"/><stop offset="0.602" stop-color="#404040"/><stop offset="0.888" stop-color="#404040"/><stop offset="1.000" stop-color="#616161"/></linearGradient><linearGradient id="s244" gradientUnits="userSpaceOnUse" x1="1487.5" y1="433.8" x2="1499.4" y2="621.3"><stop offset="0.000" stop-color="#a1a1a1"/><stop offset="0.251" stop-color="#7e7e7e"/><stop offset="0.618" stop-color="#515151"/><stop offset="0.898" stop-color="#555555"/><stop offset="1.000" stop-color="#898989"/></linearGradient><linearGradient id="s245" gradientUnits="userSpaceOnUse" x1="1481.4" y1="438" x2="1496.2" y2="614.6"><stop offset="0.000" stop-color="#a9a9a9"/><stop offset="0.261" stop-color="#8d8d8d"/><stop offset="0.638" stop-color="#6a6a6a"/><stop offset="0.910" stop-color="#787878"/><stop offset="1.000" stop-color="#aaaaaa"/></linearGradient><linearGradient id="s246" gradientUnits="userSpaceOnUse" x1="1475.6" y1="442" x2="1493.1" y2="608.3"><stop offset="0.000" stop-color="#a8a8a8"/><stop offset="0.272" stop-color="#949494"/><stop offset="0.658" stop-color="#7f7f7f"/><stop offset="0.922" stop-color="#959595"/><stop offset="1.000" stop-color="#c2c2c2"/></linearGradient><linearGradient id="s247" gradientUnits="userSpaceOnUse" x1="1470.7" y1="445.4" x2="1490.5" y2="602.9"><stop offset="0.000" stop-color="#9c9c9c"/><stop offset="0.283" stop-color="#949494"/><stop offset="0.677" stop-color="#8e8e8e"/><stop offset="0.933" stop-color="#ababab"/><stop offset="1.000" stop-color="#cccccc"/></linearGradient><linearGradient id="s248" gradientUnits="userSpaceOnUse" x1="1467.1" y1="447.9" x2="1488.6" y2="598.9"><stop offset="0.000" stop-color="#888888"/><stop offset="0.291" stop-color="#8b8b8b"/><stop offset="0.692" stop-color="#959595"/><stop offset="0.942" stop-color="#b6b6b6"/><stop offset="1.000" stop-color="#cacaca"/></linearGradient><linearGradient id="s249" gradientUnits="userSpaceOnUse" x1="1463.6" y1="450.3" x2="1486.7" y2="595.1"><stop offset="0.000" stop-color="#707070"/><stop offset="0.299" stop-color="#7e7e7e"/><stop offset="0.708" stop-color="#959595"/><stop offset="0.951" stop-color="#b7b7b7"/><stop offset="1.000" stop-color="#bdbdbd"/></linearGradient><clipPath id="c13"><path d="M1269.9 410.3 1278.1 406.7 1287.5 404.7 1298.2 404.5 1310.3 406.3 1323.4 410.4 1337.3 416.7 1351.5 425.3 1365.7 436.1 1379.6 448.7 1392.7 463 1404.9 478.5 1415.8 495.1 1425.3 512.2 1433.1 529.5 1439.1 546.6 1443.3 563 1445.6 578.3 1446.1 592 1444.9 603.8 1442.4 613.3 1439.1 620.2 1435.5 624.9 1431.6 627.9 1456 670.6 1470.1 659.9 1481 646 1488.7 630 1493.4 612.3 1495.2 593.5 1494.6 573.7 1491.5 553.2 1486.2 532.3 1478.8 511.2 1469.3 490.2 1457.9 469.6 1444.8 449.8 1430.2 431.1 1414.3 413.8 1397.2 398.2 1379.1 384.6 1360.4 373.3 1341 364.5 1321.4 358.4 1301.6 355.4 1282 355.8 1263.1 359.8 1245.5 367.6Z"/></clipPath><linearGradient id="s250" gradientUnits="userSpaceOnUse" x1="1240.8" y1="369.5" x2="1455.6" y2="464.3"><stop offset="0.000" stop-color="#c1c1c1"/><stop offset="0.146" stop-color="#afafaf"/><stop offset="0.450" stop-color="#7f7f7f"/><stop offset="0.786" stop-color="#535353"/><stop offset="1.000" stop-color="#404040"/></linearGradient><linearGradient id="s251" gradientUnits="userSpaceOnUse" x1="1243.1" y1="373.1" x2="1451.9" y2="466.6"><stop offset="0.000" stop-color="#cecece"/><stop offset="0.142" stop-color="#c8c8c8"/><stop offset="0.444" stop-color="#a2a2a2"/><stop offset="0.783" stop-color="#737373"/><stop offset="1.000" stop-color="#525252"/></linearGradient><linearGradient id="s252" gradientUnits="userSpaceOnUse" x1="1245.5" y1="376.7" x2="1448.3" y2="468.9"><stop offset="0.000" stop-color="#cfcfcf"/><stop offset="0.139" stop-color="#d8d8d8"/><stop offset="0.438" stop-color="#c0c0c0"/><stop offset="0.780" stop-color="#939393"/><stop offset="1.000" stop-color="#6f6f6f"/></linearGradient><linearGradient id="s253" gradientUnits="userSpaceOnUse" x1="1248.8" y1="381.8" x2="1443.2" y2="472.1"><stop offset="0.000" stop-color="#c3c3c3"/><stop offset="0.133" stop-color="#dadada"/><stop offset="0.429" stop-color="#d2d2d2"/><stop offset="0.775" stop-color="#ababab"/><stop offset="1.000" stop-color="#888888"/></linearGradient><linearGradient id="s254" gradientUnits="userSpaceOnUse" x1="1252.6" y1="387.7" x2="1437.2" y2="475.9"><stop offset="0.000" stop-color="#aaaaaa"/><stop offset="0.126" stop-color="#cdcdcd"/><stop offset="0.417" stop-color="#fdfdfd"/><stop offset="0.769" stop-color="#bbbbbb"/><stop offset="1.000" stop-color="#9a9a9a"/></linearGradient><linearGradient id="s255" gradientUnits="userSpaceOnUse" x1="1256.6" y1="393.9" x2="1431" y2="479.8"><stop offset="0.000" stop-color="#888888"/><stop offset="0.118" stop-color="#b2b2b2"/><stop offset="0.404" stop-color="#cecece"/><stop offset="0.762" stop-color="#c0c0c0"/><stop offset="1.000" stop-color="#a4a4a4"/></linearGradient><linearGradient id="s256" gradientUnits="userSpaceOnUse" x1="1260.4" y1="399.8" x2="1425" y2="483.6"><stop offset="0.000" stop-color="#5e5e5e"/><stop offset="0.110" stop-color="#8d8d8d"/><stop offset="0.390" stop-color="#b6b6b6"/><stop offset="0.755" stop-color="#b3b3b3"/><stop offset="1.000" stop-color="#a4a4a4"/></linearGradient><linearGradient id="s257" gradientUnits="userSpaceOnUse" x1="1263.7" y1="404.9" x2="1419.9" y2="486.8"><stop offset="0.000" stop-color="#404040"/><stop offset="0.102" stop-color="#616161"/><stop offset="0.377" stop-color="#939393"/><stop offset="0.748" stop-color="#9f9f9f"/><stop offset="1.000" stop-color="#9a9a9a"/></linearGradient><linearGradient id="s258" gradientUnits="userSpaceOnUse" x1="1266.1" y1="408.5" x2="1416.2" y2="489.1"><stop offset="0.000" stop-color="#404040"/><stop offset="0.096" stop-color="#404040"/><stop offset="0.367" stop-color="#6a6a6a"/><stop offset="0.743" stop-color="#838383"/><stop offset="1.000" stop-color="#898989"/></linearGradient><linearGradient id="s259" gradientUnits="userSpaceOnUse" x1="1268.4" y1="412.2" x2="1412.6" y2="491.4"><stop offset="0.000" stop-color="#404040"/><stop offset="0.090" stop-color="#404040"/><stop offset="0.356" stop-color="#414141"/><stop offset="0.737" stop-color="#646464"/><stop offset="1.000" stop-color="#737373"/></linearGradient><linearGradient id="s260" gradientUnits="userSpaceOnUse" x1="1448.9" y1="454.1" x2="1452.4" y2="673.4"><stop offset="0.000" stop-color="#404040"/><stop offset="0.312" stop-color="#404040"/><stop offset="0.621" stop-color="#404040"/><stop offset="0.884" stop-color="#404040"/><stop offset="1.000" stop-color="#404040"/></linearGradient><linearGradient id="s261" gradientUnits="userSpaceOnUse" x1="1445.3" y1="456.5" x2="1450.5" y2="669.6"><stop offset="0.000" stop-color="#595959"/><stop offset="0.317" stop-color="#404040"/><stop offset="0.629" stop-color="#404040"/><stop offset="0.889" stop-color="#404040"/><stop offset="1.000" stop-color="#404040"/></linearGradient><linearGradient id="s262" gradientUnits="userSpaceOnUse" x1="1441.7" y1="459" x2="1448.6" y2="665.7"><stop offset="0.000" stop-color="#777777"/><stop offset="0.323" stop-color="#444444"/><stop offset="0.638" stop-color="#404040"/><stop offset="0.894" stop-color="#404040"/><stop offset="1.000" stop-color="#404040"/></linearGradient><linearGradient id="s263" gradientUnits="userSpaceOnUse" x1="1436.8" y1="462.4" x2="1446" y2="660.3"><stop offset="0.000" stop-color="#909090"/><stop offset="0.332" stop-color="#5c5c5c"/><stop offset="0.651" stop-color="#404040"/><stop offset="0.901" stop-color="#404040"/><stop offset="1.000" stop-color="#616161"/></linearGradient><linearGradient id="s264" gradientUnits="userSpaceOnUse" x1="1431" y1="466.4" x2="1442.9" y2="653.9"><stop offset="0.000" stop-color="#a1a1a1"/><stop offset="0.344" stop-color="#727272"/><stop offset="0.668" stop-color="#4d4d4d"/><stop offset="0.911" stop-color="#585858"/><stop offset="1.000" stop-color="#898989"/></linearGradient><linearGradient id="s265" gradientUnits="userSpaceOnUse" x1="1424.9" y1="470.6" x2="1439.6" y2="647.2"><stop offset="0.000" stop-color="#a9a9a9"/><stop offset="0.357" stop-color="#838383"/><stop offset="0.688" stop-color="#686868"/><stop offset="0.922" stop-color="#7b7b7b"/><stop offset="1.000" stop-color="#aaaaaa"/></linearGradient><linearGradient id="s266" gradientUnits="userSpaceOnUse" x1="1419.1" y1="474.6" x2="1436.6" y2="640.9"><stop offset="0.000" stop-color="#a8a8a8"/><stop offset="0.371" stop-color="#8e8e8e"/><stop offset="0.708" stop-color="#7f7f7f"/><stop offset="0.933" stop-color="#999999"/><stop offset="1.000" stop-color="#c2c2c2"/></linearGradient><linearGradient id="s267" gradientUnits="userSpaceOnUse" x1="1414.1" y1="478" x2="1433.9" y2="635.5"><stop offset="0.000" stop-color="#9c9c9c"/><stop offset="0.385" stop-color="#919191"/><stop offset="0.728" stop-color="#8f8f8f"/><stop offset="0.943" stop-color="#aeaeae"/><stop offset="1.000" stop-color="#cccccc"/></linearGradient><linearGradient id="s268" gradientUnits="userSpaceOnUse" x1="1410.5" y1="480.5" x2="1432" y2="631.6"><stop offset="0.000" stop-color="#888888"/><stop offset="0.395" stop-color="#8d8d8d"/><stop offset="0.743" stop-color="#999999"/><stop offset="0.950" stop-color="#b9b9b9"/><stop offset="1.000" stop-color="#cacaca"/></linearGradient><linearGradient id="s269" gradientUnits="userSpaceOnUse" x1="1407" y1="483" x2="1430.2" y2="627.7"><stop offset="0.000" stop-color="#707070"/><stop offset="0.407" stop-color="#838383"/><stop offset="0.758" stop-color="#9a9a9a"/><stop offset="0.958" stop-color="#b9b9b9"/><stop offset="1.000" stop-color="#bdbdbd"/></linearGradient><clipPath id="c14"><path d="M1213.3 442.9 1221.5 439.3 1230.9 437.3 1241.7 437.1 1253.7 439 1266.8 443 1280.7 449.4 1294.9 458 1309.1 468.7 1323 481.3 1336.2 495.6 1348.3 511.2 1359.3 527.7 1368.7 544.8 1376.5 562.2 1382.6 579.2 1386.7 595.6 1389 610.9 1389.5 624.7 1388.3 636.5 1385.9 645.9 1382.6 652.9 1378.9 657.6 1375 660.5 1399.5 703.2 1413.5 692.5 1424.5 678.7 1432.2 662.6 1436.8 645 1438.7 626.1 1438 606.4 1435 585.9 1429.6 564.9 1422.2 543.8 1412.7 522.8 1401.4 502.2 1388.3 482.5 1373.7 463.8 1357.7 446.5 1340.6 430.9 1322.6 417.3 1303.8 405.9 1284.5 397.1 1264.8 391 1245 388.1 1225.4 388.4 1206.5 392.5 1188.9 400.2Z"/></clipPath><linearGradient id="s270" gradientUnits="userSpaceOnUse" x1="1184.3" y1="402.1" x2="1399" y2="496.9"><stop offset="0.000" stop-color="#c1c1c1"/><stop offset="0.213" stop-color="#a4a4a4"/><stop offset="0.500" stop-color="#787878"/><stop offset="0.807" stop-color="#505050"/><stop offset="1.000" stop-color="#404040"/></linearGradient><linearGradient id="s271" gradientUnits="userSpaceOnUse" x1="1186.6" y1="405.7" x2="1395.4" y2="499.2"><stop offset="0.000" stop-color="#cecece"/><stop offset="0.208" stop-color="#c1c1c1"/><stop offset="0.494" stop-color="#9b9b9b"/><stop offset="0.804" stop-color="#707070"/><stop offset="1.000" stop-color="#525252"/></linearGradient><linearGradient id="s272" gradientUnits="userSpaceOnUse" x1="1189" y1="409.4" x2="1391.7" y2="501.5"><stop offset="0.000" stop-color="#cfcfcf"/><stop offset="0.204" stop-color="#d5d5d5"/><stop offset="0.488" stop-color="#bababa"/><stop offset="0.801" stop-color="#909090"/><stop offset="1.000" stop-color="#6f6f6f"/></linearGradient><linearGradient id="s273" gradientUnits="userSpaceOnUse" x1="1192.2" y1="414.4" x2="1386.6" y2="504.7"><stop offset="0.000" stop-color="#c3c3c3"/><stop offset="0.196" stop-color="#dcdcdc"/><stop offset="0.480" stop-color="#cecece"/><stop offset="0.797" stop-color="#a8a8a8"/><stop offset="1.000" stop-color="#888888"/></linearGradient><linearGradient id="s274" gradientUnits="userSpaceOnUse" x1="1196" y1="420.3" x2="1380.7" y2="508.5"><stop offset="0.000" stop-color="#aaaaaa"/><stop offset="0.187" stop-color="#d4d4d4"/><stop offset="0.469" stop-color="#ffffff"/><stop offset="0.791" stop-color="#b8b8b8"/><stop offset="1.000" stop-color="#9a9a9a"/></linearGradient><linearGradient id="s275" gradientUnits="userSpaceOnUse" x1="1200.1" y1="426.6" x2="1374.4" y2="512.5"><stop offset="0.000" stop-color="#888888"/><stop offset="0.177" stop-color="#bebebe"/><stop offset="0.456" stop-color="#d0d0d0"/><stop offset="0.785" stop-color="#bdbdbd"/><stop offset="1.000" stop-color="#a4a4a4"/></linearGradient><linearGradient id="s276" gradientUnits="userSpaceOnUse" x1="1203.9" y1="432.5" x2="1368.4" y2="516.2"><stop offset="0.000" stop-color="#5e5e5e"/><stop offset="0.166" stop-color="#9c9c9c"/><stop offset="0.442" stop-color="#b8b8b8"/><stop offset="0.778" stop-color="#b2b2b2"/><stop offset="1.000" stop-color="#a4a4a4"/></linearGradient><linearGradient id="s277" gradientUnits="userSpaceOnUse" x1="1207.1" y1="437.5" x2="1363.4" y2="519.4"><stop offset="0.000" stop-color="#404040"/><stop offset="0.156" stop-color="#717171"/><stop offset="0.429" stop-color="#979797"/><stop offset="0.772" stop-color="#9f9f9f"/><stop offset="1.000" stop-color="#9a9a9a"/></linearGradient><linearGradient id="s278" gradientUnits="userSpaceOnUse" x1="1209.5" y1="441.2" x2="1359.7" y2="521.8"><stop offset="0.000" stop-color="#404040"/><stop offset="0.148" stop-color="#424242"/><stop offset="0.420" stop-color="#6f6f6f"/><stop offset="0.767" stop-color="#848484"/><stop offset="1.000" stop-color="#898989"/></linearGradient><linearGradient id="s279" gradientUnits="userSpaceOnUse" x1="1211.8" y1="444.8" x2="1356" y2="524"><stop offset="0.000" stop-color="#404040"/><stop offset="0.140" stop-color="#404040"/><stop offset="0.409" stop-color="#484848"/><stop offset="0.761" stop-color="#656565"/><stop offset="1.000" stop-color="#737373"/></linearGradient><linearGradient id="s280" gradientUnits="userSpaceOnUse" x1="1392.3" y1="486.7" x2="1395.8" y2="706.1"><stop offset="0.000" stop-color="#404040"/><stop offset="0.227" stop-color="#404040"/><stop offset="0.571" stop-color="#404040"/><stop offset="0.869" stop-color="#404040"/><stop offset="1.000" stop-color="#404040"/></linearGradient><linearGradient id="s281" gradientUnits="userSpaceOnUse" x1="1388.8" y1="489.2" x2="1393.9" y2="702.2"><stop offset="0.000" stop-color="#595959"/><stop offset="0.231" stop-color="#404040"/><stop offset="0.580" stop-color="#404040"/><stop offset="0.874" stop-color="#404040"/><stop offset="1.000" stop-color="#404040"/></linearGradient><linearGradient id="s282" gradientUnits="userSpaceOnUse" x1="1385.2" y1="491.6" x2="1392" y2="698.3"><stop offset="0.000" stop-color="#777777"/><stop offset="0.236" stop-color="#515151"/><stop offset="0.589" stop-color="#404040"/><stop offset="0.880" stop-color="#404040"/><stop offset="1.000" stop-color="#404040"/></linearGradient><linearGradient id="s283" gradientUnits="userSpaceOnUse" x1="1380.2" y1="495.1" x2="1389.4" y2="692.9"><stop offset="0.000" stop-color="#909090"/><stop offset="0.242" stop-color="#6a6a6a"/><stop offset="0.602" stop-color="#404040"/><stop offset="0.888" stop-color="#404040"/><stop offset="1.000" stop-color="#616161"/></linearGradient><linearGradient id="s284" gradientUnits="userSpaceOnUse" x1="1374.4" y1="499.1" x2="1386.3" y2="686.5"><stop offset="0.000" stop-color="#a1a1a1"/><stop offset="0.251" stop-color="#7e7e7e"/><stop offset="0.618" stop-color="#515151"/><stop offset="0.898" stop-color="#555555"/><stop offset="1.000" stop-color="#898989"/></linearGradient><linearGradient id="s285" gradientUnits="userSpaceOnUse" x1="1368.3" y1="503.3" x2="1383.1" y2="679.9"><stop offset="0.000" stop-color="#a9a9a9"/><stop offset="0.261" stop-color="#8d8d8d"/><stop offset="0.638" stop-color="#6a6a6a"/><stop offset="0.910" stop-color="#787878"/><stop offset="1.000" stop-color="#aaaaaa"/></linearGradient><linearGradient id="s286" gradientUnits="userSpaceOnUse" x1="1362.5" y1="507.3" x2="1380" y2="673.5"><stop offset="0.000" stop-color="#a8a8a8"/><stop offset="0.272" stop-color="#949494"/><stop offset="0.658" stop-color="#7f7f7f"/><stop offset="0.922" stop-color="#959595"/><stop offset="1.000" stop-color="#c2c2c2"/></linearGradient><linearGradient id="s287" gradientUnits="userSpaceOnUse" x1="1357.6" y1="510.7" x2="1377.4" y2="668.1"><stop offset="0.000" stop-color="#9c9c9c"/><stop offset="0.283" stop-color="#949494"/><stop offset="0.677" stop-color="#8e8e8e"/><stop offset="0.933" stop-color="#ababab"/><stop offset="1.000" stop-color="#cccccc"/></linearGradient><linearGradient id="s288" gradientUnits="userSpaceOnUse" x1="1354" y1="513.2" x2="1375.5" y2="664.2"><stop offset="0.000" stop-color="#888888"/><stop offset="0.291" stop-color="#8b8b8b"/><stop offset="0.692" stop-color="#959595"/><stop offset="0.942" stop-color="#b6b6b6"/><stop offset="1.000" stop-color="#cacaca"/></linearGradient><linearGradient id="s289" gradientUnits="userSpaceOnUse" x1="1350.5" y1="515.6" x2="1373.6" y2="660.3"><stop offset="0.000" stop-color="#707070"/><stop offset="0.299" stop-color="#7e7e7e"/><stop offset="0.708" stop-color="#959595"/><stop offset="0.951" stop-color="#b7b7b7"/><stop offset="1.000" stop-color="#bdbdbd"/></linearGradient><clipPath id="c15"><path d="M1156.8 475.6 1165 472 1174.4 470 1185.1 469.8 1197.1 471.6 1210.3 475.7 1224.1 482 1238.4 490.6 1252.6 501.3 1266.4 514 1279.6 528.2 1291.8 543.8 1302.7 560.4 1312.2 577.5 1320 594.8 1326 611.9 1330.2 628.3 1332.5 643.6 1332.9 657.3 1331.8 669.1 1329.3 678.5 1326 685.5 1322.4 690.2 1318.5 693.2 1342.9 735.9 1357 725.2 1367.9 711.3 1375.6 695.2 1380.2 677.6 1382.1 658.8 1381.4 639 1378.4 618.5 1373.1 597.6 1365.6 576.5 1356.2 555.4 1344.8 534.9 1331.7 515.1 1317.1 496.4 1301.2 479.1 1284.1 463.5 1266 449.9 1247.2 438.6 1227.9 429.7 1208.3 423.7 1188.5 420.7 1168.9 421.1 1150 425.1 1132.4 432.9Z"/></clipPath><linearGradient id="s290" gradientUnits="userSpaceOnUse" x1="1127.7" y1="434.7" x2="1342.5" y2="529.5"><stop offset="0.000" stop-color="#c1c1c1"/><stop offset="0.146" stop-color="#afafaf"/><stop offset="0.450" stop-color="#7f7f7f"/><stop offset="0.786" stop-color="#535353"/><stop offset="1.000" stop-color="#404040"/></linearGradient><linearGradient id="s291" gradientUnits="userSpaceOnUse" x1="1130" y1="438.3" x2="1338.8" y2="531.8"><stop offset="0.000" stop-color="#cecece"/><stop offset="0.142" stop-color="#c8c8c8"/><stop offset="0.444" stop-color="#a2a2a2"/><stop offset="0.783" stop-color="#737373"/><stop offset="1.000" stop-color="#525252"/></linearGradient><linearGradient id="s292" gradientUnits="userSpaceOnUse" x1="1132.4" y1="442" x2="1335.1" y2="534.2"><stop offset="0.000" stop-color="#cfcfcf"/><stop offset="0.139" stop-color="#d8d8d8"/><stop offset="0.438" stop-color="#c0c0c0"/><stop offset="0.780" stop-color="#939393"/><stop offset="1.000" stop-color="#6f6f6f"/></linearGradient><linearGradient id="s293" gradientUnits="userSpaceOnUse" x1="1135.7" y1="447" x2="1330.1" y2="537.4"><stop offset="0.000" stop-color="#c3c3c3"/><stop offset="0.133" stop-color="#dadada"/><stop offset="0.429" stop-color="#d2d2d2"/><stop offset="0.775" stop-color="#ababab"/><stop offset="1.000" stop-color="#888888"/></linearGradient><linearGradient id="s294" gradientUnits="userSpaceOnUse" x1="1139.5" y1="453" x2="1324.1" y2="541.1"><stop offset="0.000" stop-color="#aaaaaa"/><stop offset="0.126" stop-color="#cdcdcd"/><stop offset="0.417" stop-color="#fdfdfd"/><stop offset="0.769" stop-color="#bbbbbb"/><stop offset="1.000" stop-color="#9a9a9a"/></linearGradient><linearGradient id="s295" gradientUnits="userSpaceOnUse" x1="1143.5" y1="459.2" x2="1317.8" y2="545.1"><stop offset="0.000" stop-color="#888888"/><stop offset="0.118" stop-color="#b2b2b2"/><stop offset="0.404" stop-color="#cecece"/><stop offset="0.762" stop-color="#c0c0c0"/><stop offset="1.000" stop-color="#a4a4a4"/></linearGradient><linearGradient id="s296" gradientUnits="userSpaceOnUse" x1="1147.3" y1="465.1" x2="1311.9" y2="548.9"><stop offset="0.000" stop-color="#5e5e5e"/><stop offset="0.110" stop-color="#8d8d8d"/><stop offset="0.390" stop-color="#b6b6b6"/><stop offset="0.755" stop-color="#b3b3b3"/><stop offset="1.000" stop-color="#a4a4a4"/></linearGradient><linearGradient id="s297" gradientUnits="userSpaceOnUse" x1="1150.6" y1="470.2" x2="1306.8" y2="552.1"><stop offset="0.000" stop-color="#404040"/><stop offset="0.102" stop-color="#616161"/><stop offset="0.377" stop-color="#939393"/><stop offset="0.748" stop-color="#9f9f9f"/><stop offset="1.000" stop-color="#9a9a9a"/></linearGradient><linearGradient id="s298" gradientUnits="userSpaceOnUse" x1="1152.9" y1="473.8" x2="1303.1" y2="554.4"><stop offset="0.000" stop-color="#404040"/><stop offset="0.096" stop-color="#404040"/><stop offset="0.367" stop-color="#6a6a6a"/><stop offset="0.743" stop-color="#838383"/><stop offset="1.000" stop-color="#898989"/></linearGradient><linearGradient id="s299" gradientUnits="userSpaceOnUse" x1="1155.3" y1="477.4" x2="1299.5" y2="556.7"><stop offset="0.000" stop-color="#404040"/><stop offset="0.090" stop-color="#404040"/><stop offset="0.356" stop-color="#414141"/><stop offset="0.737" stop-color="#646464"/><stop offset="1.000" stop-color="#737373"/></linearGradient><linearGradient id="s300" gradientUnits="userSpaceOnUse" x1="1335.7" y1="519.4" x2="1339.2" y2="738.7"><stop offset="0.000" stop-color="#404040"/><stop offset="0.312" stop-color="#404040"/><stop offset="0.621" stop-color="#404040"/><stop offset="0.884" stop-color="#404040"/><stop offset="1.000" stop-color="#404040"/></linearGradient><linearGradient id="s301" gradientUnits="userSpaceOnUse" x1="1332.2" y1="521.8" x2="1337.4" y2="734.9"><stop offset="0.000" stop-color="#595959"/><stop offset="0.317" stop-color="#404040"/><stop offset="0.629" stop-color="#404040"/><stop offset="0.889" stop-color="#404040"/><stop offset="1.000" stop-color="#404040"/></linearGradient><linearGradient id="s302" gradientUnits="userSpaceOnUse" x1="1328.6" y1="524.3" x2="1335.5" y2="730.9"><stop offset="0.000" stop-color="#777777"/><stop offset="0.323" stop-color="#444444"/><stop offset="0.638" stop-color="#404040"/><stop offset="0.894" stop-color="#404040"/><stop offset="1.000" stop-color="#404040"/></linearGradient><linearGradient id="s303" gradientUnits="userSpaceOnUse" x1="1323.7" y1="527.7" x2="1332.8" y2="725.5"><stop offset="0.000" stop-color="#909090"/><stop offset="0.332" stop-color="#5c5c5c"/><stop offset="0.651" stop-color="#404040"/><stop offset="0.901" stop-color="#404040"/><stop offset="1.000" stop-color="#616161"/></linearGradient><linearGradient id="s304" gradientUnits="userSpaceOnUse" x1="1317.9" y1="531.7" x2="1329.8" y2="719.2"><stop offset="0.000" stop-color="#a1a1a1"/><stop offset="0.344" stop-color="#727272"/><stop offset="0.668" stop-color="#4d4d4d"/><stop offset="0.911" stop-color="#585858"/><stop offset="1.000" stop-color="#898989"/></linearGradient><linearGradient id="s305" gradientUnits="userSpaceOnUse" x1="1311.8" y1="535.9" x2="1326.5" y2="712.5"><stop offset="0.000" stop-color="#a9a9a9"/><stop offset="0.357" stop-color="#838383"/><stop offset="0.688" stop-color="#686868"/><stop offset="0.922" stop-color="#7b7b7b"/><stop offset="1.000" stop-color="#aaaaaa"/></linearGradient><linearGradient id="s306" gradientUnits="userSpaceOnUse" x1="1306" y1="539.9" x2="1323.4" y2="706.2"><stop offset="0.000" stop-color="#a8a8a8"/><stop offset="0.371" stop-color="#8e8e8e"/><stop offset="0.708" stop-color="#7f7f7f"/><stop offset="0.933" stop-color="#999999"/><stop offset="1.000" stop-color="#c2c2c2"/></linearGradient><linearGradient id="s307" gradientUnits="userSpaceOnUse" x1="1301" y1="543.3" x2="1320.8" y2="700.8"><stop offset="0.000" stop-color="#9c9c9c"/><stop offset="0.385" stop-color="#919191"/><stop offset="0.728" stop-color="#8f8f8f"/><stop offset="0.943" stop-color="#aeaeae"/><stop offset="1.000" stop-color="#cccccc"/></linearGradient><linearGradient id="s308" gradientUnits="userSpaceOnUse" x1="1297.4" y1="545.8" x2="1318.9" y2="696.8"><stop offset="0.000" stop-color="#888888"/><stop offset="0.395" stop-color="#8d8d8d"/><stop offset="0.743" stop-color="#999999"/><stop offset="0.950" stop-color="#b9b9b9"/><stop offset="1.000" stop-color="#cacaca"/></linearGradient><linearGradient id="s309" gradientUnits="userSpaceOnUse" x1="1293.9" y1="548.2" x2="1317.1" y2="693"><stop offset="0.000" stop-color="#707070"/><stop offset="0.407" stop-color="#838383"/><stop offset="0.758" stop-color="#9a9a9a"/><stop offset="0.958" stop-color="#b9b9b9"/><stop offset="1.000" stop-color="#bdbdbd"/></linearGradient><clipPath id="c16"><path d="M1100.2 508.2 1108.4 504.6 1117.8 502.6 1128.5 502.4 1140.6 504.2 1153.7 508.3 1167.6 514.7 1181.8 523.3 1196 534 1209.9 546.6 1223 560.9 1235.2 576.4 1246.1 593 1255.6 610.1 1263.4 627.4 1269.4 644.5 1273.6 660.9 1275.9 676.2 1276.4 690 1275.2 701.7 1272.8 711.2 1269.5 718.2 1265.8 722.8 1261.9 725.8 1286.3 768.5 1300.4 757.8 1311.4 743.9 1319 727.9 1323.7 710.2 1325.6 691.4 1324.9 671.6 1321.8 651.2 1316.5 630.2 1309.1 609.1 1299.6 588.1 1288.2 567.5 1275.2 547.7 1260.6 529 1244.6 511.7 1227.5 496.2 1209.5 482.6 1190.7 471.2 1171.4 462.4 1151.7 456.3 1131.9 453.3 1112.3 453.7 1093.4 457.7 1075.8 465.5Z"/></clipPath><linearGradient id="s310" gradientUnits="userSpaceOnUse" x1="1071.1" y1="467.4" x2="1285.9" y2="562.2"><stop offset="0.000" stop-color="#c1c1c1"/><stop offset="0.213" stop-color="#a4a4a4"/><stop offset="0.500" stop-color="#787878"/><stop offset="0.807" stop-color="#505050"/><stop offset="1.000" stop-color="#404040"/></linearGradient><linearGradient id="s311" gradientUnits="userSpaceOnUse" x1="1073.5" y1="471" x2="1282.3" y2="564.5"><stop offset="0.000" stop-color="#cecece"/><stop offset="0.208" stop-color="#c1c1c1"/><stop offset="0.494" stop-color="#9b9b9b"/><stop offset="0.804" stop-color="#707070"/><stop offset="1.000" stop-color="#525252"/></linearGradient><linearGradient id="s312" gradientUnits="userSpaceOnUse" x1="1075.8" y1="474.6" x2="1278.6" y2="566.8"><stop offset="0.000" stop-color="#cfcfcf"/><stop offset="0.204" stop-color="#d5d5d5"/><stop offset="0.488" stop-color="#bababa"/><stop offset="0.801" stop-color="#909090"/><stop offset="1.000" stop-color="#6f6f6f"/></linearGradient><linearGradient id="s313" gradientUnits="userSpaceOnUse" x1="1079.1" y1="479.7" x2="1273.5" y2="570"><stop offset="0.000" stop-color="#c3c3c3"/><stop offset="0.196" stop-color="#dcdcdc"/><stop offset="0.480" stop-color="#cecece"/><stop offset="0.797" stop-color="#a8a8a8"/><stop offset="1.000" stop-color="#888888"/></linearGradient><linearGradient id="s314" gradientUnits="userSpaceOnUse" x1="1082.9" y1="485.6" x2="1267.5" y2="573.8"><stop offset="0.000" stop-color="#aaaaaa"/><stop offset="0.187" stop-color="#d4d4d4"/><stop offset="0.469" stop-color="#ffffff"/><stop offset="0.791" stop-color="#b8b8b8"/><stop offset="1.000" stop-color="#9a9a9a"/></linearGradient><linearGradient id="s315" gradientUnits="userSpaceOnUse" x1="1086.9" y1="491.8" x2="1261.3" y2="577.7"><stop offset="0.000" stop-color="#888888"/><stop offset="0.177" stop-color="#bebebe"/><stop offset="0.456" stop-color="#d0d0d0"/><stop offset="0.785" stop-color="#bdbdbd"/><stop offset="1.000" stop-color="#a4a4a4"/></linearGradient><linearGradient id="s316" gradientUnits="userSpaceOnUse" x1="1090.8" y1="497.8" x2="1255.3" y2="581.5"><stop offset="0.000" stop-color="#5e5e5e"/><stop offset="0.166" stop-color="#9c9c9c"/><stop offset="0.442" stop-color="#b8b8b8"/><stop offset="0.778" stop-color="#b2b2b2"/><stop offset="1.000" stop-color="#a4a4a4"/></linearGradient><linearGradient id="s317" gradientUnits="userSpaceOnUse" x1="1094" y1="502.8" x2="1250.2" y2="584.7"><stop offset="0.000" stop-color="#404040"/><stop offset="0.156" stop-color="#717171"/><stop offset="0.429" stop-color="#979797"/><stop offset="0.772" stop-color="#9f9f9f"/><stop offset="1.000" stop-color="#9a9a9a"/></linearGradient><linearGradient id="s318" gradientUnits="userSpaceOnUse" x1="1096.4" y1="506.5" x2="1246.6" y2="587"><stop offset="0.000" stop-color="#404040"/><stop offset="0.148" stop-color="#424242"/><stop offset="0.420" stop-color="#6f6f6f"/><stop offset="0.767" stop-color="#848484"/><stop offset="1.000" stop-color="#898989"/></linearGradient><linearGradient id="s319" gradientUnits="userSpaceOnUse" x1="1098.7" y1="510.1" x2="1242.9" y2="589.3"><stop offset="0.000" stop-color="#404040"/><stop offset="0.140" stop-color="#404040"/><stop offset="0.409" stop-color="#484848"/><stop offset="0.761" stop-color="#656565"/><stop offset="1.000" stop-color="#737373"/></linearGradient><linearGradient id="s320" gradientUnits="userSpaceOnUse" x1="1279.2" y1="552" x2="1282.7" y2="771.4"><stop offset="0.000" stop-color="#404040"/><stop offset="0.227" stop-color="#404040"/><stop offset="0.571" stop-color="#404040"/><stop offset="0.869" stop-color="#404040"/><stop offset="1.000" stop-color="#404040"/></linearGradient><linearGradient id="s321" gradientUnits="userSpaceOnUse" x1="1275.6" y1="554.4" x2="1280.8" y2="767.5"><stop offset="0.000" stop-color="#595959"/><stop offset="0.231" stop-color="#404040"/><stop offset="0.580" stop-color="#404040"/><stop offset="0.874" stop-color="#404040"/><stop offset="1.000" stop-color="#404040"/></linearGradient><linearGradient id="s322" gradientUnits="userSpaceOnUse" x1="1272.1" y1="556.9" x2="1278.9" y2="763.6"><stop offset="0.000" stop-color="#777777"/><stop offset="0.236" stop-color="#515151"/><stop offset="0.589" stop-color="#404040"/><stop offset="0.880" stop-color="#404040"/><stop offset="1.000" stop-color="#404040"/></linearGradient><linearGradient id="s323" gradientUnits="userSpaceOnUse" x1="1267.1" y1="560.3" x2="1276.3" y2="758.2"><stop offset="0.000" stop-color="#909090"/><stop offset="0.242" stop-color="#6a6a6a"/><stop offset="0.602" stop-color="#404040"/><stop offset="0.888" stop-color="#404040"/><stop offset="1.000" stop-color="#616161"/></linearGradient><linearGradient id="s324" gradientUnits="userSpaceOnUse" x1="1261.3" y1="564.3" x2="1273.2" y2="751.8"><stop offset="0.000" stop-color="#a1a1a1"/><stop offset="0.251" stop-color="#7e7e7e"/><stop offset="0.618" stop-color="#515151"/><stop offset="0.898" stop-color="#555555"/><stop offset="1.000" stop-color="#898989"/></linearGradient><linearGradient id="s325" gradientUnits="userSpaceOnUse" x1="1255.2" y1="568.5" x2="1270" y2="745.2"><stop offset="0.000" stop-color="#a9a9a9"/><stop offset="0.261" stop-color="#8d8d8d"/><stop offset="0.638" stop-color="#6a6a6a"/><stop offset="0.910" stop-color="#787878"/><stop offset="1.000" stop-color="#aaaaaa"/></linearGradient><linearGradient id="s326" gradientUnits="userSpaceOnUse" x1="1249.4" y1="572.5" x2="1266.9" y2="738.8"><stop offset="0.000" stop-color="#a8a8a8"/><stop offset="0.272" stop-color="#949494"/><stop offset="0.658" stop-color="#7f7f7f"/><stop offset="0.922" stop-color="#959595"/><stop offset="1.000" stop-color="#c2c2c2"/></linearGradient><linearGradient id="s327" gradientUnits="userSpaceOnUse" x1="1244.5" y1="576" x2="1264.3" y2="733.4"><stop offset="0.000" stop-color="#9c9c9c"/><stop offset="0.283" stop-color="#949494"/><stop offset="0.677" stop-color="#8e8e8e"/><stop offset="0.933" stop-color="#ababab"/><stop offset="1.000" stop-color="#cccccc"/></linearGradient><linearGradient id="s328" gradientUnits="userSpaceOnUse" x1="1240.9" y1="578.4" x2="1262.4" y2="729.5"><stop offset="0.000" stop-color="#888888"/><stop offset="0.291" stop-color="#8b8b8b"/><stop offset="0.692" stop-color="#959595"/><stop offset="0.942" stop-color="#b6b6b6"/><stop offset="1.000" stop-color="#cacaca"/></linearGradient><linearGradient id="s329" gradientUnits="userSpaceOnUse" x1="1237.3" y1="580.9" x2="1260.5" y2="725.6"><stop offset="0.000" stop-color="#707070"/><stop offset="0.299" stop-color="#7e7e7e"/><stop offset="0.708" stop-color="#959595"/><stop offset="0.951" stop-color="#b7b7b7"/><stop offset="1.000" stop-color="#bdbdbd"/></linearGradient><clipPath id="c17"><path d="M1043.7 540.8 1051.5 537.4 1060.4 535.4 1070.6 535 1081.9 536.4 1094.3 539.9 1107.5 545.5 1121.1 553.2 1134.8 562.8 1148.2 574.3 1161.1 587.4 1173.2 601.8 1184.3 617.3 1194.1 633.4 1202.5 650 1209.3 666.5 1214.5 682.7 1217.9 698.2 1219.6 712.5 1219.7 725.2 1218.3 736.1 1215.8 744.8 1212.6 751.3 1209.1 755.6 1205.4 758.4 1229.8 801.1 1243.3 791 1254 777.8 1261.7 762.6 1266.5 745.9 1268.8 728.1 1268.7 709.3 1266.4 689.8 1262 669.9 1255.6 649.7 1247.2 629.4 1237.1 609.5 1225.3 590.2 1212.1 571.7 1197.5 554.3 1181.7 538.3 1165 524 1147.5 511.6 1129.3 501.4 1110.7 493.5 1091.8 488.2 1072.9 485.8 1054.2 486.6 1036.1 490.6 1019.2 498.1Z"/></clipPath><linearGradient id="s330" gradientUnits="userSpaceOnUse" x1="1014.6" y1="500" x2="1229.3" y2="594.8"><stop offset="0.000" stop-color="#c1c1c1"/><stop offset="0.146" stop-color="#afafaf"/><stop offset="0.450" stop-color="#7f7f7f"/><stop offset="0.786" stop-color="#535353"/><stop offset="1.000" stop-color="#404040"/></linearGradient><linearGradient id="s331" gradientUnits="userSpaceOnUse" x1="1016.9" y1="503.6" x2="1225.7" y2="597.1"><stop offset="0.000" stop-color="#cecece"/><stop offset="0.142" stop-color="#c8c8c8"/><stop offset="0.444" stop-color="#a2a2a2"/><stop offset="0.783" stop-color="#737373"/><stop offset="1.000" stop-color="#525252"/></linearGradient><linearGradient id="s332" gradientUnits="userSpaceOnUse" x1="1019.3" y1="507.3" x2="1222" y2="599.4"><stop offset="0.000" stop-color="#cfcfcf"/><stop offset="0.139" stop-color="#d8d8d8"/><stop offset="0.438" stop-color="#c0c0c0"/><stop offset="0.780" stop-color="#939393"/><stop offset="1.000" stop-color="#6f6f6f"/></linearGradient><linearGradient id="s333" gradientUnits="userSpaceOnUse" x1="1022.5" y1="512.3" x2="1216.9" y2="602.6"><stop offset="0.000" stop-color="#c3c3c3"/><stop offset="0.133" stop-color="#dadada"/><stop offset="0.429" stop-color="#d2d2d2"/><stop offset="0.775" stop-color="#ababab"/><stop offset="1.000" stop-color="#888888"/></linearGradient><linearGradient id="s334" gradientUnits="userSpaceOnUse" x1="1026.4" y1="518.2" x2="1211" y2="606.4"><stop offset="0.000" stop-color="#aaaaaa"/><stop offset="0.126" stop-color="#cdcdcd"/><stop offset="0.417" stop-color="#fdfdfd"/><stop offset="0.769" stop-color="#bbbbbb"/><stop offset="1.000" stop-color="#9a9a9a"/></linearGradient><linearGradient id="s335" gradientUnits="userSpaceOnUse" x1="1030.4" y1="524.5" x2="1204.7" y2="610.4"><stop offset="0.000" stop-color="#888888"/><stop offset="0.118" stop-color="#b2b2b2"/><stop offset="0.404" stop-color="#cecece"/><stop offset="0.762" stop-color="#c0c0c0"/><stop offset="1.000" stop-color="#a4a4a4"/></linearGradient><linearGradient id="s336" gradientUnits="userSpaceOnUse" x1="1034.2" y1="530.4" x2="1198.7" y2="614.1"><stop offset="0.000" stop-color="#5e5e5e"/><stop offset="0.110" stop-color="#8d8d8d"/><stop offset="0.390" stop-color="#b6b6b6"/><stop offset="0.755" stop-color="#b3b3b3"/><stop offset="1.000" stop-color="#a4a4a4"/></linearGradient><linearGradient id="s337" gradientUnits="userSpaceOnUse" x1="1037.5" y1="535.4" x2="1193.7" y2="617.3"><stop offset="0.000" stop-color="#404040"/><stop offset="0.102" stop-color="#616161"/><stop offset="0.377" stop-color="#939393"/><stop offset="0.748" stop-color="#9f9f9f"/><stop offset="1.000" stop-color="#9a9a9a"/></linearGradient><linearGradient id="s338" gradientUnits="userSpaceOnUse" x1="1039.8" y1="539.1" x2="1190" y2="619.7"><stop offset="0.000" stop-color="#404040"/><stop offset="0.096" stop-color="#404040"/><stop offset="0.367" stop-color="#6a6a6a"/><stop offset="0.743" stop-color="#838383"/><stop offset="1.000" stop-color="#898989"/></linearGradient><linearGradient id="s339" gradientUnits="userSpaceOnUse" x1="1042.2" y1="542.7" x2="1186.4" y2="622"><stop offset="0.000" stop-color="#404040"/><stop offset="0.090" stop-color="#404040"/><stop offset="0.356" stop-color="#414141"/><stop offset="0.737" stop-color="#646464"/><stop offset="1.000" stop-color="#737373"/></linearGradient><linearGradient id="s340" gradientUnits="userSpaceOnUse" x1="1222.6" y1="584.7" x2="1226.1" y2="804"><stop offset="0.000" stop-color="#404040"/><stop offset="0.312" stop-color="#404040"/><stop offset="0.621" stop-color="#404040"/><stop offset="0.884" stop-color="#404040"/><stop offset="1.000" stop-color="#404040"/></linearGradient><linearGradient id="s341" gradientUnits="userSpaceOnUse" x1="1219.1" y1="587.1" x2="1224.3" y2="800.1"><stop offset="0.000" stop-color="#595959"/><stop offset="0.317" stop-color="#404040"/><stop offset="0.629" stop-color="#404040"/><stop offset="0.889" stop-color="#404040"/><stop offset="1.000" stop-color="#404040"/></linearGradient><linearGradient id="s342" gradientUnits="userSpaceOnUse" x1="1215.5" y1="589.6" x2="1222.3" y2="796.2"><stop offset="0.000" stop-color="#777777"/><stop offset="0.323" stop-color="#444444"/><stop offset="0.638" stop-color="#404040"/><stop offset="0.894" stop-color="#404040"/><stop offset="1.000" stop-color="#404040"/></linearGradient><linearGradient id="s343" gradientUnits="userSpaceOnUse" x1="1210.6" y1="593" x2="1219.7" y2="790.8"><stop offset="0.000" stop-color="#909090"/><stop offset="0.332" stop-color="#5c5c5c"/><stop offset="0.651" stop-color="#404040"/><stop offset="0.901" stop-color="#404040"/><stop offset="1.000" stop-color="#616161"/></linearGradient><linearGradient id="s344" gradientUnits="userSpaceOnUse" x1="1204.7" y1="597" x2="1216.6" y2="784.5"><stop offset="0.000" stop-color="#a1a1a1"/><stop offset="0.344" stop-color="#727272"/><stop offset="0.668" stop-color="#4d4d4d"/><stop offset="0.911" stop-color="#585858"/><stop offset="1.000" stop-color="#898989"/></linearGradient><linearGradient id="s345" gradientUnits="userSpaceOnUse" x1="1198.6" y1="601.2" x2="1213.4" y2="777.8"><stop offset="0.000" stop-color="#a9a9a9"/><stop offset="0.357" stop-color="#838383"/><stop offset="0.688" stop-color="#686868"/><stop offset="0.922" stop-color="#7b7b7b"/><stop offset="1.000" stop-color="#aaaaaa"/></linearGradient><linearGradient id="s346" gradientUnits="userSpaceOnUse" x1="1192.8" y1="605.2" x2="1210.3" y2="771.4"><stop offset="0.000" stop-color="#a8a8a8"/><stop offset="0.371" stop-color="#8e8e8e"/><stop offset="0.708" stop-color="#7f7f7f"/><stop offset="0.933" stop-color="#999999"/><stop offset="1.000" stop-color="#c2c2c2"/></linearGradient><linearGradient id="s347" gradientUnits="userSpaceOnUse" x1="1187.9" y1="608.6" x2="1207.7" y2="766"><stop offset="0.000" stop-color="#9c9c9c"/><stop offset="0.385" stop-color="#919191"/><stop offset="0.728" stop-color="#8f8f8f"/><stop offset="0.943" stop-color="#aeaeae"/><stop offset="1.000" stop-color="#cccccc"/></linearGradient><linearGradient id="s348" gradientUnits="userSpaceOnUse" x1="1184.3" y1="611.1" x2="1205.8" y2="762.1"><stop offset="0.000" stop-color="#888888"/><stop offset="0.395" stop-color="#8d8d8d"/><stop offset="0.743" stop-color="#999999"/><stop offset="0.950" stop-color="#b9b9b9"/><stop offset="1.000" stop-color="#cacaca"/></linearGradient><linearGradient id="s349" gradientUnits="userSpaceOnUse" x1="1180.8" y1="613.5" x2="1203.9" y2="758.3"><stop offset="0.000" stop-color="#707070"/><stop offset="0.407" stop-color="#838383"/><stop offset="0.758" stop-color="#9a9a9a"/><stop offset="0.958" stop-color="#b9b9b9"/><stop offset="1.000" stop-color="#bdbdbd"/></linearGradient><clipPath id="c18"><path d="M987.1 573.5 994.9 570 1003.8 568 1014 567.6 1025.4 569.1 1037.8 572.5 1050.9 578.1 1064.5 585.8 1078.2 595.5 1091.6 606.9 1104.5 620 1116.7 634.4 1127.7 649.9 1137.6 666.1 1146 682.6 1152.8 699.2 1157.9 715.4 1161.4 730.8 1163.1 745.1 1163.1 757.9 1161.8 768.8 1159.3 777.5 1156 783.9 1152.5 788.3 1148.8 791.1 1173.2 833.8 1186.8 823.6 1197.5 810.5 1205.1 795.3 1210 778.5 1212.3 760.7 1212.2 741.9 1209.8 722.5 1205.4 702.5 1199 682.3 1190.7 662.1 1180.6 642.2 1168.8 622.8 1155.5 604.3 1140.9 586.9 1125.2 571 1108.5 556.7 1090.9 544.3 1072.8 534 1054.2 526.2 1035.3 520.9 1016.3 518.5 997.6 519.2 979.5 523.3 962.7 530.8Z"/></clipPath><linearGradient id="s350" gradientUnits="userSpaceOnUse" x1="958" y1="532.7" x2="1172.8" y2="627.5"><stop offset="0.000" stop-color="#c1c1c1"/><stop offset="0.146" stop-color="#afafaf"/><stop offset="0.450" stop-color="#7f7f7f"/><stop offset="0.786" stop-color="#535353"/><stop offset="1.000" stop-color="#404040"/></linearGradient><linearGradient id="s351" gradientUnits="userSpaceOnUse" x1="960.3" y1="536.3" x2="1169.1" y2="629.8"><stop offset="0.000" stop-color="#cecece"/><stop offset="0.142" stop-color="#c8c8c8"/><stop offset="0.444" stop-color="#a2a2a2"/><stop offset="0.783" stop-color="#737373"/><stop offset="1.000" stop-color="#525252"/></linearGradient><linearGradient id="s352" gradientUnits="userSpaceOnUse" x1="962.7" y1="539.9" x2="1165.5" y2="632.1"><stop offset="0.000" stop-color="#cfcfcf"/><stop offset="0.139" stop-color="#d8d8d8"/><stop offset="0.438" stop-color="#c0c0c0"/><stop offset="0.780" stop-color="#939393"/><stop offset="1.000" stop-color="#6f6f6f"/></linearGradient><linearGradient id="s353" gradientUnits="userSpaceOnUse" x1="966" y1="545" x2="1160.4" y2="635.3"><stop offset="0.000" stop-color="#c3c3c3"/><stop offset="0.133" stop-color="#dadada"/><stop offset="0.429" stop-color="#d2d2d2"/><stop offset="0.775" stop-color="#ababab"/><stop offset="1.000" stop-color="#888888"/></linearGradient><linearGradient id="s354" gradientUnits="userSpaceOnUse" x1="969.8" y1="550.9" x2="1154.4" y2="639.1"><stop offset="0.000" stop-color="#aaaaaa"/><stop offset="0.126" stop-color="#cdcdcd"/><stop offset="0.417" stop-color="#fdfdfd"/><stop offset="0.769" stop-color="#bbbbbb"/><stop offset="1.000" stop-color="#9a9a9a"/></linearGradient><linearGradient id="s355" gradientUnits="userSpaceOnUse" x1="973.8" y1="557.1" x2="1148.2" y2="643"><stop offset="0.000" stop-color="#888888"/><stop offset="0.118" stop-color="#b2b2b2"/><stop offset="0.404" stop-color="#cecece"/><stop offset="0.762" stop-color="#c0c0c0"/><stop offset="1.000" stop-color="#a4a4a4"/></linearGradient><linearGradient id="s356" gradientUnits="userSpaceOnUse" x1="977.6" y1="563" x2="1142.2" y2="646.8"><stop offset="0.000" stop-color="#5e5e5e"/><stop offset="0.110" stop-color="#8d8d8d"/><stop offset="0.390" stop-color="#b6b6b6"/><stop offset="0.755" stop-color="#b3b3b3"/><stop offset="1.000" stop-color="#a4a4a4"/></linearGradient><linearGradient id="s357" gradientUnits="userSpaceOnUse" x1="980.9" y1="568.1" x2="1137.1" y2="650"><stop offset="0.000" stop-color="#404040"/><stop offset="0.102" stop-color="#616161"/><stop offset="0.377" stop-color="#939393"/><stop offset="0.748" stop-color="#9f9f9f"/><stop offset="1.000" stop-color="#9a9a9a"/></linearGradient><linearGradient id="s358" gradientUnits="userSpaceOnUse" x1="983.3" y1="571.7" x2="1133.4" y2="652.3"><stop offset="0.000" stop-color="#404040"/><stop offset="0.096" stop-color="#404040"/><stop offset="0.367" stop-color="#6a6a6a"/><stop offset="0.743" stop-color="#838383"/><stop offset="1.000" stop-color="#898989"/></linearGradient><linearGradient id="s359" gradientUnits="userSpaceOnUse" x1="985.6" y1="575.4" x2="1129.8" y2="654.6"><stop offset="0.000" stop-color="#404040"/><stop offset="0.090" stop-color="#404040"/><stop offset="0.356" stop-color="#414141"/><stop offset="0.737" stop-color="#646464"/><stop offset="1.000" stop-color="#737373"/></linearGradient><linearGradient id="s360" gradientUnits="userSpaceOnUse" x1="1166.1" y1="617.3" x2="1169.6" y2="836.6"><stop offset="0.000" stop-color="#404040"/><stop offset="0.312" stop-color="#404040"/><stop offset="0.621" stop-color="#404040"/><stop offset="0.884" stop-color="#404040"/><stop offset="1.000" stop-color="#404040"/></linearGradient><linearGradient id="s361" gradientUnits="userSpaceOnUse" x1="1162.5" y1="619.7" x2="1167.7" y2="832.8"><stop offset="0.000" stop-color="#595959"/><stop offset="0.317" stop-color="#404040"/><stop offset="0.629" stop-color="#404040"/><stop offset="0.889" stop-color="#404040"/><stop offset="1.000" stop-color="#404040"/></linearGradient><linearGradient id="s362" gradientUnits="userSpaceOnUse" x1="1158.9" y1="622.2" x2="1165.8" y2="828.8"><stop offset="0.000" stop-color="#777777"/><stop offset="0.323" stop-color="#444444"/><stop offset="0.638" stop-color="#404040"/><stop offset="0.894" stop-color="#404040"/><stop offset="1.000" stop-color="#404040"/></linearGradient><linearGradient id="s363" gradientUnits="userSpaceOnUse" x1="1154" y1="625.6" x2="1163.2" y2="823.4"><stop offset="0.000" stop-color="#909090"/><stop offset="0.332" stop-color="#5c5c5c"/><stop offset="0.651" stop-color="#404040"/><stop offset="0.901" stop-color="#404040"/><stop offset="1.000" stop-color="#616161"/></linearGradient><linearGradient id="s364" gradientUnits="userSpaceOnUse" x1="1148.2" y1="629.6" x2="1160.1" y2="817.1"><stop offset="0.000" stop-color="#a1a1a1"/><stop offset="0.344" stop-color="#727272"/><stop offset="0.668" stop-color="#4d4d4d"/><stop offset="0.911" stop-color="#585858"/><stop offset="1.000" stop-color="#898989"/></linearGradient><linearGradient id="s365" gradientUnits="userSpaceOnUse" x1="1142.1" y1="633.8" x2="1156.8" y2="810.4"><stop offset="0.000" stop-color="#a9a9a9"/><stop offset="0.357" stop-color="#838383"/><stop offset="0.688" stop-color="#686868"/><stop offset="0.922" stop-color="#7b7b7b"/><stop offset="1.000" stop-color="#aaaaaa"/></linearGradient><linearGradient id="s366" gradientUnits="userSpaceOnUse" x1="1136.3" y1="637.8" x2="1153.8" y2="804.1"><stop offset="0.000" stop-color="#a8a8a8"/><stop offset="0.371" stop-color="#8e8e8e"/><stop offset="0.708" stop-color="#7f7f7f"/><stop offset="0.933" stop-color="#999999"/><stop offset="1.000" stop-color="#c2c2c2"/></linearGradient><linearGradient id="s367" gradientUnits="userSpaceOnUse" x1="1131.3" y1="641.2" x2="1151.1" y2="798.7"><stop offset="0.000" stop-color="#9c9c9c"/><stop offset="0.385" stop-color="#919191"/><stop offset="0.728" stop-color="#8f8f8f"/><stop offset="0.943" stop-color="#aeaeae"/><stop offset="1.000" stop-color="#cccccc"/></linearGradient><linearGradient id="s368" gradientUnits="userSpaceOnUse" x1="1127.7" y1="643.7" x2="1149.2" y2="794.8"><stop offset="0.000" stop-color="#888888"/><stop offset="0.395" stop-color="#8d8d8d"/><stop offset="0.743" stop-color="#999999"/><stop offset="0.950" stop-color="#b9b9b9"/><stop offset="1.000" stop-color="#cacaca"/></linearGradient><linearGradient id="s369" gradientUnits="userSpaceOnUse" x1="1124.2" y1="646.1" x2="1147.4" y2="790.9"><stop offset="0.000" stop-color="#707070"/><stop offset="0.407" stop-color="#838383"/><stop offset="0.758" stop-color="#9a9a9a"/><stop offset="0.958" stop-color="#b9b9b9"/><stop offset="1.000" stop-color="#bdbdbd"/></linearGradient><clipPath id="c19"><path d="M930.5 606.1 938.4 602.6 947.3 600.6 957.4 600.3 968.8 601.7 981.2 605.2 994.4 610.8 1008 618.4 1021.6 628.1 1035.1 639.6 1048 652.7 1060.1 667.1 1071.2 682.5 1081 698.7 1089.4 715.3 1096.2 731.8 1101.4 748 1104.8 763.4 1106.5 777.7 1106.6 790.5 1105.2 801.4 1102.7 810.1 1099.5 816.5 1096 820.9 1092.2 823.7 1116.7 866.4 1130.2 856.2 1140.9 843.1 1148.6 827.9 1153.4 811.2 1155.7 793.3 1155.6 774.6 1153.3 755.1 1148.9 735.2 1142.4 714.9 1134.1 694.7 1124 674.8 1112.2 655.4 1099 636.9 1084.4 619.6 1068.6 603.6 1051.9 589.3 1034.4 576.9 1016.2 566.7 997.6 558.8 978.7 553.5 959.8 551.1 941 551.8 923 555.9 906.1 563.4Z"/></clipPath><linearGradient id="s370" gradientUnits="userSpaceOnUse" x1="901.5" y1="565.3" x2="1116.2" y2="660.1"><stop offset="0.000" stop-color="#c1c1c1"/><stop offset="0.146" stop-color="#afafaf"/><stop offset="0.450" stop-color="#7f7f7f"/><stop offset="0.786" stop-color="#535353"/><stop offset="1.000" stop-color="#404040"/></linearGradient><linearGradient id="s371" gradientUnits="userSpaceOnUse" x1="903.8" y1="568.9" x2="1112.6" y2="662.4"><stop offset="0.000" stop-color="#cecece"/><stop offset="0.142" stop-color="#c8c8c8"/><stop offset="0.444" stop-color="#a2a2a2"/><stop offset="0.783" stop-color="#737373"/><stop offset="1.000" stop-color="#525252"/></linearGradient><linearGradient id="s372" gradientUnits="userSpaceOnUse" x1="906.2" y1="572.6" x2="1108.9" y2="664.7"><stop offset="0.000" stop-color="#cfcfcf"/><stop offset="0.139" stop-color="#d8d8d8"/><stop offset="0.438" stop-color="#c0c0c0"/><stop offset="0.780" stop-color="#939393"/><stop offset="1.000" stop-color="#6f6f6f"/></linearGradient><linearGradient id="s373" gradientUnits="userSpaceOnUse" x1="909.4" y1="577.6" x2="1103.8" y2="667.9"><stop offset="0.000" stop-color="#c3c3c3"/><stop offset="0.133" stop-color="#dadada"/><stop offset="0.429" stop-color="#d2d2d2"/><stop offset="0.775" stop-color="#ababab"/><stop offset="1.000" stop-color="#888888"/></linearGradient><linearGradient id="s374" gradientUnits="userSpaceOnUse" x1="913.2" y1="583.5" x2="1097.9" y2="671.7"><stop offset="0.000" stop-color="#aaaaaa"/><stop offset="0.126" stop-color="#cdcdcd"/><stop offset="0.417" stop-color="#fdfdfd"/><stop offset="0.769" stop-color="#bbbbbb"/><stop offset="1.000" stop-color="#9a9a9a"/></linearGradient><linearGradient id="s375" gradientUnits="userSpaceOnUse" x1="917.3" y1="589.8" x2="1091.6" y2="675.7"><stop offset="0.000" stop-color="#888888"/><stop offset="0.118" stop-color="#b2b2b2"/><stop offset="0.404" stop-color="#cecece"/><stop offset="0.762" stop-color="#c0c0c0"/><stop offset="1.000" stop-color="#a4a4a4"/></linearGradient><linearGradient id="s376" gradientUnits="userSpaceOnUse" x1="921.1" y1="595.7" x2="1085.6" y2="679.4"><stop offset="0.000" stop-color="#5e5e5e"/><stop offset="0.110" stop-color="#8d8d8d"/><stop offset="0.390" stop-color="#b6b6b6"/><stop offset="0.755" stop-color="#b3b3b3"/><stop offset="1.000" stop-color="#a4a4a4"/></linearGradient><linearGradient id="s377" gradientUnits="userSpaceOnUse" x1="924.3" y1="600.7" x2="1080.6" y2="682.6"><stop offset="0.000" stop-color="#404040"/><stop offset="0.102" stop-color="#616161"/><stop offset="0.377" stop-color="#939393"/><stop offset="0.748" stop-color="#9f9f9f"/><stop offset="1.000" stop-color="#9a9a9a"/></linearGradient><linearGradient id="s378" gradientUnits="userSpaceOnUse" x1="926.7" y1="604.4" x2="1076.9" y2="685"><stop offset="0.000" stop-color="#404040"/><stop offset="0.096" stop-color="#404040"/><stop offset="0.367" stop-color="#6a6a6a"/><stop offset="0.743" stop-color="#838383"/><stop offset="1.000" stop-color="#898989"/></linearGradient><linearGradient id="s379" gradientUnits="userSpaceOnUse" x1="929" y1="608" x2="1073.2" y2="687.2"><stop offset="0.000" stop-color="#404040"/><stop offset="0.090" stop-color="#404040"/><stop offset="0.356" stop-color="#414141"/><stop offset="0.737" stop-color="#646464"/><stop offset="1.000" stop-color="#737373"/></linearGradient><linearGradient id="s380" gradientUnits="userSpaceOnUse" x1="1109.5" y1="649.9" x2="1113" y2="869.3"><stop offset="0.000" stop-color="#404040"/><stop offset="0.312" stop-color="#404040"/><stop offset="0.621" stop-color="#404040"/><stop offset="0.884" stop-color="#404040"/><stop offset="1.000" stop-color="#404040"/></linearGradient><linearGradient id="s381" gradientUnits="userSpaceOnUse" x1="1106" y1="652.4" x2="1111.1" y2="865.4"><stop offset="0.000" stop-color="#595959"/><stop offset="0.317" stop-color="#404040"/><stop offset="0.629" stop-color="#404040"/><stop offset="0.889" stop-color="#404040"/><stop offset="1.000" stop-color="#404040"/></linearGradient><linearGradient id="s382" gradientUnits="userSpaceOnUse" x1="1102.4" y1="654.8" x2="1109.2" y2="861.5"><stop offset="0.000" stop-color="#777777"/><stop offset="0.323" stop-color="#444444"/><stop offset="0.638" stop-color="#404040"/><stop offset="0.894" stop-color="#404040"/><stop offset="1.000" stop-color="#404040"/></linearGradient><linearGradient id="s383" gradientUnits="userSpaceOnUse" x1="1097.4" y1="658.2" x2="1106.6" y2="856.1"><stop offset="0.000" stop-color="#909090"/><stop offset="0.332" stop-color="#5c5c5c"/><stop offset="0.651" stop-color="#404040"/><stop offset="0.901" stop-color="#404040"/><stop offset="1.000" stop-color="#616161"/></linearGradient><linearGradient id="s384" gradientUnits="userSpaceOnUse" x1="1091.6" y1="662.3" x2="1103.5" y2="849.7"><stop offset="0.000" stop-color="#a1a1a1"/><stop offset="0.344" stop-color="#727272"/><stop offset="0.668" stop-color="#4d4d4d"/><stop offset="0.911" stop-color="#585858"/><stop offset="1.000" stop-color="#898989"/></linearGradient><linearGradient id="s385" gradientUnits="userSpaceOnUse" x1="1085.5" y1="666.5" x2="1100.3" y2="843.1"><stop offset="0.000" stop-color="#a9a9a9"/><stop offset="0.357" stop-color="#838383"/><stop offset="0.688" stop-color="#686868"/><stop offset="0.922" stop-color="#7b7b7b"/><stop offset="1.000" stop-color="#aaaaaa"/></linearGradient><linearGradient id="s386" gradientUnits="userSpaceOnUse" x1="1079.7" y1="670.5" x2="1097.2" y2="836.7"><stop offset="0.000" stop-color="#a8a8a8"/><stop offset="0.371" stop-color="#8e8e8e"/><stop offset="0.708" stop-color="#7f7f7f"/><stop offset="0.933" stop-color="#999999"/><stop offset="1.000" stop-color="#c2c2c2"/></linearGradient><linearGradient id="s387" gradientUnits="userSpaceOnUse" x1="1074.8" y1="673.9" x2="1094.6" y2="831.3"><stop offset="0.000" stop-color="#9c9c9c"/><stop offset="0.385" stop-color="#919191"/><stop offset="0.728" stop-color="#8f8f8f"/><stop offset="0.943" stop-color="#aeaeae"/><stop offset="1.000" stop-color="#cccccc"/></linearGradient><linearGradient id="s388" gradientUnits="userSpaceOnUse" x1="1071.2" y1="676.3" x2="1092.7" y2="827.4"><stop offset="0.000" stop-color="#888888"/><stop offset="0.395" stop-color="#8d8d8d"/><stop offset="0.743" stop-color="#999999"/><stop offset="0.950" stop-color="#b9b9b9"/><stop offset="1.000" stop-color="#cacaca"/></linearGradient><linearGradient id="s389" gradientUnits="userSpaceOnUse" x1="1067.7" y1="678.8" x2="1090.8" y2="823.5"><stop offset="0.000" stop-color="#707070"/><stop offset="0.407" stop-color="#838383"/><stop offset="0.758" stop-color="#9a9a9a"/><stop offset="0.958" stop-color="#b9b9b9"/><stop offset="1.000" stop-color="#bdbdbd"/></linearGradient><clipPath id="c20"><path d="M874 638.8 881.8 635.3 890.7 633.3 900.9 632.9 912.3 634.3 924.7 637.8 937.8 643.4 951.4 651.1 965.1 660.7 978.5 672.2 991.4 685.3 1003.5 699.7 1014.6 715.2 1024.4 731.4 1032.8 747.9 1039.7 764.4 1044.8 780.6 1048.2 796.1 1049.9 810.4 1050 823.1 1048.7 834 1046.1 842.7 1042.9 849.2 1039.4 853.5 1035.7 856.4 1060.1 899.1 1073.6 888.9 1084.3 875.8 1092 860.5 1096.9 843.8 1099.1 826 1099 807.2 1096.7 787.8 1092.3 767.8 1085.9 747.6 1077.5 727.4 1067.4 707.4 1055.7 688.1 1042.4 669.6 1027.8 652.2 1012.1 636.2 995.3 622 977.8 609.6 959.7 599.3 941 591.4 922.2 586.2 903.2 583.7 884.5 584.5 866.4 588.6 849.6 596.1Z"/></clipPath><linearGradient id="s390" gradientUnits="userSpaceOnUse" x1="844.9" y1="597.9" x2="1059.7" y2="692.7"><stop offset="0.000" stop-color="#c1c1c1"/><stop offset="0.213" stop-color="#a4a4a4"/><stop offset="0.500" stop-color="#787878"/><stop offset="0.807" stop-color="#505050"/><stop offset="1.000" stop-color="#404040"/></linearGradient><linearGradient id="s391" gradientUnits="userSpaceOnUse" x1="847.2" y1="601.5" x2="1056" y2="695"><stop offset="0.000" stop-color="#cecece"/><stop offset="0.208" stop-color="#c1c1c1"/><stop offset="0.494" stop-color="#9b9b9b"/><stop offset="0.804" stop-color="#707070"/><stop offset="1.000" stop-color="#525252"/></linearGradient><linearGradient id="s392" gradientUnits="userSpaceOnUse" x1="849.6" y1="605.2" x2="1052.3" y2="697.4"><stop offset="0.000" stop-color="#cfcfcf"/><stop offset="0.204" stop-color="#d5d5d5"/><stop offset="0.488" stop-color="#bababa"/><stop offset="0.801" stop-color="#909090"/><stop offset="1.000" stop-color="#6f6f6f"/></linearGradient><linearGradient id="s393" gradientUnits="userSpaceOnUse" x1="852.9" y1="610.2" x2="1047.3" y2="700.6"><stop offset="0.000" stop-color="#c3c3c3"/><stop offset="0.196" stop-color="#dcdcdc"/><stop offset="0.480" stop-color="#cecece"/><stop offset="0.797" stop-color="#a8a8a8"/><stop offset="1.000" stop-color="#888888"/></linearGradient><linearGradient id="s394" gradientUnits="userSpaceOnUse" x1="856.7" y1="616.2" x2="1041.3" y2="704.3"><stop offset="0.000" stop-color="#aaaaaa"/><stop offset="0.187" stop-color="#d4d4d4"/><stop offset="0.469" stop-color="#ffffff"/><stop offset="0.791" stop-color="#b8b8b8"/><stop offset="1.000" stop-color="#9a9a9a"/></linearGradient><linearGradient id="s395" gradientUnits="userSpaceOnUse" x1="860.7" y1="622.4" x2="1035" y2="708.3"><stop offset="0.000" stop-color="#888888"/><stop offset="0.177" stop-color="#bebebe"/><stop offset="0.456" stop-color="#d0d0d0"/><stop offset="0.785" stop-color="#bdbdbd"/><stop offset="1.000" stop-color="#a4a4a4"/></linearGradient><linearGradient id="s396" gradientUnits="userSpaceOnUse" x1="864.5" y1="628.3" x2="1029.1" y2="712.1"><stop offset="0.000" stop-color="#5e5e5e"/><stop offset="0.166" stop-color="#9c9c9c"/><stop offset="0.442" stop-color="#b8b8b8"/><stop offset="0.778" stop-color="#b2b2b2"/><stop offset="1.000" stop-color="#a4a4a4"/></linearGradient><linearGradient id="s397" gradientUnits="userSpaceOnUse" x1="867.8" y1="633.4" x2="1024" y2="715.3"><stop offset="0.000" stop-color="#404040"/><stop offset="0.156" stop-color="#717171"/><stop offset="0.429" stop-color="#979797"/><stop offset="0.772" stop-color="#9f9f9f"/><stop offset="1.000" stop-color="#9a9a9a"/></linearGradient><linearGradient id="s398" gradientUnits="userSpaceOnUse" x1="870.1" y1="637" x2="1020.3" y2="717.6"><stop offset="0.000" stop-color="#404040"/><stop offset="0.148" stop-color="#424242"/><stop offset="0.420" stop-color="#6f6f6f"/><stop offset="0.767" stop-color="#848484"/><stop offset="1.000" stop-color="#898989"/></linearGradient><linearGradient id="s399" gradientUnits="userSpaceOnUse" x1="872.5" y1="640.6" x2="1016.7" y2="719.9"><stop offset="0.000" stop-color="#404040"/><stop offset="0.140" stop-color="#404040"/><stop offset="0.409" stop-color="#484848"/><stop offset="0.761" stop-color="#656565"/><stop offset="1.000" stop-color="#737373"/></linearGradient><linearGradient id="s400" gradientUnits="userSpaceOnUse" x1="1052.9" y1="682.6" x2="1056.4" y2="901.9"><stop offset="0.000" stop-color="#404040"/><stop offset="0.312" stop-color="#404040"/><stop offset="0.621" stop-color="#404040"/><stop offset="0.884" stop-color="#404040"/><stop offset="1.000" stop-color="#404040"/></linearGradient><linearGradient id="s401" gradientUnits="userSpaceOnUse" x1="1049.4" y1="685" x2="1054.6" y2="898"><stop offset="0.000" stop-color="#595959"/><stop offset="0.317" stop-color="#404040"/><stop offset="0.629" stop-color="#404040"/><stop offset="0.889" stop-color="#404040"/><stop offset="1.000" stop-color="#404040"/></linearGradient><linearGradient id="s402" gradientUnits="userSpaceOnUse" x1="1045.8" y1="687.5" x2="1052.7" y2="894.1"><stop offset="0.000" stop-color="#777777"/><stop offset="0.323" stop-color="#444444"/><stop offset="0.638" stop-color="#404040"/><stop offset="0.894" stop-color="#404040"/><stop offset="1.000" stop-color="#404040"/></linearGradient><linearGradient id="s403" gradientUnits="userSpaceOnUse" x1="1040.9" y1="690.9" x2="1050" y2="888.7"><stop offset="0.000" stop-color="#909090"/><stop offset="0.332" stop-color="#5c5c5c"/><stop offset="0.651" stop-color="#404040"/><stop offset="0.901" stop-color="#404040"/><stop offset="1.000" stop-color="#616161"/></linearGradient><linearGradient id="s404" gradientUnits="userSpaceOnUse" x1="1035.1" y1="694.9" x2="1047" y2="882.4"><stop offset="0.000" stop-color="#a1a1a1"/><stop offset="0.344" stop-color="#727272"/><stop offset="0.668" stop-color="#4d4d4d"/><stop offset="0.911" stop-color="#585858"/><stop offset="1.000" stop-color="#898989"/></linearGradient><linearGradient id="s405" gradientUnits="userSpaceOnUse" x1="1029" y1="699.1" x2="1043.7" y2="875.7"><stop offset="0.000" stop-color="#a9a9a9"/><stop offset="0.357" stop-color="#838383"/><stop offset="0.688" stop-color="#686868"/><stop offset="0.922" stop-color="#7b7b7b"/><stop offset="1.000" stop-color="#aaaaaa"/></linearGradient><linearGradient id="s406" gradientUnits="userSpaceOnUse" x1="1023.2" y1="703.1" x2="1040.6" y2="869.4"><stop offset="0.000" stop-color="#a8a8a8"/><stop offset="0.371" stop-color="#8e8e8e"/><stop offset="0.708" stop-color="#7f7f7f"/><stop offset="0.933" stop-color="#999999"/><stop offset="1.000" stop-color="#c2c2c2"/></linearGradient><linearGradient id="s407" gradientUnits="userSpaceOnUse" x1="1018.2" y1="706.5" x2="1038" y2="864"><stop offset="0.000" stop-color="#9c9c9c"/><stop offset="0.385" stop-color="#919191"/><stop offset="0.728" stop-color="#8f8f8f"/><stop offset="0.943" stop-color="#aeaeae"/><stop offset="1.000" stop-color="#cccccc"/></linearGradient><linearGradient id="s408" gradientUnits="userSpaceOnUse" x1="1014.6" y1="709" x2="1036.1" y2="860"><stop offset="0.000" stop-color="#888888"/><stop offset="0.395" stop-color="#8d8d8d"/><stop offset="0.743" stop-color="#999999"/><stop offset="0.950" stop-color="#b9b9b9"/><stop offset="1.000" stop-color="#cacaca"/></linearGradient><linearGradient id="s409" gradientUnits="userSpaceOnUse" x1="1011.1" y1="711.4" x2="1034.3" y2="856.2"><stop offset="0.000" stop-color="#707070"/><stop offset="0.407" stop-color="#838383"/><stop offset="0.758" stop-color="#9a9a9a"/><stop offset="0.958" stop-color="#b9b9b9"/><stop offset="1.000" stop-color="#bdbdbd"/></linearGradient><clipPath id="c21"><path d="M817.4 671.4 825.2 667.9 834.2 665.9 844.3 665.5 855.7 667 868.1 670.5 881.3 676 894.8 683.7 908.5 693.4 922 704.9 934.9 717.9 947 732.4 958.1 747.8 967.9 764 976.3 780.5 983.1 797.1 988.2 813.3 991.7 828.7 993.4 843 993.5 855.8 992.1 866.7 989.6 875.4 986.4 881.8 982.8 886.2 979.1 889 1003.5 931.7 1017.1 921.5 1027.8 908.4 1035.5 893.2 1040.3 876.5 1042.6 858.6 1042.5 839.9 1040.2 820.4 1035.7 800.4 1029.3 780.2 1021 760 1010.9 740.1 999.1 720.7 985.9 702.2 971.3 684.8 955.5 668.9 938.8 654.6 921.2 642.2 903.1 632 884.5 624.1 865.6 618.8 846.6 616.4 827.9 617.1 809.8 621.2 793 628.7Z"/></clipPath><linearGradient id="s410" gradientUnits="userSpaceOnUse" x1="788.3" y1="630.6" x2="1003.1" y2="725.4"><stop offset="0.000" stop-color="#c1c1c1"/><stop offset="0.213" stop-color="#a4a4a4"/><stop offset="0.500" stop-color="#787878"/><stop offset="0.807" stop-color="#505050"/><stop offset="1.000" stop-color="#404040"/></linearGradient><linearGradient id="s411" gradientUnits="userSpaceOnUse" x1="790.7" y1="634.2" x2="999.5" y2="727.7"><stop offset="0.000" stop-color="#cecece"/><stop offset="0.208" stop-color="#c1c1c1"/><stop offset="0.494" stop-color="#9b9b9b"/><stop offset="0.804" stop-color="#707070"/><stop offset="1.000" stop-color="#525252"/></linearGradient><linearGradient id="s412" gradientUnits="userSpaceOnUse" x1="793" y1="637.8" x2="995.8" y2="730"><stop offset="0.000" stop-color="#cfcfcf"/><stop offset="0.204" stop-color="#d5d5d5"/><stop offset="0.488" stop-color="#bababa"/><stop offset="0.801" stop-color="#909090"/><stop offset="1.000" stop-color="#6f6f6f"/></linearGradient><linearGradient id="s413" gradientUnits="userSpaceOnUse" x1="796.3" y1="642.9" x2="990.7" y2="733.2"><stop offset="0.000" stop-color="#c3c3c3"/><stop offset="0.196" stop-color="#dcdcdc"/><stop offset="0.480" stop-color="#cecece"/><stop offset="0.797" stop-color="#a8a8a8"/><stop offset="1.000" stop-color="#888888"/></linearGradient><linearGradient id="s414" gradientUnits="userSpaceOnUse" x1="800.1" y1="648.8" x2="984.7" y2="737"><stop offset="0.000" stop-color="#aaaaaa"/><stop offset="0.187" stop-color="#d4d4d4"/><stop offset="0.469" stop-color="#ffffff"/><stop offset="0.791" stop-color="#b8b8b8"/><stop offset="1.000" stop-color="#9a9a9a"/></linearGradient><linearGradient id="s415" gradientUnits="userSpaceOnUse" x1="804.1" y1="655" x2="978.5" y2="740.9"><stop offset="0.000" stop-color="#888888"/><stop offset="0.177" stop-color="#bebebe"/><stop offset="0.456" stop-color="#d0d0d0"/><stop offset="0.785" stop-color="#bdbdbd"/><stop offset="1.000" stop-color="#a4a4a4"/></linearGradient><linearGradient id="s416" gradientUnits="userSpaceOnUse" x1="808" y1="661" x2="972.5" y2="744.7"><stop offset="0.000" stop-color="#5e5e5e"/><stop offset="0.166" stop-color="#9c9c9c"/><stop offset="0.442" stop-color="#b8b8b8"/><stop offset="0.778" stop-color="#b2b2b2"/><stop offset="1.000" stop-color="#a4a4a4"/></linearGradient><linearGradient id="s417" gradientUnits="userSpaceOnUse" x1="811.2" y1="666" x2="967.4" y2="747.9"><stop offset="0.000" stop-color="#404040"/><stop offset="0.156" stop-color="#717171"/><stop offset="0.429" stop-color="#979797"/><stop offset="0.772" stop-color="#9f9f9f"/><stop offset="1.000" stop-color="#9a9a9a"/></linearGradient><linearGradient id="s418" gradientUnits="userSpaceOnUse" x1="813.6" y1="669.7" x2="963.8" y2="750.2"><stop offset="0.000" stop-color="#404040"/><stop offset="0.148" stop-color="#424242"/><stop offset="0.420" stop-color="#6f6f6f"/><stop offset="0.767" stop-color="#848484"/><stop offset="1.000" stop-color="#898989"/></linearGradient><linearGradient id="s419" gradientUnits="userSpaceOnUse" x1="815.9" y1="673.3" x2="960.1" y2="752.5"><stop offset="0.000" stop-color="#404040"/><stop offset="0.140" stop-color="#404040"/><stop offset="0.409" stop-color="#484848"/><stop offset="0.761" stop-color="#656565"/><stop offset="1.000" stop-color="#737373"/></linearGradient><linearGradient id="s420" gradientUnits="userSpaceOnUse" x1="996.4" y1="715.2" x2="999.9" y2="934.5"><stop offset="0.000" stop-color="#404040"/><stop offset="0.312" stop-color="#404040"/><stop offset="0.621" stop-color="#404040"/><stop offset="0.884" stop-color="#404040"/><stop offset="1.000" stop-color="#404040"/></linearGradient><linearGradient id="s421" gradientUnits="userSpaceOnUse" x1="992.8" y1="717.6" x2="998" y2="930.7"><stop offset="0.000" stop-color="#595959"/><stop offset="0.317" stop-color="#404040"/><stop offset="0.629" stop-color="#404040"/><stop offset="0.889" stop-color="#404040"/><stop offset="1.000" stop-color="#404040"/></linearGradient><linearGradient id="s422" gradientUnits="userSpaceOnUse" x1="989.3" y1="720.1" x2="996.1" y2="926.8"><stop offset="0.000" stop-color="#777777"/><stop offset="0.323" stop-color="#444444"/><stop offset="0.638" stop-color="#404040"/><stop offset="0.894" stop-color="#404040"/><stop offset="1.000" stop-color="#404040"/></linearGradient><linearGradient id="s423" gradientUnits="userSpaceOnUse" x1="984.3" y1="723.5" x2="993.5" y2="921.4"><stop offset="0.000" stop-color="#909090"/><stop offset="0.332" stop-color="#5c5c5c"/><stop offset="0.651" stop-color="#404040"/><stop offset="0.901" stop-color="#404040"/><stop offset="1.000" stop-color="#616161"/></linearGradient><linearGradient id="s424" gradientUnits="userSpaceOnUse" x1="978.5" y1="727.5" x2="990.4" y2="915"><stop offset="0.000" stop-color="#a1a1a1"/><stop offset="0.344" stop-color="#727272"/><stop offset="0.668" stop-color="#4d4d4d"/><stop offset="0.911" stop-color="#585858"/><stop offset="1.000" stop-color="#898989"/></linearGradient><linearGradient id="s425" gradientUnits="userSpaceOnUse" x1="972.4" y1="731.7" x2="987.2" y2="908.3"><stop offset="0.000" stop-color="#a9a9a9"/><stop offset="0.357" stop-color="#838383"/><stop offset="0.688" stop-color="#686868"/><stop offset="0.922" stop-color="#7b7b7b"/><stop offset="1.000" stop-color="#aaaaaa"/></linearGradient><linearGradient id="s426" gradientUnits="userSpaceOnUse" x1="966.6" y1="735.7" x2="984.1" y2="902"><stop offset="0.000" stop-color="#a8a8a8"/><stop offset="0.371" stop-color="#8e8e8e"/><stop offset="0.708" stop-color="#7f7f7f"/><stop offset="0.933" stop-color="#999999"/><stop offset="1.000" stop-color="#c2c2c2"/></linearGradient><linearGradient id="s427" gradientUnits="userSpaceOnUse" x1="961.7" y1="739.2" x2="981.5" y2="896.6"><stop offset="0.000" stop-color="#9c9c9c"/><stop offset="0.385" stop-color="#919191"/><stop offset="0.728" stop-color="#8f8f8f"/><stop offset="0.943" stop-color="#aeaeae"/><stop offset="1.000" stop-color="#cccccc"/></linearGradient><linearGradient id="s428" gradientUnits="userSpaceOnUse" x1="958.1" y1="741.6" x2="979.6" y2="892.7"><stop offset="0.000" stop-color="#888888"/><stop offset="0.395" stop-color="#8d8d8d"/><stop offset="0.743" stop-color="#999999"/><stop offset="0.950" stop-color="#b9b9b9"/><stop offset="1.000" stop-color="#cacaca"/></linearGradient><linearGradient id="s429" gradientUnits="userSpaceOnUse" x1="954.5" y1="744.1" x2="977.7" y2="888.8"><stop offset="0.000" stop-color="#707070"/><stop offset="0.407" stop-color="#838383"/><stop offset="0.758" stop-color="#9a9a9a"/><stop offset="0.958" stop-color="#b9b9b9"/><stop offset="1.000" stop-color="#bdbdbd"/></linearGradient><clipPath id="c22"><path d="M936.8 874.7 936.9 887.8 935.6 898.9 933.1 907.8 929.9 914.3 926.3 918.8 922.6 921.6 947 964.3 960.7 954 971.4 940.7 979.1 925.3 983.9 908.3 986.1 890.2 985.8 871.2Z"/></clipPath><linearGradient id="s430" gradientUnits="userSpaceOnUse" x1="986.6" y1="871.2" x2="943.3" y2="967.2"><stop offset="0.000" stop-color="#404040"/><stop offset="0.172" stop-color="#404040"/><stop offset="0.519" stop-color="#404040"/><stop offset="0.855" stop-color="#404040"/><stop offset="1.000" stop-color="#404040"/></linearGradient><linearGradient id="s431" gradientUnits="userSpaceOnUse" x1="982.4" y1="871.5" x2="941.5" y2="963.3"><stop offset="0.000" stop-color="#404040"/><stop offset="0.175" stop-color="#404040"/><stop offset="0.526" stop-color="#404040"/><stop offset="0.858" stop-color="#404040"/><stop offset="1.000" stop-color="#404040"/></linearGradient><linearGradient id="s432" gradientUnits="userSpaceOnUse" x1="978" y1="871.8" x2="939.5" y2="959.4"><stop offset="0.000" stop-color="#404040"/><stop offset="0.179" stop-color="#404040"/><stop offset="0.533" stop-color="#404040"/><stop offset="0.861" stop-color="#404040"/><stop offset="1.000" stop-color="#404040"/></linearGradient><linearGradient id="s433" gradientUnits="userSpaceOnUse" x1="972" y1="872.2" x2="936.9" y2="954"><stop offset="0.000" stop-color="#404040"/><stop offset="0.186" stop-color="#404040"/><stop offset="0.545" stop-color="#404040"/><stop offset="0.866" stop-color="#474747"/><stop offset="1.000" stop-color="#616161"/></linearGradient><linearGradient id="s434" gradientUnits="userSpaceOnUse" x1="965" y1="872.7" x2="933.8" y2="947.7"><stop offset="0.000" stop-color="#525252"/><stop offset="0.194" stop-color="#4b4b4b"/><stop offset="0.561" stop-color="#4e4e4e"/><stop offset="0.874" stop-color="#6f6f6f"/><stop offset="1.000" stop-color="#898989"/></linearGradient><linearGradient id="s435" gradientUnits="userSpaceOnUse" x1="957.6" y1="873.2" x2="930.6" y2="941"><stop offset="0.000" stop-color="#6b6b6b"/><stop offset="0.206" stop-color="#676767"/><stop offset="0.582" stop-color="#6f6f6f"/><stop offset="0.883" stop-color="#939393"/><stop offset="1.000" stop-color="#aaaaaa"/></linearGradient><linearGradient id="s436" gradientUnits="userSpaceOnUse" x1="950.6" y1="873.8" x2="927.5" y2="934.6"><stop offset="0.000" stop-color="#7f7f7f"/><stop offset="0.219" stop-color="#7f7f7f"/><stop offset="0.606" stop-color="#8d8d8d"/><stop offset="0.894" stop-color="#afafaf"/><stop offset="1.000" stop-color="#c2c2c2"/></linearGradient><linearGradient id="s437" gradientUnits="userSpaceOnUse" x1="944.6" y1="874.2" x2="924.9" y2="929.2"><stop offset="0.000" stop-color="#8e8e8e"/><stop offset="0.234" stop-color="#919191"/><stop offset="0.631" stop-color="#a2a2a2"/><stop offset="0.905" stop-color="#c0c0c0"/><stop offset="1.000" stop-color="#cccccc"/></linearGradient><linearGradient id="s438" gradientUnits="userSpaceOnUse" x1="940.2" y1="874.5" x2="923" y2="925.3"><stop offset="0.000" stop-color="#959595"/><stop offset="0.246" stop-color="#9b9b9b"/><stop offset="0.654" stop-color="#afafaf"/><stop offset="0.915" stop-color="#c5c5c5"/><stop offset="1.000" stop-color="#cacaca"/></linearGradient><linearGradient id="s439" gradientUnits="userSpaceOnUse" x1="936" y1="874.8" x2="921.1" y2="921.5"><stop offset="0.000" stop-color="#959595"/><stop offset="0.261" stop-color="#9d9d9d"/><stop offset="0.680" stop-color="#b1b1b1"/><stop offset="0.927" stop-color="#bfbfbf"/><stop offset="1.000" stop-color="#bdbdbd"/></linearGradient></defs><g fill="none" stroke-linecap="butt" stroke-linejoin="round"><g clip-path="url(#c0)"><g filter="url(#bl)"><path d="M1518.5 635.1 1501 644.1 1481.6 647.7 1461.9 646.5 1442.4 641 1423.4 631.9 1405.1 619.6 1387.5 604.4 1370.9 586.7 1355.6 566.7 1341.8 544.9 1329.8 521.7" stroke="url(#s0)" stroke-width="6.1"/><path d="M1516 631.6 1499.6 640 1481.4 643.4 1462.6 642.3 1443.9 637 1425.6 628.2 1407.7 616.2 1390.5 601.3 1374.2 583.9 1359.1 564.3 1345.5 542.8 1333.7 519.9" stroke="url(#s1)" stroke-width="4.3"/><path d="M1513.5 628.1 1498.2 635.9 1481.2 639.1 1463.4 638 1445.5 632.9 1427.7 624.4 1410.3 612.7 1393.5 598.2 1377.5 581.1 1362.7 561.8 1349.3 540.6 1337.7 518" stroke="url(#s2)" stroke-width="6.2"/><path d="M1510.1 623.2 1496.3 630.2 1480.8 633.1 1464.4 632.1 1447.6 627.3 1430.7 619.2 1414 607.9 1397.7 593.9 1382.1 577.2 1367.6 558.3 1354.5 537.6 1343.1 515.5" stroke="url(#s3)" stroke-width="7.6"/><path d="M1506 617.4 1494 623.5 1480.4 626.1 1465.7 625.1 1450.2 620.7 1434.3 613.1 1418.3 602.3 1402.6 588.8 1387.5 572.6 1373.4 554.3 1360.7 534.1 1349.5 512.6" stroke="url(#s4)" stroke-width="8.3"/><path d="M1501.7 611.4 1491.6 616.5 1480 618.7 1467 617.8 1452.8 613.8 1438 606.6 1422.8 596.5 1407.7 583.4 1393.2 567.9 1379.5 550.1 1367.1 530.4 1356.2 509.4" stroke="url(#s5)" stroke-width="8.3"/><path d="M1497.6 605.6 1489.4 609.8 1479.6 611.6 1468.2 610.9 1455.3 607.2 1441.5 600.5 1427.1 590.9 1412.6 578.4 1398.5 563.3 1385.3 546 1373.2 526.9 1362.6 506.5" stroke="url(#s6)" stroke-width="7.6"/><path d="M1494.1 600.7 1487.4 604.1 1479.3 605.6 1469.2 604.9 1457.5 601.6 1444.5 595.3 1430.7 586.1 1416.8 574 1403.1 559.4 1390.2 542.6 1378.4 524 1368.1 504" stroke="url(#s7)" stroke-width="6.2"/><path d="M1491.6 597.1 1486 600 1479 601.3 1470 600.7 1459 597.5 1446.6 591.6 1433.4 582.6 1419.8 570.9 1406.5 556.6 1393.8 540.1 1382.2 521.8 1372 502.1" stroke="url(#s8)" stroke-width="4.3"/><path d="M1489.1 593.6 1484.7 595.9 1478.8 597 1470.7 596.4 1460.6 593.5 1448.8 587.8 1436 579.2 1422.8 567.8 1409.7 553.8 1397.3 537.6 1385.9 519.7 1375.9 500.3" stroke="url(#s9)" stroke-width="6.1"/><path d="M1335.2 532.6 1324.2 508.8 1315.4 484.1 1309.1 459.1 1305.3 434.1 1304.2 409.6 1306.1 386 1311.2 363.7 1319.5 343.1 1331.2 324.8 1346.4 309.6 1364.5 298.3" stroke="url(#s10)" stroke-width="6.1"/><path d="M1339 530.7 1328.2 507.2 1319.5 482.9 1313.3 458.2 1309.5 433.7 1308.5 409.7 1310.4 386.6 1315.3 364.9 1323.3 345.1 1334.6 327.5 1349.1 313 1366.3 302.2" stroke="url(#s11)" stroke-width="4.3"/><path d="M1342.9 528.7 1332.2 505.5 1323.7 481.6 1317.5 457.4 1313.9 433.3 1312.9 409.8 1314.7 387.3 1319.4 366.2 1327.2 347 1338 330.2 1351.8 316.4 1368.2 306.1" stroke="url(#s12)" stroke-width="6.2"/><path d="M1348.2 526 1337.8 503.3 1329.5 479.8 1323.4 456.1 1319.8 432.7 1318.9 409.9 1320.6 388.2 1325.2 368 1332.5 349.8 1342.7 334 1355.5 321.1 1370.8 311.5" stroke="url(#s13)" stroke-width="7.6"/><path d="M1354.5 522.7 1344.3 500.6 1336.2 477.8 1330.3 454.7 1326.9 432 1325.9 410 1327.6 389.2 1331.9 370.1 1338.8 353 1348.2 338.4 1359.9 326.6 1373.8 317.9" stroke="url(#s14)" stroke-width="8.3"/><path d="M1361.1 519.4 1351.2 497.8 1343.3 475.6 1337.6 453.3 1334.2 431.3 1333.4 410.1 1334.9 390.3 1339 372.3 1345.4 356.4 1354 343 1364.6 332.4 1377 324.6" stroke="url(#s15)" stroke-width="8.3"/><path d="M1367.3 516.1 1357.7 495.1 1350 473.5 1344.5 451.8 1341.3 430.6 1340.4 410.2 1341.9 391.3 1345.7 374.3 1351.7 359.6 1359.5 347.4 1369 337.9 1380 331" stroke="url(#s16)" stroke-width="7.6"/><path d="M1372.7 513.4 1363.3 492.9 1355.8 471.8 1350.4 450.6 1347.2 430 1346.4 410.3 1347.9 392.2 1351.5 376.1 1357 362.4 1364.2 351.2 1372.7 342.6 1382.5 336.4" stroke="url(#s17)" stroke-width="6.2"/><path d="M1376.6 511.4 1367.3 491.2 1359.9 470.5 1354.7 449.8 1351.6 429.5 1350.8 410.4 1352.2 392.9 1355.6 377.4 1360.9 364.3 1367.6 353.9 1375.4 346 1384.4 340.4" stroke="url(#s18)" stroke-width="4.3"/><path d="M1380.4 509.5 1371.3 489.6 1364.1 469.3 1358.9 448.9 1355.8 429.1 1355.1 410.5 1356.4 393.5 1359.7 378.6 1364.7 366.3 1370.9 356.6 1378.1 349.3 1386.2 344.2" stroke="url(#s19)" stroke-width="6.1"/></g></g><path d="M1478.3 599.4 1475.3 599.7 1472.3 599.7 1469.4 599.7 1466.5 599.5 1463.6 599.1 1460.7 598.7 1457.9 598.1 1455 597.3 1452.1 596.5 1449.2 595.5 1446.4 594.4 1443.5 593.1 1440.6 591.7 1437.7 590.2 1434.8 588.6 1431.9 586.9 1429 585 1426.1 583 1423.2 580.9 1420.4 578.7 1417.5 576.4 1414.7 574 1411.9 571.5 1409.1 568.8 1406.3 566.1 1403.6 563.3 1400.9 560.4 1398.2 557.3 1395.6 554.2 1393 551.1 1390.5 547.8 1388 544.4 1385.5 541 1383.1 537.5 1380.7 534 1378.4 530.3 1376.2 526.7 1374 522.9 1371.9 519.1 1369.8 515.3 1367.9 511.4 1365.9 507.4 1364.1 503.5 1362.3 499.5 1360.6 495.4 1359 491.3 1357.5 487.3 1356 483.2 1354.6 479 1353.5 474.8 1352.6 470.4 1351.8 466 1351.1 461.6 1350.5 457.2 1349.9 452.8 1349.5 448.4 1349.1 444 1348.9 439.6 1348.7 435.2 1348.6 430.9 1348.6 426.6 1348.8 422.3 1349 418.1 1349.3 413.9 1349.7 409.8 1350.3 405.8 1350.9 401.8 1351.6 397.9 1352.4 394.1 1353.3 390.4 1354.3 386.9 1355.4 383.4 1356.6 380 1357.8 376.8 1359.1 373.7 1360.6 370.7 1361.9 368 1363.1 365.5 1364.4 363.1 1365.7 360.9 1367.1 358.8 1368.5 356.8 1370 354.9 1371.5 353.1 1373.1 351.5 1374.7 349.9 1376.3 348.5 1378 347.2 1379.8 345.9 1381.6 344.8 1383.4 343.7" stroke="#0a0a0a" stroke-width="1.2"/><g clip-path="url(#c1)"><g filter="url(#bl)"><path d="M1462 667.8 1444.4 676.7 1425.1 680.4 1405.3 679.1 1385.8 673.6 1366.9 664.5 1348.5 652.2 1330.9 637 1314.4 619.3 1299.1 599.4 1285.3 577.6 1273.3 554.3" stroke="url(#s20)" stroke-width="6.1"/><path d="M1459.5 664.3 1443 672.6 1424.8 676.1 1406.1 674.9 1387.4 669.6 1369 660.8 1351.1 648.8 1333.9 634 1317.6 616.5 1302.6 596.9 1289 575.4 1277.2 552.5" stroke="url(#s21)" stroke-width="4.3"/><path d="M1457 660.7 1441.6 668.5 1424.6 671.7 1406.8 670.6 1388.9 665.6 1371.2 657 1353.8 645.3 1336.9 630.8 1321 613.7 1306.2 594.4 1292.8 573.3 1281.1 550.7" stroke="url(#s22)" stroke-width="6.2"/><path d="M1453.5 655.8 1439.7 662.8 1424.3 665.7 1407.9 664.7 1391.1 660 1374.2 651.8 1357.4 640.6 1341.1 626.5 1325.6 609.8 1311.1 591 1298 570.3 1286.6 548.2" stroke="url(#s23)" stroke-width="7.6"/><path d="M1449.4 650 1437.4 656.1 1423.9 658.7 1409.1 657.7 1393.6 653.4 1377.7 645.7 1361.7 635 1346 621.4 1330.9 605.3 1316.9 586.9 1304.1 566.8 1293 545.2" stroke="url(#s24)" stroke-width="8.3"/><path d="M1445.1 644 1435.1 649.1 1423.4 651.3 1410.4 650.4 1396.3 646.4 1381.4 639.3 1366.2 629.1 1351.2 616.1 1336.6 600.5 1322.9 582.7 1310.5 563.1 1299.7 542.1" stroke="url(#s25)" stroke-width="8.3"/><path d="M1441.1 638.2 1432.8 642.4 1423 644.3 1411.6 643.5 1398.8 639.9 1384.9 633.2 1370.5 623.5 1356.1 611 1342 595.9 1328.7 578.7 1316.6 559.6 1306.1 539.1" stroke="url(#s26)" stroke-width="7.6"/><path d="M1437.6 633.3 1430.9 636.7 1422.7 638.3 1412.7 637.6 1400.9 634.2 1387.9 628 1374.2 618.7 1360.2 606.7 1346.6 592.1 1333.6 575.2 1321.9 556.6 1311.5 536.6" stroke="url(#s27)" stroke-width="6.2"/><path d="M1435.1 629.8 1429.5 632.6 1422.5 633.9 1413.4 633.3 1402.5 630.2 1390.1 624.2 1376.8 615.3 1363.2 603.5 1349.9 589.2 1337.2 572.7 1325.6 554.4 1315.5 534.8" stroke="url(#s28)" stroke-width="4.3"/><path d="M1432.6 626.3 1428.1 628.5 1422.2 629.6 1414.2 629.1 1404 626.2 1392.2 620.5 1379.4 611.9 1366.2 600.5 1353.2 586.5 1340.7 570.3 1329.4 552.3 1319.4 533" stroke="url(#s29)" stroke-width="6.1"/><path d="M1278.6 565.3 1267.7 541.4 1258.9 516.8 1252.5 491.7 1248.7 466.7 1247.7 442.3 1249.6 418.6 1254.6 396.3 1262.9 375.7 1274.7 357.5 1289.8 342.3 1307.9 330.9" stroke="url(#s30)" stroke-width="6.1"/><path d="M1282.4 563.3 1271.6 539.8 1263 515.5 1256.7 490.9 1253 466.3 1252 442.3 1253.8 419.3 1258.7 397.6 1266.7 377.7 1278 360.1 1292.5 345.6 1309.8 334.8" stroke="url(#s31)" stroke-width="4.3"/><path d="M1286.3 561.3 1275.7 538.2 1267.2 514.2 1261 490 1257.3 465.9 1256.3 442.4 1258.1 419.9 1262.9 398.9 1270.6 379.7 1281.4 362.9 1295.2 349 1311.6 338.8" stroke="url(#s32)" stroke-width="6.2"/><path d="M1291.6 558.6 1281.2 535.9 1272.9 512.5 1266.9 488.8 1263.3 465.3 1262.3 442.5 1264.1 420.8 1268.6 400.6 1275.9 382.4 1286.1 366.6 1299 353.7 1314.2 344.2" stroke="url(#s33)" stroke-width="7.6"/><path d="M1297.9 555.4 1287.8 533.2 1279.6 510.4 1273.8 487.4 1270.3 464.6 1269.4 442.6 1271 421.8 1275.3 402.7 1282.2 385.6 1291.6 371 1303.4 359.2 1317.2 350.6" stroke="url(#s34)" stroke-width="8.3"/><path d="M1304.5 552 1294.6 530.4 1286.7 508.2 1281 485.9 1277.7 463.9 1276.8 442.7 1278.4 422.9 1282.4 404.9 1288.8 389 1297.4 375.7 1308 365 1320.4 357.3" stroke="url(#s35)" stroke-width="8.3"/><path d="M1310.8 548.8 1301.2 527.8 1293.5 506.2 1287.9 484.5 1284.7 463.2 1283.8 442.9 1285.4 424 1289.2 407 1295.1 392.3 1302.9 380.1 1312.4 370.5 1323.4 363.6" stroke="url(#s36)" stroke-width="7.6"/><path d="M1316.1 546 1306.7 525.5 1299.2 504.4 1293.8 483.3 1290.7 462.6 1289.8 443 1291.3 424.9 1294.9 408.7 1300.4 395 1307.6 383.8 1316.1 375.2 1326 369.1" stroke="url(#s37)" stroke-width="6.2"/><path d="M1320 544 1310.8 523.9 1303.4 503.2 1298.1 482.4 1295 462.2 1294.2 443 1295.6 425.5 1299.1 410 1304.3 397 1311 386.5 1318.9 378.6 1327.8 373" stroke="url(#s38)" stroke-width="4.3"/><path d="M1323.8 542.1 1314.7 522.3 1307.5 501.9 1302.3 481.6 1299.3 461.8 1298.5 443.1 1299.9 426.1 1303.2 411.3 1308.1 398.9 1314.4 389.2 1321.5 382 1329.7 376.9" stroke="url(#s39)" stroke-width="6.1"/></g></g><path d="M1421.7 632.1 1418.7 632.3 1415.7 632.4 1412.8 632.3 1409.9 632.1 1407 631.8 1404.2 631.3 1401.3 630.7 1398.4 630 1395.6 629.1 1392.7 628.1 1389.8 627 1386.9 625.7 1384 624.4 1381.1 622.9 1378.2 621.2 1375.3 619.5 1372.4 617.6 1369.6 615.7 1366.7 613.6 1363.8 611.4 1361 609 1358.1 606.6 1355.3 604.1 1352.6 601.5 1349.8 598.7 1347.1 595.9 1344.4 593 1341.7 590 1339.1 586.9 1336.5 583.7 1333.9 580.4 1331.4 577.1 1328.9 573.7 1326.5 570.2 1324.2 566.6 1321.9 563 1319.6 559.3 1317.5 555.6 1315.3 551.8 1313.3 547.9 1311.3 544 1309.4 540.1 1307.5 536.1 1305.8 532.1 1304.1 528.1 1302.4 524 1300.9 519.9 1299.4 515.8 1298.1 511.7 1297 507.4 1296.1 503 1295.3 498.7 1294.6 494.2 1293.9 489.8 1293.4 485.4 1292.9 481 1292.6 476.6 1292.3 472.2 1292.1 467.8 1292.1 463.5 1292.1 459.2 1292.2 454.9 1292.4 450.7 1292.8 446.5 1293.2 442.4 1293.7 438.4 1294.3 434.4 1295 430.6 1295.8 426.8 1296.8 423.1 1297.7 419.5 1298.8 416 1300 412.7 1301.3 409.4 1302.6 406.3 1304 403.3 1305.3 400.6 1306.6 398.1 1307.8 395.8 1309.1 393.5 1310.5 391.4 1311.9 389.4 1313.4 387.6 1314.9 385.8 1316.5 384.1 1318.1 382.6 1319.8 381.1 1321.5 379.8 1323.2 378.5 1325 377.4 1326.8 376.3" stroke="#0a0a0a" stroke-width="1.2"/><g clip-path="url(#c2)"><g filter="url(#bl)"><path d="M1405.4 700.4 1387.8 709.3 1368.5 713 1348.8 711.8 1329.3 706.3 1310.3 697.2 1291.9 684.9 1274.4 669.7 1257.8 652 1242.5 632 1228.7 610.2 1216.7 587" stroke="url(#s40)" stroke-width="6.1"/><path d="M1402.9 696.9 1386.5 705.3 1368.3 708.7 1349.5 707.5 1330.8 702.3 1312.4 693.4 1294.6 681.4 1277.4 666.6 1261.1 649.2 1246 629.5 1232.4 608.1 1220.6 585.1" stroke="url(#s41)" stroke-width="4.3"/><path d="M1400.4 693.3 1385.1 701.1 1368 704.4 1350.3 703.2 1332.4 698.2 1314.6 689.7 1297.2 678 1280.4 663.5 1264.4 646.4 1249.6 627.1 1236.2 605.9 1224.5 583.3" stroke="url(#s42)" stroke-width="6.2"/><path d="M1396.9 688.4 1383.1 695.5 1367.7 698.4 1351.3 697.3 1334.5 692.6 1317.6 684.5 1300.9 673.2 1284.6 659.1 1269 642.5 1254.5 623.6 1241.4 602.9 1230 580.8" stroke="url(#s43)" stroke-width="7.6"/><path d="M1392.9 682.7 1380.9 688.8 1367.3 691.3 1352.6 690.4 1337 686 1321.1 678.4 1305.1 667.6 1289.4 654.1 1274.4 637.9 1260.3 619.6 1247.5 599.4 1236.4 577.8" stroke="url(#s44)" stroke-width="8.3"/><path d="M1388.6 676.6 1378.5 681.7 1366.9 683.9 1353.8 683.1 1339.7 679.1 1324.8 671.9 1309.7 661.7 1294.6 648.7 1280 633.1 1266.4 615.3 1254 595.7 1243.1 574.7" stroke="url(#s45)" stroke-width="8.3"/><path d="M1384.5 670.9 1376.2 675.1 1366.5 676.9 1355.1 676.1 1342.2 672.5 1328.4 665.8 1313.9 656.1 1299.5 643.6 1285.4 628.6 1272.2 611.3 1260.1 592.2 1249.5 571.8" stroke="url(#s46)" stroke-width="7.6"/><path d="M1381 666 1374.3 669.4 1366.1 670.9 1356.1 670.2 1344.4 666.9 1331.3 660.6 1317.6 651.4 1303.7 639.3 1290 624.7 1277.1 607.9 1265.3 589.2 1255 569.2" stroke="url(#s47)" stroke-width="6.2"/><path d="M1378.5 662.4 1372.9 665.3 1365.9 666.6 1356.9 665.9 1345.9 662.8 1333.5 656.8 1320.2 647.9 1306.7 636.2 1293.3 621.9 1280.7 605.4 1269.1 587.1 1258.9 567.4" stroke="url(#s48)" stroke-width="4.3"/><path d="M1376 658.9 1371.5 661.2 1365.7 662.3 1357.6 661.7 1347.5 658.8 1335.7 653.1 1322.9 644.5 1309.7 633.1 1296.6 619.1 1284.2 602.9 1272.8 584.9 1262.8 565.6" stroke="url(#s49)" stroke-width="6.1"/><path d="M1222 597.9 1211.1 574.1 1202.3 549.4 1195.9 524.4 1192.1 499.4 1191.1 474.9 1193 451.3 1198 429 1206.3 408.4 1218.1 390.1 1233.3 374.9 1251.4 363.6" stroke="url(#s50)" stroke-width="6.1"/><path d="M1225.9 596 1215.1 572.4 1206.4 548.1 1200.1 523.5 1196.4 499 1195.4 475 1197.3 451.9 1202.1 430.2 1210.2 410.3 1221.5 392.8 1235.9 378.3 1253.2 367.5" stroke="url(#s51)" stroke-width="4.3"/><path d="M1229.7 594 1219.1 570.8 1210.6 546.9 1204.4 522.6 1200.8 498.5 1199.8 475 1201.6 452.6 1206.3 431.5 1214 412.3 1224.9 395.5 1238.7 381.7 1255.1 371.4" stroke="url(#s52)" stroke-width="6.2"/><path d="M1235.1 591.2 1224.7 568.5 1216.3 545.1 1210.3 521.4 1206.7 498 1205.8 475.1 1207.5 453.4 1212 433.3 1219.4 415.1 1229.5 399.3 1242.4 386.4 1257.6 376.8" stroke="url(#s53)" stroke-width="7.6"/><path d="M1241.4 588 1231.2 565.9 1223.1 543.1 1217.2 520 1213.7 497.3 1212.8 475.3 1214.5 454.5 1218.8 435.3 1225.7 418.3 1235.1 403.7 1246.8 391.9 1260.7 383.2" stroke="url(#s54)" stroke-width="8.3"/><path d="M1248 584.6 1238.1 563.1 1230.2 540.9 1224.5 518.5 1221.1 496.5 1220.2 475.4 1221.8 455.6 1225.9 437.5 1232.3 421.7 1240.8 408.3 1251.4 397.7 1263.8 389.9" stroke="url(#s55)" stroke-width="8.3"/><path d="M1254.2 581.4 1244.6 560.4 1236.9 538.8 1231.4 517.1 1228.1 495.8 1227.3 475.5 1228.8 456.6 1232.6 439.6 1238.5 424.9 1246.4 412.7 1255.8 403.2 1266.9 396.3" stroke="url(#s56)" stroke-width="7.6"/><path d="M1259.6 578.7 1250.2 558.2 1242.7 537.1 1237.3 515.9 1234.1 495.3 1233.3 475.6 1234.7 457.5 1238.3 441.4 1243.9 427.6 1251 416.5 1259.6 407.9 1269.4 401.7" stroke="url(#s57)" stroke-width="6.2"/><path d="M1263.4 576.7 1254.2 556.5 1246.8 535.8 1241.5 515 1238.5 494.8 1237.6 475.7 1239 458.1 1242.5 442.7 1247.7 429.6 1254.4 419.2 1262.3 411.3 1271.3 405.6" stroke="url(#s58)" stroke-width="4.3"/><path d="M1267.3 574.7 1258.2 554.9 1250.9 534.5 1245.7 514.2 1242.7 494.4 1241.9 475.8 1243.3 458.8 1246.6 443.9 1251.6 431.6 1257.8 421.9 1265 414.6 1273.1 409.5" stroke="url(#s59)" stroke-width="6.1"/></g></g><path d="M1365.2 664.7 1362.1 664.9 1359.2 665 1356.2 664.9 1353.4 664.8 1350.5 664.4 1347.6 664 1344.7 663.3 1341.9 662.6 1339 661.8 1336.1 660.8 1333.2 659.6 1330.3 658.4 1327.5 657 1324.6 655.5 1321.7 653.9 1318.8 652.1 1315.9 650.3 1313 648.3 1310.1 646.2 1307.3 644 1304.4 641.7 1301.6 639.3 1298.8 636.7 1296 634.1 1293.2 631.4 1290.5 628.5 1287.8 625.6 1285.1 622.6 1282.5 619.5 1279.9 616.3 1277.3 613.1 1274.8 609.7 1272.4 606.3 1270 602.8 1267.6 599.3 1265.3 595.6 1263.1 591.9 1260.9 588.2 1258.8 584.4 1256.7 580.5 1254.7 576.7 1252.8 572.7 1251 568.7 1249.2 564.7 1247.5 560.7 1245.9 556.6 1244.3 552.5 1242.9 548.4 1241.5 544.3 1240.4 540 1239.5 535.7 1238.7 531.3 1238 526.9 1237.4 522.5 1236.8 518.1 1236.4 513.6 1236 509.2 1235.7 504.9 1235.6 500.5 1235.5 496.1 1235.5 491.8 1235.6 487.6 1235.9 483.3 1236.2 479.2 1236.6 475.1 1237.1 471 1237.8 467.1 1238.5 463.2 1239.3 459.4 1240.2 455.7 1241.2 452.1 1242.3 448.7 1243.4 445.3 1244.7 442.1 1246 439 1247.4 436 1248.8 433.2 1250 430.8 1251.3 428.4 1252.6 426.2 1254 424.1 1255.4 422.1 1256.9 420.2 1258.4 418.4 1259.9 416.8 1261.6 415.2 1263.2 413.8 1264.9 412.4 1266.7 411.2 1268.4 410 1270.3 409" stroke="#0a0a0a" stroke-width="1.2"/><g clip-path="url(#c3)"><g filter="url(#bl)"><path d="M1348.8 733 1331.3 742 1312 745.7 1292.2 744.4 1272.7 738.9 1253.7 729.8 1235.4 717.5 1217.8 702.3 1201.3 684.6 1185.9 664.6 1172.1 642.8 1160.1 619.6" stroke="url(#s60)" stroke-width="6.1"/><path d="M1346.4 729.5 1329.9 737.9 1311.7 741.4 1293 740.2 1274.3 734.9 1255.9 726.1 1238 714.1 1220.8 699.2 1204.5 681.8 1189.5 662.2 1175.9 640.7 1164 617.8" stroke="url(#s61)" stroke-width="4.3"/><path d="M1343.8 726 1328.5 733.8 1311.5 737 1293.7 735.9 1275.8 730.8 1258.1 722.3 1240.6 710.6 1223.8 696.1 1207.9 679 1193 659.7 1179.6 638.5 1168 616" stroke="url(#s62)" stroke-width="6.2"/><path d="M1340.4 721.1 1326.6 728.1 1311.1 731 1294.8 730 1278 725.2 1261.1 717.1 1244.3 705.9 1228 691.8 1212.4 675.1 1198 656.3 1184.9 635.6 1173.4 613.4" stroke="url(#s63)" stroke-width="7.6"/><path d="M1336.3 715.3 1324.3 721.4 1310.7 724 1296 723 1280.5 718.6 1264.6 711 1248.6 700.3 1232.9 686.7 1217.8 670.6 1203.7 652.2 1191 632.1 1179.8 610.5" stroke="url(#s64)" stroke-width="8.3"/><path d="M1332 709.3 1321.9 714.4 1310.3 716.6 1297.3 715.7 1283.1 711.7 1268.3 704.6 1253.1 694.4 1238 681.4 1223.5 665.8 1209.8 648 1197.4 628.4 1186.6 607.4" stroke="url(#s65)" stroke-width="8.3"/><path d="M1327.9 703.5 1319.7 707.7 1309.9 709.5 1298.5 708.8 1285.7 705.1 1271.8 698.5 1257.4 688.8 1242.9 676.3 1228.9 661.2 1215.6 643.9 1203.5 624.9 1193 604.4" stroke="url(#s66)" stroke-width="7.6"/><path d="M1324.5 698.6 1317.8 702 1309.6 703.5 1299.6 702.9 1287.8 699.5 1274.8 693.3 1261 684 1247.1 672 1233.4 657.3 1220.5 640.5 1208.7 621.9 1198.4 601.9" stroke="url(#s67)" stroke-width="6.2"/><path d="M1321.9 695.1 1316.4 697.9 1309.3 699.2 1300.3 698.6 1289.4 695.5 1277 689.5 1263.7 680.6 1250.1 668.8 1236.8 654.5 1224.1 638 1212.5 619.7 1202.4 600.1" stroke="url(#s68)" stroke-width="4.3"/><path d="M1319.5 691.6 1315 693.8 1309.1 694.9 1301.1 694.3 1290.9 691.4 1279.1 685.8 1266.3 677.2 1253.1 665.7 1240 651.8 1227.6 635.6 1216.2 617.6 1206.3 598.3" stroke="url(#s69)" stroke-width="6.1"/><path d="M1165.5 630.6 1154.5 606.7 1145.8 582 1139.4 557 1135.6 532 1134.6 507.5 1136.5 483.9 1141.5 461.6 1149.8 441 1161.5 422.7 1176.7 407.5 1194.8 396.2" stroke="url(#s70)" stroke-width="6.1"/><path d="M1169.3 628.6 1158.5 605.1 1149.9 580.8 1143.6 556.1 1139.9 531.6 1138.8 507.6 1140.7 484.6 1145.6 462.9 1153.6 443 1164.9 425.4 1179.4 410.9 1196.7 400.1" stroke="url(#s71)" stroke-width="4.3"/><path d="M1173.2 626.6 1162.5 603.4 1154 579.5 1147.9 555.3 1144.2 531.2 1143.2 507.7 1145 485.2 1149.7 464.1 1157.5 445 1168.3 428.2 1182.1 414.3 1198.5 404" stroke="url(#s72)" stroke-width="6.2"/><path d="M1178.5 623.9 1168.1 601.2 1159.8 577.8 1153.7 554.1 1150.2 530.6 1149.2 507.8 1151 486.1 1155.5 465.9 1162.8 447.7 1173 431.9 1185.8 419 1201.1 409.5" stroke="url(#s73)" stroke-width="7.6"/><path d="M1184.8 620.7 1174.6 598.5 1166.5 575.7 1160.6 552.7 1157.2 529.9 1156.3 507.9 1157.9 487.1 1162.2 468 1169.1 450.9 1178.5 436.3 1190.2 424.5 1204.1 415.8" stroke="url(#s74)" stroke-width="8.3"/><path d="M1191.4 617.3 1181.5 595.7 1173.6 573.5 1167.9 551.2 1164.6 529.2 1163.7 508 1165.3 488.2 1169.3 470.2 1175.7 454.3 1184.3 440.9 1194.9 430.3 1207.3 422.5" stroke="url(#s75)" stroke-width="8.3"/><path d="M1197.7 614.1 1188 593.1 1180.4 571.5 1174.8 549.8 1171.6 528.5 1170.7 508.1 1172.2 489.2 1176 472.2 1182 457.5 1189.8 445.3 1199.3 435.8 1210.3 428.9" stroke="url(#s76)" stroke-width="7.6"/><path d="M1203 611.3 1193.6 590.8 1186.1 569.7 1180.7 548.6 1177.6 527.9 1176.7 508.2 1178.2 490.1 1181.8 474 1187.3 460.3 1194.5 449.1 1203 440.5 1212.9 434.3" stroke="url(#s77)" stroke-width="6.2"/><path d="M1206.9 609.3 1197.6 589.2 1190.3 568.4 1185 547.7 1181.9 527.5 1181.1 508.3 1182.5 490.8 1185.9 475.3 1191.2 462.3 1197.9 451.8 1205.7 443.9 1214.7 438.3" stroke="url(#s78)" stroke-width="4.3"/><path d="M1210.7 607.4 1201.6 587.5 1194.4 567.2 1189.2 546.8 1186.2 527 1185.4 508.4 1186.7 491.4 1190 476.6 1195 464.2 1201.2 454.5 1208.4 447.3 1216.6 442.2" stroke="url(#s79)" stroke-width="6.1"/></g></g><path d="M1308.6 697.4 1305.6 697.6 1302.6 697.6 1299.7 697.6 1296.8 697.4 1293.9 697.1 1291 696.6 1288.2 696 1285.3 695.3 1282.4 694.4 1279.6 693.4 1276.7 692.3 1273.8 691 1270.9 689.6 1268 688.1 1265.1 686.5 1262.2 684.8 1259.3 682.9 1256.4 680.9 1253.6 678.8 1250.7 676.6 1247.9 674.3 1245 671.9 1242.2 669.4 1239.4 666.7 1236.7 664 1233.9 661.2 1231.2 658.3 1228.6 655.3 1225.9 652.2 1223.3 649 1220.8 645.7 1218.3 642.4 1215.8 638.9 1213.4 635.5 1211.1 631.9 1208.8 628.3 1206.5 624.6 1204.3 620.8 1202.2 617 1200.2 613.2 1198.2 609.3 1196.3 605.4 1194.4 601.4 1192.6 597.4 1190.9 593.3 1189.3 589.3 1187.8 585.2 1186.3 581.1 1184.9 577 1183.8 572.7 1183 568.3 1182.2 563.9 1181.4 559.5 1180.8 555.1 1180.3 550.7 1179.8 546.3 1179.4 541.9 1179.2 537.5 1179 533.1 1178.9 528.8 1179 524.5 1179.1 520.2 1179.3 516 1179.6 511.8 1180.1 507.7 1180.6 503.7 1181.2 499.7 1181.9 495.8 1182.7 492.1 1183.6 488.4 1184.6 484.8 1185.7 481.3 1186.9 477.9 1188.1 474.7 1189.5 471.6 1190.9 468.6 1192.2 465.9 1193.4 463.4 1194.7 461 1196 458.8 1197.4 456.7 1198.8 454.7 1200.3 452.8 1201.8 451.1 1203.4 449.4 1205 447.9 1206.7 446.4 1208.4 445.1 1210.1 443.8 1211.9 442.7 1213.7 441.6" stroke="#0a0a0a" stroke-width="1.2"/><g clip-path="url(#c4)"><g filter="url(#bl)"><path d="M1292.3 765.7 1274.7 774.6 1255.4 778.3 1235.7 777 1216.2 771.6 1197.2 762.4 1178.8 750.1 1161.3 735 1144.7 717.2 1129.4 697.3 1115.6 675.5 1103.6 652.2" stroke="url(#s80)" stroke-width="6.1"/><path d="M1289.8 762.2 1273.4 770.5 1255.2 774 1236.4 772.8 1217.7 767.5 1199.3 758.7 1181.4 746.7 1164.2 731.9 1148 714.5 1132.9 694.8 1119.3 673.3 1107.5 650.4" stroke="url(#s81)" stroke-width="4.3"/><path d="M1287.3 758.6 1272 766.4 1254.9 769.7 1237.2 768.5 1219.3 763.5 1201.5 754.9 1184.1 743.3 1167.3 728.7 1151.3 711.6 1136.5 692.3 1123.1 671.2 1111.4 648.6" stroke="url(#s82)" stroke-width="6.2"/><path d="M1283.8 753.7 1270 760.7 1254.6 763.7 1238.2 762.6 1221.4 757.9 1204.5 749.7 1187.7 738.5 1171.4 724.4 1155.9 707.8 1141.4 688.9 1128.3 668.2 1116.9 646.1" stroke="url(#s83)" stroke-width="7.6"/><path d="M1279.7 748 1267.8 754 1254.2 756.6 1239.4 755.7 1223.9 751.3 1208 743.6 1192 732.9 1176.3 719.3 1161.3 703.2 1147.2 684.9 1134.4 664.7 1123.3 643.1" stroke="url(#s84)" stroke-width="8.3"/><path d="M1275.5 741.9 1265.4 747 1253.8 749.2 1240.7 748.4 1226.6 744.4 1211.7 737.2 1196.5 727 1181.5 714 1166.9 698.4 1153.3 680.6 1140.8 661 1130 640" stroke="url(#s85)" stroke-width="8.3"/><path d="M1271.4 736.2 1263.1 740.3 1253.4 742.2 1241.9 741.4 1229.1 737.8 1215.2 731.1 1200.8 721.4 1186.4 708.9 1172.3 693.9 1159 676.6 1147 657.5 1136.4 637" stroke="url(#s86)" stroke-width="7.6"/><path d="M1267.9 731.3 1261.2 734.7 1253 736.2 1243 735.5 1231.2 732.2 1218.2 725.9 1204.5 716.7 1190.5 704.6 1176.9 690 1164 673.1 1152.2 654.5 1141.9 634.5" stroke="url(#s87)" stroke-width="6.2"/><path d="M1265.4 727.7 1259.8 730.5 1252.8 731.8 1243.7 731.2 1232.8 728.1 1220.4 722.1 1207.1 713.2 1193.6 701.5 1180.2 687.2 1167.5 670.7 1156 652.3 1145.8 632.7" stroke="url(#s88)" stroke-width="4.3"/><path d="M1262.9 724.2 1258.4 726.5 1252.5 727.5 1244.5 727 1234.3 724.1 1222.5 718.4 1209.7 709.8 1196.5 698.4 1183.5 684.4 1171.1 668.2 1159.7 650.2 1149.7 630.9" stroke="url(#s89)" stroke-width="6.1"/><path d="M1108.9 663.2 1098 639.3 1089.2 614.7 1082.8 589.6 1079 564.7 1078 540.2 1079.9 516.6 1084.9 494.2 1093.2 473.7 1105 455.4 1120.1 440.2 1138.3 428.9" stroke="url(#s90)" stroke-width="6.1"/><path d="M1112.7 661.2 1102 637.7 1093.3 613.4 1087 588.8 1083.3 564.2 1082.3 540.2 1084.1 517.2 1089 495.5 1097 475.6 1108.3 458.1 1122.8 443.5 1140.1 432.7" stroke="url(#s91)" stroke-width="4.3"/><path d="M1116.6 659.3 1106 636.1 1097.5 612.1 1091.3 587.9 1087.6 563.8 1086.6 540.3 1088.5 517.8 1093.2 496.8 1100.9 477.6 1111.7 460.8 1125.5 446.9 1142 436.7" stroke="url(#s92)" stroke-width="6.2"/><path d="M1122 656.5 1111.5 633.8 1103.2 610.4 1097.2 586.7 1093.6 563.2 1092.6 540.4 1094.4 518.7 1098.9 498.5 1106.3 480.3 1116.4 464.5 1129.3 451.6 1144.5 442.1" stroke="url(#s93)" stroke-width="7.6"/><path d="M1128.2 653.3 1118.1 631.2 1110 608.3 1104.1 585.3 1100.6 562.5 1099.7 540.5 1101.4 519.8 1105.7 500.6 1112.5 483.6 1121.9 468.9 1133.7 457.1 1147.5 448.5" stroke="url(#s94)" stroke-width="8.3"/><path d="M1134.8 649.9 1124.9 628.4 1117.1 606.2 1111.4 583.8 1108 561.8 1107.1 540.7 1108.7 520.8 1112.7 502.8 1119.1 486.9 1127.7 473.6 1138.3 462.9 1150.7 455.2" stroke="url(#s95)" stroke-width="8.3"/><path d="M1141.1 646.7 1131.5 625.7 1123.8 604.1 1118.3 582.4 1115 561.1 1114.2 540.8 1115.7 521.9 1119.5 504.9 1125.4 490.2 1133.2 478 1142.7 468.4 1153.7 461.6" stroke="url(#s96)" stroke-width="7.6"/><path d="M1146.4 644 1137 623.4 1129.5 602.3 1124.1 581.2 1121 560.5 1120.2 540.9 1121.6 522.8 1125.2 506.7 1130.8 492.9 1137.9 481.7 1146.5 473.1 1156.3 467" stroke="url(#s97)" stroke-width="6.2"/><path d="M1150.3 642 1141.1 621.8 1133.7 601.1 1128.4 580.3 1125.3 560.1 1124.5 541 1125.9 523.4 1129.4 507.9 1134.6 494.9 1141.3 484.5 1149.2 476.5 1158.2 470.9" stroke="url(#s98)" stroke-width="4.3"/><path d="M1154.1 640 1145.1 620.2 1137.8 599.8 1132.6 579.5 1129.6 559.7 1128.8 541 1130.2 524 1133.5 509.2 1138.4 496.9 1144.7 487.1 1151.9 479.9 1160 474.8" stroke="url(#s99)" stroke-width="6.1"/></g></g><path d="M1252.1 730 1249 730.2 1246 730.3 1243.1 730.2 1240.2 730 1237.4 729.7 1234.5 729.2 1231.6 728.6 1228.8 727.9 1225.9 727 1223 726 1220.1 724.9 1217.2 723.7 1214.3 722.3 1211.4 720.8 1208.5 719.2 1205.6 717.4 1202.8 715.5 1199.9 713.6 1197 711.5 1194.1 709.3 1191.3 707 1188.5 704.5 1185.7 702 1182.9 699.4 1180.1 696.7 1177.4 693.8 1174.7 690.9 1172 687.9 1169.4 684.8 1166.8 681.6 1164.2 678.3 1161.7 675 1159.3 671.6 1156.9 668.1 1154.5 664.5 1152.2 660.9 1150 657.2 1147.8 653.5 1145.7 649.7 1143.6 645.8 1141.6 641.9 1139.7 638 1137.8 634 1136.1 630 1134.4 626 1132.8 621.9 1131.2 617.8 1129.8 613.7 1128.4 609.6 1127.3 605.3 1126.4 601 1125.6 596.6 1124.9 592.2 1124.2 587.8 1123.7 583.3 1123.2 578.9 1122.9 574.5 1122.6 570.1 1122.4 565.8 1122.4 561.4 1122.4 557.1 1122.5 552.8 1122.7 548.6 1123.1 544.5 1123.5 540.4 1124 536.3 1124.6 532.4 1125.4 528.5 1126.2 524.7 1127.1 521 1128.1 517.4 1129.2 513.9 1130.3 510.6 1131.6 507.3 1132.9 504.2 1134.3 501.3 1135.7 498.5 1136.9 496 1138.1 493.7 1139.5 491.5 1140.8 489.3 1142.3 487.3 1143.7 485.5 1145.3 483.7 1146.8 482 1148.4 480.5 1150.1 479.1 1151.8 477.7 1153.5 476.5 1155.3 475.3 1157.2 474.3" stroke="#0a0a0a" stroke-width="1.2"/><g clip-path="url(#c5)"><g filter="url(#bl)"><path d="M1235.7 798.3 1218.2 807.2 1198.8 810.9 1179.1 809.7 1159.6 804.2 1140.6 795.1 1122.3 782.8 1104.7 767.6 1088.1 749.9 1072.8 729.9 1059 708.1 1047 684.9" stroke="url(#s100)" stroke-width="6.1"/><path d="M1233.2 794.8 1216.8 803.2 1198.6 806.6 1179.8 805.4 1161.1 800.2 1142.8 791.4 1124.9 779.4 1107.7 764.5 1091.4 747.1 1076.3 727.5 1062.7 706 1050.9 683.1" stroke="url(#s101)" stroke-width="4.3"/><path d="M1230.7 791.3 1215.4 799.1 1198.4 802.3 1180.6 801.2 1162.7 796.1 1144.9 787.6 1127.5 775.9 1110.7 761.4 1094.7 744.3 1079.9 725 1066.5 703.8 1054.9 681.2" stroke="url(#s102)" stroke-width="6.2"/><path d="M1227.3 786.4 1213.5 793.4 1198 796.3 1181.6 795.2 1164.8 790.5 1147.9 782.4 1131.2 771.1 1114.9 757.1 1099.3 740.4 1084.8 721.5 1071.7 700.8 1060.3 678.7" stroke="url(#s103)" stroke-width="7.6"/><path d="M1223.2 780.6 1211.2 786.7 1197.6 789.3 1182.9 788.3 1167.4 783.9 1151.5 776.3 1135.5 765.5 1119.8 752 1104.7 735.8 1090.6 717.5 1077.9 697.3 1066.7 675.8" stroke="url(#s104)" stroke-width="8.3"/><path d="M1218.9 774.6 1208.8 779.7 1197.2 781.9 1184.2 781 1170 777 1155.2 769.8 1140 759.7 1124.9 746.6 1110.4 731.1 1096.7 713.3 1084.3 693.6 1073.4 672.6" stroke="url(#s105)" stroke-width="8.3"/><path d="M1214.8 768.8 1206.6 773 1196.8 774.8 1185.4 774.1 1172.5 770.4 1158.7 763.7 1144.3 754.1 1129.8 741.6 1115.7 726.5 1102.5 709.2 1090.4 690.1 1079.8 669.7" stroke="url(#s106)" stroke-width="7.6"/><path d="M1211.3 763.9 1204.6 767.3 1196.5 768.8 1186.4 768.1 1174.7 764.8 1161.7 758.5 1147.9 749.3 1134 737.2 1120.3 722.6 1107.4 705.8 1095.6 687.2 1085.3 667.2" stroke="url(#s107)" stroke-width="6.2"/><path d="M1208.8 760.3 1203.2 763.2 1196.2 764.5 1187.2 763.9 1176.2 760.7 1163.8 754.8 1150.6 745.8 1137 734.1 1123.7 719.8 1111 703.3 1099.4 685 1089.2 665.3" stroke="url(#s108)" stroke-width="4.3"/><path d="M1206.3 756.8 1201.9 759.1 1196 760.2 1187.9 759.6 1177.8 756.7 1166 751 1153.2 742.4 1140 731 1126.9 717 1114.5 700.8 1103.1 682.8 1093.1 663.5" stroke="url(#s109)" stroke-width="6.1"/><path d="M1052.4 695.8 1041.4 672 1032.6 647.3 1026.3 622.3 1022.5 597.3 1021.4 572.8 1023.3 549.2 1028.4 526.9 1036.7 506.3 1048.4 488 1063.6 472.8 1081.7 461.5" stroke="url(#s110)" stroke-width="6.1"/><path d="M1056.2 693.9 1045.4 670.4 1036.7 646.1 1030.5 621.4 1026.7 596.9 1025.7 572.9 1027.6 549.8 1032.5 528.1 1040.5 508.2 1051.8 490.7 1066.3 476.2 1083.5 465.4" stroke="url(#s111)" stroke-width="4.3"/><path d="M1060.1 691.9 1049.4 668.7 1040.9 644.8 1034.7 620.5 1031.1 596.5 1030.1 573 1031.9 550.5 1036.6 529.4 1044.4 510.2 1055.2 493.4 1069 479.6 1085.4 469.3" stroke="url(#s112)" stroke-width="6.2"/><path d="M1065.4 689.2 1055 666.5 1046.7 643 1040.6 619.3 1037 595.9 1036.1 573.1 1037.8 551.4 1042.4 531.2 1049.7 513 1059.9 497.2 1072.7 484.3 1088 474.7" stroke="url(#s113)" stroke-width="7.6"/><path d="M1071.7 685.9 1061.5 663.8 1053.4 641 1047.5 617.9 1044.1 595.2 1043.1 573.2 1044.8 552.4 1049.1 533.3 1056 516.2 1065.4 501.6 1077.1 489.8 1091 481.1" stroke="url(#s114)" stroke-width="8.3"/><path d="M1078.3 682.6 1068.4 661 1060.5 638.8 1054.8 616.5 1051.4 594.5 1050.6 573.3 1052.1 553.5 1056.2 535.5 1062.6 519.6 1071.2 506.2 1081.8 495.6 1094.2 487.8" stroke="url(#s115)" stroke-width="8.3"/><path d="M1084.5 679.3 1074.9 658.3 1067.2 636.7 1061.7 615 1058.5 593.8 1057.6 573.4 1059.1 554.5 1062.9 537.5 1068.9 522.8 1076.7 510.6 1086.2 501.1 1097.2 494.2" stroke="url(#s116)" stroke-width="7.6"/><path d="M1089.9 676.6 1080.5 656.1 1073 635 1067.6 613.8 1064.4 593.2 1063.6 573.5 1065.1 555.4 1068.7 539.3 1074.2 525.5 1081.4 514.4 1089.9 505.8 1099.7 499.6" stroke="url(#s117)" stroke-width="6.2"/><path d="M1093.8 674.6 1084.5 654.4 1077.1 633.7 1071.9 613 1068.8 592.7 1068 573.6 1069.4 556.1 1072.8 540.6 1078.1 527.5 1084.8 517.1 1092.6 509.2 1101.6 503.6" stroke="url(#s118)" stroke-width="4.3"/><path d="M1097.6 672.6 1088.5 652.8 1081.3 632.5 1076.1 612.1 1073 592.3 1072.3 573.7 1073.6 556.7 1076.9 541.8 1081.9 529.5 1088.1 519.8 1095.3 512.5 1103.4 507.4" stroke="url(#s119)" stroke-width="6.1"/></g></g><path d="M1195.5 762.6 1192.5 762.8 1189.5 762.9 1186.6 762.9 1183.7 762.7 1180.8 762.3 1177.9 761.9 1175.1 761.3 1172.2 760.5 1169.3 759.7 1166.4 758.7 1163.6 757.5 1160.7 756.3 1157.8 754.9 1154.9 753.4 1152 751.8 1149.1 750.1 1146.2 748.2 1143.3 746.2 1140.4 744.1 1137.6 741.9 1134.7 739.6 1131.9 737.2 1129.1 734.7 1126.3 732 1123.5 729.3 1120.8 726.5 1118.1 723.5 1115.4 720.5 1112.8 717.4 1110.2 714.3 1107.7 711 1105.2 707.6 1102.7 704.2 1100.3 700.7 1097.9 697.2 1095.6 693.5 1093.4 689.9 1091.2 686.1 1089.1 682.3 1087 678.5 1085.1 674.6 1083.1 670.6 1081.3 666.7 1079.5 662.7 1077.8 658.6 1076.2 654.5 1074.7 650.5 1073.2 646.4 1071.8 642.2 1070.7 638 1069.8 633.6 1069 629.2 1068.3 624.8 1067.7 620.4 1067.1 616 1066.7 611.6 1066.3 607.2 1066.1 602.8 1065.9 598.4 1065.8 594.1 1065.8 589.8 1066 585.5 1066.2 581.3 1066.5 577.1 1066.9 573 1067.5 569 1068.1 565 1068.8 561.1 1069.6 557.3 1070.5 553.6 1071.5 550.1 1072.6 546.6 1073.8 543.2 1075 540 1076.3 536.9 1077.8 533.9 1079.1 531.1 1080.3 528.7 1081.6 526.3 1082.9 524.1 1084.3 522 1085.7 520 1087.2 518.1 1088.7 516.3 1090.3 514.7 1091.9 513.1 1093.5 511.7 1095.2 510.3 1097 509.1 1098.8 507.9 1100.6 506.9" stroke="#0a0a0a" stroke-width="1.2"/><g clip-path="url(#c6)"><g filter="url(#bl)"><path d="M1179.2 831 1161.6 839.9 1142.3 843.6 1122.5 842.3 1103 836.8 1084.1 827.7 1065.7 815.4 1048.1 800.2 1031.6 782.5 1016.3 762.6 1002.5 740.8 990.5 717.5" stroke="url(#s120)" stroke-width="6.1"/><path d="M1176.7 827.5 1160.2 835.8 1142 839.3 1123.3 838.1 1104.6 832.8 1086.2 824 1068.3 812 1051.1 797.1 1034.8 779.7 1019.8 760.1 1006.2 738.6 994.4 715.7" stroke="url(#s121)" stroke-width="4.3"/><path d="M1174.2 823.9 1158.8 831.7 1141.8 834.9 1124 833.8 1106.1 828.8 1088.4 820.2 1071 808.5 1054.1 794 1038.2 776.9 1023.4 757.6 1010 736.5 998.3 713.9" stroke="url(#s122)" stroke-width="6.2"/><path d="M1170.7 819 1156.9 826 1141.5 828.9 1125.1 827.9 1108.3 823.1 1091.4 815 1074.6 803.8 1058.3 789.7 1042.8 773 1028.3 754.2 1015.2 733.5 1003.8 711.4" stroke="url(#s123)" stroke-width="7.6"/><path d="M1166.6 813.2 1154.6 819.3 1141.1 821.9 1126.3 820.9 1110.8 816.6 1094.9 808.9 1078.9 798.2 1063.2 784.6 1048.1 768.5 1034.1 750.1 1021.3 730 1010.2 708.4" stroke="url(#s124)" stroke-width="8.3"/><path d="M1162.3 807.2 1152.3 812.3 1140.6 814.5 1127.6 813.6 1113.5 809.6 1098.6 802.5 1083.4 792.3 1068.4 779.3 1053.8 763.7 1040.1 745.9 1027.7 726.3 1016.9 705.3" stroke="url(#s125)" stroke-width="8.3"/><path d="M1158.3 801.4 1150 805.6 1140.2 807.5 1128.8 806.7 1116 803 1102.1 796.4 1087.7 786.7 1073.3 774.2 1059.2 759.1 1045.9 741.9 1033.8 722.8 1023.3 702.3" stroke="url(#s126)" stroke-width="7.6"/><path d="M1154.8 796.5 1148.1 799.9 1139.9 801.5 1129.9 800.8 1118.1 797.4 1105.1 791.2 1091.4 781.9 1077.4 769.9 1063.8 755.3 1050.8 738.4 1039.1 719.8 1028.7 699.8" stroke="url(#s127)" stroke-width="6.2"/><path d="M1152.3 793 1146.7 795.8 1139.7 797.1 1130.6 796.5 1119.7 793.4 1107.3 787.4 1094 778.5 1080.4 766.7 1067.1 752.4 1054.4 735.9 1042.8 717.6 1032.7 698" stroke="url(#s128)" stroke-width="4.3"/><path d="M1149.8 789.5 1145.3 791.7 1139.4 792.8 1131.4 792.3 1121.2 789.4 1109.4 783.7 1096.6 775.1 1083.4 763.6 1070.4 749.7 1057.9 733.5 1046.6 715.5 1036.6 696.2" stroke="url(#s129)" stroke-width="6.1"/><path d="M995.8 728.5 984.9 704.6 976.1 680 969.7 654.9 965.9 629.9 964.9 605.5 966.8 581.8 971.8 559.5 980.1 538.9 991.9 520.7 1007 505.5 1025.1 494.1" stroke="url(#s130)" stroke-width="6.1"/><path d="M999.6 726.5 988.8 703 980.2 678.7 973.9 654.1 970.2 629.5 969.2 605.5 971 582.5 975.9 560.8 983.9 540.9 995.2 523.3 1009.7 508.8 1027 498" stroke="url(#s131)" stroke-width="4.3"/><path d="M1003.5 724.5 992.9 701.4 984.4 677.4 978.2 653.2 974.5 629.1 973.5 605.6 975.3 583.1 980.1 562.1 987.8 542.9 998.6 526.1 1012.4 512.2 1028.8 502" stroke="url(#s132)" stroke-width="6.2"/><path d="M1008.8 721.8 998.4 699.1 990.1 675.7 984.1 652 980.5 628.5 979.5 605.7 981.3 584 985.8 563.8 993.1 545.6 1003.3 529.8 1016.2 516.9 1031.4 507.4" stroke="url(#s133)" stroke-width="7.6"/><path d="M1015.1 718.6 1005 696.4 996.8 673.6 991 650.6 987.5 627.8 986.6 605.8 988.2 585 992.5 565.9 999.4 548.8 1008.8 534.2 1020.6 522.4 1034.4 513.8" stroke="url(#s134)" stroke-width="8.3"/><path d="M1021.7 715.2 1011.8 693.6 1003.9 671.4 998.2 649.1 994.9 627.1 994 605.9 995.6 586.1 999.6 568.1 1006 552.2 1014.6 538.9 1025.2 528.2 1037.6 520.5" stroke="url(#s135)" stroke-width="8.3"/><path d="M1028 712 1018.4 691 1010.7 669.4 1005.1 647.7 1001.9 626.4 1001 606.1 1002.6 587.2 1006.4 570.2 1012.3 555.4 1020.1 543.3 1029.6 533.7 1040.6 526.8" stroke="url(#s136)" stroke-width="7.6"/><path d="M1033.3 709.2 1023.9 688.7 1016.4 667.6 1011 646.5 1007.9 625.8 1007 606.2 1008.5 588 1012.1 571.9 1017.6 558.2 1024.8 547 1033.3 538.4 1043.2 532.3" stroke="url(#s137)" stroke-width="6.2"/><path d="M1037.2 707.2 1028 687.1 1020.6 666.4 1015.3 645.6 1012.2 625.4 1011.4 606.2 1012.8 588.7 1016.3 573.2 1021.5 560.2 1028.2 549.7 1036.1 541.8 1045 536.2" stroke="url(#s138)" stroke-width="4.3"/><path d="M1041 705.3 1031.9 685.5 1024.7 665.1 1019.5 644.7 1016.5 625 1015.7 606.3 1017.1 589.3 1020.4 574.5 1025.3 562.1 1031.6 552.4 1038.7 545.2 1046.9 540.1" stroke="url(#s139)" stroke-width="6.1"/></g></g><path d="M1138.9 795.3 1135.9 795.5 1132.9 795.6 1130 795.5 1127.1 795.3 1124.2 795 1121.4 794.5 1118.5 793.9 1115.6 793.2 1112.8 792.3 1109.9 791.3 1107 790.2 1104.1 788.9 1101.2 787.6 1098.3 786.1 1095.4 784.4 1092.5 782.7 1089.6 780.8 1086.8 778.9 1083.9 776.8 1081 774.6 1078.2 772.2 1075.3 769.8 1072.5 767.3 1069.8 764.7 1067 761.9 1064.3 759.1 1061.6 756.2 1058.9 753.2 1056.3 750.1 1053.7 746.9 1051.1 743.6 1048.6 740.3 1046.1 736.9 1043.7 733.4 1041.4 729.8 1039.1 726.2 1036.8 722.5 1034.7 718.8 1032.5 715 1030.5 711.1 1028.5 707.2 1026.6 703.3 1024.7 699.3 1023 695.3 1021.3 691.3 1019.6 687.2 1018.1 683.1 1016.6 679 1015.3 674.9 1014.2 670.6 1013.3 666.2 1012.5 661.8 1011.8 657.4 1011.1 653 1010.6 648.6 1010.1 644.2 1009.8 639.8 1009.5 635.4 1009.3 631 1009.3 626.7 1009.3 622.4 1009.4 618.1 1009.6 613.9 1010 609.7 1010.4 605.6 1010.9 601.6 1011.5 597.6 1012.2 593.8 1013 590 1014 586.3 1014.9 582.7 1016 579.2 1017.2 575.9 1018.5 572.6 1019.8 569.5 1021.2 566.5 1022.5 563.8 1023.8 561.3 1025 559 1026.3 556.7 1027.7 554.6 1029.1 552.6 1030.6 550.7 1032.1 549 1033.7 547.3 1035.3 545.8 1037 544.3 1038.7 543 1040.4 541.7 1042.2 540.6 1044 539.5" stroke="#0a0a0a" stroke-width="1.2"/><g clip-path="url(#c7)"><g filter="url(#bl)"><path d="M1122.6 863.6 1105 872.5 1085.7 876.2 1066 875 1046.5 869.5 1027.5 860.4 1009.1 848.1 991.6 832.9 975 815.1 959.7 795.2 945.9 773.4 933.9 750.1" stroke="url(#s140)" stroke-width="6.1"/><path d="M1120.1 860.1 1103.7 868.5 1085.5 871.9 1066.7 870.7 1048 865.5 1029.6 856.6 1011.8 844.6 994.6 829.8 978.3 812.4 963.2 792.7 949.6 771.3 937.8 748.3" stroke="url(#s141)" stroke-width="4.3"/><path d="M1117.6 856.5 1102.3 864.3 1085.2 867.6 1067.5 866.4 1049.6 861.4 1031.8 852.9 1014.4 841.2 997.6 826.6 981.6 809.6 966.8 790.2 953.4 769.1 941.7 746.5" stroke="url(#s142)" stroke-width="6.2"/><path d="M1114.1 851.6 1100.3 858.6 1084.9 861.6 1068.5 860.5 1051.7 855.8 1034.8 847.7 1018.1 836.4 1001.8 822.3 986.2 805.7 971.7 786.8 958.6 766.1 947.2 744" stroke="url(#s143)" stroke-width="7.6"/><path d="M1110.1 845.9 1098.1 852 1084.5 854.5 1069.8 853.6 1054.2 849.2 1038.3 841.6 1022.3 830.8 1006.6 817.3 991.6 801.1 977.5 782.8 964.7 762.6 953.6 741" stroke="url(#s144)" stroke-width="8.3"/><path d="M1105.8 839.8 1095.7 844.9 1084.1 847.1 1071 846.3 1056.9 842.3 1042 835.1 1026.9 824.9 1011.8 811.9 997.2 796.3 983.6 778.5 971.2 758.9 960.3 737.9" stroke="url(#s145)" stroke-width="8.3"/><path d="M1101.7 834.1 1093.4 838.3 1083.7 840.1 1072.3 839.3 1059.4 835.7 1045.6 829 1031.1 819.3 1016.7 806.8 1002.6 791.8 989.4 774.5 977.3 755.4 966.7 735" stroke="url(#s146)" stroke-width="7.6"/><path d="M1098.2 829.2 1091.5 832.6 1083.3 834.1 1073.3 833.4 1061.6 830.1 1048.5 823.8 1034.8 814.6 1020.9 802.5 1007.2 787.9 994.3 771.1 982.5 752.4 972.2 732.4" stroke="url(#s147)" stroke-width="6.2"/><path d="M1095.7 825.6 1090.1 828.4 1083.1 829.7 1074.1 829.1 1063.1 826 1050.7 820 1037.4 811.1 1023.9 799.4 1010.5 785.1 997.9 768.6 986.3 750.3 976.1 730.6" stroke="url(#s148)" stroke-width="4.3"/><path d="M1093.2 822.1 1088.7 824.4 1082.9 825.5 1074.8 824.9 1064.7 822 1052.9 816.3 1040.1 807.7 1026.9 796.3 1013.8 782.3 1001.4 766.1 990 748.1 980 728.8" stroke="url(#s149)" stroke-width="6.1"/><path d="M939.2 761.1 928.3 737.3 919.5 712.6 913.1 687.6 909.3 662.6 908.3 638.1 910.2 614.5 915.2 592.2 923.5 571.6 935.3 553.3 950.5 538.1 968.6 526.8" stroke="url(#s150)" stroke-width="6.1"/><path d="M943.1 759.2 932.3 735.6 923.6 711.3 917.3 686.7 913.6 662.2 912.6 638.2 914.5 615.1 919.3 593.4 927.4 573.5 938.7 556 953.1 541.5 970.4 530.7" stroke="url(#s151)" stroke-width="4.3"/><path d="M946.9 757.2 936.3 734 927.8 710.1 921.6 685.8 918 661.7 917 638.2 918.8 615.8 923.5 594.7 931.2 575.5 942.1 558.7 955.9 544.9 972.3 534.6" stroke="url(#s152)" stroke-width="6.2"/><path d="M952.3 754.4 941.9 731.7 933.5 708.3 927.5 684.6 923.9 661.1 923 638.3 924.7 616.6 929.2 596.5 936.6 578.3 946.7 562.5 959.6 549.6 974.8 540" stroke="url(#s153)" stroke-width="7.6"/><path d="M958.6 751.2 948.4 729.1 940.3 706.2 934.4 683.2 930.9 660.5 930 638.5 931.7 617.7 936 598.5 942.9 581.5 952.3 566.9 964 555.1 977.9 546.4" stroke="url(#s154)" stroke-width="8.3"/><path d="M965.2 747.8 955.3 726.3 947.4 704.1 941.7 681.7 938.3 659.7 937.4 638.6 939 618.8 943.1 600.7 949.5 584.9 958 571.5 968.6 560.9 981 553.1" stroke="url(#s155)" stroke-width="8.3"/><path d="M971.4 744.6 961.8 723.6 954.1 702 948.6 680.3 945.3 659 944.5 638.7 946 619.8 949.8 602.8 955.7 588.1 963.6 575.9 973 566.4 984.1 559.5" stroke="url(#s156)" stroke-width="7.6"/><path d="M976.8 741.9 967.4 721.4 959.9 700.3 954.5 679.1 951.3 658.5 950.5 638.8 951.9 620.7 955.5 604.6 961.1 590.8 968.2 579.7 976.8 571.1 986.6 564.9" stroke="url(#s157)" stroke-width="6.2"/><path d="M980.6 739.9 971.4 719.7 964 699 958.7 678.2 955.7 658 954.8 638.9 956.2 621.3 959.7 605.9 964.9 592.8 971.6 582.4 979.5 574.5 988.5 568.8" stroke="url(#s158)" stroke-width="4.3"/><path d="M984.5 737.9 975.4 718.1 968.1 697.7 962.9 677.4 959.9 657.6 959.1 638.9 960.5 622 963.8 607.1 968.8 594.8 975 585.1 982.2 577.8 990.3 572.7" stroke="url(#s159)" stroke-width="6.1"/></g></g><path d="M1082.4 827.9 1079.3 828.1 1076.4 828.2 1073.4 828.1 1070.6 827.9 1067.7 827.6 1064.8 827.1 1061.9 826.5 1059.1 825.8 1056.2 824.9 1053.3 824 1050.4 822.8 1047.5 821.6 1044.7 820.2 1041.8 818.7 1038.9 817.1 1036 815.3 1033.1 813.5 1030.2 811.5 1027.3 809.4 1024.5 807.2 1021.6 804.9 1018.8 802.5 1016 799.9 1013.2 797.3 1010.4 794.6 1007.7 791.7 1005 788.8 1002.3 785.8 999.7 782.7 997.1 779.5 994.5 776.3 992 772.9 989.6 769.5 987.2 766 984.8 762.4 982.5 758.8 980.3 755.1 978.1 751.4 976 747.6 973.9 743.7 971.9 739.9 970 735.9 968.2 731.9 966.4 727.9 964.7 723.9 963.1 719.8 961.5 715.7 960.1 711.6 958.7 707.5 957.6 703.2 956.7 698.9 955.9 694.5 955.2 690.1 954.6 685.7 954 681.3 953.6 676.8 953.2 672.4 952.9 668 952.8 663.7 952.7 659.3 952.7 655 952.8 650.8 953.1 646.5 953.4 642.4 953.8 638.3 954.3 634.2 955 630.3 955.7 626.4 956.5 622.6 957.4 618.9 958.4 615.3 959.5 611.9 960.6 608.5 961.9 605.3 963.2 602.2 964.6 599.2 966 596.4 967.2 594 968.5 591.6 969.8 589.4 971.2 587.3 972.6 585.3 974.1 583.4 975.6 581.6 977.1 580 978.8 578.4 980.4 577 982.1 575.6 983.9 574.4 985.6 573.2 987.5 572.2" stroke="#0a0a0a" stroke-width="1.2"/><g clip-path="url(#c8)"><g filter="url(#bl)"><path d="M1066 896.2 1048.5 905.2 1029.2 908.8 1009.4 907.6 989.9 902.1 970.9 893 952.6 880.7 935 865.5 918.5 847.8 903.1 827.8 889.3 806 877.3 782.8" stroke="url(#s160)" stroke-width="6.1"/><path d="M1063.6 892.7 1047.1 901.1 1028.9 904.6 1010.2 903.4 991.5 898.1 973.1 889.3 955.2 877.3 938 862.4 921.7 845 906.7 825.4 893.1 803.9 881.2 781" stroke="url(#s161)" stroke-width="4.3"/><path d="M1061 889.2 1045.7 897 1028.7 900.2 1010.9 899.1 993 894 975.3 885.5 957.8 873.8 941 859.3 925.1 842.2 910.2 822.9 896.8 801.7 885.2 779.2" stroke="url(#s162)" stroke-width="6.2"/><path d="M1057.6 884.3 1043.8 891.3 1028.3 894.2 1012 893.2 995.2 888.4 978.3 880.3 961.5 869.1 945.2 855 929.6 838.3 915.2 819.5 902.1 798.8 890.6 776.6" stroke="url(#s163)" stroke-width="7.6"/><path d="M1053.5 878.5 1041.5 884.6 1027.9 887.2 1013.2 886.2 997.7 881.8 981.8 874.2 965.8 863.5 950.1 849.9 935 833.8 920.9 815.4 908.2 795.2 897 773.7" stroke="url(#s164)" stroke-width="8.3"/><path d="M1049.2 872.5 1039.1 877.6 1027.5 879.8 1014.5 878.9 1000.3 874.9 985.5 867.8 970.3 857.6 955.2 844.6 940.7 829 927 811.2 914.6 791.6 903.8 770.6" stroke="url(#s165)" stroke-width="8.3"/><path d="M1045.1 866.7 1036.9 870.9 1027.1 872.7 1015.7 872 1002.9 868.3 989 861.6 974.6 852 960.1 839.5 946.1 824.4 932.8 807.1 920.7 788.1 910.2 767.6" stroke="url(#s166)" stroke-width="7.6"/><path d="M1041.7 861.8 1035 865.2 1026.8 866.7 1016.8 866.1 1005 862.7 992 856.4 978.2 847.2 964.3 835.2 950.6 820.5 937.7 803.7 925.9 785.1 915.6 765.1" stroke="url(#s167)" stroke-width="6.2"/><path d="M1039.1 858.3 1033.6 861.1 1026.5 862.4 1017.5 861.8 1006.6 858.7 994.2 852.7 980.9 843.8 967.3 832 954 817.7 941.3 801.2 929.7 782.9 919.6 763.2" stroke="url(#s168)" stroke-width="4.3"/><path d="M1036.7 854.8 1032.2 857 1026.3 858.1 1018.3 857.5 1008.1 854.6 996.3 849 983.5 840.3 970.3 828.9 957.2 814.9 944.8 798.8 933.4 780.8 923.5 761.4" stroke="url(#s169)" stroke-width="6.1"/><path d="M882.7 793.8 871.7 769.9 863 745.2 856.6 720.2 852.8 695.2 851.8 670.7 853.7 647.1 858.7 624.8 867 604.2 878.7 585.9 893.9 570.7 912 559.4" stroke="url(#s170)" stroke-width="6.1"/><path d="M886.5 791.8 875.7 768.3 867.1 744 860.8 719.3 857.1 694.8 856 670.8 857.9 647.7 862.8 626.1 870.8 606.2 882.1 588.6 896.6 574.1 913.9 563.3" stroke="url(#s171)" stroke-width="4.3"/><path d="M890.4 789.8 879.7 766.6 871.2 742.7 865.1 718.5 861.4 694.4 860.4 670.9 862.2 648.4 866.9 627.3 874.7 608.2 885.5 591.3 899.3 577.5 915.7 567.2" stroke="url(#s172)" stroke-width="6.2"/><path d="M895.7 787.1 885.3 764.4 877 740.9 870.9 717.3 867.4 693.8 866.4 671 868.2 649.3 872.7 629.1 880 610.9 890.2 595.1 903 582.2 918.3 572.7" stroke="url(#s173)" stroke-width="7.6"/><path d="M902 783.9 891.8 761.7 883.7 738.9 877.8 715.9 874.4 693.1 873.5 671.1 875.1 650.3 879.4 631.2 886.3 614.1 895.7 599.5 907.4 587.7 921.3 579" stroke="url(#s174)" stroke-width="8.3"/><path d="M908.6 780.5 898.7 758.9 890.8 736.7 885.1 714.4 881.8 692.4 880.9 671.2 882.5 651.4 886.5 633.4 892.9 617.5 901.5 604.1 912.1 593.5 924.5 585.7" stroke="url(#s175)" stroke-width="8.3"/><path d="M914.9 777.2 905.2 756.3 897.6 734.7 892 713 888.8 691.7 887.9 671.3 889.4 652.4 893.2 635.4 899.2 620.7 907 608.5 916.5 599 927.5 592.1" stroke="url(#s176)" stroke-width="7.6"/><path d="M920.2 774.5 910.8 754 903.3 732.9 897.9 711.8 894.8 691.1 893.9 671.4 895.4 653.3 899 637.2 904.5 623.5 911.7 612.3 920.2 603.7 930.1 597.5" stroke="url(#s177)" stroke-width="6.2"/><path d="M924.1 772.5 914.8 752.4 907.5 731.6 902.2 710.9 899.1 690.7 898.3 671.5 899.7 654 903.1 638.5 908.4 625.5 915.1 615 922.9 607.1 931.9 601.5" stroke="url(#s178)" stroke-width="4.3"/><path d="M927.9 770.6 918.8 750.7 911.6 730.4 906.4 710 903.4 690.2 902.6 671.6 903.9 654.6 907.2 639.8 912.2 627.4 918.4 617.7 925.6 610.5 933.8 605.4" stroke="url(#s179)" stroke-width="6.1"/></g></g><path d="M1025.8 860.6 1022.8 860.8 1019.8 860.8 1016.9 860.8 1014 860.6 1011.1 860.3 1008.2 859.8 1005.4 859.2 1002.5 858.5 999.6 857.6 996.8 856.6 993.9 855.5 991 854.2 988.1 852.8 985.2 851.3 982.3 849.7 979.4 848 976.5 846.1 973.6 844.1 970.8 842 967.9 839.8 965.1 837.5 962.2 835.1 959.4 832.6 956.6 829.9 953.9 827.2 951.1 824.4 948.4 821.5 945.8 818.5 943.1 815.4 940.5 812.2 938 808.9 935.5 805.6 933 802.1 930.6 798.6 928.3 795.1 926 791.5 923.7 787.8 921.5 784 919.4 780.2 917.4 776.4 915.4 772.5 913.5 768.6 911.6 764.6 909.8 760.6 908.1 756.5 906.5 752.5 905 748.4 903.5 744.3 902.1 740.1 901 735.9 900.2 731.5 899.4 727.1 898.6 722.7 898 718.3 897.5 713.9 897 709.5 896.6 705.1 896.4 700.7 896.2 696.3 896.1 692 896.2 687.7 896.3 683.4 896.5 679.2 896.8 675 897.3 670.9 897.8 666.9 898.4 662.9 899.1 659 899.9 655.3 900.8 651.6 901.8 648 902.9 644.5 904.1 641.1 905.3 637.9 906.7 634.8 908.1 631.8 909.4 629.1 910.6 626.6 911.9 624.2 913.2 622 914.6 619.9 916 617.9 917.5 616 919 614.3 920.6 612.6 922.2 611.1 923.9 609.6 925.6 608.3 927.3 607 929.1 605.9 930.9 604.8" stroke="#0a0a0a" stroke-width="1.2"/><g clip-path="url(#c9)"><g filter="url(#bl)"><path d="M1009.5 928.9 991.9 937.8 972.6 941.5 952.9 940.2 933.4 934.7 914.4 925.6 896 913.3 878.5 898.2 861.9 880.4 846.6 860.5 832.8 838.7 820.8 815.4" stroke="url(#s180)" stroke-width="6.1"/><path d="M1007 925.4 990.6 933.7 972.4 937.2 953.6 936 934.9 930.7 916.5 921.9 898.6 909.9 881.4 895.1 865.2 877.7 850.1 858 836.5 836.5 824.7 813.6" stroke="url(#s181)" stroke-width="4.3"/><path d="M1004.5 921.8 989.2 929.6 972.1 932.8 954.4 931.7 936.5 926.7 918.7 918.1 901.3 906.5 884.5 891.9 868.5 874.8 853.7 855.5 840.3 834.4 828.6 811.8" stroke="url(#s182)" stroke-width="6.2"/><path d="M1001 916.9 987.2 923.9 971.8 926.9 955.4 925.8 938.6 921.1 921.7 912.9 904.9 901.7 888.6 887.6 873.1 871 858.6 852.1 845.5 831.4 834.1 809.3" stroke="url(#s183)" stroke-width="7.6"/><path d="M996.9 911.2 985 917.2 971.4 919.8 956.6 918.9 941.1 914.5 925.2 906.8 909.2 896.1 893.5 882.5 878.5 866.4 864.4 848.1 851.6 827.9 840.5 806.3" stroke="url(#s184)" stroke-width="8.3"/><path d="M992.7 905.1 982.6 910.2 971 912.4 957.9 911.6 943.8 907.6 928.9 900.4 913.7 890.2 898.7 877.2 884.1 861.6 870.5 843.8 858 824.2 847.2 803.2" stroke="url(#s185)" stroke-width="8.3"/><path d="M988.6 899.4 980.3 903.5 970.6 905.4 959.1 904.6 946.3 901 932.4 894.3 918 884.6 903.6 872.1 889.5 857.1 876.2 839.8 864.2 820.7 853.6 800.2" stroke="url(#s186)" stroke-width="7.6"/><path d="M985.1 894.5 978.4 897.9 970.2 899.4 960.2 898.7 948.4 895.4 935.4 889.1 921.7 879.9 907.7 867.8 894.1 853.2 881.2 836.3 869.4 817.7 859.1 797.7" stroke="url(#s187)" stroke-width="6.2"/><path d="M982.6 890.9 977 893.7 970 895 960.9 894.4 950 891.3 937.6 885.3 924.3 876.4 910.8 864.7 897.4 850.4 884.7 833.9 873.2 815.5 863 795.9" stroke="url(#s188)" stroke-width="4.3"/><path d="M980.1 887.4 975.6 889.7 969.7 890.7 961.7 890.2 951.5 887.3 939.7 881.6 926.9 873 913.7 861.6 900.7 847.6 888.3 831.4 876.9 813.4 866.9 794.1" stroke="url(#s189)" stroke-width="6.1"/><path d="M826.1 826.4 815.2 802.5 806.4 777.9 800 752.8 796.2 727.9 795.2 703.4 797.1 679.8 802.1 657.4 810.4 636.8 822.2 618.6 837.3 603.4 855.5 592.1" stroke="url(#s190)" stroke-width="6.1"/><path d="M829.9 824.4 819.2 800.9 810.5 776.6 804.2 752 800.5 727.4 799.5 703.4 801.3 680.4 806.2 658.7 814.2 638.8 825.5 621.3 840 606.7 857.3 595.9" stroke="url(#s191)" stroke-width="4.3"/><path d="M833.8 822.4 823.2 799.3 814.7 775.3 808.5 751.1 804.8 727 803.8 703.5 805.7 681 810.4 660 818.1 640.8 828.9 624 842.7 610.1 859.2 599.9" stroke="url(#s192)" stroke-width="6.2"/><path d="M839.2 819.7 828.7 797 820.4 773.6 814.4 749.9 810.8 726.4 809.8 703.6 811.6 681.9 816.1 661.7 823.5 643.5 833.6 627.7 846.5 614.8 861.7 605.3" stroke="url(#s193)" stroke-width="7.6"/><path d="M845.4 816.5 835.3 794.4 827.2 771.5 821.3 748.5 817.8 725.7 816.9 703.7 818.6 683 822.9 663.8 829.7 646.8 839.1 632.1 850.9 620.3 864.7 611.7" stroke="url(#s194)" stroke-width="8.3"/><path d="M852 813.1 842.1 791.6 834.3 769.4 828.6 747 825.2 725 824.3 703.9 825.9 684 829.9 666 836.3 650.1 844.9 636.8 855.5 626.1 867.9 618.4" stroke="url(#s195)" stroke-width="8.3"/><path d="M858.3 809.9 848.7 788.9 841 767.3 835.5 745.6 832.2 724.3 831.4 704 832.9 685.1 836.7 668.1 842.6 653.4 850.4 641.2 859.9 631.6 870.9 624.8" stroke="url(#s196)" stroke-width="7.6"/><path d="M863.6 807.2 854.2 786.6 846.7 765.5 841.3 744.4 838.2 723.7 837.4 704.1 838.8 686 842.4 669.9 848 656.1 855.1 644.9 863.7 636.3 873.5 630.2" stroke="url(#s197)" stroke-width="6.2"/><path d="M867.5 805.2 858.3 785 850.9 764.3 845.6 743.5 842.5 723.3 841.7 704.2 843.1 686.6 846.6 671.1 851.8 658.1 858.5 647.7 866.4 639.7 875.4 634.1" stroke="url(#s198)" stroke-width="4.3"/><path d="M871.3 803.2 862.3 783.4 855 763 849.8 742.7 846.8 722.9 846 704.2 847.4 687.2 850.7 672.4 855.6 660.1 861.9 650.3 869.1 643.1 877.2 638" stroke="url(#s199)" stroke-width="6.1"/></g></g><path d="M969.3 893.2 966.2 893.4 963.2 893.5 960.3 893.4 957.4 893.2 954.6 892.9 951.7 892.4 948.8 891.8 946 891.1 943.1 890.2 940.2 889.2 937.3 888.1 934.4 886.9 931.5 885.5 928.6 884 925.7 882.4 922.8 880.6 920 878.7 917.1 876.8 914.2 874.7 911.3 872.5 908.5 870.2 905.7 867.7 902.9 865.2 900.1 862.6 897.3 859.8 894.6 857 891.9 854.1 889.2 851.1 886.6 848 884 844.8 881.4 841.5 878.9 838.2 876.5 834.8 874.1 831.3 871.7 827.7 869.4 824.1 867.2 820.4 865 816.7 862.9 812.9 860.8 809 858.8 805.1 856.9 801.2 855 797.2 853.3 793.2 851.6 789.2 850 785.1 848.4 781 847 776.9 845.6 772.8 844.5 768.5 843.6 764.2 842.8 759.8 842.1 755.4 841.4 750.9 840.9 746.5 840.4 742.1 840.1 737.7 839.8 733.3 839.6 729 839.6 724.6 839.6 720.3 839.7 716 839.9 711.8 840.3 707.7 840.7 703.6 841.2 699.5 841.8 695.6 842.6 691.7 843.4 687.9 844.3 684.2 845.3 680.6 846.4 677.1 847.5 673.8 848.8 670.5 850.1 667.4 851.5 664.5 852.9 661.7 854.1 659.2 855.3 656.9 856.7 654.7 858 652.5 859.5 650.5 860.9 648.7 862.5 646.9 864 645.2 865.6 643.7 867.3 642.2 869 640.9 870.7 639.7 872.5 638.5 874.4 637.4" stroke="#0a0a0a" stroke-width="1.2"/><g clip-path="url(#c10)"><g filter="url(#bl)"><path d="M952.9 961.5 935.4 970.4 916 974.1 896.3 972.9 876.8 967.4 857.8 958.3 839.5 946 821.9 930.8 805.3 913.1 790 893.1 776.2 871.3 764.2 848.1" stroke="url(#s200)" stroke-width="6.1"/><path d="M950.4 958 934 966.4 915.8 969.8 897 968.6 878.3 963.4 860 954.6 842.1 942.6 824.9 927.7 808.6 910.3 793.5 890.7 779.9 869.2 768.1 846.3" stroke="url(#s201)" stroke-width="4.3"/><path d="M947.9 954.5 932.6 962.2 915.6 965.5 897.8 964.4 879.9 959.3 862.1 950.8 844.7 939.1 827.9 924.6 811.9 907.5 797.1 888.2 783.7 867 772.1 844.4" stroke="url(#s202)" stroke-width="6.2"/><path d="M944.5 949.6 930.7 956.6 915.2 959.5 898.8 958.4 882 953.7 865.1 945.6 848.4 934.3 832.1 920.2 816.5 903.6 802 884.7 788.9 864 777.5 841.9" stroke="url(#s203)" stroke-width="7.6"/><path d="M940.4 943.8 928.4 949.9 914.8 952.5 900.1 951.5 884.6 947.1 868.7 939.5 852.7 928.7 837 915.2 821.9 899 807.8 880.7 795.1 860.5 783.9 839" stroke="url(#s204)" stroke-width="8.3"/><path d="M936.1 937.7 926 942.9 914.4 945.1 901.4 944.2 887.2 940.2 872.4 933 857.2 922.9 842.1 909.8 827.6 894.2 813.9 876.5 801.5 856.8 790.6 835.8" stroke="url(#s205)" stroke-width="8.3"/><path d="M932 932 923.8 936.2 914 938 902.6 937.2 889.7 933.6 875.9 926.9 861.5 917.3 847 904.8 832.9 889.7 819.7 872.4 807.6 853.3 797 832.9" stroke="url(#s206)" stroke-width="7.6"/><path d="M928.5 927.1 921.8 930.5 913.7 932 903.6 931.3 891.9 928 878.9 921.7 865.1 912.5 851.2 900.4 837.5 885.8 824.6 869 812.8 850.3 802.5 830.4" stroke="url(#s207)" stroke-width="6.2"/><path d="M926 923.5 920.4 926.4 913.4 927.7 904.4 927 893.4 923.9 881 918 867.8 909 854.2 897.3 840.9 883 828.2 866.5 816.6 848.2 806.4 828.5" stroke="url(#s208)" stroke-width="4.3"/><path d="M923.5 920 919.1 922.3 913.2 923.4 905.1 922.8 895 919.9 883.2 914.2 870.4 905.6 857.2 894.2 844.1 880.2 831.7 864 820.3 846 810.3 826.7" stroke="url(#s209)" stroke-width="6.1"/><path d="M769.6 859 758.6 835.2 749.8 810.5 743.5 785.5 739.7 760.5 738.6 736 740.5 712.4 745.6 690.1 753.9 669.5 765.6 651.2 780.8 636 798.9 624.7" stroke="url(#s210)" stroke-width="6.1"/><path d="M773.4 857.1 762.6 833.6 753.9 809.3 747.7 784.6 743.9 760.1 742.9 736.1 744.8 713 749.7 691.3 757.7 671.4 769 653.9 783.5 639.4 800.7 628.6" stroke="url(#s211)" stroke-width="4.3"/><path d="M777.3 855.1 766.6 831.9 758.1 808 751.9 783.7 748.3 759.7 747.3 736.2 749.1 713.7 753.8 692.6 761.6 673.4 772.4 656.6 786.2 642.8 802.6 632.5" stroke="url(#s212)" stroke-width="6.2"/><path d="M782.6 852.3 772.2 829.7 763.9 806.2 757.8 782.5 754.2 759.1 753.3 736.3 755 714.6 759.6 694.4 766.9 676.2 777.1 660.4 789.9 647.5 805.2 637.9" stroke="url(#s213)" stroke-width="7.6"/><path d="M788.9 849.1 778.7 827 770.6 804.2 764.7 781.1 761.3 758.4 760.3 736.4 762 715.6 766.3 696.5 773.2 679.4 782.6 664.8 794.3 653 808.2 644.3" stroke="url(#s214)" stroke-width="8.3"/><path d="M795.5 845.7 785.6 824.2 777.7 802 772 779.6 768.6 757.6 767.8 736.5 769.3 716.7 773.4 698.6 779.8 682.8 788.4 669.4 799 658.8 811.4 651" stroke="url(#s215)" stroke-width="8.3"/><path d="M801.7 842.5 792.1 821.5 784.4 799.9 778.9 778.2 775.7 757 774.8 736.6 776.3 717.7 780.1 700.7 786.1 686 793.9 673.8 803.4 664.3 814.4 657.4" stroke="url(#s216)" stroke-width="7.6"/><path d="M807.1 839.8 797.7 819.3 790.2 798.2 784.8 777 781.6 756.4 780.8 736.7 782.3 718.6 785.9 702.5 791.4 688.7 798.6 677.6 807.1 669 816.9 662.8" stroke="url(#s217)" stroke-width="6.2"/><path d="M811 837.8 801.7 817.6 794.3 796.9 789.1 776.2 786 755.9 785.2 736.8 786.6 719.2 790 703.8 795.3 690.7 802 680.3 809.8 672.4 818.8 666.8" stroke="url(#s218)" stroke-width="4.3"/><path d="M814.8 835.8 805.7 816 798.5 795.7 793.3 775.3 790.2 755.5 789.5 736.9 790.8 719.9 794.1 705 799.1 692.7 805.3 683 812.5 675.7 820.6 670.6" stroke="url(#s219)" stroke-width="6.1"/></g></g><path d="M912.7 925.8 909.7 926 906.7 926.1 903.8 926.1 900.9 925.9 898 925.5 895.1 925.1 892.3 924.5 889.4 923.7 886.5 922.9 883.6 921.9 880.8 920.7 877.9 919.5 875 918.1 872.1 916.6 869.2 915 866.3 913.2 863.4 911.4 860.5 909.4 857.6 907.3 854.8 905.1 851.9 902.8 849.1 900.4 846.3 897.8 843.5 895.2 840.7 892.5 838 889.7 835.3 886.7 832.6 883.7 830 880.6 827.4 877.4 824.9 874.2 822.4 870.8 819.9 867.4 817.5 863.9 815.1 860.4 812.8 856.7 810.6 853.1 808.4 849.3 806.3 845.5 804.2 841.7 802.3 837.8 800.3 833.8 798.5 829.9 796.7 825.8 795 821.8 793.4 817.7 791.9 813.7 790.4 809.5 789 805.4 787.9 801.2 787 796.8 786.2 792.4 785.5 788 784.9 783.6 784.3 779.2 783.9 774.8 783.5 770.4 783.3 766 783.1 761.6 783 757.3 783 752.9 783.2 748.7 783.4 744.5 783.7 740.3 784.1 736.2 784.7 732.2 785.3 728.2 786 724.3 786.8 720.5 787.7 716.8 788.7 713.3 789.8 709.8 791 706.4 792.2 703.2 793.5 700.1 795 697.1 796.3 694.3 797.5 691.9 798.8 689.5 800.1 687.3 801.5 685.2 802.9 683.2 804.4 681.3 805.9 679.5 807.5 677.9 809.1 676.3 810.7 674.9 812.4 673.5 814.2 672.3 816 671.1 817.8 670.1" stroke="#0a0a0a" stroke-width="1.2"/><path d="M848.7 808.8 L1471 452" stroke="#6a1ee8" stroke-width="1.1"/><path d="M515 1000 L1195 612" stroke="#f2f2f2" stroke-width="1" stroke-dasharray="8 3"/><path d="M515 1000 L848.7 808.8 M1195 612 L1860 1000 M961.3 873 L1583.5 514" stroke="#f2f2f2" stroke-width="1"/><polygon points="1600.4,523.6 1597.2,525.4 1593.6,526.9 1589.7,527.9 1585.6,528.6 1581.4,528.8 1577.3,528.5 1573.4,527.8 1569.7,526.7 1566.5,525.2 1563.9,523.3 1561.8,521.2 1560.3,518.8 1559.6,516.3 1559.6,513.7 1560.3,511.2 1561.7,508.7 1563.8,506.4 1566.5,504.3 1569.7,502.5 1573.3,501 1577.2,500 1581.3,499.3 1585.5,499.1 1589.6,499.4 1593.6,500.1 1597.2,501.2 1600.4,502.7 1603.1,504.6 1605.2,506.7 1606.6,509.1 1607.3,511.6 1607.3,514.2 1606.6,516.7 1605.2,519.2 1603.1,521.5" fill="url(#ecg)"/><g clip-path="url(#c11)"><g filter="url(#bl)"><path d="M1353.9 304.2 1374.2 294.3 1396.4 289.6 1419.4 289.7 1442.5 294.4 1465.3 303 1487.5 315.3 1508.8 330.6 1528.7 348.7 1547.2 369.1 1563.7 391.3 1578.1 414.9 1590 439.2 1599.2 463.8 1605.5 488.3 1608.8 512.1" stroke="url(#s220)" stroke-width="6.1"/><path d="M1356.3 307.8 1375.6 298.4 1396.8 293.8 1418.9 294 1441.3 298.5 1463.5 306.9 1485.2 318.9 1506 334 1525.7 351.8 1543.8 371.9 1560.1 393.7 1574.3 416.9 1586 440.9 1595.1 465.1 1601.3 489.1 1604.5 512.4" stroke="url(#s221)" stroke-width="4.3"/><path d="M1358.6 311.4 1377 302.5 1397.2 298.2 1418.5 298.3 1440.1 302.7 1461.7 310.9 1482.9 322.6 1503.3 337.4 1522.6 354.8 1540.5 374.6 1556.5 396.2 1570.5 419 1582 442.6 1590.9 466.5 1597 490 1600.2 512.8" stroke="url(#s222)" stroke-width="6.2"/><path d="M1361.9 316.5 1379 308.2 1397.8 304.2 1417.8 304.3 1438.4 308.4 1459.1 316.3 1479.6 327.6 1499.5 342 1518.4 359.1 1535.8 378.4 1551.6 399.5 1565.2 421.9 1576.5 445 1585.2 468.3 1591.2 491.2 1594.2 513.2" stroke="url(#s223)" stroke-width="7.6"/><path d="M1365.7 322.4 1381.2 314.9 1398.5 311.2 1417.1 311.3 1436.4 315.2 1456.2 322.7 1475.8 333.6 1495.1 347.5 1513.4 364.1 1530.4 382.9 1545.7 403.5 1559 425.3 1570 447.8 1578.5 470.4 1584.2 492.5 1587.2 513.7" stroke="url(#s224)" stroke-width="8.3"/><path d="M1369.7 328.6 1383.6 321.9 1399.2 318.6 1416.3 318.7 1434.3 322.3 1453 329.4 1471.9 339.8 1490.4 353.2 1508.1 369.3 1524.6 387.6 1539.6 407.6 1552.5 428.9 1563.2 450.7 1571.4 472.6 1577 494 1579.8 514.2" stroke="url(#s225)" stroke-width="8.3"/><path d="M1373.6 334.6 1385.9 328.6 1399.9 325.6 1415.5 325.7 1432.4 329.1 1450 335.8 1468.1 345.8 1485.9 358.7 1503.1 374.3 1519.2 392.1 1533.7 411.6 1546.3 432.3 1556.7 453.5 1564.7 474.8 1570.1 495.4 1572.7 514.7" stroke="url(#s226)" stroke-width="7.6"/><path d="M1376.8 339.6 1387.9 334.3 1400.5 331.5 1414.9 331.7 1430.7 334.9 1447.5 341.3 1464.8 350.8 1482.1 363.4 1498.9 378.5 1514.5 395.9 1528.7 414.9 1541.1 435.1 1551.2 455.9 1559 476.6 1564.2 496.6 1566.7 515.1" stroke="url(#s227)" stroke-width="6.2"/><path d="M1379.2 343.3 1389.3 338.4 1401 335.9 1414.4 336 1429.4 339 1445.7 345.2 1462.5 354.5 1479.4 366.7 1495.8 381.6 1511.2 398.6 1525.1 417.4 1537.3 437.2 1547.2 457.6 1554.8 477.9 1559.9 497.4 1562.4 515.5" stroke="url(#s228)" stroke-width="4.3"/><path d="M1381.5 346.9 1390.7 342.4 1401.4 340.2 1413.9 340.3 1428.2 343.2 1443.8 349.1 1460.2 358.1 1476.7 370.1 1492.7 384.6 1507.9 401.4 1521.6 419.8 1533.5 439.3 1543.3 459.3 1550.7 479.2 1555.7 498.3 1558.1 515.8" stroke="url(#s229)" stroke-width="6.1"/></g></g><path d="M1359.1 303.1 1363.1 300.9 1367.3 299 1371.6 297.2 1375.9 295.7 1380.4 294.3 1384.9 293.2 1389.4 292.3 1394 291.6 1398.7 291.2 1403.3 290.9 1408.1 290.8 1412.8 291 1417.5 291.3 1422.3 291.9 1427 292.6 1431.7 293.5 1436.1 294.7 1440.6 296.1 1445 297.6 1449.5 299.3 1453.9 301.2 1458.2 303.2 1462.6 305.3 1467 307.7 1471.3 310.1 1475.6 312.8 1479.8 315.5 1484.1 318.4 1488.3 321.5 1492.5 324.7 1496.6 328 1500.7 331.5 1504.8 335.1 1508.8 338.8 1512.8 342.6 1516.7 346.6 1520.6 350.7 1524.4 354.9 1528.2 359.2 1531.9 363.7 1535.5 368.2 1539.1 372.8 1542.6 377.6 1546 382.4 1549.4 387.3 1552.6 392.3 1555.8 397.4 1558.9 402.5 1561.9 407.7 1564.8 413 1567.6 418.3 1570.3 423.7 1572.9 429.1 1575.4 434.6 1577.7 440.1 1580.1 445.4 1582.4 450.7 1584.6 456.1 1586.7 461.4 1588.6 466.7 1590.4 471.9 1592.1 477.2 1593.6 482.4 1595 487.6 1596.3 492.7 1597.4 497.8 1598.4 502.9 1599.2 507.8 1600 512.8 1600.5 517.6 1601 522.4" stroke="#0a0a0a" stroke-width="1.2"/><path d="M1382.5 344.2 1384.5 343.1 1386.5 342.2 1388.5 341.3 1390.6 340.6 1392.8 339.9 1395.1 339.4 1397.4 338.9 1399.8 338.5 1402.3 338.3 1404.9 338.1 1407.6 338.1 1410.3 338.2 1413.1 338.4 1416 338.7 1419 339.2 1422 339.8 1425.1 340.5 1428.2 341.3 1431.4 342.3 1434.7 343.4 1438 344.7 1441.3 346 1444.7 347.6 1448.1 349.2" stroke="#0a0a0a" stroke-width="1.2"/><g clip-path="url(#c12)"><g filter="url(#bl)"><path d="M1297.4 336.8 1316.4 327.4 1337.1 322.5 1358.6 322 1380.3 325.5 1401.9 332.7 1422.9 343.1 1443.3 356.4 1462.6 372.3 1480.7 390.3 1497.3 410.3 1512.1 431.6" stroke="url(#s230)" stroke-width="6.1"/><path d="M1299.7 340.4 1317.8 331.5 1337.6 326.8 1358.3 326.3 1379.3 329.7 1400.2 336.6 1420.8 346.8 1440.7 359.8 1459.7 375.4 1477.6 393.2 1493.9 412.9 1508.5 433.9" stroke="url(#s231)" stroke-width="4.3"/><path d="M1302.1 344.1 1319.3 335.6 1338.1 331.1 1358 330.6 1378.3 333.9 1398.6 340.6 1418.6 350.6 1438.1 363.3 1456.8 378.7 1474.3 396.2 1490.4 415.5 1504.8 436.2" stroke="url(#s232)" stroke-width="6.2"/><path d="M1305.3 349.1 1321.3 341.2 1338.9 337.1 1357.5 336.6 1376.8 339.7 1396.3 346.2 1415.6 355.8 1434.6 368.2 1452.8 383.1 1469.9 400.2 1485.6 419.1 1499.7 439.5" stroke="url(#s233)" stroke-width="7.6"/><path d="M1309.2 355.1 1323.7 347.9 1339.8 344.1 1357 343.6 1375.1 346.6 1393.6 352.7 1412.1 361.9 1430.4 373.8 1448 388.3 1464.7 405 1480 423.4 1493.8 443.2" stroke="url(#s234)" stroke-width="8.3"/><path d="M1313.2 361.3 1326.2 354.9 1340.7 351.4 1356.5 351 1373.3 353.8 1390.7 359.6 1408.4 368.3 1426 379.8 1443 393.8 1459.2 410 1474.1 427.9 1487.5 447.2" stroke="url(#s235)" stroke-width="8.3"/><path d="M1317 367.2 1328.6 361.5 1341.6 358.4 1356 358.1 1371.6 360.6 1388 366.1 1404.9 374.4 1421.8 385.5 1438.3 399 1454 414.7 1468.5 432.2 1481.5 450.9" stroke="url(#s236)" stroke-width="7.6"/><path d="M1320.3 372.2 1330.6 367.2 1342.3 364.4 1355.6 364.1 1370.1 366.4 1385.7 371.6 1401.9 379.6 1418.2 390.3 1434.3 403.5 1449.5 418.8 1463.7 435.8 1476.5 454.1" stroke="url(#s237)" stroke-width="6.2"/><path d="M1322.6 375.9 1332.1 371.3 1342.9 368.7 1355.3 368.4 1369.1 370.7 1384.1 375.6 1399.7 383.4 1415.7 393.8 1431.3 406.7 1446.3 421.7 1460.3 438.4 1472.8 456.5" stroke="url(#s238)" stroke-width="4.3"/><path d="M1325 379.5 1333.5 375.3 1343.4 373 1354.9 372.7 1368.1 374.8 1382.4 379.6 1397.6 387.1 1413.1 397.3 1428.4 409.9 1443.2 424.6 1456.8 441 1469.2 458.8" stroke="url(#s239)" stroke-width="6.1"/><path d="M1505.4 421.5 1520.5 445.6 1532.9 470.8 1542.5 496.2 1549.1 521.5 1552.3 546.1 1552.1 569.6 1548 591.6 1539.6 611.6 1526.5 628.5 1508.9 640.8" stroke="url(#s240)" stroke-width="6.1"/><path d="M1501.9 423.9 1516.7 447.7 1529 472.5 1538.5 497.5 1544.9 522.3 1548.1 546.3 1547.8 569.2 1543.9 590.4 1535.9 609.4 1523.5 625.4 1507.1 636.9" stroke="url(#s241)" stroke-width="4.3"/><path d="M1498.3 426.4 1512.9 449.9 1525 474.2 1534.3 498.8 1540.6 523.1 1543.7 546.6 1543.5 568.8 1539.7 589.2 1532.1 607.3 1520.5 622.3 1505.1 633" stroke="url(#s242)" stroke-width="6.2"/><path d="M1493.4 429.8 1507.7 452.8 1519.5 476.6 1528.6 500.6 1534.7 524.3 1537.7 547 1537.5 568.2 1533.9 587.5 1526.9 604.3 1516.4 618 1502.5 627.6" stroke="url(#s243)" stroke-width="7.6"/><path d="M1487.5 433.8 1501.5 456.2 1513 479.4 1521.9 502.8 1527.8 525.7 1530.7 547.4 1530.5 567.6 1527.2 585.5 1520.8 600.8 1511.5 612.9 1499.4 621.3" stroke="url(#s244)" stroke-width="8.3"/><path d="M1481.4 438 1495 459.8 1506.2 482.4 1514.8 505 1520.5 527.1 1523.3 547.9 1523.1 566.9 1520 583.4 1514.4 597.1 1506.3 607.5 1496.2 614.6" stroke="url(#s245)" stroke-width="8.3"/><path d="M1475.6 442 1488.9 463.3 1499.8 485.2 1508.1 507.2 1513.6 528.5 1516.2 548.4 1516.1 566.2 1513.3 581.5 1508.2 593.6 1501.4 602.4 1493.1 608.3" stroke="url(#s246)" stroke-width="7.6"/><path d="M1470.7 445.4 1483.6 466.2 1494.3 487.6 1502.4 509 1507.7 529.6 1510.2 548.8 1510.1 565.7 1507.5 579.8 1503 590.6 1497.3 598.1 1490.5 602.9" stroke="url(#s247)" stroke-width="6.2"/><path d="M1467.1 447.9 1479.8 468.3 1490.3 489.4 1498.2 510.3 1503.4 530.5 1505.9 549 1505.7 565.3 1503.3 578.6 1499.2 588.5 1494.2 595 1488.6 598.9" stroke="url(#s248)" stroke-width="4.3"/><path d="M1463.6 450.3 1476.1 470.4 1486.3 491.1 1494.1 511.6 1499.2 531.3 1501.6 549.3 1501.5 564.9 1499.2 577.4 1495.5 586.3 1491.3 591.9 1486.7 595.1" stroke="url(#s249)" stroke-width="6.1"/></g></g><path d="M1302.5 335.8 1306.6 333.6 1310.7 331.6 1315 329.8 1319.4 328.3 1323.8 327 1328.3 325.8 1332.9 324.9 1337.5 324.3 1342.1 323.8 1346.8 323.5 1351.5 323.5 1356.2 323.6 1361 324 1365.7 324.5 1370.5 325.2 1375.1 326.2 1379.6 327.4 1384.1 328.7 1388.5 330.3 1392.9 332 1397.3 333.8 1401.7 335.8 1406.1 338 1410.4 340.3 1414.7 342.8 1419 345.4 1423.3 348.2 1427.5 351.1 1431.7 354.1 1435.9 357.3 1440.1 360.7 1444.2 364.1 1448.2 367.7 1452.3 371.5 1456.2 375.3 1460.2 379.3 1464 383.4 1467.9 387.6 1471.6 391.9 1475.3 396.3 1479 400.9 1482.6 405.5 1486.1 410.3 1489.5 415.1 1492.8 420 1496.1 425 1499.3 430.1 1502.3 435.2 1505.3 440.4 1508.2 445.7 1511 451 1513.7 456.4 1516.3 461.8 1518.8 467.3 1521.2 472.8 1523.6 478.1 1525.9 483.4 1528.1 488.8 1530.1 494.1 1532.1 499.4 1533.9 504.6 1535.5 509.9 1537.1 515.1 1538.5 520.3 1539.7 525.4 1540.8 530.5 1541.8 535.6 1542.7 540.5 1543.4 545.5 1544 550.3 1544.4 555.1 1544.7 559.7 1544.9 564.3 1545 568.8 1544.9 573.2 1544.6 577.5 1544.3 581.6 1543.8 585.7 1543.2 589.6 1542.5 593.4 1541.7 597 1540.7 600.5 1539.7 603.8 1538.5 606.9 1537.3 609.8 1536 612.5 1534.6 615 1533.2 617.1" stroke="#0a0a0a" stroke-width="1.2"/><path d="M1326 376.8 1327.9 375.8 1329.9 374.8 1332 374 1334.1 373.2 1336.3 372.6 1338.5 372 1340.9 371.5 1343.3 371.2 1345.8 370.9 1348.4 370.8 1351 370.8 1353.8 370.8 1356.6 371 1359.5 371.4 1362.4 371.8 1365.4 372.4 1368.5 373.1 1371.7 374 1374.9 374.9 1378.2 376 1381.5 377.3 1384.8 378.7 1388.2 380.2 1391.6 381.9" stroke="#0a0a0a" stroke-width="1.2"/><g clip-path="url(#c13)"><g filter="url(#bl)"><path d="M1240.8 369.5 1261.8 359.4 1284.8 354.7 1308.6 355.3 1332.4 360.6 1355.9 370.1 1378.7 383.4 1400.4 399.9 1420.7 419.2 1439.2 440.8 1455.6 464.3" stroke="url(#s250)" stroke-width="6.1"/><path d="M1243.1 373.1 1263.2 363.5 1285.1 359 1308 359.5 1331.1 364.7 1354 374 1376.3 386.9 1397.6 403.1 1417.5 422.2 1435.8 443.5 1451.9 466.6" stroke="url(#s251)" stroke-width="4.3"/><path d="M1245.5 376.7 1264.6 367.6 1285.5 363.3 1307.5 363.9 1329.8 368.8 1352.1 377.9 1373.9 390.5 1394.8 406.5 1414.4 425.2 1432.3 446.1 1448.3 468.9" stroke="url(#s252)" stroke-width="6.2"/><path d="M1248.8 381.8 1266.4 373.3 1286 369.3 1306.7 369.8 1328 374.6 1349.4 383.2 1370.5 395.5 1390.9 411 1410 429.3 1427.6 449.8 1443.2 472.1" stroke="url(#s253)" stroke-width="7.6"/><path d="M1252.6 387.7 1268.7 380 1286.6 376.3 1305.8 376.8 1325.9 381.3 1346.3 389.6 1366.6 401.4 1386.3 416.4 1404.9 434.1 1422 454.1 1437.2 475.9" stroke="url(#s254)" stroke-width="8.3"/><path d="M1256.6 393.9 1271 387 1287.2 383.7 1304.9 384.2 1323.7 388.4 1343 396.2 1362.4 407.5 1381.4 422 1399.5 439.2 1416.1 458.7 1431 479.8" stroke="url(#s255)" stroke-width="8.3"/><path d="M1260.4 399.8 1273.2 393.7 1287.8 390.8 1304 391.2 1321.5 395.1 1339.9 402.5 1358.5 413.4 1376.9 427.4 1394.4 444.1 1410.6 463 1425 483.6" stroke="url(#s256)" stroke-width="7.6"/><path d="M1263.7 404.9 1275.1 399.4 1288.3 396.7 1303.3 397.1 1319.7 400.8 1337.2 407.9 1355.2 418.4 1373 431.9 1390 448.2 1405.8 466.7 1419.9 486.8" stroke="url(#s257)" stroke-width="6.2"/><path d="M1266.1 408.5 1276.5 403.5 1288.7 401.1 1302.7 401.4 1318.4 405 1335.3 411.8 1352.7 422 1370.1 435.2 1386.8 451.2 1402.4 469.3 1416.2 489.1" stroke="url(#s258)" stroke-width="4.3"/><path d="M1268.4 412.2 1277.9 407.6 1289 405.4 1302.2 405.7 1317.1 409 1333.4 415.7 1350.3 425.5 1367.3 438.5 1383.7 454.1 1399 472 1412.6 491.4" stroke="url(#s259)" stroke-width="6.1"/><path d="M1448.9 454.1 1462.6 476 1474.3 498.8 1483.7 521.9 1490.5 545 1494.7 567.6 1496.1 589.5 1494.5 610.4 1489.6 629.9 1481 647.5 1468.5 662.5 1452.4 673.4" stroke="url(#s260)" stroke-width="6.1"/><path d="M1445.3 456.5 1458.9 478.2 1470.4 500.6 1479.6 523.3 1486.3 546 1490.5 568.2 1491.8 589.5 1490.3 609.7 1485.6 628.5 1477.4 645.2 1465.6 659.3 1450.5 669.6" stroke="url(#s261)" stroke-width="4.3"/><path d="M1441.7 459 1455.1 480.3 1466.4 502.4 1475.5 524.8 1482.1 547 1486.1 568.7 1487.5 589.5 1486 609.1 1481.5 627 1473.8 642.9 1462.7 656.1 1448.6 665.7" stroke="url(#s262)" stroke-width="6.2"/><path d="M1436.8 462.4 1449.9 483.3 1461 504.9 1469.8 526.7 1476.3 548.4 1480.2 569.5 1481.5 589.5 1480 608.1 1475.8 625 1468.7 639.7 1458.7 651.6 1446 660.3" stroke="url(#s263)" stroke-width="7.6"/><path d="M1431 466.4 1443.8 486.8 1454.6 507.8 1463.2 529.1 1469.4 550.1 1473.2 570.4 1474.4 589.5 1473.1 607 1469.2 622.6 1462.8 635.9 1453.9 646.4 1442.9 653.9" stroke="url(#s264)" stroke-width="8.3"/><path d="M1424.9 470.6 1437.3 490.4 1447.8 510.9 1456.2 531.5 1462.2 551.8 1465.8 571.3 1467 589.5 1465.7 605.9 1462.2 620.1 1456.5 631.9 1448.9 640.9 1439.6 647.2" stroke="url(#s265)" stroke-width="8.3"/><path d="M1419.1 474.6 1431.2 493.9 1441.4 513.8 1449.5 533.9 1455.4 553.5 1458.8 572.2 1459.9 589.4 1458.8 604.8 1455.5 617.7 1450.6 628.1 1444.2 635.7 1436.6 640.9" stroke="url(#s266)" stroke-width="7.6"/><path d="M1414.1 478 1426 496.9 1436 516.3 1443.9 535.9 1449.5 554.9 1452.9 572.9 1453.9 589.4 1452.8 603.8 1449.9 615.7 1445.5 624.9 1440.1 631.3 1433.9 635.5" stroke="url(#s267)" stroke-width="6.2"/><path d="M1410.5 480.5 1422.2 499.1 1432 518.2 1439.7 537.3 1445.3 555.9 1448.5 573.5 1449.6 589.4 1448.5 603.1 1445.8 614.3 1441.8 622.5 1437.2 628.1 1432 631.6" stroke="url(#s268)" stroke-width="4.3"/><path d="M1407 483 1418.5 501.2 1428.1 520 1435.7 538.7 1441.1 556.9 1444.3 574 1445.3 589.4 1444.3 602.5 1441.7 612.8 1438.2 620.2 1434.3 624.9 1430.2 627.7" stroke="url(#s269)" stroke-width="6.1"/></g></g><path d="M1246 368.4 1250 366.2 1254.2 364.2 1258.4 362.5 1262.8 360.9 1267.2 359.6 1271.7 358.5 1276.3 357.6 1280.9 356.9 1285.6 356.4 1290.2 356.2 1294.9 356.1 1299.7 356.3 1304.4 356.6 1309.2 357.1 1313.9 357.9 1318.6 358.8 1323 360 1327.5 361.4 1331.9 362.9 1336.4 364.6 1340.8 366.5 1345.1 368.5 1349.5 370.6 1353.9 373 1358.2 375.4 1362.5 378 1366.7 380.8 1371 383.7 1375.2 386.8 1379.4 390 1383.5 393.3 1387.6 396.8 1391.7 400.4 1395.7 404.1 1399.7 407.9 1403.6 411.9 1407.5 416 1411.3 420.2 1415.1 424.5 1418.8 429 1422.4 433.5 1426 438.2 1429.5 442.9 1432.9 447.7 1436.3 452.6 1439.5 457.6 1442.7 462.7 1445.8 467.8 1448.8 473.1 1451.7 478.3 1454.5 483.7 1457.2 489 1459.8 494.5 1462.3 499.9 1464.6 505.4 1467 510.8 1469.3 516.1 1471.5 521.4 1473.6 526.7 1475.5 532 1477.3 537.3 1479 542.5 1480.5 547.7 1481.9 552.9 1483.2 558.1 1484.3 563.2 1485.3 568.2 1486.1 573.2 1486.8 578.1 1487.4 582.9 1487.9 587.7 1488.2 592.4 1488.4 597 1488.4 601.4 1488.3 605.8 1488.1 610.1 1487.7 614.3 1487.3 618.3 1486.7 622.2 1485.9 626 1485.1 629.6 1484.1 633.1 1483.1 636.4 1481.9 639.5 1480.7 642.5 1479.4 645.2 1478.1 647.6 1476.7 649.8" stroke="#0a0a0a" stroke-width="1.2"/><path d="M1269.4 409.5 1271.4 408.4 1273.3 407.5 1275.4 406.6 1277.5 405.9 1279.7 405.2 1282 404.6 1284.3 404.2 1286.7 403.8 1289.2 403.6 1291.8 403.4 1294.5 403.4 1297.2 403.5 1300 403.7 1302.9 404 1305.9 404.5 1308.9 405 1312 405.8 1315.1 406.6 1318.3 407.6 1321.6 408.7 1324.9 409.9 1328.2 411.3 1331.6 412.8 1335 414.5" stroke="#0a0a0a" stroke-width="1.2"/><g clip-path="url(#c14)"><g filter="url(#bl)"><path d="M1184.3 402.1 1203.3 392.7 1223.9 387.8 1245.5 387.3 1267.2 390.8 1288.8 397.9 1309.8 408.3 1330.2 421.7 1349.5 437.5 1367.6 455.6 1384.2 475.6 1399 496.9" stroke="url(#s270)" stroke-width="6.1"/><path d="M1186.6 405.7 1204.7 396.8 1224.5 392.1 1245.2 391.6 1266.2 394.9 1287.1 401.9 1307.7 412.1 1327.6 425.1 1346.6 440.7 1364.4 458.5 1380.8 478.1 1395.4 499.2" stroke="url(#s271)" stroke-width="4.3"/><path d="M1189 409.4 1206.2 400.9 1225 396.4 1244.9 395.9 1265.1 399.2 1285.5 405.9 1305.5 415.8 1325 428.6 1343.7 443.9 1361.2 461.5 1377.3 480.8 1391.7 501.5" stroke="url(#s272)" stroke-width="6.2"/><path d="M1192.2 414.4 1208.2 406.5 1225.8 402.3 1244.4 401.9 1263.7 405 1283.2 411.5 1302.5 421 1321.5 433.4 1339.7 448.4 1356.8 465.5 1372.5 484.4 1386.6 504.7" stroke="url(#s273)" stroke-width="7.6"/><path d="M1196 420.3 1210.6 413.2 1226.7 409.3 1243.9 408.9 1262 411.8 1280.5 418 1299 427.2 1317.3 439.1 1334.9 453.6 1351.6 470.2 1366.9 488.7 1380.7 508.5" stroke="url(#s274)" stroke-width="8.3"/><path d="M1200.1 426.6 1213.1 420.1 1227.6 416.7 1243.4 416.3 1260.2 419 1277.6 424.8 1295.3 433.6 1312.9 445.1 1329.9 459.1 1346.1 475.2 1361 493.2 1374.4 512.5" stroke="url(#s275)" stroke-width="8.3"/><path d="M1203.9 432.5 1215.4 426.8 1228.5 423.7 1242.9 423.4 1258.5 425.9 1274.9 431.3 1291.8 439.7 1308.7 450.8 1325.2 464.3 1340.9 480 1355.4 497.4 1368.4 516.2" stroke="url(#s276)" stroke-width="7.6"/><path d="M1207.1 437.5 1217.5 432.4 1229.2 429.6 1242.4 429.3 1257 431.7 1272.6 436.9 1288.8 444.9 1305.1 455.6 1321.1 468.7 1336.4 484 1350.6 501.1 1363.4 519.4" stroke="url(#s277)" stroke-width="6.2"/><path d="M1209.5 441.2 1218.9 436.5 1229.8 434 1242.1 433.7 1256 435.9 1271 440.9 1286.6 448.7 1302.5 459.1 1318.2 472 1333.2 487 1347.1 503.7 1359.7 521.8" stroke="url(#s278)" stroke-width="4.3"/><path d="M1211.8 444.8 1220.4 440.6 1230.3 438.2 1241.8 438 1254.9 440.1 1269.3 444.9 1284.5 452.4 1300 462.6 1315.3 475.1 1330 489.9 1343.7 506.3 1356 524" stroke="url(#s279)" stroke-width="6.1"/><path d="M1392.3 486.7 1407.3 510.9 1419.8 536 1429.4 561.5 1436 586.7 1439.2 611.3 1439 634.8 1434.9 656.8 1426.5 676.8 1413.4 693.8 1395.8 706.1" stroke="url(#s280)" stroke-width="6.1"/><path d="M1388.8 489.2 1403.6 513 1415.9 537.7 1425.3 562.8 1431.7 587.6 1434.9 611.6 1434.7 634.4 1430.8 655.7 1422.8 674.7 1410.4 690.7 1393.9 702.2" stroke="url(#s281)" stroke-width="4.3"/><path d="M1385.2 491.6 1399.8 515.1 1411.9 539.5 1421.2 564.1 1427.5 588.4 1430.6 611.9 1430.3 634 1426.6 654.4 1419 672.5 1407.4 687.6 1392 698.3" stroke="url(#s282)" stroke-width="6.2"/><path d="M1380.2 495.1 1394.6 518.1 1406.4 541.9 1415.5 565.9 1421.6 589.6 1424.6 612.3 1424.4 633.5 1420.8 652.8 1413.8 669.6 1403.2 683.2 1389.4 692.9" stroke="url(#s283)" stroke-width="7.6"/><path d="M1374.4 499.1 1388.4 521.5 1399.9 544.7 1408.7 568.1 1414.7 590.9 1417.6 612.7 1417.4 632.9 1414 650.8 1407.7 666.1 1398.3 678.1 1386.3 686.5" stroke="url(#s284)" stroke-width="8.3"/><path d="M1368.3 503.3 1381.9 525.1 1393.1 547.7 1401.7 570.3 1407.4 592.4 1410.2 613.2 1410 632.2 1406.9 648.7 1401.2 662.4 1393.2 672.8 1383.1 679.9" stroke="url(#s285)" stroke-width="8.3"/><path d="M1362.5 507.3 1375.8 528.5 1386.7 550.5 1395 572.5 1400.5 593.7 1403.1 613.7 1402.9 631.5 1400.1 646.8 1395.1 658.9 1388.3 667.7 1380 673.5" stroke="url(#s286)" stroke-width="7.6"/><path d="M1357.6 510.7 1370.5 531.5 1381.2 552.9 1389.2 574.3 1394.6 594.9 1397.1 614 1397 631 1394.4 645.1 1389.9 655.9 1384.1 663.4 1377.4 668.1" stroke="url(#s287)" stroke-width="6.2"/><path d="M1354 513.2 1366.7 533.6 1377.2 554.6 1385.1 575.6 1390.3 595.7 1392.8 614.3 1392.6 630.6 1390.2 643.9 1386.1 653.7 1381.1 660.3 1375.5 664.2" stroke="url(#s288)" stroke-width="4.3"/><path d="M1350.5 515.6 1363 535.7 1373.2 556.4 1381 576.9 1386.1 596.6 1388.5 614.6 1388.4 630.2 1386.1 642.7 1382.4 651.6 1378.1 657.2 1373.6 660.3" stroke="url(#s289)" stroke-width="6.1"/></g></g><path d="M1189.4 401 1193.5 398.9 1197.6 396.9 1201.9 395.1 1206.2 393.6 1210.7 392.2 1215.2 391.1 1219.7 390.2 1224.3 389.5 1229 389.1 1233.7 388.8 1238.4 388.8 1243.1 388.9 1247.9 389.2 1252.6 389.8 1257.4 390.5 1262 391.5 1266.5 392.7 1270.9 394 1275.4 395.5 1279.8 397.2 1284.2 399.1 1288.6 401.1 1292.9 403.3 1297.3 405.6 1301.6 408.1 1305.9 410.7 1310.2 413.5 1314.4 416.4 1318.6 419.4 1322.8 422.6 1326.9 425.9 1331.1 429.4 1335.1 433 1339.1 436.7 1343.1 440.6 1347.1 444.6 1350.9 448.7 1354.8 452.9 1358.5 457.2 1362.2 461.6 1365.9 466.2 1369.4 470.8 1372.9 475.5 1376.4 480.4 1379.7 485.3 1383 490.3 1386.1 495.3 1389.2 500.5 1392.2 505.7 1395.1 511 1397.9 516.3 1400.6 521.7 1403.2 527.1 1405.7 532.6 1408.1 538.1 1410.5 543.4 1412.8 548.7 1415 554 1417 559.3 1418.9 564.6 1420.7 569.9 1422.4 575.2 1423.9 580.4 1425.3 585.6 1426.6 590.7 1427.7 595.8 1428.7 600.8 1429.6 605.8 1430.3 610.7 1430.9 615.6 1431.3 620.3 1431.6 625 1431.8 629.6 1431.8 634.1 1431.7 638.5 1431.5 642.7 1431.2 646.9 1430.7 651 1430.1 654.9 1429.4 658.6 1428.5 662.3 1427.6 665.7 1426.5 669 1425.4 672.2 1424.2 675.1 1422.9 677.8 1421.5 680.3 1420.1 682.4" stroke="#0a0a0a" stroke-width="1.2"/><path d="M1212.9 442.1 1214.8 441.1 1216.8 440.1 1218.8 439.3 1221 438.5 1223.1 437.8 1225.4 437.3 1227.7 436.8 1230.2 436.5 1232.7 436.2 1235.2 436.1 1237.9 436 1240.6 436.1 1243.4 436.3 1246.3 436.6 1249.3 437.1 1252.3 437.7 1255.4 438.4 1258.6 439.2 1261.8 440.2 1265 441.3 1268.3 442.6 1271.7 444 1275.1 445.5 1278.5 447.1" stroke="#0a0a0a" stroke-width="1.2"/><g clip-path="url(#c15)"><g filter="url(#bl)"><path d="M1127.7 434.7 1148.7 424.7 1171.7 420 1195.4 420.6 1219.3 425.9 1242.8 435.4 1265.6 448.6 1287.3 465.2 1307.5 484.5 1326 506.1 1342.5 529.5" stroke="url(#s290)" stroke-width="6.1"/><path d="M1130 438.3 1150.1 428.7 1172 424.3 1194.9 424.8 1218 430 1240.9 439.2 1263.2 452.2 1284.5 468.4 1304.4 487.4 1322.7 508.8 1338.8 531.8" stroke="url(#s291)" stroke-width="4.3"/><path d="M1132.4 442 1151.4 432.9 1172.4 428.6 1194.4 429.1 1216.7 434.1 1239 443.1 1260.7 455.8 1281.6 471.7 1301.2 490.4 1319.2 511.4 1335.1 534.2" stroke="url(#s292)" stroke-width="6.2"/><path d="M1135.7 447 1153.3 438.6 1172.9 434.6 1193.6 435.1 1214.9 439.8 1236.3 448.5 1257.4 460.8 1277.7 476.3 1296.9 494.6 1314.5 515.1 1330.1 537.4" stroke="url(#s293)" stroke-width="7.6"/><path d="M1139.5 453 1155.6 445.3 1173.5 441.6 1192.7 442.1 1212.8 446.6 1233.2 454.8 1253.5 466.7 1273.1 481.6 1291.8 499.4 1308.9 519.4 1324.1 541.1" stroke="url(#s294)" stroke-width="8.3"/><path d="M1143.5 459.2 1157.9 452.3 1174.1 449 1191.8 449.4 1210.5 453.6 1229.9 461.5 1249.3 472.8 1268.3 487.3 1286.4 504.5 1303 523.9 1317.8 545.1" stroke="url(#s295)" stroke-width="8.3"/><path d="M1147.3 465.1 1160.1 459 1174.7 456 1190.9 456.4 1208.4 460.4 1226.8 467.8 1245.4 478.7 1263.7 492.6 1281.2 509.3 1297.4 528.3 1311.9 548.9" stroke="url(#s296)" stroke-width="7.6"/><path d="M1150.6 470.2 1162 464.7 1175.2 462 1190.1 462.4 1206.6 466.1 1224.1 473.2 1242 483.6 1259.8 497.2 1276.9 513.5 1292.7 531.9 1306.8 552.1" stroke="url(#s297)" stroke-width="6.2"/><path d="M1152.9 473.8 1163.4 468.8 1175.5 466.4 1189.6 466.7 1205.3 470.2 1222.2 477.1 1239.6 487.3 1257 500.5 1273.7 516.5 1289.2 534.6 1303.1 554.4" stroke="url(#s298)" stroke-width="4.3"/><path d="M1155.3 477.4 1164.7 472.9 1175.9 470.6 1189 471 1204 474.3 1220.3 480.9 1237.2 490.8 1254.2 503.8 1270.6 519.4 1285.9 537.2 1299.5 556.7" stroke="url(#s299)" stroke-width="6.1"/><path d="M1335.7 519.4 1349.5 541.3 1361.2 564.1 1370.5 587.2 1377.4 610.2 1381.6 632.9 1383 654.8 1381.4 675.7 1376.5 695.2 1367.9 712.8 1355.4 727.8 1339.2 738.7" stroke="url(#s300)" stroke-width="6.1"/><path d="M1332.2 521.8 1345.8 543.4 1357.3 565.9 1366.5 588.6 1373.2 611.3 1377.3 633.4 1378.7 654.8 1377.1 675 1372.4 693.7 1364.3 710.5 1352.5 724.6 1337.4 734.9" stroke="url(#s301)" stroke-width="4.3"/><path d="M1328.6 524.3 1342 545.6 1353.3 567.7 1362.4 590 1369 612.3 1373 634 1374.3 654.8 1372.8 674.3 1368.3 692.3 1360.6 708.2 1349.6 721.4 1335.5 730.9" stroke="url(#s302)" stroke-width="6.2"/><path d="M1323.7 527.7 1336.8 548.6 1347.9 570.2 1356.7 592 1363.2 613.7 1367.1 634.7 1368.3 654.8 1366.9 673.4 1362.7 690.3 1355.6 704.9 1345.5 716.9 1332.8 725.5" stroke="url(#s303)" stroke-width="7.6"/><path d="M1317.9 531.7 1330.7 552.1 1341.5 573.1 1350.1 594.4 1356.3 615.4 1360.1 635.6 1361.3 654.8 1359.9 672.3 1356 687.9 1349.6 701.1 1340.8 711.7 1329.8 719.2" stroke="url(#s304)" stroke-width="8.3"/><path d="M1311.8 535.9 1324.2 555.7 1334.7 576.2 1343.1 596.8 1349.1 617.1 1352.7 636.6 1353.9 654.7 1352.6 671.1 1349.1 685.4 1343.4 697.2 1335.8 706.2 1326.5 712.5" stroke="url(#s305)" stroke-width="8.3"/><path d="M1306 539.9 1318.1 559.2 1328.3 579.1 1336.4 599.1 1342.2 618.8 1345.7 637.5 1346.8 654.7 1345.7 670 1342.4 683 1337.4 693.4 1331.1 701 1323.4 706.2" stroke="url(#s306)" stroke-width="7.6"/><path d="M1301 543.3 1312.9 562.2 1322.8 581.6 1330.7 601.1 1336.4 620.2 1339.8 638.2 1340.8 654.7 1339.7 669.1 1336.8 681 1332.4 690.1 1327 696.6 1320.8 700.8" stroke="url(#s307)" stroke-width="6.2"/><path d="M1297.4 545.8 1309.1 564.3 1318.9 583.4 1326.6 602.6 1332.2 621.2 1335.4 638.8 1336.5 654.7 1335.4 668.4 1332.7 679.5 1328.7 687.8 1324.1 693.4 1318.9 696.8" stroke="url(#s308)" stroke-width="4.3"/><path d="M1293.9 548.2 1305.3 566.5 1315 585.2 1322.6 604 1328 622.2 1331.2 639.3 1332.2 654.7 1331.2 667.8 1328.6 678.1 1325.1 685.5 1321.2 690.2 1317.1 693" stroke="url(#s309)" stroke-width="6.1"/></g></g><path d="M1132.8 433.7 1136.9 431.5 1141.1 429.5 1145.3 427.8 1149.7 426.2 1154.1 424.9 1158.6 423.8 1163.2 422.9 1167.8 422.2 1172.4 421.7 1177.1 421.4 1181.8 421.4 1186.6 421.5 1191.3 421.9 1196 422.4 1200.8 423.2 1205.4 424.1 1209.9 425.3 1214.4 426.7 1218.8 428.2 1223.2 429.9 1227.6 431.7 1232 433.7 1236.4 435.9 1240.7 438.2 1245.1 440.7 1249.3 443.3 1253.6 446.1 1257.9 449 1262.1 452.1 1266.2 455.3 1270.4 458.6 1274.5 462 1278.6 465.6 1282.6 469.4 1286.6 473.2 1290.5 477.2 1294.4 481.3 1298.2 485.5 1302 489.8 1305.7 494.3 1309.3 498.8 1312.9 503.4 1316.4 508.2 1319.8 513 1323.1 517.9 1326.4 522.9 1329.6 528 1332.7 533.1 1335.7 538.3 1338.6 543.6 1341.4 548.9 1344.1 554.3 1346.7 559.8 1349.1 565.2 1351.5 570.7 1353.9 576 1356.2 581.4 1358.4 586.7 1360.5 592 1362.4 597.3 1364.2 602.5 1365.8 607.8 1367.4 613 1368.8 618.2 1370 623.3 1371.2 628.4 1372.2 633.5 1373 638.5 1373.7 643.4 1374.3 648.2 1374.8 653 1375.1 657.7 1375.2 662.2 1375.3 666.7 1375.2 671.1 1375 675.4 1374.6 679.6 1374.1 683.6 1373.5 687.5 1372.8 691.3 1372 694.9 1371 698.4 1370 701.7 1368.8 704.8 1367.6 707.7 1366.3 710.5 1364.9 712.9 1363.5 715.1" stroke="#0a0a0a" stroke-width="1.2"/><path d="M1156.3 474.7 1158.2 473.7 1160.2 472.7 1162.3 471.9 1164.4 471.1 1166.6 470.5 1168.8 469.9 1171.2 469.5 1173.6 469.1 1176.1 468.8 1178.7 468.7 1181.3 468.7 1184.1 468.8 1186.9 469 1189.8 469.3 1192.7 469.7 1195.8 470.3 1198.9 471 1202 471.9 1205.2 472.9 1208.5 474 1211.8 475.2 1215.1 476.6 1218.5 478.1 1221.9 479.8" stroke="#0a0a0a" stroke-width="1.2"/><g clip-path="url(#c16)"><g filter="url(#bl)"><path d="M1071.1 467.4 1090.1 458 1110.8 453.1 1132.4 452.5 1154.1 456.1 1175.6 463.2 1196.7 473.6 1217 486.9 1236.4 502.8 1254.5 520.9 1271.1 540.8 1285.9 562.2" stroke="url(#s310)" stroke-width="6.1"/><path d="M1073.5 471 1091.6 462 1111.4 457.3 1132.1 456.8 1153.1 460.2 1174 467.2 1194.6 477.3 1214.5 490.4 1233.5 506 1251.3 523.8 1267.7 543.4 1282.3 564.5" stroke="url(#s311)" stroke-width="4.3"/><path d="M1075.8 474.6 1093 466.1 1111.9 461.7 1131.7 461.2 1152 464.5 1172.3 471.2 1192.4 481.1 1211.9 493.9 1230.6 509.2 1248.1 526.7 1264.2 546.1 1278.6 566.8" stroke="url(#s312)" stroke-width="6.2"/><path d="M1079.1 479.7 1095.1 471.8 1112.7 467.6 1131.3 467.2 1150.6 470.3 1170 476.7 1189.4 486.3 1208.3 498.7 1226.5 513.7 1243.7 530.8 1259.4 549.7 1273.5 570" stroke="url(#s313)" stroke-width="7.6"/><path d="M1082.9 485.6 1097.4 478.4 1113.5 474.6 1130.8 474.2 1148.9 477.1 1167.3 483.3 1185.9 492.4 1204.2 504.4 1221.8 518.9 1238.4 535.5 1253.8 554 1267.5 573.8" stroke="url(#s314)" stroke-width="8.3"/><path d="M1086.9 491.8 1099.9 485.4 1114.5 482 1130.3 481.6 1147.1 484.3 1164.5 490.1 1182.2 498.9 1199.8 510.4 1216.8 524.4 1233 540.5 1247.9 558.4 1261.3 577.7" stroke="url(#s315)" stroke-width="8.3"/><path d="M1090.8 497.8 1102.3 492.1 1115.3 489 1129.8 488.6 1145.4 491.2 1161.8 496.6 1178.7 505 1195.6 516 1212.1 529.6 1227.7 545.3 1242.3 562.7 1255.3 581.5" stroke="url(#s316)" stroke-width="7.6"/><path d="M1094 502.8 1104.3 497.7 1116.1 494.9 1129.3 494.6 1143.9 497 1159.5 502.2 1175.7 510.2 1192 520.9 1208 534 1223.3 549.3 1237.5 566.3 1250.2 584.7" stroke="url(#s317)" stroke-width="6.2"/><path d="M1096.4 506.5 1105.8 501.8 1116.6 499.3 1129 499 1142.9 501.2 1157.8 506.2 1173.5 514 1189.4 524.4 1205.1 537.2 1220.1 552.2 1234 569 1246.6 587" stroke="url(#s318)" stroke-width="4.3"/><path d="M1098.7 510.1 1107.3 505.9 1117.2 503.5 1128.7 503.2 1141.8 505.4 1156.2 510.2 1171.4 517.7 1186.9 527.8 1202.2 540.4 1216.9 555.1 1230.6 571.6 1242.9 589.3" stroke="url(#s319)" stroke-width="6.1"/><path d="M1279.2 552 1294.2 576.2 1306.7 601.3 1316.3 626.8 1322.8 652 1326.1 676.6 1325.8 700.1 1321.8 722.1 1313.4 742.1 1300.3 759.1 1282.7 771.4" stroke="url(#s320)" stroke-width="6.1"/><path d="M1275.6 554.4 1290.5 578.3 1302.8 603 1312.2 628.1 1318.6 652.9 1321.8 676.9 1321.6 699.7 1317.6 720.9 1309.7 740 1297.3 756 1280.8 767.5" stroke="url(#s321)" stroke-width="4.3"/><path d="M1272.1 556.9 1286.7 580.4 1298.8 604.8 1308.1 629.4 1314.4 653.7 1317.5 677.2 1317.2 699.3 1313.5 719.7 1305.9 737.8 1294.3 752.8 1278.9 763.6" stroke="url(#s322)" stroke-width="6.2"/><path d="M1267.1 560.3 1281.4 583.3 1293.3 607.2 1302.3 631.2 1308.5 654.9 1311.5 677.6 1311.3 698.8 1307.7 718 1300.7 734.8 1290.1 748.5 1276.3 758.2" stroke="url(#s323)" stroke-width="7.6"/><path d="M1261.3 564.3 1275.3 586.8 1286.8 610 1295.6 633.3 1301.5 656.2 1304.4 678 1304.2 698.1 1300.9 716.1 1294.6 731.3 1285.2 743.4 1273.2 751.8" stroke="url(#s324)" stroke-width="8.3"/><path d="M1255.2 568.5 1268.8 590.4 1280 613 1288.6 635.6 1294.3 657.7 1297 678.5 1296.8 697.5 1293.8 714 1288.1 727.7 1280.1 738.1 1270 745.2" stroke="url(#s325)" stroke-width="8.3"/><path d="M1249.4 572.5 1262.6 593.8 1273.5 615.8 1281.8 637.7 1287.3 659 1290 678.9 1289.8 696.8 1287 712 1282 724.2 1275.2 733 1266.9 738.8" stroke="url(#s326)" stroke-width="7.6"/><path d="M1244.5 576 1257.4 596.7 1268 618.2 1276.1 639.6 1281.5 660.2 1284 679.3 1283.8 696.3 1281.3 710.4 1276.8 721.2 1271 728.7 1264.3 733.4" stroke="url(#s327)" stroke-width="6.2"/><path d="M1240.9 578.4 1253.6 598.9 1264 619.9 1272 640.9 1277.2 661 1279.7 679.6 1279.5 695.9 1277.1 709.1 1273 719 1268 725.5 1262.4 729.5" stroke="url(#s328)" stroke-width="4.3"/><path d="M1237.3 580.9 1249.8 601 1260.1 621.6 1267.9 642.2 1273 661.9 1275.4 679.9 1275.2 695.5 1273 707.9 1269.3 716.9 1265 722.4 1260.5 725.6" stroke="url(#s329)" stroke-width="6.1"/></g></g><path d="M1076.3 466.3 1080.3 464.1 1084.5 462.2 1088.8 460.4 1093.1 458.8 1097.6 457.5 1102.1 456.4 1106.6 455.5 1111.2 454.8 1115.9 454.3 1120.6 454.1 1125.3 454 1130 454.2 1134.7 454.5 1139.5 455.1 1144.2 455.8 1148.9 456.7 1153.4 457.9 1157.8 459.3 1162.3 460.8 1166.7 462.5 1171.1 464.4 1175.5 466.4 1179.8 468.5 1184.2 470.9 1188.5 473.3 1192.8 476 1197.1 478.7 1201.3 481.6 1205.5 484.7 1209.7 487.9 1213.8 491.2 1217.9 494.7 1222 498.3 1226 502 1230 505.9 1233.9 509.8 1237.8 513.9 1241.6 518.1 1245.4 522.5 1249.1 526.9 1252.7 531.4 1256.3 536.1 1259.8 540.8 1263.2 545.6 1266.6 550.5 1269.8 555.5 1273 560.6 1276.1 565.8 1279.1 571 1282 576.3 1284.8 581.6 1287.5 587 1290.1 592.4 1292.6 597.9 1294.9 603.3 1297.4 608.7 1299.7 614 1301.8 619.3 1303.9 624.6 1305.8 629.9 1307.6 635.2 1309.3 640.4 1310.8 645.7 1312.2 650.8 1313.5 656 1314.6 661.1 1315.6 666.1 1316.5 671.1 1317.2 676 1317.8 680.9 1318.2 685.6 1318.5 690.3 1318.7 694.9 1318.7 699.4 1318.6 703.8 1318.4 708 1318.1 712.2 1317.6 716.2 1317 720.1 1316.2 723.9 1315.4 727.5 1314.5 731 1313.4 734.3 1312.3 737.4 1311 740.4 1309.7 743.1 1308.4 745.5 1307 747.7" stroke="#0a0a0a" stroke-width="1.2"/><path d="M1099.7 507.4 1101.7 506.3 1103.7 505.4 1105.7 504.5 1107.8 503.8 1110 503.1 1112.3 502.6 1114.6 502.1 1117 501.7 1119.5 501.5 1122.1 501.3 1124.8 501.3 1127.5 501.4 1130.3 501.6 1133.2 501.9 1136.2 502.4 1139.2 503 1142.3 503.7 1145.4 504.5 1148.7 505.5 1151.9 506.6 1155.2 507.9 1158.6 509.2 1161.9 510.8 1165.3 512.4" stroke="#0a0a0a" stroke-width="1.2"/><g clip-path="url(#c17)"><g filter="url(#bl)"><path d="M1014.6 500 1035.6 489.9 1058.5 485.3 1082.3 485.8 1106.2 491.1 1129.7 500.7 1152.5 513.9 1174.1 530.4 1194.4 549.8 1212.9 571.4 1229.3 594.8" stroke="url(#s330)" stroke-width="6.1"/><path d="M1016.9 503.6 1036.9 494 1058.9 489.5 1081.8 490.1 1104.9 495.2 1127.8 504.5 1150.1 517.5 1171.3 533.7 1191.3 552.7 1209.5 574 1225.7 597.1" stroke="url(#s331)" stroke-width="4.3"/><path d="M1019.3 507.3 1038.3 498.2 1059.3 493.9 1081.2 494.4 1103.6 499.4 1125.9 508.4 1147.6 521.1 1168.5 537 1188.1 555.7 1206.1 576.7 1222 599.4" stroke="url(#s332)" stroke-width="6.2"/><path d="M1022.5 512.3 1040.2 503.8 1059.8 499.9 1080.5 500.4 1101.8 505.1 1123.2 513.8 1144.3 526.1 1164.6 541.6 1183.8 559.8 1201.3 580.4 1216.9 602.6" stroke="url(#s333)" stroke-width="7.6"/><path d="M1026.4 518.2 1042.4 510.5 1060.4 506.9 1079.6 507.4 1099.7 511.8 1120.1 520.1 1140.3 531.9 1160 546.9 1178.6 564.7 1195.8 584.7 1211 606.4" stroke="url(#s334)" stroke-width="8.3"/><path d="M1030.4 524.5 1044.8 517.6 1061 514.3 1078.7 514.7 1097.4 518.9 1116.8 526.8 1136.2 538.1 1155.2 552.6 1173.3 569.8 1189.9 589.2 1204.7 610.4" stroke="url(#s335)" stroke-width="8.3"/><path d="M1034.2 530.4 1047 524.3 1061.6 521.3 1077.8 521.7 1095.3 525.6 1113.6 533.1 1132.3 543.9 1150.6 557.9 1168.1 574.6 1184.3 593.5 1198.7 614.1" stroke="url(#s336)" stroke-width="7.6"/><path d="M1037.5 535.4 1048.9 530 1062.1 527.3 1077 527.7 1093.5 531.4 1111 538.5 1128.9 548.9 1146.7 562.5 1163.8 578.7 1179.6 597.2 1193.7 617.3" stroke="url(#s337)" stroke-width="6.2"/><path d="M1039.8 539.1 1050.3 534.1 1062.4 531.6 1076.5 532 1092.2 535.5 1109.1 542.4 1126.5 552.5 1143.9 565.8 1160.6 581.7 1176.1 599.9 1190 619.7" stroke="url(#s338)" stroke-width="4.3"/><path d="M1042.2 542.7 1051.6 538.2 1062.8 535.9 1075.9 536.3 1090.9 539.6 1107.1 546.2 1124.1 556.1 1141.1 569 1157.5 584.7 1172.7 602.5 1186.4 622" stroke="url(#s339)" stroke-width="6.1"/><path d="M1222.6 584.7 1236.4 606.6 1248.1 629.3 1257.4 652.5 1264.3 675.5 1268.5 698.2 1269.9 720.1 1268.3 741 1263.4 760.4 1254.8 778.1 1242.3 793 1226.1 804" stroke="url(#s340)" stroke-width="6.1"/><path d="M1219.1 587.1 1232.7 608.7 1244.2 631.1 1253.4 653.9 1260.1 676.5 1264.2 698.7 1265.6 720.1 1264 740.3 1259.3 759 1251.2 775.8 1239.4 789.9 1224.3 800.1" stroke="url(#s341)" stroke-width="4.3"/><path d="M1215.5 589.6 1228.9 610.9 1240.2 632.9 1249.3 655.3 1255.9 677.6 1259.9 699.3 1261.2 720.1 1259.7 739.6 1255.2 757.5 1247.5 773.4 1236.5 786.6 1222.3 796.2" stroke="url(#s342)" stroke-width="6.2"/><path d="M1210.6 593 1223.7 613.8 1234.7 635.4 1243.6 657.3 1250 679 1253.9 700 1255.2 720.1 1253.8 738.7 1249.6 755.5 1242.5 770.2 1232.4 782.2 1219.7 790.8" stroke="url(#s343)" stroke-width="7.6"/><path d="M1204.7 597 1217.5 617.3 1228.3 638.4 1236.9 659.6 1243.2 680.6 1246.9 700.9 1248.2 720 1246.8 737.6 1242.9 753.2 1236.5 766.4 1227.7 777 1216.6 784.5" stroke="url(#s344)" stroke-width="8.3"/><path d="M1198.6 601.2 1211.1 621 1221.6 641.5 1229.9 662.1 1236 682.4 1239.6 701.8 1240.8 720 1239.5 736.4 1235.9 750.7 1230.3 762.4 1222.7 771.5 1213.4 777.8" stroke="url(#s345)" stroke-width="8.3"/><path d="M1192.8 605.2 1205 624.5 1215.2 644.4 1223.3 664.4 1229.1 684 1232.6 702.7 1233.7 720 1232.5 735.3 1229.3 748.3 1224.3 758.6 1217.9 766.3 1210.3 771.4" stroke="url(#s346)" stroke-width="7.6"/><path d="M1187.9 608.6 1199.7 627.5 1209.7 646.9 1217.6 666.4 1223.3 685.5 1226.6 703.5 1227.7 720 1226.6 734.4 1223.6 746.3 1219.3 755.4 1213.9 761.9 1207.7 766" stroke="url(#s347)" stroke-width="6.2"/><path d="M1184.3 611.1 1196 629.6 1205.8 648.7 1213.5 667.9 1219 686.5 1222.3 704 1223.3 720 1222.3 733.7 1219.5 744.8 1215.6 753.1 1211 758.6 1205.8 762.1" stroke="url(#s348)" stroke-width="4.3"/><path d="M1180.8 613.5 1192.2 631.7 1201.9 650.5 1209.5 669.3 1214.9 687.5 1218.1 704.6 1219 719.9 1218.1 733 1215.5 743.4 1212 750.8 1208.1 755.5 1203.9 758.3" stroke="url(#s349)" stroke-width="6.1"/></g></g><path d="M1019.7 499 1023.6 496.9 1027.6 495 1031.7 493.2 1035.9 491.7 1040.1 490.4 1044.4 489.3 1048.8 488.4 1053.2 487.7 1057.6 487.1 1062.1 486.8 1066.6 486.7 1071.1 486.7 1075.7 487 1080.2 487.4 1084.8 488 1089.4 488.7 1093.7 489.7 1098 490.9 1102.3 492.3 1106.5 493.8 1110.8 495.4 1115 497.2 1119.2 499.2 1123.4 501.3 1127.6 503.5 1131.7 505.9 1135.8 508.4 1139.9 511 1144 513.8 1148.1 516.7 1152.1 519.7 1156.1 522.9 1160 526.2 1163.9 529.6 1167.8 533.1 1171.6 536.7 1175.4 540.5 1179.2 544.4 1182.9 548.3 1186.5 552.4 1190.1 556.6 1193.7 560.9 1197.1 565.3 1200.5 569.8 1203.9 574.3 1207.2 579 1210.4 583.7 1213.5 588.5 1216.5 593.4 1219.5 598.3 1222.4 603.3 1225.2 608.4 1227.9 613.5 1230.5 618.6 1233 623.8 1235.4 629.1 1237.7 634.3 1240 639.5 1242.2 644.6 1244.4 649.7 1246.4 654.8 1248.3 659.9 1250.1 664.9 1251.8 670 1253.3 675 1254.7 680 1256 685 1257.2 689.9 1258.3 694.8 1259.2 699.6 1260 704.4 1260.7 709.1 1261.2 713.7 1261.6 718.3 1261.9 722.8 1262.1 727.2 1262.2 731.5 1262.1 735.7 1261.9 739.9 1261.6 743.9 1261.2 747.8 1260.6 751.6 1260 755.2 1259.2 758.8 1258.3 762.2 1257.4 765.4 1256.3 768.5 1255.2 771.4 1254 774.1 1252.7 776.7 1251.4 778.9" stroke="#0a0a0a" stroke-width="1.2"/><path d="M1043.2 540 1045 539 1046.9 538.1 1048.9 537.3 1050.9 536.5 1053 535.9 1055.2 535.3 1057.4 534.9 1059.7 534.5 1062.1 534.2 1064.5 534 1067 533.9 1069.6 534 1072.3 534.1 1075 534.4 1077.8 534.7 1080.7 535.2 1083.6 535.8 1086.6 536.5 1089.6 537.4 1092.7 538.3 1095.8 539.4 1099 540.6 1102.2 542 1105.5 543.4 1108.8 545" stroke="#0a0a0a" stroke-width="1.2"/><g clip-path="url(#c18)"><g filter="url(#bl)"><path d="M958 532.7 979 522.6 1002 517.9 1025.8 518.5 1049.6 523.8 1073.1 533.3 1095.9 546.6 1117.6 563.1 1137.9 582.4 1156.4 604 1172.8 627.5" stroke="url(#s350)" stroke-width="6.1"/><path d="M960.3 536.3 980.4 526.7 1002.3 522.2 1025.2 522.7 1048.3 527.9 1071.2 537.2 1093.5 550.1 1114.8 566.3 1134.7 585.4 1153 606.7 1169.1 629.8" stroke="url(#s351)" stroke-width="4.3"/><path d="M962.7 539.9 981.8 530.8 1002.7 526.5 1024.7 527.1 1047 532 1069.3 541.1 1091.1 553.7 1112 569.6 1131.6 588.3 1149.5 609.3 1165.5 632.1" stroke="url(#s352)" stroke-width="6.2"/><path d="M966 545 983.6 536.5 1003.2 532.5 1023.9 533 1045.2 537.8 1066.6 546.4 1087.7 558.7 1108.1 574.2 1127.2 592.5 1144.8 613 1160.4 635.3" stroke="url(#s353)" stroke-width="7.6"/><path d="M969.8 550.9 985.9 543.2 1003.8 539.5 1023 540 1043.1 544.5 1063.5 552.8 1083.8 564.6 1103.5 579.6 1122.1 597.3 1139.2 617.3 1154.4 639.1" stroke="url(#s354)" stroke-width="8.3"/><path d="M973.8 557.1 988.2 550.2 1004.4 546.9 1022.1 547.4 1040.9 551.5 1060.2 559.4 1079.6 570.7 1098.6 585.2 1116.7 602.4 1133.3 621.9 1148.2 643" stroke="url(#s355)" stroke-width="8.3"/><path d="M977.6 563 990.4 556.9 1005 554 1021.2 554.4 1038.7 558.3 1057.1 565.7 1075.7 576.6 1094.1 590.6 1111.6 607.3 1127.8 626.2 1142.2 646.8" stroke="url(#s356)" stroke-width="7.6"/><path d="M980.9 568.1 992.3 562.6 1005.5 559.9 1020.5 560.3 1036.9 564 1054.4 571.1 1072.4 581.6 1090.2 595.1 1107.2 611.4 1123 629.9 1137.1 650" stroke="url(#s357)" stroke-width="6.2"/><path d="M983.3 571.7 993.7 566.7 1005.9 564.3 1019.9 564.6 1035.6 568.2 1052.5 575 1069.9 585.2 1087.3 598.4 1104 614.4 1119.6 632.5 1133.4 652.3" stroke="url(#s358)" stroke-width="4.3"/><path d="M985.6 575.4 995.1 570.8 1006.2 568.6 1019.4 568.9 1034.3 572.2 1050.6 578.9 1067.5 588.7 1084.5 601.7 1100.9 617.3 1116.2 635.2 1129.8 654.6" stroke="url(#s359)" stroke-width="6.1"/><path d="M1166.1 617.3 1179.8 639.2 1191.5 662 1200.9 685.1 1207.7 708.2 1211.9 730.8 1213.3 752.7 1211.7 773.6 1206.8 793.1 1198.2 810.7 1185.7 825.7 1169.6 836.6" stroke="url(#s360)" stroke-width="6.1"/><path d="M1162.5 619.7 1176.1 641.4 1187.6 663.8 1196.8 686.5 1203.5 709.2 1207.7 731.4 1209 752.7 1207.5 772.9 1202.8 791.6 1194.6 808.4 1182.8 822.5 1167.7 832.8" stroke="url(#s361)" stroke-width="4.3"/><path d="M1158.9 622.2 1172.3 643.5 1183.6 665.6 1192.7 688 1199.3 710.2 1203.3 731.9 1204.7 752.7 1203.2 772.2 1198.7 790.2 1191 806.1 1179.9 819.3 1165.8 828.8" stroke="url(#s362)" stroke-width="6.2"/><path d="M1154 625.6 1167.1 646.5 1178.2 668.1 1187 689.9 1193.5 711.6 1197.4 732.7 1198.7 752.7 1197.2 771.3 1193 788.2 1185.9 802.9 1175.9 814.8 1163.2 823.4" stroke="url(#s363)" stroke-width="7.6"/><path d="M1148.2 629.6 1161 650 1171.8 671 1180.4 692.3 1186.6 713.3 1190.4 733.6 1191.6 752.7 1190.3 770.2 1186.4 785.8 1180 799.1 1171.1 809.6 1160.1 817.1" stroke="url(#s364)" stroke-width="8.3"/><path d="M1142.1 633.8 1154.5 653.6 1165 674.1 1173.4 694.7 1179.4 715 1183 734.5 1184.2 752.6 1182.9 769.1 1179.4 783.3 1173.7 795.1 1166.1 804.1 1156.8 810.4" stroke="url(#s365)" stroke-width="8.3"/><path d="M1136.3 637.8 1148.4 657.1 1158.6 677 1166.7 697.1 1172.6 716.7 1176 735.4 1177.1 752.6 1176 768 1172.7 780.9 1167.8 791.3 1161.4 798.9 1153.8 804.1" stroke="url(#s366)" stroke-width="7.6"/><path d="M1131.3 641.2 1143.2 660.1 1153.2 679.5 1161.1 699.1 1166.7 718.1 1170.1 736.1 1171.1 752.6 1170 767 1167.1 778.9 1162.7 788.1 1157.3 794.5 1151.1 798.7" stroke="url(#s367)" stroke-width="6.2"/><path d="M1127.7 643.7 1139.4 662.3 1149.2 681.4 1156.9 700.5 1162.5 719.1 1165.7 736.7 1166.8 752.6 1165.7 766.3 1163 777.5 1159 785.7 1154.4 791.3 1149.2 794.8" stroke="url(#s368)" stroke-width="4.3"/><path d="M1124.2 646.1 1135.7 664.4 1145.3 683.1 1152.9 701.9 1158.3 720.1 1161.5 737.2 1162.5 752.6 1161.5 765.7 1158.9 776 1155.4 783.4 1151.5 788.1 1147.4 790.9" stroke="url(#s369)" stroke-width="6.1"/></g></g><path d="M963.2 531.6 967 529.5 971 527.6 975.1 525.9 979.3 524.4 983.5 523 987.8 521.9 992.2 521 996.6 520.3 1001.1 519.8 1005.5 519.4 1010 519.3 1014.6 519.4 1019.1 519.6 1023.7 520 1028.2 520.6 1032.8 521.4 1037.2 522.4 1041.5 523.6 1045.7 524.9 1050 526.4 1054.2 528.1 1058.4 529.9 1062.7 531.8 1066.8 533.9 1071 536.1 1075.2 538.5 1079.3 541 1083.4 543.6 1087.5 546.4 1091.5 549.3 1095.5 552.3 1099.5 555.5 1103.4 558.8 1107.4 562.2 1111.2 565.7 1115.1 569.4 1118.9 573.1 1122.6 577 1126.3 581 1130 585.1 1133.6 589.3 1137.1 593.5 1140.6 597.9 1144 602.4 1147.3 607 1150.6 611.6 1153.8 616.3 1156.9 621.1 1160 626 1162.9 630.9 1165.8 635.9 1168.6 641 1171.3 646.1 1173.9 651.3 1176.4 656.5 1178.8 661.7 1181.1 667 1183.4 672.1 1185.7 677.2 1187.8 682.3 1189.8 687.4 1191.7 692.5 1193.5 697.6 1195.2 702.6 1196.8 707.7 1198.2 712.7 1199.5 717.6 1200.7 722.6 1201.7 727.4 1202.6 732.3 1203.4 737 1204.1 741.7 1204.7 746.4 1205.1 750.9 1205.4 755.4 1205.6 759.8 1205.6 764.1 1205.5 768.4 1205.3 772.5 1205 776.5 1204.6 780.4 1204.1 784.2 1203.4 787.9 1202.6 791.4 1201.8 794.8 1200.8 798.1 1199.8 801.1 1198.6 804.1 1197.4 806.8 1196.1 809.3 1194.8 811.6" stroke="#0a0a0a" stroke-width="1.2"/><path d="M986.6 572.7 988.5 571.7 990.4 570.7 992.3 569.9 994.4 569.2 996.5 568.5 998.6 568 1000.8 567.5 1003.1 567.1 1005.5 566.8 1007.9 566.7 1010.5 566.6 1013.1 566.6 1015.7 566.8 1018.5 567 1021.3 567.4 1024.1 567.8 1027 568.4 1030 569.2 1033.1 570 1036.2 571 1039.3 572.1 1042.5 573.3 1045.7 574.6 1048.9 576.1 1052.2 577.7" stroke="#0a0a0a" stroke-width="1.2"/><g clip-path="url(#c19)"><g filter="url(#bl)"><path d="M901.5 565.3 922.5 555.2 945.4 550.6 969.2 551.1 993.1 556.4 1016.6 565.9 1039.3 579.2 1061 595.7 1081.3 615 1099.8 636.7 1116.2 660.1" stroke="url(#s370)" stroke-width="6.1"/><path d="M903.8 568.9 923.8 559.3 945.8 554.8 968.7 555.4 991.8 560.5 1014.7 569.8 1036.9 582.8 1058.2 599 1078.2 618 1096.4 639.3 1112.6 662.4" stroke="url(#s371)" stroke-width="4.3"/><path d="M906.2 572.6 925.2 563.4 946.1 559.2 968.1 559.7 990.5 564.7 1012.7 573.7 1034.5 586.4 1055.4 602.3 1075 621 1093 642 1108.9 664.7" stroke="url(#s372)" stroke-width="6.2"/><path d="M909.4 577.6 927.1 569.1 946.6 565.1 967.4 565.6 988.7 570.4 1010.1 579.1 1031.2 591.4 1051.5 606.8 1070.6 625.1 1088.2 645.6 1103.8 667.9" stroke="url(#s373)" stroke-width="7.6"/><path d="M913.2 583.5 929.3 575.8 947.2 572.2 966.5 572.6 986.5 577.1 1006.9 585.4 1027.2 597.2 1046.9 612.2 1065.5 630 1082.6 650 1097.9 671.7" stroke="url(#s374)" stroke-width="8.3"/><path d="M917.3 589.8 931.7 582.9 947.9 579.6 965.5 580 984.3 584.2 1003.7 592 1023.1 603.4 1042.1 617.8 1060.1 635 1076.8 654.5 1091.6 675.7" stroke="url(#s375)" stroke-width="8.3"/><path d="M921.1 595.7 933.9 589.5 948.4 586.6 964.6 587 982.2 590.9 1000.5 598.4 1019.2 609.2 1037.5 623.2 1055 639.9 1071.2 658.8 1085.6 679.4" stroke="url(#s376)" stroke-width="7.6"/><path d="M924.3 600.7 935.8 595.2 948.9 592.6 963.9 593 980.4 596.6 997.9 603.7 1015.8 614.2 1033.6 627.8 1050.6 644 1066.5 662.5 1080.6 682.6" stroke="url(#s377)" stroke-width="6.2"/><path d="M926.7 604.4 937.2 599.4 949.3 596.9 963.3 597.3 979 600.8 995.9 607.6 1013.4 617.8 1030.8 631.1 1047.5 647 1063 665.2 1076.9 685" stroke="url(#s378)" stroke-width="4.3"/><path d="M929 608 938.5 603.4 949.7 601.2 962.8 601.5 977.8 604.9 994 611.5 1011 621.4 1028 634.3 1044.4 650 1059.6 667.8 1073.2 687.2" stroke="url(#s379)" stroke-width="6.1"/><path d="M1109.5 649.9 1123.3 671.9 1134.9 694.6 1144.3 717.7 1151.2 740.8 1155.4 763.5 1156.8 785.4 1155.1 806.2 1150.3 825.7 1141.7 843.4 1129.2 858.3 1113 869.3" stroke="url(#s380)" stroke-width="6.1"/><path d="M1106 652.4 1119.6 674 1131 696.4 1140.2 719.2 1147 741.8 1151.1 764 1152.5 785.4 1150.9 805.6 1146.2 824.3 1138.1 841.1 1126.3 855.1 1111.1 865.4" stroke="url(#s381)" stroke-width="4.3"/><path d="M1102.4 654.8 1115.8 676.2 1127.1 698.2 1136.1 720.6 1142.7 742.8 1146.8 764.6 1148.1 785.3 1146.6 804.9 1142.1 822.8 1134.4 838.7 1123.3 851.9 1109.2 861.5" stroke="url(#s382)" stroke-width="6.2"/><path d="M1097.4 658.2 1110.5 679.1 1121.6 700.7 1130.5 722.6 1136.9 744.3 1140.8 765.3 1142.1 785.3 1140.7 804 1136.5 820.8 1129.3 835.5 1119.3 847.5 1106.6 856.1" stroke="url(#s383)" stroke-width="7.6"/><path d="M1091.6 662.3 1104.4 682.6 1115.2 703.7 1123.8 724.9 1130.1 745.9 1133.8 766.2 1135 785.3 1133.7 802.9 1129.8 818.4 1123.4 831.7 1114.6 842.3 1103.5 849.7" stroke="url(#s384)" stroke-width="8.3"/><path d="M1085.5 666.5 1098 686.3 1108.5 706.7 1116.8 727.4 1122.8 747.7 1126.5 767.1 1127.6 785.3 1126.4 801.7 1122.8 815.9 1117.1 827.7 1109.6 836.8 1100.3 843.1" stroke="url(#s385)" stroke-width="8.3"/><path d="M1079.7 670.5 1091.8 689.8 1102.1 709.7 1110.2 729.7 1116 749.3 1119.5 768 1120.6 785.3 1119.4 800.6 1116.2 813.6 1111.2 823.9 1104.8 831.6 1097.2 836.7" stroke="url(#s386)" stroke-width="7.6"/><path d="M1074.8 673.9 1086.6 692.7 1096.6 712.2 1104.5 731.7 1110.2 750.7 1113.5 768.8 1114.6 785.2 1113.5 799.7 1110.5 811.6 1106.1 820.7 1100.8 827.1 1094.6 831.3" stroke="url(#s387)" stroke-width="6.2"/><path d="M1071.2 676.3 1082.8 694.9 1092.6 714 1100.4 733.1 1105.9 751.8 1109.2 769.3 1110.2 785.2 1109.2 799 1106.4 810.1 1102.5 818.3 1097.8 823.9 1092.7 827.4" stroke="url(#s388)" stroke-width="4.3"/><path d="M1067.7 678.8 1079.1 697 1088.7 715.8 1096.3 734.6 1101.8 752.8 1104.9 769.8 1105.9 785.2 1104.9 798.3 1102.4 808.7 1098.8 816 1095 820.7 1090.8 823.5" stroke="url(#s389)" stroke-width="6.1"/></g></g><path d="M906.6 564.2 910.5 562.1 914.5 560.2 918.6 558.5 922.7 557 927 555.7 931.3 554.6 935.6 553.7 940 552.9 944.5 552.4 949 552.1 953.5 551.9 958 552 962.6 552.2 967.1 552.7 971.7 553.2 976.2 554 980.6 555 984.9 556.2 989.2 557.6 993.4 559.1 997.7 560.7 1001.9 562.5 1006.1 564.4 1010.3 566.5 1014.4 568.8 1018.6 571.1 1022.7 573.6 1026.8 576.3 1030.9 579 1034.9 582 1039 585 1042.9 588.1 1046.9 591.4 1050.8 594.8 1054.7 598.4 1058.5 602 1062.3 605.8 1066.1 609.6 1069.8 613.6 1073.4 617.7 1077 621.9 1080.5 626.2 1084 630.6 1087.4 635 1090.8 639.6 1094 644.2 1097.2 649 1100.4 653.8 1103.4 658.6 1106.4 663.6 1109.2 668.6 1112 673.6 1114.7 678.7 1117.3 683.9 1119.8 689.1 1122.3 694.3 1124.6 699.6 1126.9 704.8 1129.1 709.9 1131.3 715 1133.3 720.1 1135.2 725.2 1137 730.2 1138.6 735.3 1140.2 740.3 1141.6 745.3 1142.9 750.3 1144.1 755.2 1145.1 760.1 1146.1 764.9 1146.9 769.7 1147.5 774.4 1148.1 779 1148.5 783.6 1148.8 788.1 1149 792.5 1149 796.8 1149 801 1148.8 805.1 1148.5 809.2 1148 813.1 1147.5 816.8 1146.8 820.5 1146.1 824 1145.2 827.4 1144.2 830.7 1143.2 833.8 1142.1 836.7 1140.8 839.4 1139.6 841.9 1138.3 844.2" stroke="#0a0a0a" stroke-width="1.2"/><path d="M930.1 605.3 931.9 604.3 933.8 603.4 935.8 602.6 937.8 601.8 939.9 601.2 942.1 600.6 944.3 600.1 946.6 599.8 948.9 599.5 951.4 599.3 953.9 599.2 956.5 599.3 959.2 599.4 961.9 599.6 964.7 600 967.6 600.5 970.5 601.1 973.5 601.8 976.5 602.6 979.6 603.6 982.7 604.7 985.9 605.9 989.1 607.3 992.4 608.7 995.6 610.3" stroke="#0a0a0a" stroke-width="1.2"/><g clip-path="url(#c20)"><g filter="url(#bl)"><path d="M844.9 597.9 863.9 588.6 884.6 583.6 906.1 583.1 927.9 586.6 949.4 593.8 970.5 604.2 990.8 617.5 1010.1 633.4 1028.2 651.5 1044.8 671.4 1059.7 692.7" stroke="url(#s390)" stroke-width="6.1"/><path d="M847.2 601.5 865.3 592.6 885.1 587.9 905.8 587.4 926.8 590.8 947.8 597.7 968.3 607.9 988.3 620.9 1007.3 636.5 1025.1 654.4 1041.4 674 1056 695" stroke="url(#s391)" stroke-width="4.3"/><path d="M849.6 605.2 866.8 596.7 885.7 592.2 905.5 591.7 925.8 595 946.1 601.8 966.2 611.7 985.7 624.4 1004.3 639.8 1021.8 657.3 1037.9 676.6 1052.3 697.4" stroke="url(#s392)" stroke-width="6.2"/><path d="M852.9 610.2 868.8 602.4 886.4 598.2 905.1 597.7 924.3 600.8 943.8 607.3 963.2 616.9 982.1 629.3 1000.3 644.2 1017.4 661.3 1033.2 680.3 1047.3 700.6" stroke="url(#s393)" stroke-width="7.6"/><path d="M856.7 616.2 871.2 609 887.3 605.2 904.6 604.8 922.6 607.7 941.1 613.8 959.6 623 977.9 635 995.5 649.4 1012.2 666.1 1027.6 684.5 1041.3 704.3" stroke="url(#s394)" stroke-width="8.3"/><path d="M860.7 622.4 873.7 616 888.2 612.5 904 612.2 920.8 614.9 938.3 620.7 956 629.4 973.5 640.9 990.6 654.9 1006.7 671.1 1021.6 689 1035 708.3" stroke="url(#s395)" stroke-width="8.3"/><path d="M864.5 628.3 876.1 622.6 889.1 619.5 903.5 619.2 919.1 621.7 935.6 627.2 952.4 635.5 969.3 646.6 985.8 660.1 1001.5 675.8 1016 693.3 1029.1 712.1" stroke="url(#s396)" stroke-width="7.6"/><path d="M867.8 633.4 878.1 628.3 889.9 625.5 903.1 625.2 917.7 627.5 933.3 632.7 949.4 640.7 965.8 651.4 981.8 664.6 997.1 679.9 1011.3 696.9 1024 715.3" stroke="url(#s397)" stroke-width="6.2"/><path d="M870.1 637 879.6 632.4 890.4 629.8 902.8 629.5 916.6 631.8 931.6 636.8 947.3 644.5 963.2 654.9 978.8 667.8 993.8 682.8 1007.8 699.5 1020.3 717.6" stroke="url(#s398)" stroke-width="4.3"/><path d="M872.5 640.6 881 636.4 890.9 634.1 902.5 633.8 915.6 635.9 929.9 640.7 945.1 648.2 960.6 658.4 976 671 990.7 685.7 1004.4 702.1 1016.7 719.9" stroke="url(#s399)" stroke-width="6.1"/><path d="M1052.9 682.6 1066.7 704.5 1078.4 727.3 1087.7 750.4 1094.6 773.4 1098.8 796.1 1100.2 818 1098.6 838.9 1093.7 858.4 1085.1 876 1072.6 891 1056.4 901.9" stroke="url(#s400)" stroke-width="6.1"/><path d="M1049.4 685 1063 706.6 1074.5 729 1083.7 751.8 1090.4 774.5 1094.5 796.6 1095.9 818 1094.3 838.2 1089.6 856.9 1081.5 873.7 1069.7 887.8 1054.6 898" stroke="url(#s401)" stroke-width="4.3"/><path d="M1045.8 687.5 1059.2 708.8 1070.5 730.9 1079.6 753.2 1086.2 775.5 1090.2 797.2 1091.5 818 1090 837.5 1085.5 855.5 1077.8 871.4 1066.8 884.6 1052.7 894.1" stroke="url(#s402)" stroke-width="6.2"/><path d="M1040.9 690.9 1054 711.8 1065.1 733.4 1073.9 755.2 1080.4 776.9 1084.3 797.9 1085.5 818 1084.1 836.6 1079.9 853.4 1072.8 868.1 1062.7 880.1 1050 888.7" stroke="url(#s403)" stroke-width="7.6"/><path d="M1035.1 694.9 1047.9 715.3 1058.7 736.3 1067.3 757.6 1073.5 778.6 1077.3 798.8 1078.5 817.9 1077.1 835.5 1073.2 851.1 1066.8 864.3 1058 874.9 1047 882.4" stroke="url(#s404)" stroke-width="8.3"/><path d="M1029 699.1 1041.4 718.9 1051.9 739.4 1060.3 760 1066.3 780.3 1069.9 799.8 1071.1 817.9 1069.8 834.3 1066.3 848.6 1060.6 860.4 1053 869.4 1043.7 875.7" stroke="url(#s405)" stroke-width="8.3"/><path d="M1023.2 703.1 1035.3 722.4 1045.5 742.3 1053.6 762.3 1059.4 782 1062.9 800.6 1064 817.9 1062.9 833.2 1059.6 846.2 1054.6 856.6 1048.3 864.2 1040.6 869.4" stroke="url(#s406)" stroke-width="7.6"/><path d="M1018.2 706.5 1030.1 725.4 1040 744.8 1047.9 764.3 1053.6 783.4 1057 801.4 1058 817.9 1056.9 832.3 1054 844.2 1049.6 853.3 1044.2 859.8 1038 864" stroke="url(#s407)" stroke-width="6.2"/><path d="M1014.6 709 1026.3 727.5 1036.1 746.6 1043.8 765.8 1049.4 784.4 1052.6 801.9 1053.7 817.9 1052.6 831.6 1049.9 842.7 1045.9 851 1041.3 856.5 1036.1 860" stroke="url(#s408)" stroke-width="4.3"/><path d="M1011.1 711.4 1022.5 729.7 1032.2 748.4 1039.8 767.2 1045.2 785.4 1048.4 802.5 1049.4 817.9 1048.4 831 1045.8 841.3 1042.3 848.7 1038.4 853.4 1034.3 856.2" stroke="url(#s409)" stroke-width="6.1"/></g></g><path d="M850 596.9 853.9 594.8 857.9 592.9 862 591.2 866.2 589.6 870.4 588.3 874.7 587.2 879.1 586.3 883.5 585.6 887.9 585.1 892.4 584.7 896.9 584.6 901.5 584.6 906 584.9 910.6 585.3 915.1 585.9 919.7 586.6 924 587.7 928.3 588.8 932.6 590.2 936.9 591.7 941.1 593.3 945.3 595.1 949.5 597.1 953.7 599.2 957.9 601.4 962 603.8 966.2 606.3 970.3 608.9 974.3 611.7 978.4 614.6 982.4 617.6 986.4 620.8 990.3 624.1 994.2 627.5 998.1 631 1002 634.7 1005.8 638.4 1009.5 642.3 1013.2 646.3 1016.8 650.3 1020.4 654.5 1024 658.8 1027.4 663.2 1030.9 667.7 1034.2 672.2 1037.5 676.9 1040.7 681.6 1043.8 686.4 1046.8 691.3 1049.8 696.2 1052.7 701.2 1055.5 706.3 1058.2 711.4 1060.8 716.5 1063.3 721.7 1065.7 727 1068 732.2 1070.3 737.4 1072.5 742.5 1074.7 747.6 1076.7 752.7 1078.6 757.8 1080.4 762.9 1082.1 767.9 1083.6 772.9 1085.1 777.9 1086.4 782.9 1087.5 787.8 1088.6 792.7 1089.5 797.5 1090.3 802.3 1091 807 1091.5 811.7 1092 816.2 1092.3 820.7 1092.4 825.1 1092.5 829.4 1092.4 833.7 1092.2 837.8 1091.9 841.8 1091.5 845.7 1090.9 849.5 1090.3 853.2 1089.5 856.7 1088.6 860.1 1087.7 863.3 1086.6 866.4 1085.5 869.3 1084.3 872.1 1083 874.6 1081.7 876.8" stroke="#0a0a0a" stroke-width="1.2"/><path d="M873.5 637.9 875.4 636.9 877.3 636 879.2 635.2 881.2 634.5 883.3 633.8 885.5 633.2 887.7 632.8 890 632.4 892.4 632.1 894.8 631.9 897.3 631.9 899.9 631.9 902.6 632 905.3 632.3 908.1 632.6 911 633.1 913.9 633.7 916.9 634.4 919.9 635.3 923 636.3 926.2 637.3 929.3 638.6 932.6 639.9 935.8 641.4 939.1 643" stroke="#0a0a0a" stroke-width="1.2"/><g clip-path="url(#c21)"><g filter="url(#bl)"><path d="M788.3 630.6 807.3 621.2 828 616.3 849.6 615.7 871.3 619.3 892.8 626.4 913.9 636.8 934.2 650.1 953.6 666 971.7 684.1 988.3 704 1003.1 725.4" stroke="url(#s410)" stroke-width="6.1"/><path d="M790.7 634.2 808.8 625.2 828.6 620.5 849.3 620 870.3 623.4 891.2 630.4 911.8 640.5 931.7 653.6 950.7 669.2 968.5 687 984.9 706.6 999.5 727.7" stroke="url(#s411)" stroke-width="4.3"/><path d="M793 637.8 810.2 629.3 829.1 624.9 848.9 624.4 869.2 627.7 889.5 634.4 909.6 644.3 929.1 657.1 947.8 672.4 965.3 689.9 981.4 709.3 995.8 730" stroke="url(#s412)" stroke-width="6.2"/><path d="M796.3 642.9 812.3 635 829.9 630.8 848.5 630.4 867.8 633.5 887.2 639.9 906.6 649.5 925.5 661.9 943.7 676.9 960.9 694 976.6 712.9 990.7 733.2" stroke="url(#s413)" stroke-width="7.6"/><path d="M800.1 648.8 814.6 641.6 830.7 637.8 848 637.4 866.1 640.3 884.5 646.5 903.1 655.6 921.4 667.6 939 682.1 955.6 698.7 971 717.2 984.7 737" stroke="url(#s414)" stroke-width="8.3"/><path d="M804.1 655 817.1 648.6 831.7 645.2 847.5 644.8 864.3 647.5 881.7 653.3 899.4 662.1 917 673.6 934 687.6 950.2 703.7 965.1 721.6 978.5 740.9" stroke="url(#s415)" stroke-width="8.3"/><path d="M808 661 819.5 655.3 832.5 652.2 847 651.8 862.6 654.4 879 659.8 895.9 668.2 912.8 679.2 929.3 692.8 944.9 708.5 959.5 725.9 972.5 744.7" stroke="url(#s416)" stroke-width="7.6"/><path d="M811.2 666 821.5 660.9 833.3 658.1 846.5 657.8 861.1 660.2 876.7 665.4 892.9 673.4 909.2 684.1 925.2 697.2 940.5 712.5 954.7 729.5 967.4 747.9" stroke="url(#s417)" stroke-width="6.2"/><path d="M813.6 669.7 823 665 833.8 662.4 846.2 662.2 860.1 664.4 875 669.4 890.7 677.1 906.6 687.6 922.3 700.4 937.3 715.4 951.2 732.2 963.8 750.2" stroke="url(#s418)" stroke-width="4.3"/><path d="M815.9 673.3 824.5 669 834.4 666.7 845.9 666.4 859 668.6 873.4 673.4 888.6 680.9 904.1 691 919.4 703.6 934.1 718.3 947.8 734.8 960.1 752.5" stroke="url(#s419)" stroke-width="6.1"/><path d="M996.4 715.2 1010.2 737.2 1021.8 759.9 1031.2 783 1038 806.1 1042.2 828.7 1043.6 850.7 1042 871.5 1037.1 891 1028.6 908.7 1016 923.6 999.9 934.5" stroke="url(#s420)" stroke-width="6.1"/><path d="M992.8 717.6 1006.4 739.3 1017.9 761.7 1027.1 784.4 1033.9 807.1 1038 829.3 1039.3 850.6 1037.8 870.8 1033.1 889.6 1024.9 906.4 1013.2 920.4 998 930.7" stroke="url(#s421)" stroke-width="4.3"/><path d="M989.3 720.1 1002.6 741.4 1014 763.5 1023 785.9 1029.6 808.1 1033.7 829.8 1035 850.6 1033.5 870.2 1029 888.1 1021.3 904 1010.2 917.2 996.1 926.8" stroke="url(#s422)" stroke-width="6.2"/><path d="M984.3 723.5 997.4 744.4 1008.5 766 1017.4 787.9 1023.8 809.5 1027.7 830.6 1029 850.6 1027.6 869.2 1023.3 886.1 1016.2 900.8 1006.2 912.8 993.5 921.4" stroke="url(#s423)" stroke-width="7.6"/><path d="M978.5 727.5 991.3 747.9 1002.1 768.9 1010.7 790.2 1016.9 811.2 1020.7 831.5 1021.9 850.6 1020.6 868.1 1016.7 883.7 1010.3 897 1001.4 907.5 990.4 915" stroke="url(#s424)" stroke-width="8.3"/><path d="M972.4 731.7 984.9 751.6 995.4 772 1003.7 792.6 1009.7 812.9 1013.3 832.4 1014.5 850.6 1013.3 867 1009.7 881.2 1004 893 996.4 902.1 987.2 908.3" stroke="url(#s425)" stroke-width="8.3"/><path d="M966.6 735.7 978.7 755 988.9 775 997 795 1002.9 814.6 1006.3 833.3 1007.5 850.5 1006.3 865.9 1003.1 878.9 998.1 889.2 991.7 896.8 984.1 902" stroke="url(#s426)" stroke-width="7.6"/><path d="M961.7 739.2 973.5 758 983.5 777.5 991.4 797 997 816 1000.4 834 1001.5 850.5 1000.4 864.9 997.4 876.8 993 886 987.7 892.4 981.5 896.6" stroke="url(#s427)" stroke-width="6.2"/><path d="M958.1 741.6 969.7 760.2 979.5 779.3 987.3 798.4 992.8 817 996.1 834.6 997.1 850.5 996.1 864.3 993.3 875.4 989.3 883.6 984.7 889.2 979.6 892.7" stroke="url(#s428)" stroke-width="4.3"/><path d="M954.5 744.1 966 762.3 975.6 781.1 983.2 799.8 988.6 818 991.8 835.1 992.8 850.5 991.8 863.6 989.3 873.9 985.7 881.3 981.8 886 977.7 888.8" stroke="url(#s429)" stroke-width="6.1"/></g></g><path d="M793.5 629.5 797.4 627.4 801.4 625.5 805.4 623.8 809.6 622.3 813.9 621 818.2 619.8 822.5 618.9 826.9 618.2 831.4 617.7 835.9 617.4 840.4 617.2 844.9 617.3 849.4 617.5 854 617.9 858.6 618.5 863.1 619.3 867.5 620.3 871.8 621.5 876 622.8 880.3 624.3 884.5 626 888.8 627.8 893 629.7 897.2 631.8 901.3 634 905.5 636.4 909.6 638.9 913.7 641.6 917.8 644.3 921.8 647.2 925.8 650.3 929.8 653.4 933.8 656.7 937.7 660.1 941.6 663.6 945.4 667.3 949.2 671.1 952.9 674.9 956.6 678.9 960.3 683 963.9 687.2 967.4 691.5 970.9 695.8 974.3 700.3 977.6 704.9 980.9 709.5 984.1 714.2 987.2 719 990.3 723.9 993.2 728.9 996.1 733.9 998.9 738.9 1001.6 744 1004.2 749.2 1006.7 754.4 1009.1 759.6 1011.4 764.9 1013.7 770.1 1016 775.2 1018.1 780.3 1020.2 785.3 1022.1 790.4 1023.9 795.5 1025.5 800.6 1027.1 805.6 1028.5 810.6 1029.8 815.6 1031 820.5 1032 825.4 1033 830.2 1033.8 834.9 1034.4 839.7 1035 844.3 1035.4 848.9 1035.7 853.3 1035.9 857.8 1035.9 862.1 1035.8 866.3 1035.7 870.4 1035.3 874.4 1034.9 878.3 1034.4 882.1 1033.7 885.8 1033 889.3 1032.1 892.7 1031.1 896 1030.1 899.1 1028.9 902 1027.7 904.7 1026.4 907.2 1025.1 909.5" stroke="#0a0a0a" stroke-width="1.2"/><path d="M816.9 670.6 818.8 669.6 820.7 668.7 822.7 667.8 824.7 667.1 826.8 666.4 828.9 665.9 831.2 665.4 833.5 665 835.8 664.8 838.3 664.6 840.8 664.5 843.4 664.5 846 664.7 848.8 664.9 851.6 665.3 854.4 665.8 857.4 666.4 860.3 667.1 863.4 667.9 866.5 668.9 869.6 670 872.8 671.2 876 672.5 879.2 674 882.5 675.6" stroke="#0a0a0a" stroke-width="1.2"/><g clip-path="url(#c22)"><g filter="url(#bl)"><path d="M986.6 871.2 986.8 891.1 984.4 910 979 927.7 970.4 943.7 958.4 957.2 943.3 967.2" stroke="url(#s430)" stroke-width="6.1"/><path d="M982.4 871.5 982.6 890.9 980.2 909.2 975 926.1 966.9 941.3 955.6 954 941.5 963.3" stroke="url(#s431)" stroke-width="4.3"/><path d="M978 871.8 978.2 890.6 975.9 908.3 971 924.4 963.3 938.8 952.7 950.7 939.5 959.4" stroke="url(#s432)" stroke-width="6.2"/><path d="M972 872.2 972.2 890.3 970 907 965.5 922.2 958.4 935.4 948.8 946.2 936.9 954" stroke="url(#s433)" stroke-width="7.6"/><path d="M965 872.7 965.2 889.9 963.1 905.6 958.9 919.5 952.6 931.4 944.1 940.8 933.8 947.7" stroke="url(#s434)" stroke-width="8.3"/><path d="M957.6 873.2 957.8 889.5 955.9 904 952.1 916.7 946.5 927.1 939.3 935.3 930.6 941" stroke="url(#s435)" stroke-width="8.3"/><path d="M950.6 873.8 950.7 889.1 949 902.6 945.5 914 940.7 923.1 934.6 929.9 927.5 934.6" stroke="url(#s436)" stroke-width="7.6"/><path d="M944.6 874.2 944.7 888.7 943.1 901.4 940 911.7 935.7 919.7 930.7 925.4 924.9 929.2" stroke="url(#s437)" stroke-width="6.2"/><path d="M940.2 874.5 940.4 888.5 938.8 900.5 935.9 910.1 932.1 917.2 927.8 922.1 923 925.3" stroke="url(#s438)" stroke-width="4.3"/><path d="M936 874.8 936.1 888.2 934.6 899.6 932 908.5 928.6 914.8 925 918.9 921.1 921.5" stroke="url(#s439)" stroke-width="6.1"/></g></g><path d="M978.8 881.4 979.1 885.5 979.3 889.6 979.4 893.7 979.3 897.6 979.2 901.5 978.9 905.2 978.6 908.9 978.2 912.5 977.6 915.9 977 919.3 976.3 922.6 975.4 925.7 974.5 928.7 973.6 931.5 972.5 934.3 971.4 936.8 970.2 939.2 969 941.4 967.8 943.3" stroke="#0a0a0a" stroke-width="1.2"/><polygon points="978.3,882.7 975.1,884.5 971.5,885.9 967.5,887 963.4,887.6 959.2,887.8 955.1,887.5 951.2,886.8 947.6,885.7 944.4,884.2 941.7,882.3 939.6,880.2 938.2,877.9 937.4,875.4 937.4,872.8 938.1,870.2 939.6,867.7 941.6,865.4 944.3,863.3 947.5,861.5 951.1,860.1 955.1,859 959.2,858.4 963.4,858.2 967.5,858.4 971.4,859.1 975,860.3 978.2,861.8 980.9,863.6 983,865.8 984.4,868.1 985.2,870.6 985.2,873.2 984.5,875.8 983,878.2 981,880.6" fill="#b4b4b4" stroke="#111" stroke-width="1"/><polygon points="978.3,882.7 975.1,884.5 971.5,885.9 967.5,887 963.4,887.6 959.2,887.8 955.1,887.5 951.2,886.8 947.6,885.7 944.4,884.2 941.7,882.3 939.6,880.2 938.2,877.9 937.4,875.4 937.4,872.8 938.1,870.2 939.6,867.7 941.6,865.4 944.3,863.3 947.5,861.5 951.1,860.1 955.1,859 959.2,858.4 963.4,858.2 967.5,858.4 971.4,859.1 975,860.3 978.2,861.8 980.9,863.6 983,865.8 984.4,868.1 985.2,870.6 985.2,873.2 984.5,875.8 983,878.2 981,880.6" fill="none" stroke="#f4f4f4" stroke-width="1" stroke-dasharray="1.5 1.5"/><path d="M961.3 873 L1001 851.5" stroke="#f2f2f2" stroke-width="1"/><path d="M1559.5 515 1559.7 517 1560.3 518.8 1561.3 520.6 1562.7 522.3 1564.5 523.8 1566.5 525.2 1568.9 526.3 1571.5 527.3 1574.3 528 1577.3 528.5 1580.4 528.7 1583.5 528.7 1586.6 528.5 1589.7 527.9 1592.7 527.2 1595.5 526.2 1598.1 525 1600.4 523.6 1600.4 523.6 1602.5 522.1 1604.2 520.4 1605.6 518.6 1606.6 516.7 1607.2 514.8" stroke="#111" stroke-width="1.2"/><g stroke="#e6e6e6" stroke-width="1" fill="none"><path d="M1183 1133 L1090.0 1079.2 M377.0 666.6 L284 612.8"/><path d="M1090.0 1079.2 L377.0 666.6" stroke-dasharray="3.8 5.6"/></g></g><path d="M1223 585 l3 4 l3 -4 M1226 589 v4" stroke="#e02020" stroke-width="1" fill="none"/></svg>
<svg class="a" style="left:64px;top:113px" width="24" height="24" viewBox="0 0 24 24"><rect x=".5" y=".5" width="23" height="23" fill="#7f8192" stroke="#8a8c9c"/><rect x="4" y="5" width="16" height="3" fill="#4a6090"/><rect x="4" y="10.5" width="16" height="3" fill="#4a6090"/><rect x="4" y="16" width="16" height="3" fill="#4a6090"/></svg><svg class="a" style="left:92px;top:113px" width="24" height="24" viewBox="0 0 24 24"><rect x=".5" y=".5" width="23" height="23" fill="#7f8192" stroke="#8a8c9c"/><rect x="7" y="7" width="10" height="10" fill="#e4ecf8" stroke="#444" stroke-width=".8"/><g fill="#40c040"><rect x="3" y="3" width="4" height="4"/><rect x="17" y="3" width="4" height="4"/><rect x="3" y="17" width="4" height="4"/><rect x="17" y="17" width="4" height="4"/></g></svg><svg class="a" style="left:120px;top:113px" width="24" height="24" viewBox="0 0 24 24"><rect x=".5" y=".5" width="23" height="23" fill="#7f8192" stroke="#8a8c9c"/><circle cx="13" cy="11" r="5" fill="#b8d0e8" stroke="#8aa8c8" stroke-width="1.3"/><path d="M9 15 L5 19" stroke="#ccc" stroke-width="2.4"/><path d="M4 8 h5 M3 11 h5 M4 14 h5" stroke="#aab" stroke-width="1.2"/></svg><svg class="a" style="left:148px;top:113px" width="24" height="24" viewBox="0 0 24 24"><rect x=".5" y=".5" width="23" height="23" fill="#7f8192" stroke="#8a8c9c"/><path d="M3 15 L12 9 L21 14 L12 20z" fill="none" stroke="#777" stroke-width=".6"/><path d="M11 15 V3" stroke="#2a7ae8" stroke-width="1.8"/><path d="M9 5 l2 -3 l2 3z" fill="#2a7ae8"/><path d="M11 15 L20 9" stroke="#40c040" stroke-width="1.6"/><path d="M11 15 L19 20" stroke="#e02020" stroke-width="1.8"/><circle cx="11" cy="15" r="1.8" fill="#eee"/></svg><svg class="a" style="left:176px;top:113px" width="24" height="24" viewBox="0 0 24 24"><rect x=".5" y=".5" width="23" height="23" fill="#7f8192" stroke="#8a8c9c"/><path d="M3.3,6.9 12.5,3.3 21.7,6.9 21.7,16.3 12.5,21.3 3.3,16.3Z M3.3,6.9 12.5,10.5 21.7,6.9 M12.5,10.5 12.5,21.3 M3.3,16.3 12.5,11.3 21.7,16.3 M12.5,3.3 12.5,11.3" fill="none" stroke="#111" stroke-width="1.25"/><polygon points="3.3,6.9 12.5,3.3 21.7,6.9 12.5,10.5" fill="#44d034" stroke="#111" stroke-width="1.25" stroke-linejoin="round"/></svg><svg class="a" style="left:204px;top:113px" width="24" height="24" viewBox="0 0 24 24"><rect x=".5" y=".5" width="23" height="23" fill="#7f8192" stroke="#8a8c9c"/><path d="M3.3,6.9 12.5,3.3 21.7,6.9 21.7,16.3 12.5,21.3 3.3,16.3Z M3.3,6.9 12.5,10.5 21.7,6.9 M12.5,10.5 12.5,21.3 M3.3,16.3 12.5,11.3 21.7,16.3 M12.5,3.3 12.5,11.3" fill="none" stroke="#111" stroke-width="1.25"/><polygon points="3.3,16.3 12.5,11.3 21.7,16.3 12.5,21.3" fill="#44d034" stroke="#111" stroke-width="1.25" stroke-linejoin="round"/></svg><svg class="a" style="left:232px;top:113px" width="24" height="24" viewBox="0 0 24 24"><rect x=".5" y=".5" width="23" height="23" fill="#7f8192" stroke="#8a8c9c"/><path d="M3.3,6.9 12.5,3.3 21.7,6.9 21.7,16.3 12.5,21.3 3.3,16.3Z M3.3,6.9 12.5,10.5 21.7,6.9 M12.5,10.5 12.5,21.3 M3.3,16.3 12.5,11.3 21.7,16.3 M12.5,3.3 12.5,11.3" fill="none" stroke="#111" stroke-width="1.25"/><polygon points="12.5,3.3 3.3,6.9 3.3,16.3 12.5,11.3" fill="#44d034" stroke="#111" stroke-width="1.25" stroke-linejoin="round"/></svg><svg class="a" style="left:260px;top:113px" width="24" height="24" viewBox="0 0 24 24"><rect x=".5" y=".5" width="23" height="23" fill="#7f8192" stroke="#8a8c9c"/><path d="M3.3,6.9 12.5,3.3 21.7,6.9 21.7,16.3 12.5,21.3 3.3,16.3Z M3.3,6.9 12.5,10.5 21.7,6.9 M12.5,10.5 12.5,21.3 M3.3,16.3 12.5,11.3 21.7,16.3 M12.5,3.3 12.5,11.3" fill="none" stroke="#111" stroke-width="1.25"/><polygon points="12.5,10.5 21.7,6.9 21.7,16.3 12.5,21.3" fill="#44d034" stroke="#111" stroke-width="1.25" stroke-linejoin="round"/></svg><svg class="a" style="left:288px;top:113px" width="24" height="24" viewBox="0 0 24 24"><rect x=".5" y=".5" width="23" height="23" fill="#7f8192" stroke="#8a8c9c"/><path d="M3.3,6.9 12.5,3.3 21.7,6.9 21.7,16.3 12.5,21.3 3.3,16.3Z M3.3,6.9 12.5,10.5 21.7,6.9 M12.5,10.5 12.5,21.3 M3.3,16.3 12.5,11.3 21.7,16.3 M12.5,3.3 12.5,11.3" fill="none" stroke="#111" stroke-width="1.25"/><polygon points="3.3,6.9 12.5,10.5 12.5,21.3 3.3,16.3" fill="#44d034" stroke="#111" stroke-width="1.25" stroke-linejoin="round"/></svg><svg class="a" style="left:316px;top:113px" width="24" height="24" viewBox="0 0 24 24"><rect x=".5" y=".5" width="23" height="23" fill="#7f8192" stroke="#8a8c9c"/><path d="M3.3,6.9 12.5,3.3 21.7,6.9 21.7,16.3 12.5,21.3 3.3,16.3Z M3.3,6.9 12.5,10.5 21.7,6.9 M12.5,10.5 12.5,21.3 M3.3,16.3 12.5,11.3 21.7,16.3 M12.5,3.3 12.5,11.3" fill="none" stroke="#111" stroke-width="1.25"/><polygon points="12.5,3.3 21.7,6.9 21.7,16.3 12.5,11.3" fill="#44d034" stroke="#111" stroke-width="1.25" stroke-linejoin="round"/></svg><svg class="a" style="left:344px;top:113px" width="24" height="24" viewBox="0 0 24 24"><rect x=".5" y=".5" width="23" height="23" fill="#7f8192" stroke="#8a8c9c"/><polygon points="3.3,6.9 12.5,3.3 21.7,6.9 12.5,10.5" fill="#6ae84a"/><polygon points="3.3,6.9 12.5,10.5 12.5,21.3 3.3,16.3" fill="#3cc02c"/><polygon points="12.5,10.5 21.7,6.9 21.7,16.3 12.5,21.3" fill="#4ad03a"/><path d="M3.3,6.9 12.5,3.3 21.7,6.9 21.7,16.3 12.5,21.3 3.3,16.3Z M3.3,6.9 12.5,10.5 21.7,6.9 M12.5,10.5 12.5,21.3" fill="none" stroke="#1f9a18" stroke-width="1"/></svg><svg class="a" style="left:64px;top:141px" width="24" height="24" viewBox="0 0 24 24"><rect x=".5" y=".5" width="23" height="23" fill="#7f8192" stroke="#8a8c9c"/><g transform="translate(6 4)"><path d="M1 3.2 v9.6 a5.0 2.2 0 0 0 10 0 v-9.6" fill="none" stroke="#222" stroke-width="1"/><ellipse cx="6.0" cy="3.2" rx="5.0" ry="2.2" fill="none" stroke="#222" stroke-width="1"/></g></svg><svg class="a" style="left:64px;top:169px" width="24" height="24" viewBox="0 0 24 24"><rect x=".5" y=".5" width="23" height="23" fill="#7f8192" stroke="#8a8c9c"/><g transform="translate(6 4)"><path d="M1 3.2 v9.6 a5.0 2.2 0 0 0 10 0 v-9.6" fill="none" stroke="#222" stroke-width="1"/><ellipse cx="6.0" cy="3.2" rx="5.0" ry="2.2" fill="none" stroke="#222" stroke-width="1"/></g></svg><svg class="a" style="left:64px;top:197px" width="24" height="24" viewBox="0 0 24 24"><rect x=".5" y=".5" width="23" height="23" fill="#b0a070" stroke="#e8c860"/><g transform="translate(6 4)"><defs></defs><path d="M1 3.2 v9.6 a5.0 2.2 0 0 0 10 0 v-9.6Z" fill="#3a68c0" stroke="#222" stroke-width=".8"/><rect x="3" y="4.2" width="3" height="8.6" fill="#a8c8f0" opacity=".8"/><ellipse cx="6.0" cy="3.2" rx="5.0" ry="2.2" fill="#a8c8f0" stroke="#222" stroke-width=".8"/></g></svg><svg class="a" style="left:64px;top:225px" width="24" height="24" viewBox="0 0 24 24"><rect x=".5" y=".5" width="23" height="23" fill="#7f8192" stroke="#8a8c9c"/><g transform="translate(6 4)"><path d="M1 3.2 v9.6 a5.0 2.2 0 0 0 10 0 v-9.6" fill="#dfe8f6" stroke="#333" stroke-width="1"/><ellipse cx="6.0" cy="3.2" rx="5.0" ry="2.2" fill="#dfe8f6" stroke="#333" stroke-width="1"/></g></svg><svg class="a" style="left:64px;top:253px" width="24" height="24" viewBox="0 0 24 24"><rect x=".5" y=".5" width="23" height="23" fill="#7f8192" stroke="#8a8c9c"/><g transform="translate(6 4)"><path d="M1 3.2 v9.6 a5.0 2.2 0 0 0 10 0 v-9.6" fill="none" stroke="#222" stroke-width="1"/><ellipse cx="6.0" cy="3.2" rx="5.0" ry="2.2" fill="none" stroke="#222" stroke-width="1"/><path d="M3.5 5 L5.5 15 M7.5 5 L4.5 15 M8.5 6 L9.5 15" stroke="#222" stroke-width=".7"/></g></svg>
<svg class="a" style="left:100px;top:860px" width="80" height="110" viewBox="0 0 80 110">
<polygon points="21,60.4 38,51.4 38.4,88.8 21,80" fill="#c8d4e8" fill-opacity=".3"/>
<path d="M21 60.4 L38 51.4 M21 62.4 L38 71" stroke="#e8e8e8" stroke-width=".9" stroke-dasharray="1.5 1"/><path d="M38.3 51.4 V88" stroke="#ddd" stroke-width=".9"/>
<polygon points="23,80 38.4,71.7 55,81.8 41,90.8" fill="#a0a860" fill-opacity=".65" stroke="#f0f000" stroke-width=".9" stroke-dasharray="1.5 .8"/>
<path d="M19.8 81 V29" stroke="#10a0a8" stroke-width="1.4"/><path d="M15.7 30 L19.8 21 L24 30 Z" fill="#20d8e8"/>
<path d="M15.7 11 h6.5 l-6.5 8 h6.8" fill="none" stroke="#d8d8d8" stroke-width="1"/>
<path d="M22 80 L48 65.5" stroke="#18c018" stroke-width="1.8"/><path d="M44 62 L55.8 61.4 L49 70 Z" fill="#10c010"/>
<path d="M22 83.5 L39 92.5" stroke="#e81010" stroke-width="2.2"/><path d="M37 88.5 L45 96 L35 95.5 Z" fill="#e01010"/>
<circle cx="19.4" cy="81.8" r="3.4" fill="#6a6a6a"/>
<path d="M56 54 l3.4 4.4 l3.4 -4.4 M59.4 58.4 v4.3" fill="none" stroke="#e81010" stroke-width="1.1"/>
<path d="M45 95 l7.8 8.8 M52.8 95 l-7.8 8.8" stroke="#e0e0e0" stroke-width=".9"/></svg>
<svg class="a" style="left:886px;top:504px" width="150" height="40" viewBox="0 0 150 40">
<defs><linearGradient id="wm" x1="0" y1="0" x2="0" y2="1"><stop offset="0" stop-color="#f06a1c"/><stop offset="1" stop-color="#f8a81c"/></linearGradient>
<linearGradient id="wm2" x1="0" y1="0" x2="1" y2="0"><stop offset="0" stop-color="#f8b020"/><stop offset=".5" stop-color="#f07a20"/><stop offset="1" stop-color="#f8b020"/></linearGradient></defs>
<g fill="url(#wm)">
<path d="M5 13 L7.4 13 L7.4 34 L5 36 Z"/>
<path d="M8.4 8 L10.5 9.5 L11.8 11 L11.8 31 L20 34.5 L16 34.8 L8.4 32.5 Z"/>
<path d="M12.8 4 L15 5.5 L16.6 8 L16.6 28 L22.5 33.5 L20.5 34.5 L12.8 30 Z"/>
<path d="M51 13 L48.6 13 L48.6 34 L51 36 Z"/>
<path d="M47.6 8 L45.5 9.5 L44.2 11 L44.2 31 L36 34.5 L40 34.8 L47.6 32.5 Z"/>
<path d="M43.2 4 L41 5.5 L39.4 8 L39.4 28 L33.5 33.5 L35.5 34.5 L43.2 30 Z"/>
<path d="M5 36 L51 36 L51 34 Q40 32.5 33 34 L23 34 Q16 32.5 5 34 Z"/>
</g>
<path d="M22 33 h12 v3 h-12z" fill="url(#wm2)"/>
<path d="M20.6 22.9 Q16.5 14 21.4 8.8 Q24 6.1 28.2 6.1 L28.2 23.5 Q32.5 22 33.6 15.3 Q38 19 36.5 24.5 Q34 30 28.2 31.7 L26 31.7 L26 13.7 Q22 15 20.6 22.9 Z" fill="url(#wm2)"/>
<text x="60.5" y="24.5" font-size="16.6" fill="#f5882c" font-family="Liberation Sans">智造资料网</text>
<text x="60.7" y="34" font-size="4.9" fill="#f08a30" font-family="Liberation Sans" font-weight="bold" textLength="82" lengthAdjust="spacingAndGlyphs">INTELLIGENT MANUFACTURING DATA</text></svg>
<div class="a" style="left:2px;top:1020px;width:1918px;height:1px;background:#a2a6ae"></div><div class="a" style="left:1341px;top:1003px;width:122px;height:15px;background:#fff"></div><svg class="a" style="left:1459px;top:1003px" width="14" height="14" viewBox="0 0 14 14"><circle cx="8" cy="6" r="4" fill="none" stroke="#3a78d8" stroke-width="1.4"/><path d="M5 9 L1 13" stroke="#3a78d8" stroke-width="1.8"/></svg><div class="a" style="left:1337px;top:1003px;width:2px;height:15px;background:repeating-linear-gradient(#fff 0 1px,#9aa0ae 1px 2px,transparent 2px 3px)"></div><div class="a" style="left:1474px;top:1003px;width:2px;height:15px;background:repeating-linear-gradient(#fff 0 1px,#9aa0ae 1px 2px,transparent 2px 3px)"></div><div class="a" style="left:1659px;top:1003px;width:2px;height:15px;background:repeating-linear-gradient(#fff 0 1px,#9aa0ae 1px 2px,transparent 2px 3px)"></div><div class="a t" style="left:1486px;top:1004px;font-size:12.8px;color:#000;font-weight:normal">绝对 XY 上视图</div><div class="a" style="left:1592px;top:1003px;width:1px;height:16px;background:#a8acb4;border-right:1px solid #f4f6fa"></div><div class="a t" style="left:1600px;top:1004px;font-size:12.8px;color:#000;font-weight:normal">绝对视图</div><div class="a t" style="left:1668px;top:1004px;font-size:12.5px;color:#000;font-weight:bold">LAYER0</div><div class="a" style="left:1725px;top:1003px;width:1px;height:16px;background:#a8acb4;border-right:1px solid #f4f6fa"></div><div class="a" style="left:1756px;top:1003px;width:1px;height:16px;background:#a8acb4;border-right:1px solid #f4f6fa"></div><div class="a" style="left:1800px;top:1003px;width:1px;height:16px;background:#a8acb4;border-right:1px solid #f4f6fa"></div><div class="a" style="left:1843px;top:1003px;width:1px;height:16px;background:#a8acb4;border-right:1px solid #f4f6fa"></div><div class="a" style="left:1887px;top:1003px;width:1px;height:16px;background:#a8acb4;border-right:1px solid #f4f6fa"></div><div class="a" style="left:1762px;top:1005px;width:32px;height:12px;background:#46618e"></div><div class="a" style="left:1805px;top:1005px;width:32px;height:12px;background:#46618e"></div><div class="a" style="left:1848px;top:1005px;width:32px;height:12px;background:#46618e"></div><svg class="a" style="left:1894px;top:1002px" width="14" height="14" viewBox="0 0 14 14"><circle cx="7" cy="7" r="6.3" fill="#1a58d8"/><path d="M3 4 Q6 2 7 5 Q5 8 8 9 Q7 12 4 11 Q2 8 3 4z M9 2 Q13 4 12 8 Q10 7 9 2z" fill="#30c030"/></svg><div class="a" style="left:1132px;top:1023px;width:1px;height:15px;background:#a8acb4;border-right:1px solid #f4f6fa"></div><div class="a" style="left:1176px;top:1023px;width:1px;height:15px;background:#a8acb4;border-right:1px solid #f4f6fa"></div><div class="a" style="left:1207px;top:1023px;width:1px;height:15px;background:#a8acb4;border-right:1px solid #f4f6fa"></div><div class="a" style="left:1238px;top:1023px;width:1px;height:15px;background:#a8acb4;border-right:1px solid #f4f6fa"></div><div class="a" style="left:1268px;top:1023px;width:1px;height:15px;background:#a8acb4;border-right:1px solid #f4f6fa"></div><div class="a" style="left:1299px;top:1023px;width:1px;height:15px;background:#a8acb4;border-right:1px solid #f4f6fa"></div><div class="a" style="left:1331px;top:1023px;width:1px;height:15px;background:#a8acb4;border-right:1px solid #f4f6fa"></div><div class="a" style="left:1361px;top:1023px;width:1px;height:15px;background:#a8acb4;border-right:1px solid #f4f6fa"></div><div class="a" style="left:1423px;top:1023px;width:1px;height:15px;background:#a8acb4;border-right:1px solid #f4f6fa"></div><div class="a" style="left:1456px;top:1023px;width:1px;height:15px;background:#a8acb4;border-right:1px solid #f4f6fa"></div><div class="a" style="left:1580px;top:1023px;width:1px;height:15px;background:#a8acb4;border-right:1px solid #f4f6fa"></div><div class="a" style="left:1654px;top:1023px;width:1px;height:15px;background:#a8acb4;border-right:1px solid #f4f6fa"></div><div class="a t" style="left:1140px;top:1025px;font-size:12.8px;color:#000;font-weight:normal">拴牢</div><svg class="a" style="left:1182px;top:1022px" width="17" height="17" viewBox="0 0 17 17"><rect x=".5" y=".5" width="16" height="16" fill="#c8ccd8" stroke="#707888"/><path d="M4 7 Q5 3 9 3 Q12 3 13 6 M13 10 Q12 14 8 14 Q5 14 4 11" fill="none" stroke="#e04050" stroke-width="1.6"/><path d="M11 4 l3 2 l-3 1z M6 13 l-3 -2 l3 -1z" fill="#e04050"/></svg><svg class="a" style="left:1212px;top:1022px" width="18" height="17" viewBox="0 0 18 17"><rect width="18" height="17" fill="#fbe080"/><path d="M3 2 l4 3 l3 -3 l1 5 l5 1 l-4 3 l1 4 l-4 -2 l-3 3 l-1 -4z" fill="#c050d0" opacity=".8"/><path d="M9 8 l7 7 l-3 0 l-2 2z" fill="#eee" stroke="#777" stroke-width=".7"/></svg><svg class="a" style="left:1245px;top:1022px" width="16" height="16" viewBox="0 0 16 16"><path d="M2 7 L8 2 Q13 1 14 4 L9 8z" fill="#e0b050" stroke="#9a7030" stroke-width=".6"/><rect x="2" y="8" width="9" height="7" fill="#e8eef8" stroke="#556" stroke-width=".8"/><circle cx="5" cy="11" r="1.3" fill="#3a78d8"/><circle cx="8" cy="13" r="1.3" fill="#3a78d8"/></svg><svg class="a" style="left:1277px;top:1021px" width="16" height="18" viewBox="0 0 16 18"><text x="8" y="14" font-size="15" font-weight="bold" text-anchor="middle" fill="#3a6ad0" font-family="Liberation Sans">?</text><ellipse cx="8" cy="16" rx="4.5" ry="1.4" fill="#888" opacity=".6"/></svg><svg class="a" style="left:1305px;top:1022px" width="18" height="17" viewBox="0 0 18 17"><path d="M3 3 L7 1 L11 3 L7 5z" fill="#7ab0f0"/><path d="M3 3 L7 5 V10 L3 8z" fill="#3a7ad8"/><path d="M11 3 L7 5 V10 L11 8z" fill="#2a5ab0"/><path d="M9 9 L13 7 L17 9 V14 L13 16 L9 14z" fill="#5a9aa8" stroke="#234" stroke-width=".7"/><path d="M0 12 h7 M4 9 l3 3 l-3 3" stroke="#e01010" stroke-width="1.6" fill="none"/></svg><svg class="a" style="left:1336px;top:1022px" width="18" height="17" viewBox="0 0 18 17"><rect width="18" height="17" fill="#fbe080"/><path d="M3 4 L9 1 L15 4 L9 7z" fill="#d040f0"/><path d="M3 4 L9 7 V16 L3 13z" fill="#8aa8a0" stroke="#2a5ad0" stroke-width=".8"/><path d="M15 4 L9 7 V16 L15 13z" fill="#7a9890" stroke="#2a5ad0" stroke-width=".8"/></svg><svg class="a" style="left:1429px;top:1022px" width="17" height="16" viewBox="0 0 17 16"><rect x=".5" y=".5" width="16" height="15" fill="none" stroke="#556"/><path d="M1 8 h15 M8 1 v15" stroke="#556"/></svg><div class="a t" style="left:1463px;top:1025px;font-size:12.5px;color:#000;font-weight:normal">LS: 1.00 PS: 1.00</div><div class="a t" style="left:1589px;top:1025px;font-size:12.8px;color:#000;font-weight:normal">单位: 毫米</div><div class="a t" style="left:1663px;top:1025px;font-size:12.5px;color:#e01818;font-weight:normal">X =-0042.156</div><div class="a t" style="left:1744.5px;top:1025px;font-size:12.5px;color:#000;font-weight:normal">Y = 0008.369 Z = 0000.000</div>
<svg class="a" style="left:1340px;top:962px" width="125" height="80" viewBox="0 0 125 80">
<circle cx="27.6" cy="43.4" r="8.2" fill="#a26a58"/><text x="27.6" y="48.2" font-size="13" text-anchor="middle" fill="#fff" font-family="Liberation Sans">A</text>
<circle cx="34.6" cy="64" r="8.3" fill="#9a6a58"/><path d="M29 60.5 l3.5 -2.5 h4.2 l3.5 2.5 l-1.6 3.2 h-1.3 v5 h-6 v-5 h-1.3z" fill="#fff"/>
<ellipse cx="65.5" cy="75.5" rx="15" ry="2.2" fill="#b07850" opacity=".8"/>
<path d="M50 58 Q47 60 48 64 Q51 66 54 62 L55 70 Q56 75 60 75 L63 74 L64 71 L68 71 L69 75 L73 75 Q76 73 75 69 L76 63 Q80 66 83 64 Q84 60 80 56 Q66 52 50 58z" fill="#f8ec48" stroke="#d89830" stroke-width=".7"/>
<path d="M66 58 L76 55 M70 70 L80 57" stroke="#b07840" stroke-width="1"/>
<circle cx="56.2" cy="66.5" r="6.8" fill="#c88a4c" stroke="#8a5a30" stroke-width=".7"/><circle cx="51.5" cy="60.5" r="2.4" fill="#c88a4c" stroke="#8a5a30" stroke-width=".6"/><circle cx="61" cy="60.5" r="2.4" fill="#c88a4c" stroke="#8a5a30" stroke-width=".6"/>
<ellipse cx="53" cy="68" rx="1.6" ry="1" fill="#f070a0"/><ellipse cx="59.5" cy="68" rx="1.6" ry="1" fill="#f070a0"/>
<circle cx="50" cy="14.8" r="5.8" fill="#c88a4c" stroke="#8a5a30" stroke-width=".8"/><circle cx="82.8" cy="14.8" r="5.8" fill="#c88a4c" stroke="#8a5a30" stroke-width=".8"/>
<circle cx="50.5" cy="15.5" r="2.6" fill="#f0c0a8"/><circle cx="82.3" cy="15.5" r="2.6" fill="#f0c0a8"/>
<path d="M64.8 11.5 Q62 8 60 5 M67.5 11.5 Q69 8 69.5 5.8" stroke="#8a4a20" stroke-width="1.2" fill="none"/><circle cx="60" cy="5.2" r="2.4" fill="#8a4a20"/><circle cx="69.6" cy="6" r="1.7" fill="#8a4a20"/>
<ellipse cx="66.3" cy="33.2" rx="26.6" ry="21.2" fill="#c88a4c" stroke="#8a5a30" stroke-width=".9"/>
<ellipse cx="66.7" cy="37.9" rx="20.9" ry="17.2" fill="#fbf050" stroke="#b87830" stroke-width=".7"/>
<circle cx="55.8" cy="31.6" r="1.4" fill="#6a3010"/><circle cx="76.9" cy="31.6" r="1.4" fill="#6a3010"/><path d="M65.3 35.6 h2" stroke="#6a3010" stroke-width="1"/>
<ellipse cx="50.7" cy="37.5" rx="3.3" ry="2.6" fill="#f8a030" opacity=".75"/><ellipse cx="81.6" cy="37.5" rx="3.3" ry="2.6" fill="#f8a030" opacity=".75"/>
<path d="M96 10 L101 28 L106 17 L111 28 L115.5 11" fill="none" stroke="#b08060" stroke-width="6.4" stroke-linejoin="round" transform="rotate(-4 106 19)"/>
<path d="M96 10 L101 28 L106 17 L111 28 L115.5 11" fill="none" stroke="#fff" stroke-width="4.6" stroke-linejoin="round" transform="rotate(-4 106 19)"/>
<circle cx="99" cy="15" r="1.3" fill="#d8a070"/><circle cx="108" cy="22" r="1.3" fill="#d8a070"/><circle cx="113" cy="14" r="1.2" fill="#d8a070"/>
<circle cx="106" cy="39" r="10" fill="#d09460" stroke="#8a5a30" stroke-width=".8"/><circle cx="98.5" cy="30" r="3.4" fill="#d09460" stroke="#8a5a30" stroke-width=".7"/><circle cx="114" cy="30" r="3.4" fill="#d09460" stroke="#8a5a30" stroke-width=".7"/>
<ellipse cx="106" cy="40" rx="3" ry="4.3" fill="#fff"/>
<path d="M98 52 L102 68 L106.5 58 L111 68 L115 52" fill="none" stroke="#c09040" stroke-width="6.6" stroke-linejoin="round"/>
<path d="M98 52 L102 68 L106.5 58 L111 68 L115 52" fill="none" stroke="#f8ec48" stroke-width="5" stroke-linejoin="round"/></svg>
<div class="a" style="left:0;top:1040px;width:1920px;height:8px;background:#1c1c1c"></div>
<div class="a" style="left:48px;top:1040px;width:344px;height:8px;background:#f0f0f0;border-top:1px solid #c8c8c8"></div>
<div class="a" style="left:688px;top:1040px;width:44px;height:8px;background:#3c3c3c"></div>
<div class="a" style="left:733px;top:1040px;width:2px;height:8px;background:#444"></div>
<div class="a" style="left:1815px;top:1043px;width:30px;height:5px;overflow:hidden;color:#fff;font-size:12px;line-height:14px">15:08</div><div class="a" style="left:1915px;top:1040px;width:1px;height:8px;background:#5a5a5a"></div>
</body></html>
